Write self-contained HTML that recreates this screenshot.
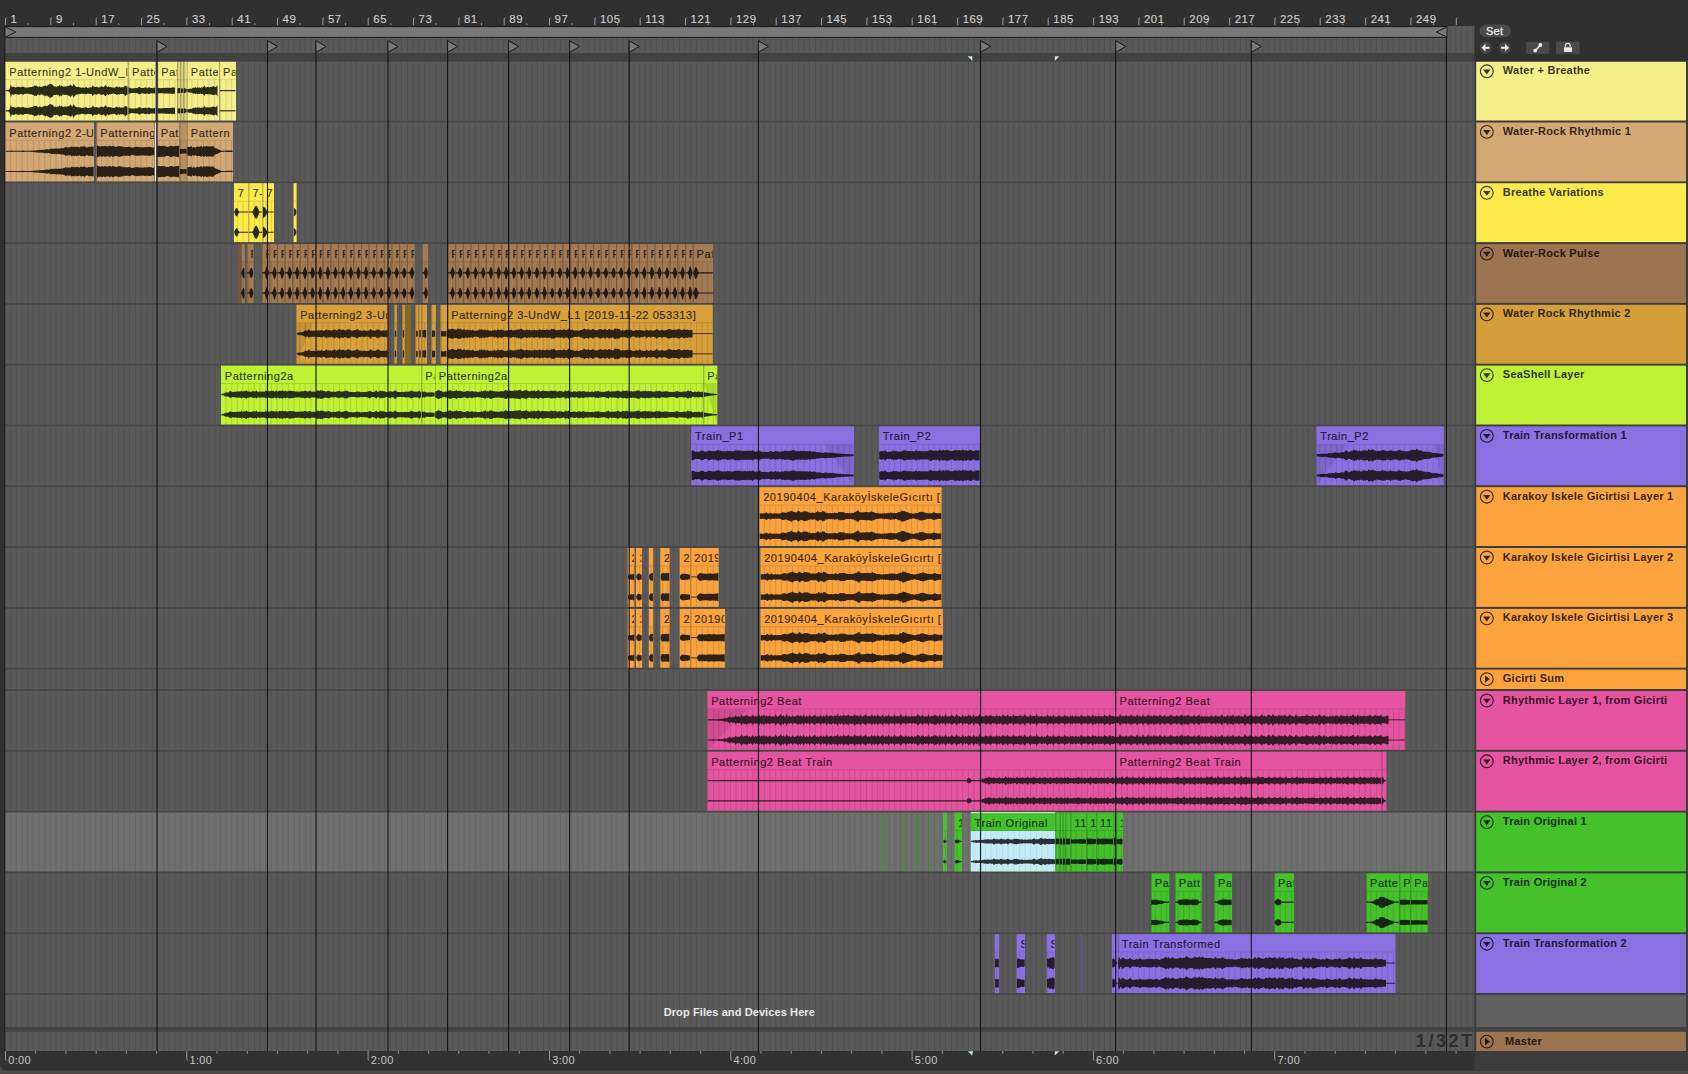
<!DOCTYPE html>
<html><head><meta charset="utf-8"><style>
html,body{margin:0;padding:0;background:#303030;overflow:hidden;width:1688px;height:1074px}
svg{display:block;font-family:"Liberation Sans",sans-serif}
</style></head><body>
<svg width="1688" height="1074" viewBox="0 0 1688 1074">
<rect x="0" y="0" width="1688" height="1074" fill="#303030"/>
<rect x="4" y="26" width="1.5" height="1025" fill="#222"/>
<rect x="5.5" y="38" width="1469.1" height="15" fill="#5a5a5a"/>
<path d="M10.7 38V53M16.3 38V53M22 38V53M27.7 38V53M33.3 38V53M39 38V53M44.7 38V53M50.3 38V53M56 38V53M61.7 38V53M67.3 38V53M73 38V53M78.7 38V53M84.3 38V53M90 38V53M95.7 38V53M101.3 38V53M107 38V53M112.7 38V53M118.3 38V53M124 38V53M129.7 38V53M135.3 38V53M141 38V53M146.7 38V53M152.3 38V53M158 38V53M163.7 38V53M169.3 38V53M175 38V53M180.7 38V53M186.3 38V53M192 38V53M197.7 38V53M203.3 38V53M209 38V53M214.7 38V53M220.3 38V53M226 38V53M231.7 38V53M237.3 38V53M243 38V53M248.7 38V53M254.3 38V53M260 38V53M265.7 38V53M271.3 38V53M277 38V53M282.7 38V53M288.3 38V53M294 38V53M299.7 38V53M305.4 38V53M311 38V53M316.7 38V53M322.4 38V53M328 38V53M333.7 38V53M339.4 38V53M345 38V53M350.7 38V53M356.4 38V53M362 38V53M367.7 38V53M373.4 38V53M379 38V53M384.7 38V53M390.4 38V53M396 38V53M401.7 38V53M407.4 38V53M413 38V53M418.7 38V53M424.4 38V53M430 38V53M435.7 38V53M441.4 38V53M447 38V53M452.7 38V53M458.4 38V53M464 38V53M469.7 38V53M475.4 38V53M481 38V53M486.7 38V53M492.4 38V53M498 38V53M503.7 38V53M509.4 38V53M515 38V53M520.7 38V53M526.4 38V53M532 38V53M537.7 38V53M543.4 38V53M549 38V53M554.7 38V53M560.4 38V53M566 38V53M571.7 38V53M577.4 38V53M583 38V53M588.7 38V53M594.4 38V53M600 38V53M605.7 38V53M611.4 38V53M617 38V53M622.7 38V53M628.4 38V53M634 38V53M639.7 38V53M645.4 38V53M651 38V53M656.7 38V53M662.4 38V53M668 38V53M673.7 38V53M679.4 38V53M685 38V53M690.7 38V53M696.4 38V53M702 38V53M707.7 38V53M713.4 38V53M719 38V53M724.7 38V53M730.4 38V53M736 38V53M741.7 38V53M747.4 38V53M753 38V53M758.7 38V53M764.4 38V53M770 38V53M775.7 38V53M781.4 38V53M787 38V53M792.7 38V53M798.4 38V53M804 38V53M809.7 38V53M815.4 38V53M821 38V53M826.7 38V53M832.4 38V53M838 38V53M843.7 38V53M849.4 38V53M855 38V53M860.7 38V53M866.4 38V53M872.1 38V53M877.7 38V53M883.4 38V53M889.1 38V53M894.7 38V53M900.4 38V53M906.1 38V53M911.7 38V53M917.4 38V53M923.1 38V53M928.7 38V53M934.4 38V53M940.1 38V53M945.7 38V53M951.4 38V53M957.1 38V53M962.7 38V53M968.4 38V53M974.1 38V53M979.7 38V53M985.4 38V53M991.1 38V53M996.7 38V53M1002.4 38V53M1008.1 38V53M1013.7 38V53M1019.4 38V53M1025.1 38V53M1030.7 38V53M1036.4 38V53M1042.1 38V53M1047.7 38V53M1053.4 38V53M1059.1 38V53M1064.7 38V53M1070.4 38V53M1076.1 38V53M1081.7 38V53M1087.4 38V53M1093.1 38V53M1098.7 38V53M1104.4 38V53M1110.1 38V53M1115.7 38V53M1121.4 38V53M1127.1 38V53M1132.7 38V53M1138.4 38V53M1144.1 38V53M1149.7 38V53M1155.4 38V53M1161.1 38V53M1166.7 38V53M1172.4 38V53M1178.1 38V53M1183.7 38V53M1189.4 38V53M1195.1 38V53M1200.7 38V53M1206.4 38V53M1212.1 38V53M1217.7 38V53M1223.4 38V53M1229.1 38V53M1234.7 38V53M1240.4 38V53M1246.1 38V53M1251.7 38V53M1257.4 38V53M1263.1 38V53M1268.7 38V53M1274.4 38V53M1280.1 38V53M1285.7 38V53M1291.4 38V53M1297.1 38V53M1302.7 38V53M1308.4 38V53M1314.1 38V53M1319.7 38V53M1325.4 38V53M1331.1 38V53M1336.7 38V53M1342.4 38V53M1348.1 38V53M1353.7 38V53M1359.4 38V53M1365.1 38V53M1370.7 38V53M1376.4 38V53M1382.1 38V53M1387.7 38V53M1393.4 38V53M1399.1 38V53M1404.7 38V53M1410.4 38V53M1416.1 38V53M1421.8 38V53M1427.4 38V53M1433.1 38V53M1438.8 38V53M1444.4 38V53M1450.1 38V53M1455.8 38V53M1461.4 38V53M1467.1 38V53M1472.8 38V53" stroke="#505050" stroke-width="1" fill="none"/>
<rect x="5.5" y="53" width="1469.1" height="8.8" fill="#424242"/>
<rect x="5.5" y="61.2" width="1469.1" height="970.3" fill="#484848"/>
<rect x="5.5" y="61.8" width="1469.1" height="58.7" fill="#5a5a5a"/>
<path d="M10.7 61.8V120.5M16.3 61.8V120.5M22 61.8V120.5M27.7 61.8V120.5M33.3 61.8V120.5M39 61.8V120.5M44.7 61.8V120.5M50.3 61.8V120.5M56 61.8V120.5M61.7 61.8V120.5M67.3 61.8V120.5M73 61.8V120.5M78.7 61.8V120.5M84.3 61.8V120.5M90 61.8V120.5M95.7 61.8V120.5M101.3 61.8V120.5M107 61.8V120.5M112.7 61.8V120.5M118.3 61.8V120.5M124 61.8V120.5M129.7 61.8V120.5M135.3 61.8V120.5M141 61.8V120.5M146.7 61.8V120.5M152.3 61.8V120.5M158 61.8V120.5M163.7 61.8V120.5M169.3 61.8V120.5M175 61.8V120.5M180.7 61.8V120.5M186.3 61.8V120.5M192 61.8V120.5M197.7 61.8V120.5M203.3 61.8V120.5M209 61.8V120.5M214.7 61.8V120.5M220.3 61.8V120.5M226 61.8V120.5M231.7 61.8V120.5M237.3 61.8V120.5M243 61.8V120.5M248.7 61.8V120.5M254.3 61.8V120.5M260 61.8V120.5M265.7 61.8V120.5M271.3 61.8V120.5M277 61.8V120.5M282.7 61.8V120.5M288.3 61.8V120.5M294 61.8V120.5M299.7 61.8V120.5M305.4 61.8V120.5M311 61.8V120.5M316.7 61.8V120.5M322.4 61.8V120.5M328 61.8V120.5M333.7 61.8V120.5M339.4 61.8V120.5M345 61.8V120.5M350.7 61.8V120.5M356.4 61.8V120.5M362 61.8V120.5M367.7 61.8V120.5M373.4 61.8V120.5M379 61.8V120.5M384.7 61.8V120.5M390.4 61.8V120.5M396 61.8V120.5M401.7 61.8V120.5M407.4 61.8V120.5M413 61.8V120.5M418.7 61.8V120.5M424.4 61.8V120.5M430 61.8V120.5M435.7 61.8V120.5M441.4 61.8V120.5M447 61.8V120.5M452.7 61.8V120.5M458.4 61.8V120.5M464 61.8V120.5M469.7 61.8V120.5M475.4 61.8V120.5M481 61.8V120.5M486.7 61.8V120.5M492.4 61.8V120.5M498 61.8V120.5M503.7 61.8V120.5M509.4 61.8V120.5M515 61.8V120.5M520.7 61.8V120.5M526.4 61.8V120.5M532 61.8V120.5M537.7 61.8V120.5M543.4 61.8V120.5M549 61.8V120.5M554.7 61.8V120.5M560.4 61.8V120.5M566 61.8V120.5M571.7 61.8V120.5M577.4 61.8V120.5M583 61.8V120.5M588.7 61.8V120.5M594.4 61.8V120.5M600 61.8V120.5M605.7 61.8V120.5M611.4 61.8V120.5M617 61.8V120.5M622.7 61.8V120.5M628.4 61.8V120.5M634 61.8V120.5M639.7 61.8V120.5M645.4 61.8V120.5M651 61.8V120.5M656.7 61.8V120.5M662.4 61.8V120.5M668 61.8V120.5M673.7 61.8V120.5M679.4 61.8V120.5M685 61.8V120.5M690.7 61.8V120.5M696.4 61.8V120.5M702 61.8V120.5M707.7 61.8V120.5M713.4 61.8V120.5M719 61.8V120.5M724.7 61.8V120.5M730.4 61.8V120.5M736 61.8V120.5M741.7 61.8V120.5M747.4 61.8V120.5M753 61.8V120.5M758.7 61.8V120.5M764.4 61.8V120.5M770 61.8V120.5M775.7 61.8V120.5M781.4 61.8V120.5M787 61.8V120.5M792.7 61.8V120.5M798.4 61.8V120.5M804 61.8V120.5M809.7 61.8V120.5M815.4 61.8V120.5M821 61.8V120.5M826.7 61.8V120.5M832.4 61.8V120.5M838 61.8V120.5M843.7 61.8V120.5M849.4 61.8V120.5M855 61.8V120.5M860.7 61.8V120.5M866.4 61.8V120.5M872.1 61.8V120.5M877.7 61.8V120.5M883.4 61.8V120.5M889.1 61.8V120.5M894.7 61.8V120.5M900.4 61.8V120.5M906.1 61.8V120.5M911.7 61.8V120.5M917.4 61.8V120.5M923.1 61.8V120.5M928.7 61.8V120.5M934.4 61.8V120.5M940.1 61.8V120.5M945.7 61.8V120.5M951.4 61.8V120.5M957.1 61.8V120.5M962.7 61.8V120.5M968.4 61.8V120.5M974.1 61.8V120.5M979.7 61.8V120.5M985.4 61.8V120.5M991.1 61.8V120.5M996.7 61.8V120.5M1002.4 61.8V120.5M1008.1 61.8V120.5M1013.7 61.8V120.5M1019.4 61.8V120.5M1025.1 61.8V120.5M1030.7 61.8V120.5M1036.4 61.8V120.5M1042.1 61.8V120.5M1047.7 61.8V120.5M1053.4 61.8V120.5M1059.1 61.8V120.5M1064.7 61.8V120.5M1070.4 61.8V120.5M1076.1 61.8V120.5M1081.7 61.8V120.5M1087.4 61.8V120.5M1093.1 61.8V120.5M1098.7 61.8V120.5M1104.4 61.8V120.5M1110.1 61.8V120.5M1115.7 61.8V120.5M1121.4 61.8V120.5M1127.1 61.8V120.5M1132.7 61.8V120.5M1138.4 61.8V120.5M1144.1 61.8V120.5M1149.7 61.8V120.5M1155.4 61.8V120.5M1161.1 61.8V120.5M1166.7 61.8V120.5M1172.4 61.8V120.5M1178.1 61.8V120.5M1183.7 61.8V120.5M1189.4 61.8V120.5M1195.1 61.8V120.5M1200.7 61.8V120.5M1206.4 61.8V120.5M1212.1 61.8V120.5M1217.7 61.8V120.5M1223.4 61.8V120.5M1229.1 61.8V120.5M1234.7 61.8V120.5M1240.4 61.8V120.5M1246.1 61.8V120.5M1251.7 61.8V120.5M1257.4 61.8V120.5M1263.1 61.8V120.5M1268.7 61.8V120.5M1274.4 61.8V120.5M1280.1 61.8V120.5M1285.7 61.8V120.5M1291.4 61.8V120.5M1297.1 61.8V120.5M1302.7 61.8V120.5M1308.4 61.8V120.5M1314.1 61.8V120.5M1319.7 61.8V120.5M1325.4 61.8V120.5M1331.1 61.8V120.5M1336.7 61.8V120.5M1342.4 61.8V120.5M1348.1 61.8V120.5M1353.7 61.8V120.5M1359.4 61.8V120.5M1365.1 61.8V120.5M1370.7 61.8V120.5M1376.4 61.8V120.5M1382.1 61.8V120.5M1387.7 61.8V120.5M1393.4 61.8V120.5M1399.1 61.8V120.5M1404.7 61.8V120.5M1410.4 61.8V120.5M1416.1 61.8V120.5M1421.8 61.8V120.5M1427.4 61.8V120.5M1433.1 61.8V120.5M1438.8 61.8V120.5M1444.4 61.8V120.5M1450.1 61.8V120.5M1455.8 61.8V120.5M1461.4 61.8V120.5M1467.1 61.8V120.5M1472.8 61.8V120.5" stroke="#505050" stroke-width="1" fill="none"/>
<rect x="5.5" y="122.5" width="1469.1" height="58.9" fill="#5a5a5a"/>
<path d="M10.7 122.5V181.3M16.3 122.5V181.3M22 122.5V181.3M27.7 122.5V181.3M33.3 122.5V181.3M39 122.5V181.3M44.7 122.5V181.3M50.3 122.5V181.3M56 122.5V181.3M61.7 122.5V181.3M67.3 122.5V181.3M73 122.5V181.3M78.7 122.5V181.3M84.3 122.5V181.3M90 122.5V181.3M95.7 122.5V181.3M101.3 122.5V181.3M107 122.5V181.3M112.7 122.5V181.3M118.3 122.5V181.3M124 122.5V181.3M129.7 122.5V181.3M135.3 122.5V181.3M141 122.5V181.3M146.7 122.5V181.3M152.3 122.5V181.3M158 122.5V181.3M163.7 122.5V181.3M169.3 122.5V181.3M175 122.5V181.3M180.7 122.5V181.3M186.3 122.5V181.3M192 122.5V181.3M197.7 122.5V181.3M203.3 122.5V181.3M209 122.5V181.3M214.7 122.5V181.3M220.3 122.5V181.3M226 122.5V181.3M231.7 122.5V181.3M237.3 122.5V181.3M243 122.5V181.3M248.7 122.5V181.3M254.3 122.5V181.3M260 122.5V181.3M265.7 122.5V181.3M271.3 122.5V181.3M277 122.5V181.3M282.7 122.5V181.3M288.3 122.5V181.3M294 122.5V181.3M299.7 122.5V181.3M305.4 122.5V181.3M311 122.5V181.3M316.7 122.5V181.3M322.4 122.5V181.3M328 122.5V181.3M333.7 122.5V181.3M339.4 122.5V181.3M345 122.5V181.3M350.7 122.5V181.3M356.4 122.5V181.3M362 122.5V181.3M367.7 122.5V181.3M373.4 122.5V181.3M379 122.5V181.3M384.7 122.5V181.3M390.4 122.5V181.3M396 122.5V181.3M401.7 122.5V181.3M407.4 122.5V181.3M413 122.5V181.3M418.7 122.5V181.3M424.4 122.5V181.3M430 122.5V181.3M435.7 122.5V181.3M441.4 122.5V181.3M447 122.5V181.3M452.7 122.5V181.3M458.4 122.5V181.3M464 122.5V181.3M469.7 122.5V181.3M475.4 122.5V181.3M481 122.5V181.3M486.7 122.5V181.3M492.4 122.5V181.3M498 122.5V181.3M503.7 122.5V181.3M509.4 122.5V181.3M515 122.5V181.3M520.7 122.5V181.3M526.4 122.5V181.3M532 122.5V181.3M537.7 122.5V181.3M543.4 122.5V181.3M549 122.5V181.3M554.7 122.5V181.3M560.4 122.5V181.3M566 122.5V181.3M571.7 122.5V181.3M577.4 122.5V181.3M583 122.5V181.3M588.7 122.5V181.3M594.4 122.5V181.3M600 122.5V181.3M605.7 122.5V181.3M611.4 122.5V181.3M617 122.5V181.3M622.7 122.5V181.3M628.4 122.5V181.3M634 122.5V181.3M639.7 122.5V181.3M645.4 122.5V181.3M651 122.5V181.3M656.7 122.5V181.3M662.4 122.5V181.3M668 122.5V181.3M673.7 122.5V181.3M679.4 122.5V181.3M685 122.5V181.3M690.7 122.5V181.3M696.4 122.5V181.3M702 122.5V181.3M707.7 122.5V181.3M713.4 122.5V181.3M719 122.5V181.3M724.7 122.5V181.3M730.4 122.5V181.3M736 122.5V181.3M741.7 122.5V181.3M747.4 122.5V181.3M753 122.5V181.3M758.7 122.5V181.3M764.4 122.5V181.3M770 122.5V181.3M775.7 122.5V181.3M781.4 122.5V181.3M787 122.5V181.3M792.7 122.5V181.3M798.4 122.5V181.3M804 122.5V181.3M809.7 122.5V181.3M815.4 122.5V181.3M821 122.5V181.3M826.7 122.5V181.3M832.4 122.5V181.3M838 122.5V181.3M843.7 122.5V181.3M849.4 122.5V181.3M855 122.5V181.3M860.7 122.5V181.3M866.4 122.5V181.3M872.1 122.5V181.3M877.7 122.5V181.3M883.4 122.5V181.3M889.1 122.5V181.3M894.7 122.5V181.3M900.4 122.5V181.3M906.1 122.5V181.3M911.7 122.5V181.3M917.4 122.5V181.3M923.1 122.5V181.3M928.7 122.5V181.3M934.4 122.5V181.3M940.1 122.5V181.3M945.7 122.5V181.3M951.4 122.5V181.3M957.1 122.5V181.3M962.7 122.5V181.3M968.4 122.5V181.3M974.1 122.5V181.3M979.7 122.5V181.3M985.4 122.5V181.3M991.1 122.5V181.3M996.7 122.5V181.3M1002.4 122.5V181.3M1008.1 122.5V181.3M1013.7 122.5V181.3M1019.4 122.5V181.3M1025.1 122.5V181.3M1030.7 122.5V181.3M1036.4 122.5V181.3M1042.1 122.5V181.3M1047.7 122.5V181.3M1053.4 122.5V181.3M1059.1 122.5V181.3M1064.7 122.5V181.3M1070.4 122.5V181.3M1076.1 122.5V181.3M1081.7 122.5V181.3M1087.4 122.5V181.3M1093.1 122.5V181.3M1098.7 122.5V181.3M1104.4 122.5V181.3M1110.1 122.5V181.3M1115.7 122.5V181.3M1121.4 122.5V181.3M1127.1 122.5V181.3M1132.7 122.5V181.3M1138.4 122.5V181.3M1144.1 122.5V181.3M1149.7 122.5V181.3M1155.4 122.5V181.3M1161.1 122.5V181.3M1166.7 122.5V181.3M1172.4 122.5V181.3M1178.1 122.5V181.3M1183.7 122.5V181.3M1189.4 122.5V181.3M1195.1 122.5V181.3M1200.7 122.5V181.3M1206.4 122.5V181.3M1212.1 122.5V181.3M1217.7 122.5V181.3M1223.4 122.5V181.3M1229.1 122.5V181.3M1234.7 122.5V181.3M1240.4 122.5V181.3M1246.1 122.5V181.3M1251.7 122.5V181.3M1257.4 122.5V181.3M1263.1 122.5V181.3M1268.7 122.5V181.3M1274.4 122.5V181.3M1280.1 122.5V181.3M1285.7 122.5V181.3M1291.4 122.5V181.3M1297.1 122.5V181.3M1302.7 122.5V181.3M1308.4 122.5V181.3M1314.1 122.5V181.3M1319.7 122.5V181.3M1325.4 122.5V181.3M1331.1 122.5V181.3M1336.7 122.5V181.3M1342.4 122.5V181.3M1348.1 122.5V181.3M1353.7 122.5V181.3M1359.4 122.5V181.3M1365.1 122.5V181.3M1370.7 122.5V181.3M1376.4 122.5V181.3M1382.1 122.5V181.3M1387.7 122.5V181.3M1393.4 122.5V181.3M1399.1 122.5V181.3M1404.7 122.5V181.3M1410.4 122.5V181.3M1416.1 122.5V181.3M1421.8 122.5V181.3M1427.4 122.5V181.3M1433.1 122.5V181.3M1438.8 122.5V181.3M1444.4 122.5V181.3M1450.1 122.5V181.3M1455.8 122.5V181.3M1461.4 122.5V181.3M1467.1 122.5V181.3M1472.8 122.5V181.3" stroke="#505050" stroke-width="1" fill="none"/>
<rect x="5.5" y="183.2" width="1469.1" height="58.9" fill="#5a5a5a"/>
<path d="M10.7 183.2V242.1M16.3 183.2V242.1M22 183.2V242.1M27.7 183.2V242.1M33.3 183.2V242.1M39 183.2V242.1M44.7 183.2V242.1M50.3 183.2V242.1M56 183.2V242.1M61.7 183.2V242.1M67.3 183.2V242.1M73 183.2V242.1M78.7 183.2V242.1M84.3 183.2V242.1M90 183.2V242.1M95.7 183.2V242.1M101.3 183.2V242.1M107 183.2V242.1M112.7 183.2V242.1M118.3 183.2V242.1M124 183.2V242.1M129.7 183.2V242.1M135.3 183.2V242.1M141 183.2V242.1M146.7 183.2V242.1M152.3 183.2V242.1M158 183.2V242.1M163.7 183.2V242.1M169.3 183.2V242.1M175 183.2V242.1M180.7 183.2V242.1M186.3 183.2V242.1M192 183.2V242.1M197.7 183.2V242.1M203.3 183.2V242.1M209 183.2V242.1M214.7 183.2V242.1M220.3 183.2V242.1M226 183.2V242.1M231.7 183.2V242.1M237.3 183.2V242.1M243 183.2V242.1M248.7 183.2V242.1M254.3 183.2V242.1M260 183.2V242.1M265.7 183.2V242.1M271.3 183.2V242.1M277 183.2V242.1M282.7 183.2V242.1M288.3 183.2V242.1M294 183.2V242.1M299.7 183.2V242.1M305.4 183.2V242.1M311 183.2V242.1M316.7 183.2V242.1M322.4 183.2V242.1M328 183.2V242.1M333.7 183.2V242.1M339.4 183.2V242.1M345 183.2V242.1M350.7 183.2V242.1M356.4 183.2V242.1M362 183.2V242.1M367.7 183.2V242.1M373.4 183.2V242.1M379 183.2V242.1M384.7 183.2V242.1M390.4 183.2V242.1M396 183.2V242.1M401.7 183.2V242.1M407.4 183.2V242.1M413 183.2V242.1M418.7 183.2V242.1M424.4 183.2V242.1M430 183.2V242.1M435.7 183.2V242.1M441.4 183.2V242.1M447 183.2V242.1M452.7 183.2V242.1M458.4 183.2V242.1M464 183.2V242.1M469.7 183.2V242.1M475.4 183.2V242.1M481 183.2V242.1M486.7 183.2V242.1M492.4 183.2V242.1M498 183.2V242.1M503.7 183.2V242.1M509.4 183.2V242.1M515 183.2V242.1M520.7 183.2V242.1M526.4 183.2V242.1M532 183.2V242.1M537.7 183.2V242.1M543.4 183.2V242.1M549 183.2V242.1M554.7 183.2V242.1M560.4 183.2V242.1M566 183.2V242.1M571.7 183.2V242.1M577.4 183.2V242.1M583 183.2V242.1M588.7 183.2V242.1M594.4 183.2V242.1M600 183.2V242.1M605.7 183.2V242.1M611.4 183.2V242.1M617 183.2V242.1M622.7 183.2V242.1M628.4 183.2V242.1M634 183.2V242.1M639.7 183.2V242.1M645.4 183.2V242.1M651 183.2V242.1M656.7 183.2V242.1M662.4 183.2V242.1M668 183.2V242.1M673.7 183.2V242.1M679.4 183.2V242.1M685 183.2V242.1M690.7 183.2V242.1M696.4 183.2V242.1M702 183.2V242.1M707.7 183.2V242.1M713.4 183.2V242.1M719 183.2V242.1M724.7 183.2V242.1M730.4 183.2V242.1M736 183.2V242.1M741.7 183.2V242.1M747.4 183.2V242.1M753 183.2V242.1M758.7 183.2V242.1M764.4 183.2V242.1M770 183.2V242.1M775.7 183.2V242.1M781.4 183.2V242.1M787 183.2V242.1M792.7 183.2V242.1M798.4 183.2V242.1M804 183.2V242.1M809.7 183.2V242.1M815.4 183.2V242.1M821 183.2V242.1M826.7 183.2V242.1M832.4 183.2V242.1M838 183.2V242.1M843.7 183.2V242.1M849.4 183.2V242.1M855 183.2V242.1M860.7 183.2V242.1M866.4 183.2V242.1M872.1 183.2V242.1M877.7 183.2V242.1M883.4 183.2V242.1M889.1 183.2V242.1M894.7 183.2V242.1M900.4 183.2V242.1M906.1 183.2V242.1M911.7 183.2V242.1M917.4 183.2V242.1M923.1 183.2V242.1M928.7 183.2V242.1M934.4 183.2V242.1M940.1 183.2V242.1M945.7 183.2V242.1M951.4 183.2V242.1M957.1 183.2V242.1M962.7 183.2V242.1M968.4 183.2V242.1M974.1 183.2V242.1M979.7 183.2V242.1M985.4 183.2V242.1M991.1 183.2V242.1M996.7 183.2V242.1M1002.4 183.2V242.1M1008.1 183.2V242.1M1013.7 183.2V242.1M1019.4 183.2V242.1M1025.1 183.2V242.1M1030.7 183.2V242.1M1036.4 183.2V242.1M1042.1 183.2V242.1M1047.7 183.2V242.1M1053.4 183.2V242.1M1059.1 183.2V242.1M1064.7 183.2V242.1M1070.4 183.2V242.1M1076.1 183.2V242.1M1081.7 183.2V242.1M1087.4 183.2V242.1M1093.1 183.2V242.1M1098.7 183.2V242.1M1104.4 183.2V242.1M1110.1 183.2V242.1M1115.7 183.2V242.1M1121.4 183.2V242.1M1127.1 183.2V242.1M1132.7 183.2V242.1M1138.4 183.2V242.1M1144.1 183.2V242.1M1149.7 183.2V242.1M1155.4 183.2V242.1M1161.1 183.2V242.1M1166.7 183.2V242.1M1172.4 183.2V242.1M1178.1 183.2V242.1M1183.7 183.2V242.1M1189.4 183.2V242.1M1195.1 183.2V242.1M1200.7 183.2V242.1M1206.4 183.2V242.1M1212.1 183.2V242.1M1217.7 183.2V242.1M1223.4 183.2V242.1M1229.1 183.2V242.1M1234.7 183.2V242.1M1240.4 183.2V242.1M1246.1 183.2V242.1M1251.7 183.2V242.1M1257.4 183.2V242.1M1263.1 183.2V242.1M1268.7 183.2V242.1M1274.4 183.2V242.1M1280.1 183.2V242.1M1285.7 183.2V242.1M1291.4 183.2V242.1M1297.1 183.2V242.1M1302.7 183.2V242.1M1308.4 183.2V242.1M1314.1 183.2V242.1M1319.7 183.2V242.1M1325.4 183.2V242.1M1331.1 183.2V242.1M1336.7 183.2V242.1M1342.4 183.2V242.1M1348.1 183.2V242.1M1353.7 183.2V242.1M1359.4 183.2V242.1M1365.1 183.2V242.1M1370.7 183.2V242.1M1376.4 183.2V242.1M1382.1 183.2V242.1M1387.7 183.2V242.1M1393.4 183.2V242.1M1399.1 183.2V242.1M1404.7 183.2V242.1M1410.4 183.2V242.1M1416.1 183.2V242.1M1421.8 183.2V242.1M1427.4 183.2V242.1M1433.1 183.2V242.1M1438.8 183.2V242.1M1444.4 183.2V242.1M1450.1 183.2V242.1M1455.8 183.2V242.1M1461.4 183.2V242.1M1467.1 183.2V242.1M1472.8 183.2V242.1" stroke="#505050" stroke-width="1" fill="none"/>
<rect x="5.5" y="244.1" width="1469.1" height="58.8" fill="#5a5a5a"/>
<path d="M10.7 244.1V302.9M16.3 244.1V302.9M22 244.1V302.9M27.7 244.1V302.9M33.3 244.1V302.9M39 244.1V302.9M44.7 244.1V302.9M50.3 244.1V302.9M56 244.1V302.9M61.7 244.1V302.9M67.3 244.1V302.9M73 244.1V302.9M78.7 244.1V302.9M84.3 244.1V302.9M90 244.1V302.9M95.7 244.1V302.9M101.3 244.1V302.9M107 244.1V302.9M112.7 244.1V302.9M118.3 244.1V302.9M124 244.1V302.9M129.7 244.1V302.9M135.3 244.1V302.9M141 244.1V302.9M146.7 244.1V302.9M152.3 244.1V302.9M158 244.1V302.9M163.7 244.1V302.9M169.3 244.1V302.9M175 244.1V302.9M180.7 244.1V302.9M186.3 244.1V302.9M192 244.1V302.9M197.7 244.1V302.9M203.3 244.1V302.9M209 244.1V302.9M214.7 244.1V302.9M220.3 244.1V302.9M226 244.1V302.9M231.7 244.1V302.9M237.3 244.1V302.9M243 244.1V302.9M248.7 244.1V302.9M254.3 244.1V302.9M260 244.1V302.9M265.7 244.1V302.9M271.3 244.1V302.9M277 244.1V302.9M282.7 244.1V302.9M288.3 244.1V302.9M294 244.1V302.9M299.7 244.1V302.9M305.4 244.1V302.9M311 244.1V302.9M316.7 244.1V302.9M322.4 244.1V302.9M328 244.1V302.9M333.7 244.1V302.9M339.4 244.1V302.9M345 244.1V302.9M350.7 244.1V302.9M356.4 244.1V302.9M362 244.1V302.9M367.7 244.1V302.9M373.4 244.1V302.9M379 244.1V302.9M384.7 244.1V302.9M390.4 244.1V302.9M396 244.1V302.9M401.7 244.1V302.9M407.4 244.1V302.9M413 244.1V302.9M418.7 244.1V302.9M424.4 244.1V302.9M430 244.1V302.9M435.7 244.1V302.9M441.4 244.1V302.9M447 244.1V302.9M452.7 244.1V302.9M458.4 244.1V302.9M464 244.1V302.9M469.7 244.1V302.9M475.4 244.1V302.9M481 244.1V302.9M486.7 244.1V302.9M492.4 244.1V302.9M498 244.1V302.9M503.7 244.1V302.9M509.4 244.1V302.9M515 244.1V302.9M520.7 244.1V302.9M526.4 244.1V302.9M532 244.1V302.9M537.7 244.1V302.9M543.4 244.1V302.9M549 244.1V302.9M554.7 244.1V302.9M560.4 244.1V302.9M566 244.1V302.9M571.7 244.1V302.9M577.4 244.1V302.9M583 244.1V302.9M588.7 244.1V302.9M594.4 244.1V302.9M600 244.1V302.9M605.7 244.1V302.9M611.4 244.1V302.9M617 244.1V302.9M622.7 244.1V302.9M628.4 244.1V302.9M634 244.1V302.9M639.7 244.1V302.9M645.4 244.1V302.9M651 244.1V302.9M656.7 244.1V302.9M662.4 244.1V302.9M668 244.1V302.9M673.7 244.1V302.9M679.4 244.1V302.9M685 244.1V302.9M690.7 244.1V302.9M696.4 244.1V302.9M702 244.1V302.9M707.7 244.1V302.9M713.4 244.1V302.9M719 244.1V302.9M724.7 244.1V302.9M730.4 244.1V302.9M736 244.1V302.9M741.7 244.1V302.9M747.4 244.1V302.9M753 244.1V302.9M758.7 244.1V302.9M764.4 244.1V302.9M770 244.1V302.9M775.7 244.1V302.9M781.4 244.1V302.9M787 244.1V302.9M792.7 244.1V302.9M798.4 244.1V302.9M804 244.1V302.9M809.7 244.1V302.9M815.4 244.1V302.9M821 244.1V302.9M826.7 244.1V302.9M832.4 244.1V302.9M838 244.1V302.9M843.7 244.1V302.9M849.4 244.1V302.9M855 244.1V302.9M860.7 244.1V302.9M866.4 244.1V302.9M872.1 244.1V302.9M877.7 244.1V302.9M883.4 244.1V302.9M889.1 244.1V302.9M894.7 244.1V302.9M900.4 244.1V302.9M906.1 244.1V302.9M911.7 244.1V302.9M917.4 244.1V302.9M923.1 244.1V302.9M928.7 244.1V302.9M934.4 244.1V302.9M940.1 244.1V302.9M945.7 244.1V302.9M951.4 244.1V302.9M957.1 244.1V302.9M962.7 244.1V302.9M968.4 244.1V302.9M974.1 244.1V302.9M979.7 244.1V302.9M985.4 244.1V302.9M991.1 244.1V302.9M996.7 244.1V302.9M1002.4 244.1V302.9M1008.1 244.1V302.9M1013.7 244.1V302.9M1019.4 244.1V302.9M1025.1 244.1V302.9M1030.7 244.1V302.9M1036.4 244.1V302.9M1042.1 244.1V302.9M1047.7 244.1V302.9M1053.4 244.1V302.9M1059.1 244.1V302.9M1064.7 244.1V302.9M1070.4 244.1V302.9M1076.1 244.1V302.9M1081.7 244.1V302.9M1087.4 244.1V302.9M1093.1 244.1V302.9M1098.7 244.1V302.9M1104.4 244.1V302.9M1110.1 244.1V302.9M1115.7 244.1V302.9M1121.4 244.1V302.9M1127.1 244.1V302.9M1132.7 244.1V302.9M1138.4 244.1V302.9M1144.1 244.1V302.9M1149.7 244.1V302.9M1155.4 244.1V302.9M1161.1 244.1V302.9M1166.7 244.1V302.9M1172.4 244.1V302.9M1178.1 244.1V302.9M1183.7 244.1V302.9M1189.4 244.1V302.9M1195.1 244.1V302.9M1200.7 244.1V302.9M1206.4 244.1V302.9M1212.1 244.1V302.9M1217.7 244.1V302.9M1223.4 244.1V302.9M1229.1 244.1V302.9M1234.7 244.1V302.9M1240.4 244.1V302.9M1246.1 244.1V302.9M1251.7 244.1V302.9M1257.4 244.1V302.9M1263.1 244.1V302.9M1268.7 244.1V302.9M1274.4 244.1V302.9M1280.1 244.1V302.9M1285.7 244.1V302.9M1291.4 244.1V302.9M1297.1 244.1V302.9M1302.7 244.1V302.9M1308.4 244.1V302.9M1314.1 244.1V302.9M1319.7 244.1V302.9M1325.4 244.1V302.9M1331.1 244.1V302.9M1336.7 244.1V302.9M1342.4 244.1V302.9M1348.1 244.1V302.9M1353.7 244.1V302.9M1359.4 244.1V302.9M1365.1 244.1V302.9M1370.7 244.1V302.9M1376.4 244.1V302.9M1382.1 244.1V302.9M1387.7 244.1V302.9M1393.4 244.1V302.9M1399.1 244.1V302.9M1404.7 244.1V302.9M1410.4 244.1V302.9M1416.1 244.1V302.9M1421.8 244.1V302.9M1427.4 244.1V302.9M1433.1 244.1V302.9M1438.8 244.1V302.9M1444.4 244.1V302.9M1450.1 244.1V302.9M1455.8 244.1V302.9M1461.4 244.1V302.9M1467.1 244.1V302.9M1472.8 244.1V302.9" stroke="#505050" stroke-width="1" fill="none"/>
<rect x="5.5" y="304.8" width="1469.1" height="58.9" fill="#5a5a5a"/>
<path d="M10.7 304.8V363.7M16.3 304.8V363.7M22 304.8V363.7M27.7 304.8V363.7M33.3 304.8V363.7M39 304.8V363.7M44.7 304.8V363.7M50.3 304.8V363.7M56 304.8V363.7M61.7 304.8V363.7M67.3 304.8V363.7M73 304.8V363.7M78.7 304.8V363.7M84.3 304.8V363.7M90 304.8V363.7M95.7 304.8V363.7M101.3 304.8V363.7M107 304.8V363.7M112.7 304.8V363.7M118.3 304.8V363.7M124 304.8V363.7M129.7 304.8V363.7M135.3 304.8V363.7M141 304.8V363.7M146.7 304.8V363.7M152.3 304.8V363.7M158 304.8V363.7M163.7 304.8V363.7M169.3 304.8V363.7M175 304.8V363.7M180.7 304.8V363.7M186.3 304.8V363.7M192 304.8V363.7M197.7 304.8V363.7M203.3 304.8V363.7M209 304.8V363.7M214.7 304.8V363.7M220.3 304.8V363.7M226 304.8V363.7M231.7 304.8V363.7M237.3 304.8V363.7M243 304.8V363.7M248.7 304.8V363.7M254.3 304.8V363.7M260 304.8V363.7M265.7 304.8V363.7M271.3 304.8V363.7M277 304.8V363.7M282.7 304.8V363.7M288.3 304.8V363.7M294 304.8V363.7M299.7 304.8V363.7M305.4 304.8V363.7M311 304.8V363.7M316.7 304.8V363.7M322.4 304.8V363.7M328 304.8V363.7M333.7 304.8V363.7M339.4 304.8V363.7M345 304.8V363.7M350.7 304.8V363.7M356.4 304.8V363.7M362 304.8V363.7M367.7 304.8V363.7M373.4 304.8V363.7M379 304.8V363.7M384.7 304.8V363.7M390.4 304.8V363.7M396 304.8V363.7M401.7 304.8V363.7M407.4 304.8V363.7M413 304.8V363.7M418.7 304.8V363.7M424.4 304.8V363.7M430 304.8V363.7M435.7 304.8V363.7M441.4 304.8V363.7M447 304.8V363.7M452.7 304.8V363.7M458.4 304.8V363.7M464 304.8V363.7M469.7 304.8V363.7M475.4 304.8V363.7M481 304.8V363.7M486.7 304.8V363.7M492.4 304.8V363.7M498 304.8V363.7M503.7 304.8V363.7M509.4 304.8V363.7M515 304.8V363.7M520.7 304.8V363.7M526.4 304.8V363.7M532 304.8V363.7M537.7 304.8V363.7M543.4 304.8V363.7M549 304.8V363.7M554.7 304.8V363.7M560.4 304.8V363.7M566 304.8V363.7M571.7 304.8V363.7M577.4 304.8V363.7M583 304.8V363.7M588.7 304.8V363.7M594.4 304.8V363.7M600 304.8V363.7M605.7 304.8V363.7M611.4 304.8V363.7M617 304.8V363.7M622.7 304.8V363.7M628.4 304.8V363.7M634 304.8V363.7M639.7 304.8V363.7M645.4 304.8V363.7M651 304.8V363.7M656.7 304.8V363.7M662.4 304.8V363.7M668 304.8V363.7M673.7 304.8V363.7M679.4 304.8V363.7M685 304.8V363.7M690.7 304.8V363.7M696.4 304.8V363.7M702 304.8V363.7M707.7 304.8V363.7M713.4 304.8V363.7M719 304.8V363.7M724.7 304.8V363.7M730.4 304.8V363.7M736 304.8V363.7M741.7 304.8V363.7M747.4 304.8V363.7M753 304.8V363.7M758.7 304.8V363.7M764.4 304.8V363.7M770 304.8V363.7M775.7 304.8V363.7M781.4 304.8V363.7M787 304.8V363.7M792.7 304.8V363.7M798.4 304.8V363.7M804 304.8V363.7M809.7 304.8V363.7M815.4 304.8V363.7M821 304.8V363.7M826.7 304.8V363.7M832.4 304.8V363.7M838 304.8V363.7M843.7 304.8V363.7M849.4 304.8V363.7M855 304.8V363.7M860.7 304.8V363.7M866.4 304.8V363.7M872.1 304.8V363.7M877.7 304.8V363.7M883.4 304.8V363.7M889.1 304.8V363.7M894.7 304.8V363.7M900.4 304.8V363.7M906.1 304.8V363.7M911.7 304.8V363.7M917.4 304.8V363.7M923.1 304.8V363.7M928.7 304.8V363.7M934.4 304.8V363.7M940.1 304.8V363.7M945.7 304.8V363.7M951.4 304.8V363.7M957.1 304.8V363.7M962.7 304.8V363.7M968.4 304.8V363.7M974.1 304.8V363.7M979.7 304.8V363.7M985.4 304.8V363.7M991.1 304.8V363.7M996.7 304.8V363.7M1002.4 304.8V363.7M1008.1 304.8V363.7M1013.7 304.8V363.7M1019.4 304.8V363.7M1025.1 304.8V363.7M1030.7 304.8V363.7M1036.4 304.8V363.7M1042.1 304.8V363.7M1047.7 304.8V363.7M1053.4 304.8V363.7M1059.1 304.8V363.7M1064.7 304.8V363.7M1070.4 304.8V363.7M1076.1 304.8V363.7M1081.7 304.8V363.7M1087.4 304.8V363.7M1093.1 304.8V363.7M1098.7 304.8V363.7M1104.4 304.8V363.7M1110.1 304.8V363.7M1115.7 304.8V363.7M1121.4 304.8V363.7M1127.1 304.8V363.7M1132.7 304.8V363.7M1138.4 304.8V363.7M1144.1 304.8V363.7M1149.7 304.8V363.7M1155.4 304.8V363.7M1161.1 304.8V363.7M1166.7 304.8V363.7M1172.4 304.8V363.7M1178.1 304.8V363.7M1183.7 304.8V363.7M1189.4 304.8V363.7M1195.1 304.8V363.7M1200.7 304.8V363.7M1206.4 304.8V363.7M1212.1 304.8V363.7M1217.7 304.8V363.7M1223.4 304.8V363.7M1229.1 304.8V363.7M1234.7 304.8V363.7M1240.4 304.8V363.7M1246.1 304.8V363.7M1251.7 304.8V363.7M1257.4 304.8V363.7M1263.1 304.8V363.7M1268.7 304.8V363.7M1274.4 304.8V363.7M1280.1 304.8V363.7M1285.7 304.8V363.7M1291.4 304.8V363.7M1297.1 304.8V363.7M1302.7 304.8V363.7M1308.4 304.8V363.7M1314.1 304.8V363.7M1319.7 304.8V363.7M1325.4 304.8V363.7M1331.1 304.8V363.7M1336.7 304.8V363.7M1342.4 304.8V363.7M1348.1 304.8V363.7M1353.7 304.8V363.7M1359.4 304.8V363.7M1365.1 304.8V363.7M1370.7 304.8V363.7M1376.4 304.8V363.7M1382.1 304.8V363.7M1387.7 304.8V363.7M1393.4 304.8V363.7M1399.1 304.8V363.7M1404.7 304.8V363.7M1410.4 304.8V363.7M1416.1 304.8V363.7M1421.8 304.8V363.7M1427.4 304.8V363.7M1433.1 304.8V363.7M1438.8 304.8V363.7M1444.4 304.8V363.7M1450.1 304.8V363.7M1455.8 304.8V363.7M1461.4 304.8V363.7M1467.1 304.8V363.7M1472.8 304.8V363.7" stroke="#505050" stroke-width="1" fill="none"/>
<rect x="5.5" y="365.6" width="1469.1" height="58.9" fill="#5a5a5a"/>
<path d="M10.7 365.6V424.5M16.3 365.6V424.5M22 365.6V424.5M27.7 365.6V424.5M33.3 365.6V424.5M39 365.6V424.5M44.7 365.6V424.5M50.3 365.6V424.5M56 365.6V424.5M61.7 365.6V424.5M67.3 365.6V424.5M73 365.6V424.5M78.7 365.6V424.5M84.3 365.6V424.5M90 365.6V424.5M95.7 365.6V424.5M101.3 365.6V424.5M107 365.6V424.5M112.7 365.6V424.5M118.3 365.6V424.5M124 365.6V424.5M129.7 365.6V424.5M135.3 365.6V424.5M141 365.6V424.5M146.7 365.6V424.5M152.3 365.6V424.5M158 365.6V424.5M163.7 365.6V424.5M169.3 365.6V424.5M175 365.6V424.5M180.7 365.6V424.5M186.3 365.6V424.5M192 365.6V424.5M197.7 365.6V424.5M203.3 365.6V424.5M209 365.6V424.5M214.7 365.6V424.5M220.3 365.6V424.5M226 365.6V424.5M231.7 365.6V424.5M237.3 365.6V424.5M243 365.6V424.5M248.7 365.6V424.5M254.3 365.6V424.5M260 365.6V424.5M265.7 365.6V424.5M271.3 365.6V424.5M277 365.6V424.5M282.7 365.6V424.5M288.3 365.6V424.5M294 365.6V424.5M299.7 365.6V424.5M305.4 365.6V424.5M311 365.6V424.5M316.7 365.6V424.5M322.4 365.6V424.5M328 365.6V424.5M333.7 365.6V424.5M339.4 365.6V424.5M345 365.6V424.5M350.7 365.6V424.5M356.4 365.6V424.5M362 365.6V424.5M367.7 365.6V424.5M373.4 365.6V424.5M379 365.6V424.5M384.7 365.6V424.5M390.4 365.6V424.5M396 365.6V424.5M401.7 365.6V424.5M407.4 365.6V424.5M413 365.6V424.5M418.7 365.6V424.5M424.4 365.6V424.5M430 365.6V424.5M435.7 365.6V424.5M441.4 365.6V424.5M447 365.6V424.5M452.7 365.6V424.5M458.4 365.6V424.5M464 365.6V424.5M469.7 365.6V424.5M475.4 365.6V424.5M481 365.6V424.5M486.7 365.6V424.5M492.4 365.6V424.5M498 365.6V424.5M503.7 365.6V424.5M509.4 365.6V424.5M515 365.6V424.5M520.7 365.6V424.5M526.4 365.6V424.5M532 365.6V424.5M537.7 365.6V424.5M543.4 365.6V424.5M549 365.6V424.5M554.7 365.6V424.5M560.4 365.6V424.5M566 365.6V424.5M571.7 365.6V424.5M577.4 365.6V424.5M583 365.6V424.5M588.7 365.6V424.5M594.4 365.6V424.5M600 365.6V424.5M605.7 365.6V424.5M611.4 365.6V424.5M617 365.6V424.5M622.7 365.6V424.5M628.4 365.6V424.5M634 365.6V424.5M639.7 365.6V424.5M645.4 365.6V424.5M651 365.6V424.5M656.7 365.6V424.5M662.4 365.6V424.5M668 365.6V424.5M673.7 365.6V424.5M679.4 365.6V424.5M685 365.6V424.5M690.7 365.6V424.5M696.4 365.6V424.5M702 365.6V424.5M707.7 365.6V424.5M713.4 365.6V424.5M719 365.6V424.5M724.7 365.6V424.5M730.4 365.6V424.5M736 365.6V424.5M741.7 365.6V424.5M747.4 365.6V424.5M753 365.6V424.5M758.7 365.6V424.5M764.4 365.6V424.5M770 365.6V424.5M775.7 365.6V424.5M781.4 365.6V424.5M787 365.6V424.5M792.7 365.6V424.5M798.4 365.6V424.5M804 365.6V424.5M809.7 365.6V424.5M815.4 365.6V424.5M821 365.6V424.5M826.7 365.6V424.5M832.4 365.6V424.5M838 365.6V424.5M843.7 365.6V424.5M849.4 365.6V424.5M855 365.6V424.5M860.7 365.6V424.5M866.4 365.6V424.5M872.1 365.6V424.5M877.7 365.6V424.5M883.4 365.6V424.5M889.1 365.6V424.5M894.7 365.6V424.5M900.4 365.6V424.5M906.1 365.6V424.5M911.7 365.6V424.5M917.4 365.6V424.5M923.1 365.6V424.5M928.7 365.6V424.5M934.4 365.6V424.5M940.1 365.6V424.5M945.7 365.6V424.5M951.4 365.6V424.5M957.1 365.6V424.5M962.7 365.6V424.5M968.4 365.6V424.5M974.1 365.6V424.5M979.7 365.6V424.5M985.4 365.6V424.5M991.1 365.6V424.5M996.7 365.6V424.5M1002.4 365.6V424.5M1008.1 365.6V424.5M1013.7 365.6V424.5M1019.4 365.6V424.5M1025.1 365.6V424.5M1030.7 365.6V424.5M1036.4 365.6V424.5M1042.1 365.6V424.5M1047.7 365.6V424.5M1053.4 365.6V424.5M1059.1 365.6V424.5M1064.7 365.6V424.5M1070.4 365.6V424.5M1076.1 365.6V424.5M1081.7 365.6V424.5M1087.4 365.6V424.5M1093.1 365.6V424.5M1098.7 365.6V424.5M1104.4 365.6V424.5M1110.1 365.6V424.5M1115.7 365.6V424.5M1121.4 365.6V424.5M1127.1 365.6V424.5M1132.7 365.6V424.5M1138.4 365.6V424.5M1144.1 365.6V424.5M1149.7 365.6V424.5M1155.4 365.6V424.5M1161.1 365.6V424.5M1166.7 365.6V424.5M1172.4 365.6V424.5M1178.1 365.6V424.5M1183.7 365.6V424.5M1189.4 365.6V424.5M1195.1 365.6V424.5M1200.7 365.6V424.5M1206.4 365.6V424.5M1212.1 365.6V424.5M1217.7 365.6V424.5M1223.4 365.6V424.5M1229.1 365.6V424.5M1234.7 365.6V424.5M1240.4 365.6V424.5M1246.1 365.6V424.5M1251.7 365.6V424.5M1257.4 365.6V424.5M1263.1 365.6V424.5M1268.7 365.6V424.5M1274.4 365.6V424.5M1280.1 365.6V424.5M1285.7 365.6V424.5M1291.4 365.6V424.5M1297.1 365.6V424.5M1302.7 365.6V424.5M1308.4 365.6V424.5M1314.1 365.6V424.5M1319.7 365.6V424.5M1325.4 365.6V424.5M1331.1 365.6V424.5M1336.7 365.6V424.5M1342.4 365.6V424.5M1348.1 365.6V424.5M1353.7 365.6V424.5M1359.4 365.6V424.5M1365.1 365.6V424.5M1370.7 365.6V424.5M1376.4 365.6V424.5M1382.1 365.6V424.5M1387.7 365.6V424.5M1393.4 365.6V424.5M1399.1 365.6V424.5M1404.7 365.6V424.5M1410.4 365.6V424.5M1416.1 365.6V424.5M1421.8 365.6V424.5M1427.4 365.6V424.5M1433.1 365.6V424.5M1438.8 365.6V424.5M1444.4 365.6V424.5M1450.1 365.6V424.5M1455.8 365.6V424.5M1461.4 365.6V424.5M1467.1 365.6V424.5M1472.8 365.6V424.5" stroke="#505050" stroke-width="1" fill="none"/>
<rect x="5.5" y="426.4" width="1469.1" height="58.8" fill="#5a5a5a"/>
<path d="M10.7 426.4V485.3M16.3 426.4V485.3M22 426.4V485.3M27.7 426.4V485.3M33.3 426.4V485.3M39 426.4V485.3M44.7 426.4V485.3M50.3 426.4V485.3M56 426.4V485.3M61.7 426.4V485.3M67.3 426.4V485.3M73 426.4V485.3M78.7 426.4V485.3M84.3 426.4V485.3M90 426.4V485.3M95.7 426.4V485.3M101.3 426.4V485.3M107 426.4V485.3M112.7 426.4V485.3M118.3 426.4V485.3M124 426.4V485.3M129.7 426.4V485.3M135.3 426.4V485.3M141 426.4V485.3M146.7 426.4V485.3M152.3 426.4V485.3M158 426.4V485.3M163.7 426.4V485.3M169.3 426.4V485.3M175 426.4V485.3M180.7 426.4V485.3M186.3 426.4V485.3M192 426.4V485.3M197.7 426.4V485.3M203.3 426.4V485.3M209 426.4V485.3M214.7 426.4V485.3M220.3 426.4V485.3M226 426.4V485.3M231.7 426.4V485.3M237.3 426.4V485.3M243 426.4V485.3M248.7 426.4V485.3M254.3 426.4V485.3M260 426.4V485.3M265.7 426.4V485.3M271.3 426.4V485.3M277 426.4V485.3M282.7 426.4V485.3M288.3 426.4V485.3M294 426.4V485.3M299.7 426.4V485.3M305.4 426.4V485.3M311 426.4V485.3M316.7 426.4V485.3M322.4 426.4V485.3M328 426.4V485.3M333.7 426.4V485.3M339.4 426.4V485.3M345 426.4V485.3M350.7 426.4V485.3M356.4 426.4V485.3M362 426.4V485.3M367.7 426.4V485.3M373.4 426.4V485.3M379 426.4V485.3M384.7 426.4V485.3M390.4 426.4V485.3M396 426.4V485.3M401.7 426.4V485.3M407.4 426.4V485.3M413 426.4V485.3M418.7 426.4V485.3M424.4 426.4V485.3M430 426.4V485.3M435.7 426.4V485.3M441.4 426.4V485.3M447 426.4V485.3M452.7 426.4V485.3M458.4 426.4V485.3M464 426.4V485.3M469.7 426.4V485.3M475.4 426.4V485.3M481 426.4V485.3M486.7 426.4V485.3M492.4 426.4V485.3M498 426.4V485.3M503.7 426.4V485.3M509.4 426.4V485.3M515 426.4V485.3M520.7 426.4V485.3M526.4 426.4V485.3M532 426.4V485.3M537.7 426.4V485.3M543.4 426.4V485.3M549 426.4V485.3M554.7 426.4V485.3M560.4 426.4V485.3M566 426.4V485.3M571.7 426.4V485.3M577.4 426.4V485.3M583 426.4V485.3M588.7 426.4V485.3M594.4 426.4V485.3M600 426.4V485.3M605.7 426.4V485.3M611.4 426.4V485.3M617 426.4V485.3M622.7 426.4V485.3M628.4 426.4V485.3M634 426.4V485.3M639.7 426.4V485.3M645.4 426.4V485.3M651 426.4V485.3M656.7 426.4V485.3M662.4 426.4V485.3M668 426.4V485.3M673.7 426.4V485.3M679.4 426.4V485.3M685 426.4V485.3M690.7 426.4V485.3M696.4 426.4V485.3M702 426.4V485.3M707.7 426.4V485.3M713.4 426.4V485.3M719 426.4V485.3M724.7 426.4V485.3M730.4 426.4V485.3M736 426.4V485.3M741.7 426.4V485.3M747.4 426.4V485.3M753 426.4V485.3M758.7 426.4V485.3M764.4 426.4V485.3M770 426.4V485.3M775.7 426.4V485.3M781.4 426.4V485.3M787 426.4V485.3M792.7 426.4V485.3M798.4 426.4V485.3M804 426.4V485.3M809.7 426.4V485.3M815.4 426.4V485.3M821 426.4V485.3M826.7 426.4V485.3M832.4 426.4V485.3M838 426.4V485.3M843.7 426.4V485.3M849.4 426.4V485.3M855 426.4V485.3M860.7 426.4V485.3M866.4 426.4V485.3M872.1 426.4V485.3M877.7 426.4V485.3M883.4 426.4V485.3M889.1 426.4V485.3M894.7 426.4V485.3M900.4 426.4V485.3M906.1 426.4V485.3M911.7 426.4V485.3M917.4 426.4V485.3M923.1 426.4V485.3M928.7 426.4V485.3M934.4 426.4V485.3M940.1 426.4V485.3M945.7 426.4V485.3M951.4 426.4V485.3M957.1 426.4V485.3M962.7 426.4V485.3M968.4 426.4V485.3M974.1 426.4V485.3M979.7 426.4V485.3M985.4 426.4V485.3M991.1 426.4V485.3M996.7 426.4V485.3M1002.4 426.4V485.3M1008.1 426.4V485.3M1013.7 426.4V485.3M1019.4 426.4V485.3M1025.1 426.4V485.3M1030.7 426.4V485.3M1036.4 426.4V485.3M1042.1 426.4V485.3M1047.7 426.4V485.3M1053.4 426.4V485.3M1059.1 426.4V485.3M1064.7 426.4V485.3M1070.4 426.4V485.3M1076.1 426.4V485.3M1081.7 426.4V485.3M1087.4 426.4V485.3M1093.1 426.4V485.3M1098.7 426.4V485.3M1104.4 426.4V485.3M1110.1 426.4V485.3M1115.7 426.4V485.3M1121.4 426.4V485.3M1127.1 426.4V485.3M1132.7 426.4V485.3M1138.4 426.4V485.3M1144.1 426.4V485.3M1149.7 426.4V485.3M1155.4 426.4V485.3M1161.1 426.4V485.3M1166.7 426.4V485.3M1172.4 426.4V485.3M1178.1 426.4V485.3M1183.7 426.4V485.3M1189.4 426.4V485.3M1195.1 426.4V485.3M1200.7 426.4V485.3M1206.4 426.4V485.3M1212.1 426.4V485.3M1217.7 426.4V485.3M1223.4 426.4V485.3M1229.1 426.4V485.3M1234.7 426.4V485.3M1240.4 426.4V485.3M1246.1 426.4V485.3M1251.7 426.4V485.3M1257.4 426.4V485.3M1263.1 426.4V485.3M1268.7 426.4V485.3M1274.4 426.4V485.3M1280.1 426.4V485.3M1285.7 426.4V485.3M1291.4 426.4V485.3M1297.1 426.4V485.3M1302.7 426.4V485.3M1308.4 426.4V485.3M1314.1 426.4V485.3M1319.7 426.4V485.3M1325.4 426.4V485.3M1331.1 426.4V485.3M1336.7 426.4V485.3M1342.4 426.4V485.3M1348.1 426.4V485.3M1353.7 426.4V485.3M1359.4 426.4V485.3M1365.1 426.4V485.3M1370.7 426.4V485.3M1376.4 426.4V485.3M1382.1 426.4V485.3M1387.7 426.4V485.3M1393.4 426.4V485.3M1399.1 426.4V485.3M1404.7 426.4V485.3M1410.4 426.4V485.3M1416.1 426.4V485.3M1421.8 426.4V485.3M1427.4 426.4V485.3M1433.1 426.4V485.3M1438.8 426.4V485.3M1444.4 426.4V485.3M1450.1 426.4V485.3M1455.8 426.4V485.3M1461.4 426.4V485.3M1467.1 426.4V485.3M1472.8 426.4V485.3" stroke="#505050" stroke-width="1" fill="none"/>
<rect x="5.5" y="487.2" width="1469.1" height="58.8" fill="#5a5a5a"/>
<path d="M10.7 487.2V546.1M16.3 487.2V546.1M22 487.2V546.1M27.7 487.2V546.1M33.3 487.2V546.1M39 487.2V546.1M44.7 487.2V546.1M50.3 487.2V546.1M56 487.2V546.1M61.7 487.2V546.1M67.3 487.2V546.1M73 487.2V546.1M78.7 487.2V546.1M84.3 487.2V546.1M90 487.2V546.1M95.7 487.2V546.1M101.3 487.2V546.1M107 487.2V546.1M112.7 487.2V546.1M118.3 487.2V546.1M124 487.2V546.1M129.7 487.2V546.1M135.3 487.2V546.1M141 487.2V546.1M146.7 487.2V546.1M152.3 487.2V546.1M158 487.2V546.1M163.7 487.2V546.1M169.3 487.2V546.1M175 487.2V546.1M180.7 487.2V546.1M186.3 487.2V546.1M192 487.2V546.1M197.7 487.2V546.1M203.3 487.2V546.1M209 487.2V546.1M214.7 487.2V546.1M220.3 487.2V546.1M226 487.2V546.1M231.7 487.2V546.1M237.3 487.2V546.1M243 487.2V546.1M248.7 487.2V546.1M254.3 487.2V546.1M260 487.2V546.1M265.7 487.2V546.1M271.3 487.2V546.1M277 487.2V546.1M282.7 487.2V546.1M288.3 487.2V546.1M294 487.2V546.1M299.7 487.2V546.1M305.4 487.2V546.1M311 487.2V546.1M316.7 487.2V546.1M322.4 487.2V546.1M328 487.2V546.1M333.7 487.2V546.1M339.4 487.2V546.1M345 487.2V546.1M350.7 487.2V546.1M356.4 487.2V546.1M362 487.2V546.1M367.7 487.2V546.1M373.4 487.2V546.1M379 487.2V546.1M384.7 487.2V546.1M390.4 487.2V546.1M396 487.2V546.1M401.7 487.2V546.1M407.4 487.2V546.1M413 487.2V546.1M418.7 487.2V546.1M424.4 487.2V546.1M430 487.2V546.1M435.7 487.2V546.1M441.4 487.2V546.1M447 487.2V546.1M452.7 487.2V546.1M458.4 487.2V546.1M464 487.2V546.1M469.7 487.2V546.1M475.4 487.2V546.1M481 487.2V546.1M486.7 487.2V546.1M492.4 487.2V546.1M498 487.2V546.1M503.7 487.2V546.1M509.4 487.2V546.1M515 487.2V546.1M520.7 487.2V546.1M526.4 487.2V546.1M532 487.2V546.1M537.7 487.2V546.1M543.4 487.2V546.1M549 487.2V546.1M554.7 487.2V546.1M560.4 487.2V546.1M566 487.2V546.1M571.7 487.2V546.1M577.4 487.2V546.1M583 487.2V546.1M588.7 487.2V546.1M594.4 487.2V546.1M600 487.2V546.1M605.7 487.2V546.1M611.4 487.2V546.1M617 487.2V546.1M622.7 487.2V546.1M628.4 487.2V546.1M634 487.2V546.1M639.7 487.2V546.1M645.4 487.2V546.1M651 487.2V546.1M656.7 487.2V546.1M662.4 487.2V546.1M668 487.2V546.1M673.7 487.2V546.1M679.4 487.2V546.1M685 487.2V546.1M690.7 487.2V546.1M696.4 487.2V546.1M702 487.2V546.1M707.7 487.2V546.1M713.4 487.2V546.1M719 487.2V546.1M724.7 487.2V546.1M730.4 487.2V546.1M736 487.2V546.1M741.7 487.2V546.1M747.4 487.2V546.1M753 487.2V546.1M758.7 487.2V546.1M764.4 487.2V546.1M770 487.2V546.1M775.7 487.2V546.1M781.4 487.2V546.1M787 487.2V546.1M792.7 487.2V546.1M798.4 487.2V546.1M804 487.2V546.1M809.7 487.2V546.1M815.4 487.2V546.1M821 487.2V546.1M826.7 487.2V546.1M832.4 487.2V546.1M838 487.2V546.1M843.7 487.2V546.1M849.4 487.2V546.1M855 487.2V546.1M860.7 487.2V546.1M866.4 487.2V546.1M872.1 487.2V546.1M877.7 487.2V546.1M883.4 487.2V546.1M889.1 487.2V546.1M894.7 487.2V546.1M900.4 487.2V546.1M906.1 487.2V546.1M911.7 487.2V546.1M917.4 487.2V546.1M923.1 487.2V546.1M928.7 487.2V546.1M934.4 487.2V546.1M940.1 487.2V546.1M945.7 487.2V546.1M951.4 487.2V546.1M957.1 487.2V546.1M962.7 487.2V546.1M968.4 487.2V546.1M974.1 487.2V546.1M979.7 487.2V546.1M985.4 487.2V546.1M991.1 487.2V546.1M996.7 487.2V546.1M1002.4 487.2V546.1M1008.1 487.2V546.1M1013.7 487.2V546.1M1019.4 487.2V546.1M1025.1 487.2V546.1M1030.7 487.2V546.1M1036.4 487.2V546.1M1042.1 487.2V546.1M1047.7 487.2V546.1M1053.4 487.2V546.1M1059.1 487.2V546.1M1064.7 487.2V546.1M1070.4 487.2V546.1M1076.1 487.2V546.1M1081.7 487.2V546.1M1087.4 487.2V546.1M1093.1 487.2V546.1M1098.7 487.2V546.1M1104.4 487.2V546.1M1110.1 487.2V546.1M1115.7 487.2V546.1M1121.4 487.2V546.1M1127.1 487.2V546.1M1132.7 487.2V546.1M1138.4 487.2V546.1M1144.1 487.2V546.1M1149.7 487.2V546.1M1155.4 487.2V546.1M1161.1 487.2V546.1M1166.7 487.2V546.1M1172.4 487.2V546.1M1178.1 487.2V546.1M1183.7 487.2V546.1M1189.4 487.2V546.1M1195.1 487.2V546.1M1200.7 487.2V546.1M1206.4 487.2V546.1M1212.1 487.2V546.1M1217.7 487.2V546.1M1223.4 487.2V546.1M1229.1 487.2V546.1M1234.7 487.2V546.1M1240.4 487.2V546.1M1246.1 487.2V546.1M1251.7 487.2V546.1M1257.4 487.2V546.1M1263.1 487.2V546.1M1268.7 487.2V546.1M1274.4 487.2V546.1M1280.1 487.2V546.1M1285.7 487.2V546.1M1291.4 487.2V546.1M1297.1 487.2V546.1M1302.7 487.2V546.1M1308.4 487.2V546.1M1314.1 487.2V546.1M1319.7 487.2V546.1M1325.4 487.2V546.1M1331.1 487.2V546.1M1336.7 487.2V546.1M1342.4 487.2V546.1M1348.1 487.2V546.1M1353.7 487.2V546.1M1359.4 487.2V546.1M1365.1 487.2V546.1M1370.7 487.2V546.1M1376.4 487.2V546.1M1382.1 487.2V546.1M1387.7 487.2V546.1M1393.4 487.2V546.1M1399.1 487.2V546.1M1404.7 487.2V546.1M1410.4 487.2V546.1M1416.1 487.2V546.1M1421.8 487.2V546.1M1427.4 487.2V546.1M1433.1 487.2V546.1M1438.8 487.2V546.1M1444.4 487.2V546.1M1450.1 487.2V546.1M1455.8 487.2V546.1M1461.4 487.2V546.1M1467.1 487.2V546.1M1472.8 487.2V546.1" stroke="#505050" stroke-width="1" fill="none"/>
<rect x="5.5" y="548" width="1469.1" height="58.9" fill="#5a5a5a"/>
<path d="M10.7 548V606.9M16.3 548V606.9M22 548V606.9M27.7 548V606.9M33.3 548V606.9M39 548V606.9M44.7 548V606.9M50.3 548V606.9M56 548V606.9M61.7 548V606.9M67.3 548V606.9M73 548V606.9M78.7 548V606.9M84.3 548V606.9M90 548V606.9M95.7 548V606.9M101.3 548V606.9M107 548V606.9M112.7 548V606.9M118.3 548V606.9M124 548V606.9M129.7 548V606.9M135.3 548V606.9M141 548V606.9M146.7 548V606.9M152.3 548V606.9M158 548V606.9M163.7 548V606.9M169.3 548V606.9M175 548V606.9M180.7 548V606.9M186.3 548V606.9M192 548V606.9M197.7 548V606.9M203.3 548V606.9M209 548V606.9M214.7 548V606.9M220.3 548V606.9M226 548V606.9M231.7 548V606.9M237.3 548V606.9M243 548V606.9M248.7 548V606.9M254.3 548V606.9M260 548V606.9M265.7 548V606.9M271.3 548V606.9M277 548V606.9M282.7 548V606.9M288.3 548V606.9M294 548V606.9M299.7 548V606.9M305.4 548V606.9M311 548V606.9M316.7 548V606.9M322.4 548V606.9M328 548V606.9M333.7 548V606.9M339.4 548V606.9M345 548V606.9M350.7 548V606.9M356.4 548V606.9M362 548V606.9M367.7 548V606.9M373.4 548V606.9M379 548V606.9M384.7 548V606.9M390.4 548V606.9M396 548V606.9M401.7 548V606.9M407.4 548V606.9M413 548V606.9M418.7 548V606.9M424.4 548V606.9M430 548V606.9M435.7 548V606.9M441.4 548V606.9M447 548V606.9M452.7 548V606.9M458.4 548V606.9M464 548V606.9M469.7 548V606.9M475.4 548V606.9M481 548V606.9M486.7 548V606.9M492.4 548V606.9M498 548V606.9M503.7 548V606.9M509.4 548V606.9M515 548V606.9M520.7 548V606.9M526.4 548V606.9M532 548V606.9M537.7 548V606.9M543.4 548V606.9M549 548V606.9M554.7 548V606.9M560.4 548V606.9M566 548V606.9M571.7 548V606.9M577.4 548V606.9M583 548V606.9M588.7 548V606.9M594.4 548V606.9M600 548V606.9M605.7 548V606.9M611.4 548V606.9M617 548V606.9M622.7 548V606.9M628.4 548V606.9M634 548V606.9M639.7 548V606.9M645.4 548V606.9M651 548V606.9M656.7 548V606.9M662.4 548V606.9M668 548V606.9M673.7 548V606.9M679.4 548V606.9M685 548V606.9M690.7 548V606.9M696.4 548V606.9M702 548V606.9M707.7 548V606.9M713.4 548V606.9M719 548V606.9M724.7 548V606.9M730.4 548V606.9M736 548V606.9M741.7 548V606.9M747.4 548V606.9M753 548V606.9M758.7 548V606.9M764.4 548V606.9M770 548V606.9M775.7 548V606.9M781.4 548V606.9M787 548V606.9M792.7 548V606.9M798.4 548V606.9M804 548V606.9M809.7 548V606.9M815.4 548V606.9M821 548V606.9M826.7 548V606.9M832.4 548V606.9M838 548V606.9M843.7 548V606.9M849.4 548V606.9M855 548V606.9M860.7 548V606.9M866.4 548V606.9M872.1 548V606.9M877.7 548V606.9M883.4 548V606.9M889.1 548V606.9M894.7 548V606.9M900.4 548V606.9M906.1 548V606.9M911.7 548V606.9M917.4 548V606.9M923.1 548V606.9M928.7 548V606.9M934.4 548V606.9M940.1 548V606.9M945.7 548V606.9M951.4 548V606.9M957.1 548V606.9M962.7 548V606.9M968.4 548V606.9M974.1 548V606.9M979.7 548V606.9M985.4 548V606.9M991.1 548V606.9M996.7 548V606.9M1002.4 548V606.9M1008.1 548V606.9M1013.7 548V606.9M1019.4 548V606.9M1025.1 548V606.9M1030.7 548V606.9M1036.4 548V606.9M1042.1 548V606.9M1047.7 548V606.9M1053.4 548V606.9M1059.1 548V606.9M1064.7 548V606.9M1070.4 548V606.9M1076.1 548V606.9M1081.7 548V606.9M1087.4 548V606.9M1093.1 548V606.9M1098.7 548V606.9M1104.4 548V606.9M1110.1 548V606.9M1115.7 548V606.9M1121.4 548V606.9M1127.1 548V606.9M1132.7 548V606.9M1138.4 548V606.9M1144.1 548V606.9M1149.7 548V606.9M1155.4 548V606.9M1161.1 548V606.9M1166.7 548V606.9M1172.4 548V606.9M1178.1 548V606.9M1183.7 548V606.9M1189.4 548V606.9M1195.1 548V606.9M1200.7 548V606.9M1206.4 548V606.9M1212.1 548V606.9M1217.7 548V606.9M1223.4 548V606.9M1229.1 548V606.9M1234.7 548V606.9M1240.4 548V606.9M1246.1 548V606.9M1251.7 548V606.9M1257.4 548V606.9M1263.1 548V606.9M1268.7 548V606.9M1274.4 548V606.9M1280.1 548V606.9M1285.7 548V606.9M1291.4 548V606.9M1297.1 548V606.9M1302.7 548V606.9M1308.4 548V606.9M1314.1 548V606.9M1319.7 548V606.9M1325.4 548V606.9M1331.1 548V606.9M1336.7 548V606.9M1342.4 548V606.9M1348.1 548V606.9M1353.7 548V606.9M1359.4 548V606.9M1365.1 548V606.9M1370.7 548V606.9M1376.4 548V606.9M1382.1 548V606.9M1387.7 548V606.9M1393.4 548V606.9M1399.1 548V606.9M1404.7 548V606.9M1410.4 548V606.9M1416.1 548V606.9M1421.8 548V606.9M1427.4 548V606.9M1433.1 548V606.9M1438.8 548V606.9M1444.4 548V606.9M1450.1 548V606.9M1455.8 548V606.9M1461.4 548V606.9M1467.1 548V606.9M1472.8 548V606.9" stroke="#505050" stroke-width="1" fill="none"/>
<rect x="5.5" y="608.9" width="1469.1" height="58.8" fill="#5a5a5a"/>
<path d="M10.7 608.9V667.7M16.3 608.9V667.7M22 608.9V667.7M27.7 608.9V667.7M33.3 608.9V667.7M39 608.9V667.7M44.7 608.9V667.7M50.3 608.9V667.7M56 608.9V667.7M61.7 608.9V667.7M67.3 608.9V667.7M73 608.9V667.7M78.7 608.9V667.7M84.3 608.9V667.7M90 608.9V667.7M95.7 608.9V667.7M101.3 608.9V667.7M107 608.9V667.7M112.7 608.9V667.7M118.3 608.9V667.7M124 608.9V667.7M129.7 608.9V667.7M135.3 608.9V667.7M141 608.9V667.7M146.7 608.9V667.7M152.3 608.9V667.7M158 608.9V667.7M163.7 608.9V667.7M169.3 608.9V667.7M175 608.9V667.7M180.7 608.9V667.7M186.3 608.9V667.7M192 608.9V667.7M197.7 608.9V667.7M203.3 608.9V667.7M209 608.9V667.7M214.7 608.9V667.7M220.3 608.9V667.7M226 608.9V667.7M231.7 608.9V667.7M237.3 608.9V667.7M243 608.9V667.7M248.7 608.9V667.7M254.3 608.9V667.7M260 608.9V667.7M265.7 608.9V667.7M271.3 608.9V667.7M277 608.9V667.7M282.7 608.9V667.7M288.3 608.9V667.7M294 608.9V667.7M299.7 608.9V667.7M305.4 608.9V667.7M311 608.9V667.7M316.7 608.9V667.7M322.4 608.9V667.7M328 608.9V667.7M333.7 608.9V667.7M339.4 608.9V667.7M345 608.9V667.7M350.7 608.9V667.7M356.4 608.9V667.7M362 608.9V667.7M367.7 608.9V667.7M373.4 608.9V667.7M379 608.9V667.7M384.7 608.9V667.7M390.4 608.9V667.7M396 608.9V667.7M401.7 608.9V667.7M407.4 608.9V667.7M413 608.9V667.7M418.7 608.9V667.7M424.4 608.9V667.7M430 608.9V667.7M435.7 608.9V667.7M441.4 608.9V667.7M447 608.9V667.7M452.7 608.9V667.7M458.4 608.9V667.7M464 608.9V667.7M469.7 608.9V667.7M475.4 608.9V667.7M481 608.9V667.7M486.7 608.9V667.7M492.4 608.9V667.7M498 608.9V667.7M503.7 608.9V667.7M509.4 608.9V667.7M515 608.9V667.7M520.7 608.9V667.7M526.4 608.9V667.7M532 608.9V667.7M537.7 608.9V667.7M543.4 608.9V667.7M549 608.9V667.7M554.7 608.9V667.7M560.4 608.9V667.7M566 608.9V667.7M571.7 608.9V667.7M577.4 608.9V667.7M583 608.9V667.7M588.7 608.9V667.7M594.4 608.9V667.7M600 608.9V667.7M605.7 608.9V667.7M611.4 608.9V667.7M617 608.9V667.7M622.7 608.9V667.7M628.4 608.9V667.7M634 608.9V667.7M639.7 608.9V667.7M645.4 608.9V667.7M651 608.9V667.7M656.7 608.9V667.7M662.4 608.9V667.7M668 608.9V667.7M673.7 608.9V667.7M679.4 608.9V667.7M685 608.9V667.7M690.7 608.9V667.7M696.4 608.9V667.7M702 608.9V667.7M707.7 608.9V667.7M713.4 608.9V667.7M719 608.9V667.7M724.7 608.9V667.7M730.4 608.9V667.7M736 608.9V667.7M741.7 608.9V667.7M747.4 608.9V667.7M753 608.9V667.7M758.7 608.9V667.7M764.4 608.9V667.7M770 608.9V667.7M775.7 608.9V667.7M781.4 608.9V667.7M787 608.9V667.7M792.7 608.9V667.7M798.4 608.9V667.7M804 608.9V667.7M809.7 608.9V667.7M815.4 608.9V667.7M821 608.9V667.7M826.7 608.9V667.7M832.4 608.9V667.7M838 608.9V667.7M843.7 608.9V667.7M849.4 608.9V667.7M855 608.9V667.7M860.7 608.9V667.7M866.4 608.9V667.7M872.1 608.9V667.7M877.7 608.9V667.7M883.4 608.9V667.7M889.1 608.9V667.7M894.7 608.9V667.7M900.4 608.9V667.7M906.1 608.9V667.7M911.7 608.9V667.7M917.4 608.9V667.7M923.1 608.9V667.7M928.7 608.9V667.7M934.4 608.9V667.7M940.1 608.9V667.7M945.7 608.9V667.7M951.4 608.9V667.7M957.1 608.9V667.7M962.7 608.9V667.7M968.4 608.9V667.7M974.1 608.9V667.7M979.7 608.9V667.7M985.4 608.9V667.7M991.1 608.9V667.7M996.7 608.9V667.7M1002.4 608.9V667.7M1008.1 608.9V667.7M1013.7 608.9V667.7M1019.4 608.9V667.7M1025.1 608.9V667.7M1030.7 608.9V667.7M1036.4 608.9V667.7M1042.1 608.9V667.7M1047.7 608.9V667.7M1053.4 608.9V667.7M1059.1 608.9V667.7M1064.7 608.9V667.7M1070.4 608.9V667.7M1076.1 608.9V667.7M1081.7 608.9V667.7M1087.4 608.9V667.7M1093.1 608.9V667.7M1098.7 608.9V667.7M1104.4 608.9V667.7M1110.1 608.9V667.7M1115.7 608.9V667.7M1121.4 608.9V667.7M1127.1 608.9V667.7M1132.7 608.9V667.7M1138.4 608.9V667.7M1144.1 608.9V667.7M1149.7 608.9V667.7M1155.4 608.9V667.7M1161.1 608.9V667.7M1166.7 608.9V667.7M1172.4 608.9V667.7M1178.1 608.9V667.7M1183.7 608.9V667.7M1189.4 608.9V667.7M1195.1 608.9V667.7M1200.7 608.9V667.7M1206.4 608.9V667.7M1212.1 608.9V667.7M1217.7 608.9V667.7M1223.4 608.9V667.7M1229.1 608.9V667.7M1234.7 608.9V667.7M1240.4 608.9V667.7M1246.1 608.9V667.7M1251.7 608.9V667.7M1257.4 608.9V667.7M1263.1 608.9V667.7M1268.7 608.9V667.7M1274.4 608.9V667.7M1280.1 608.9V667.7M1285.7 608.9V667.7M1291.4 608.9V667.7M1297.1 608.9V667.7M1302.7 608.9V667.7M1308.4 608.9V667.7M1314.1 608.9V667.7M1319.7 608.9V667.7M1325.4 608.9V667.7M1331.1 608.9V667.7M1336.7 608.9V667.7M1342.4 608.9V667.7M1348.1 608.9V667.7M1353.7 608.9V667.7M1359.4 608.9V667.7M1365.1 608.9V667.7M1370.7 608.9V667.7M1376.4 608.9V667.7M1382.1 608.9V667.7M1387.7 608.9V667.7M1393.4 608.9V667.7M1399.1 608.9V667.7M1404.7 608.9V667.7M1410.4 608.9V667.7M1416.1 608.9V667.7M1421.8 608.9V667.7M1427.4 608.9V667.7M1433.1 608.9V667.7M1438.8 608.9V667.7M1444.4 608.9V667.7M1450.1 608.9V667.7M1455.8 608.9V667.7M1461.4 608.9V667.7M1467.1 608.9V667.7M1472.8 608.9V667.7" stroke="#505050" stroke-width="1" fill="none"/>
<rect x="5.5" y="669.6" width="1469.1" height="19.4" fill="#5a5a5a"/>
<path d="M10.7 669.6V689M16.3 669.6V689M22 669.6V689M27.7 669.6V689M33.3 669.6V689M39 669.6V689M44.7 669.6V689M50.3 669.6V689M56 669.6V689M61.7 669.6V689M67.3 669.6V689M73 669.6V689M78.7 669.6V689M84.3 669.6V689M90 669.6V689M95.7 669.6V689M101.3 669.6V689M107 669.6V689M112.7 669.6V689M118.3 669.6V689M124 669.6V689M129.7 669.6V689M135.3 669.6V689M141 669.6V689M146.7 669.6V689M152.3 669.6V689M158 669.6V689M163.7 669.6V689M169.3 669.6V689M175 669.6V689M180.7 669.6V689M186.3 669.6V689M192 669.6V689M197.7 669.6V689M203.3 669.6V689M209 669.6V689M214.7 669.6V689M220.3 669.6V689M226 669.6V689M231.7 669.6V689M237.3 669.6V689M243 669.6V689M248.7 669.6V689M254.3 669.6V689M260 669.6V689M265.7 669.6V689M271.3 669.6V689M277 669.6V689M282.7 669.6V689M288.3 669.6V689M294 669.6V689M299.7 669.6V689M305.4 669.6V689M311 669.6V689M316.7 669.6V689M322.4 669.6V689M328 669.6V689M333.7 669.6V689M339.4 669.6V689M345 669.6V689M350.7 669.6V689M356.4 669.6V689M362 669.6V689M367.7 669.6V689M373.4 669.6V689M379 669.6V689M384.7 669.6V689M390.4 669.6V689M396 669.6V689M401.7 669.6V689M407.4 669.6V689M413 669.6V689M418.7 669.6V689M424.4 669.6V689M430 669.6V689M435.7 669.6V689M441.4 669.6V689M447 669.6V689M452.7 669.6V689M458.4 669.6V689M464 669.6V689M469.7 669.6V689M475.4 669.6V689M481 669.6V689M486.7 669.6V689M492.4 669.6V689M498 669.6V689M503.7 669.6V689M509.4 669.6V689M515 669.6V689M520.7 669.6V689M526.4 669.6V689M532 669.6V689M537.7 669.6V689M543.4 669.6V689M549 669.6V689M554.7 669.6V689M560.4 669.6V689M566 669.6V689M571.7 669.6V689M577.4 669.6V689M583 669.6V689M588.7 669.6V689M594.4 669.6V689M600 669.6V689M605.7 669.6V689M611.4 669.6V689M617 669.6V689M622.7 669.6V689M628.4 669.6V689M634 669.6V689M639.7 669.6V689M645.4 669.6V689M651 669.6V689M656.7 669.6V689M662.4 669.6V689M668 669.6V689M673.7 669.6V689M679.4 669.6V689M685 669.6V689M690.7 669.6V689M696.4 669.6V689M702 669.6V689M707.7 669.6V689M713.4 669.6V689M719 669.6V689M724.7 669.6V689M730.4 669.6V689M736 669.6V689M741.7 669.6V689M747.4 669.6V689M753 669.6V689M758.7 669.6V689M764.4 669.6V689M770 669.6V689M775.7 669.6V689M781.4 669.6V689M787 669.6V689M792.7 669.6V689M798.4 669.6V689M804 669.6V689M809.7 669.6V689M815.4 669.6V689M821 669.6V689M826.7 669.6V689M832.4 669.6V689M838 669.6V689M843.7 669.6V689M849.4 669.6V689M855 669.6V689M860.7 669.6V689M866.4 669.6V689M872.1 669.6V689M877.7 669.6V689M883.4 669.6V689M889.1 669.6V689M894.7 669.6V689M900.4 669.6V689M906.1 669.6V689M911.7 669.6V689M917.4 669.6V689M923.1 669.6V689M928.7 669.6V689M934.4 669.6V689M940.1 669.6V689M945.7 669.6V689M951.4 669.6V689M957.1 669.6V689M962.7 669.6V689M968.4 669.6V689M974.1 669.6V689M979.7 669.6V689M985.4 669.6V689M991.1 669.6V689M996.7 669.6V689M1002.4 669.6V689M1008.1 669.6V689M1013.7 669.6V689M1019.4 669.6V689M1025.1 669.6V689M1030.7 669.6V689M1036.4 669.6V689M1042.1 669.6V689M1047.7 669.6V689M1053.4 669.6V689M1059.1 669.6V689M1064.7 669.6V689M1070.4 669.6V689M1076.1 669.6V689M1081.7 669.6V689M1087.4 669.6V689M1093.1 669.6V689M1098.7 669.6V689M1104.4 669.6V689M1110.1 669.6V689M1115.7 669.6V689M1121.4 669.6V689M1127.1 669.6V689M1132.7 669.6V689M1138.4 669.6V689M1144.1 669.6V689M1149.7 669.6V689M1155.4 669.6V689M1161.1 669.6V689M1166.7 669.6V689M1172.4 669.6V689M1178.1 669.6V689M1183.7 669.6V689M1189.4 669.6V689M1195.1 669.6V689M1200.7 669.6V689M1206.4 669.6V689M1212.1 669.6V689M1217.7 669.6V689M1223.4 669.6V689M1229.1 669.6V689M1234.7 669.6V689M1240.4 669.6V689M1246.1 669.6V689M1251.7 669.6V689M1257.4 669.6V689M1263.1 669.6V689M1268.7 669.6V689M1274.4 669.6V689M1280.1 669.6V689M1285.7 669.6V689M1291.4 669.6V689M1297.1 669.6V689M1302.7 669.6V689M1308.4 669.6V689M1314.1 669.6V689M1319.7 669.6V689M1325.4 669.6V689M1331.1 669.6V689M1336.7 669.6V689M1342.4 669.6V689M1348.1 669.6V689M1353.7 669.6V689M1359.4 669.6V689M1365.1 669.6V689M1370.7 669.6V689M1376.4 669.6V689M1382.1 669.6V689M1387.7 669.6V689M1393.4 669.6V689M1399.1 669.6V689M1404.7 669.6V689M1410.4 669.6V689M1416.1 669.6V689M1421.8 669.6V689M1427.4 669.6V689M1433.1 669.6V689M1438.8 669.6V689M1444.4 669.6V689M1450.1 669.6V689M1455.8 669.6V689M1461.4 669.6V689M1467.1 669.6V689M1472.8 669.6V689" stroke="#505050" stroke-width="1" fill="none"/>
<rect x="5.5" y="691" width="1469.1" height="58.8" fill="#5a5a5a"/>
<path d="M10.7 691V749.8M16.3 691V749.8M22 691V749.8M27.7 691V749.8M33.3 691V749.8M39 691V749.8M44.7 691V749.8M50.3 691V749.8M56 691V749.8M61.7 691V749.8M67.3 691V749.8M73 691V749.8M78.7 691V749.8M84.3 691V749.8M90 691V749.8M95.7 691V749.8M101.3 691V749.8M107 691V749.8M112.7 691V749.8M118.3 691V749.8M124 691V749.8M129.7 691V749.8M135.3 691V749.8M141 691V749.8M146.7 691V749.8M152.3 691V749.8M158 691V749.8M163.7 691V749.8M169.3 691V749.8M175 691V749.8M180.7 691V749.8M186.3 691V749.8M192 691V749.8M197.7 691V749.8M203.3 691V749.8M209 691V749.8M214.7 691V749.8M220.3 691V749.8M226 691V749.8M231.7 691V749.8M237.3 691V749.8M243 691V749.8M248.7 691V749.8M254.3 691V749.8M260 691V749.8M265.7 691V749.8M271.3 691V749.8M277 691V749.8M282.7 691V749.8M288.3 691V749.8M294 691V749.8M299.7 691V749.8M305.4 691V749.8M311 691V749.8M316.7 691V749.8M322.4 691V749.8M328 691V749.8M333.7 691V749.8M339.4 691V749.8M345 691V749.8M350.7 691V749.8M356.4 691V749.8M362 691V749.8M367.7 691V749.8M373.4 691V749.8M379 691V749.8M384.7 691V749.8M390.4 691V749.8M396 691V749.8M401.7 691V749.8M407.4 691V749.8M413 691V749.8M418.7 691V749.8M424.4 691V749.8M430 691V749.8M435.7 691V749.8M441.4 691V749.8M447 691V749.8M452.7 691V749.8M458.4 691V749.8M464 691V749.8M469.7 691V749.8M475.4 691V749.8M481 691V749.8M486.7 691V749.8M492.4 691V749.8M498 691V749.8M503.7 691V749.8M509.4 691V749.8M515 691V749.8M520.7 691V749.8M526.4 691V749.8M532 691V749.8M537.7 691V749.8M543.4 691V749.8M549 691V749.8M554.7 691V749.8M560.4 691V749.8M566 691V749.8M571.7 691V749.8M577.4 691V749.8M583 691V749.8M588.7 691V749.8M594.4 691V749.8M600 691V749.8M605.7 691V749.8M611.4 691V749.8M617 691V749.8M622.7 691V749.8M628.4 691V749.8M634 691V749.8M639.7 691V749.8M645.4 691V749.8M651 691V749.8M656.7 691V749.8M662.4 691V749.8M668 691V749.8M673.7 691V749.8M679.4 691V749.8M685 691V749.8M690.7 691V749.8M696.4 691V749.8M702 691V749.8M707.7 691V749.8M713.4 691V749.8M719 691V749.8M724.7 691V749.8M730.4 691V749.8M736 691V749.8M741.7 691V749.8M747.4 691V749.8M753 691V749.8M758.7 691V749.8M764.4 691V749.8M770 691V749.8M775.7 691V749.8M781.4 691V749.8M787 691V749.8M792.7 691V749.8M798.4 691V749.8M804 691V749.8M809.7 691V749.8M815.4 691V749.8M821 691V749.8M826.7 691V749.8M832.4 691V749.8M838 691V749.8M843.7 691V749.8M849.4 691V749.8M855 691V749.8M860.7 691V749.8M866.4 691V749.8M872.1 691V749.8M877.7 691V749.8M883.4 691V749.8M889.1 691V749.8M894.7 691V749.8M900.4 691V749.8M906.1 691V749.8M911.7 691V749.8M917.4 691V749.8M923.1 691V749.8M928.7 691V749.8M934.4 691V749.8M940.1 691V749.8M945.7 691V749.8M951.4 691V749.8M957.1 691V749.8M962.7 691V749.8M968.4 691V749.8M974.1 691V749.8M979.7 691V749.8M985.4 691V749.8M991.1 691V749.8M996.7 691V749.8M1002.4 691V749.8M1008.1 691V749.8M1013.7 691V749.8M1019.4 691V749.8M1025.1 691V749.8M1030.7 691V749.8M1036.4 691V749.8M1042.1 691V749.8M1047.7 691V749.8M1053.4 691V749.8M1059.1 691V749.8M1064.7 691V749.8M1070.4 691V749.8M1076.1 691V749.8M1081.7 691V749.8M1087.4 691V749.8M1093.1 691V749.8M1098.7 691V749.8M1104.4 691V749.8M1110.1 691V749.8M1115.7 691V749.8M1121.4 691V749.8M1127.1 691V749.8M1132.7 691V749.8M1138.4 691V749.8M1144.1 691V749.8M1149.7 691V749.8M1155.4 691V749.8M1161.1 691V749.8M1166.7 691V749.8M1172.4 691V749.8M1178.1 691V749.8M1183.7 691V749.8M1189.4 691V749.8M1195.1 691V749.8M1200.7 691V749.8M1206.4 691V749.8M1212.1 691V749.8M1217.7 691V749.8M1223.4 691V749.8M1229.1 691V749.8M1234.7 691V749.8M1240.4 691V749.8M1246.1 691V749.8M1251.7 691V749.8M1257.4 691V749.8M1263.1 691V749.8M1268.7 691V749.8M1274.4 691V749.8M1280.1 691V749.8M1285.7 691V749.8M1291.4 691V749.8M1297.1 691V749.8M1302.7 691V749.8M1308.4 691V749.8M1314.1 691V749.8M1319.7 691V749.8M1325.4 691V749.8M1331.1 691V749.8M1336.7 691V749.8M1342.4 691V749.8M1348.1 691V749.8M1353.7 691V749.8M1359.4 691V749.8M1365.1 691V749.8M1370.7 691V749.8M1376.4 691V749.8M1382.1 691V749.8M1387.7 691V749.8M1393.4 691V749.8M1399.1 691V749.8M1404.7 691V749.8M1410.4 691V749.8M1416.1 691V749.8M1421.8 691V749.8M1427.4 691V749.8M1433.1 691V749.8M1438.8 691V749.8M1444.4 691V749.8M1450.1 691V749.8M1455.8 691V749.8M1461.4 691V749.8M1467.1 691V749.8M1472.8 691V749.8" stroke="#505050" stroke-width="1" fill="none"/>
<rect x="5.5" y="751.8" width="1469.1" height="58.9" fill="#5a5a5a"/>
<path d="M10.7 751.8V810.6M16.3 751.8V810.6M22 751.8V810.6M27.7 751.8V810.6M33.3 751.8V810.6M39 751.8V810.6M44.7 751.8V810.6M50.3 751.8V810.6M56 751.8V810.6M61.7 751.8V810.6M67.3 751.8V810.6M73 751.8V810.6M78.7 751.8V810.6M84.3 751.8V810.6M90 751.8V810.6M95.7 751.8V810.6M101.3 751.8V810.6M107 751.8V810.6M112.7 751.8V810.6M118.3 751.8V810.6M124 751.8V810.6M129.7 751.8V810.6M135.3 751.8V810.6M141 751.8V810.6M146.7 751.8V810.6M152.3 751.8V810.6M158 751.8V810.6M163.7 751.8V810.6M169.3 751.8V810.6M175 751.8V810.6M180.7 751.8V810.6M186.3 751.8V810.6M192 751.8V810.6M197.7 751.8V810.6M203.3 751.8V810.6M209 751.8V810.6M214.7 751.8V810.6M220.3 751.8V810.6M226 751.8V810.6M231.7 751.8V810.6M237.3 751.8V810.6M243 751.8V810.6M248.7 751.8V810.6M254.3 751.8V810.6M260 751.8V810.6M265.7 751.8V810.6M271.3 751.8V810.6M277 751.8V810.6M282.7 751.8V810.6M288.3 751.8V810.6M294 751.8V810.6M299.7 751.8V810.6M305.4 751.8V810.6M311 751.8V810.6M316.7 751.8V810.6M322.4 751.8V810.6M328 751.8V810.6M333.7 751.8V810.6M339.4 751.8V810.6M345 751.8V810.6M350.7 751.8V810.6M356.4 751.8V810.6M362 751.8V810.6M367.7 751.8V810.6M373.4 751.8V810.6M379 751.8V810.6M384.7 751.8V810.6M390.4 751.8V810.6M396 751.8V810.6M401.7 751.8V810.6M407.4 751.8V810.6M413 751.8V810.6M418.7 751.8V810.6M424.4 751.8V810.6M430 751.8V810.6M435.7 751.8V810.6M441.4 751.8V810.6M447 751.8V810.6M452.7 751.8V810.6M458.4 751.8V810.6M464 751.8V810.6M469.7 751.8V810.6M475.4 751.8V810.6M481 751.8V810.6M486.7 751.8V810.6M492.4 751.8V810.6M498 751.8V810.6M503.7 751.8V810.6M509.4 751.8V810.6M515 751.8V810.6M520.7 751.8V810.6M526.4 751.8V810.6M532 751.8V810.6M537.7 751.8V810.6M543.4 751.8V810.6M549 751.8V810.6M554.7 751.8V810.6M560.4 751.8V810.6M566 751.8V810.6M571.7 751.8V810.6M577.4 751.8V810.6M583 751.8V810.6M588.7 751.8V810.6M594.4 751.8V810.6M600 751.8V810.6M605.7 751.8V810.6M611.4 751.8V810.6M617 751.8V810.6M622.7 751.8V810.6M628.4 751.8V810.6M634 751.8V810.6M639.7 751.8V810.6M645.4 751.8V810.6M651 751.8V810.6M656.7 751.8V810.6M662.4 751.8V810.6M668 751.8V810.6M673.7 751.8V810.6M679.4 751.8V810.6M685 751.8V810.6M690.7 751.8V810.6M696.4 751.8V810.6M702 751.8V810.6M707.7 751.8V810.6M713.4 751.8V810.6M719 751.8V810.6M724.7 751.8V810.6M730.4 751.8V810.6M736 751.8V810.6M741.7 751.8V810.6M747.4 751.8V810.6M753 751.8V810.6M758.7 751.8V810.6M764.4 751.8V810.6M770 751.8V810.6M775.7 751.8V810.6M781.4 751.8V810.6M787 751.8V810.6M792.7 751.8V810.6M798.4 751.8V810.6M804 751.8V810.6M809.7 751.8V810.6M815.4 751.8V810.6M821 751.8V810.6M826.7 751.8V810.6M832.4 751.8V810.6M838 751.8V810.6M843.7 751.8V810.6M849.4 751.8V810.6M855 751.8V810.6M860.7 751.8V810.6M866.4 751.8V810.6M872.1 751.8V810.6M877.7 751.8V810.6M883.4 751.8V810.6M889.1 751.8V810.6M894.7 751.8V810.6M900.4 751.8V810.6M906.1 751.8V810.6M911.7 751.8V810.6M917.4 751.8V810.6M923.1 751.8V810.6M928.7 751.8V810.6M934.4 751.8V810.6M940.1 751.8V810.6M945.7 751.8V810.6M951.4 751.8V810.6M957.1 751.8V810.6M962.7 751.8V810.6M968.4 751.8V810.6M974.1 751.8V810.6M979.7 751.8V810.6M985.4 751.8V810.6M991.1 751.8V810.6M996.7 751.8V810.6M1002.4 751.8V810.6M1008.1 751.8V810.6M1013.7 751.8V810.6M1019.4 751.8V810.6M1025.1 751.8V810.6M1030.7 751.8V810.6M1036.4 751.8V810.6M1042.1 751.8V810.6M1047.7 751.8V810.6M1053.4 751.8V810.6M1059.1 751.8V810.6M1064.7 751.8V810.6M1070.4 751.8V810.6M1076.1 751.8V810.6M1081.7 751.8V810.6M1087.4 751.8V810.6M1093.1 751.8V810.6M1098.7 751.8V810.6M1104.4 751.8V810.6M1110.1 751.8V810.6M1115.7 751.8V810.6M1121.4 751.8V810.6M1127.1 751.8V810.6M1132.7 751.8V810.6M1138.4 751.8V810.6M1144.1 751.8V810.6M1149.7 751.8V810.6M1155.4 751.8V810.6M1161.1 751.8V810.6M1166.7 751.8V810.6M1172.4 751.8V810.6M1178.1 751.8V810.6M1183.7 751.8V810.6M1189.4 751.8V810.6M1195.1 751.8V810.6M1200.7 751.8V810.6M1206.4 751.8V810.6M1212.1 751.8V810.6M1217.7 751.8V810.6M1223.4 751.8V810.6M1229.1 751.8V810.6M1234.7 751.8V810.6M1240.4 751.8V810.6M1246.1 751.8V810.6M1251.7 751.8V810.6M1257.4 751.8V810.6M1263.1 751.8V810.6M1268.7 751.8V810.6M1274.4 751.8V810.6M1280.1 751.8V810.6M1285.7 751.8V810.6M1291.4 751.8V810.6M1297.1 751.8V810.6M1302.7 751.8V810.6M1308.4 751.8V810.6M1314.1 751.8V810.6M1319.7 751.8V810.6M1325.4 751.8V810.6M1331.1 751.8V810.6M1336.7 751.8V810.6M1342.4 751.8V810.6M1348.1 751.8V810.6M1353.7 751.8V810.6M1359.4 751.8V810.6M1365.1 751.8V810.6M1370.7 751.8V810.6M1376.4 751.8V810.6M1382.1 751.8V810.6M1387.7 751.8V810.6M1393.4 751.8V810.6M1399.1 751.8V810.6M1404.7 751.8V810.6M1410.4 751.8V810.6M1416.1 751.8V810.6M1421.8 751.8V810.6M1427.4 751.8V810.6M1433.1 751.8V810.6M1438.8 751.8V810.6M1444.4 751.8V810.6M1450.1 751.8V810.6M1455.8 751.8V810.6M1461.4 751.8V810.6M1467.1 751.8V810.6M1472.8 751.8V810.6" stroke="#505050" stroke-width="1" fill="none"/>
<rect x="5.5" y="812.6" width="1469.1" height="58.8" fill="#707070"/>
<path d="M10.7 812.6V871.4M16.3 812.6V871.4M22 812.6V871.4M27.7 812.6V871.4M33.3 812.6V871.4M39 812.6V871.4M44.7 812.6V871.4M50.3 812.6V871.4M56 812.6V871.4M61.7 812.6V871.4M67.3 812.6V871.4M73 812.6V871.4M78.7 812.6V871.4M84.3 812.6V871.4M90 812.6V871.4M95.7 812.6V871.4M101.3 812.6V871.4M107 812.6V871.4M112.7 812.6V871.4M118.3 812.6V871.4M124 812.6V871.4M129.7 812.6V871.4M135.3 812.6V871.4M141 812.6V871.4M146.7 812.6V871.4M152.3 812.6V871.4M158 812.6V871.4M163.7 812.6V871.4M169.3 812.6V871.4M175 812.6V871.4M180.7 812.6V871.4M186.3 812.6V871.4M192 812.6V871.4M197.7 812.6V871.4M203.3 812.6V871.4M209 812.6V871.4M214.7 812.6V871.4M220.3 812.6V871.4M226 812.6V871.4M231.7 812.6V871.4M237.3 812.6V871.4M243 812.6V871.4M248.7 812.6V871.4M254.3 812.6V871.4M260 812.6V871.4M265.7 812.6V871.4M271.3 812.6V871.4M277 812.6V871.4M282.7 812.6V871.4M288.3 812.6V871.4M294 812.6V871.4M299.7 812.6V871.4M305.4 812.6V871.4M311 812.6V871.4M316.7 812.6V871.4M322.4 812.6V871.4M328 812.6V871.4M333.7 812.6V871.4M339.4 812.6V871.4M345 812.6V871.4M350.7 812.6V871.4M356.4 812.6V871.4M362 812.6V871.4M367.7 812.6V871.4M373.4 812.6V871.4M379 812.6V871.4M384.7 812.6V871.4M390.4 812.6V871.4M396 812.6V871.4M401.7 812.6V871.4M407.4 812.6V871.4M413 812.6V871.4M418.7 812.6V871.4M424.4 812.6V871.4M430 812.6V871.4M435.7 812.6V871.4M441.4 812.6V871.4M447 812.6V871.4M452.7 812.6V871.4M458.4 812.6V871.4M464 812.6V871.4M469.7 812.6V871.4M475.4 812.6V871.4M481 812.6V871.4M486.7 812.6V871.4M492.4 812.6V871.4M498 812.6V871.4M503.7 812.6V871.4M509.4 812.6V871.4M515 812.6V871.4M520.7 812.6V871.4M526.4 812.6V871.4M532 812.6V871.4M537.7 812.6V871.4M543.4 812.6V871.4M549 812.6V871.4M554.7 812.6V871.4M560.4 812.6V871.4M566 812.6V871.4M571.7 812.6V871.4M577.4 812.6V871.4M583 812.6V871.4M588.7 812.6V871.4M594.4 812.6V871.4M600 812.6V871.4M605.7 812.6V871.4M611.4 812.6V871.4M617 812.6V871.4M622.7 812.6V871.4M628.4 812.6V871.4M634 812.6V871.4M639.7 812.6V871.4M645.4 812.6V871.4M651 812.6V871.4M656.7 812.6V871.4M662.4 812.6V871.4M668 812.6V871.4M673.7 812.6V871.4M679.4 812.6V871.4M685 812.6V871.4M690.7 812.6V871.4M696.4 812.6V871.4M702 812.6V871.4M707.7 812.6V871.4M713.4 812.6V871.4M719 812.6V871.4M724.7 812.6V871.4M730.4 812.6V871.4M736 812.6V871.4M741.7 812.6V871.4M747.4 812.6V871.4M753 812.6V871.4M758.7 812.6V871.4M764.4 812.6V871.4M770 812.6V871.4M775.7 812.6V871.4M781.4 812.6V871.4M787 812.6V871.4M792.7 812.6V871.4M798.4 812.6V871.4M804 812.6V871.4M809.7 812.6V871.4M815.4 812.6V871.4M821 812.6V871.4M826.7 812.6V871.4M832.4 812.6V871.4M838 812.6V871.4M843.7 812.6V871.4M849.4 812.6V871.4M855 812.6V871.4M860.7 812.6V871.4M866.4 812.6V871.4M872.1 812.6V871.4M877.7 812.6V871.4M883.4 812.6V871.4M889.1 812.6V871.4M894.7 812.6V871.4M900.4 812.6V871.4M906.1 812.6V871.4M911.7 812.6V871.4M917.4 812.6V871.4M923.1 812.6V871.4M928.7 812.6V871.4M934.4 812.6V871.4M940.1 812.6V871.4M945.7 812.6V871.4M951.4 812.6V871.4M957.1 812.6V871.4M962.7 812.6V871.4M968.4 812.6V871.4M974.1 812.6V871.4M979.7 812.6V871.4M985.4 812.6V871.4M991.1 812.6V871.4M996.7 812.6V871.4M1002.4 812.6V871.4M1008.1 812.6V871.4M1013.7 812.6V871.4M1019.4 812.6V871.4M1025.1 812.6V871.4M1030.7 812.6V871.4M1036.4 812.6V871.4M1042.1 812.6V871.4M1047.7 812.6V871.4M1053.4 812.6V871.4M1059.1 812.6V871.4M1064.7 812.6V871.4M1070.4 812.6V871.4M1076.1 812.6V871.4M1081.7 812.6V871.4M1087.4 812.6V871.4M1093.1 812.6V871.4M1098.7 812.6V871.4M1104.4 812.6V871.4M1110.1 812.6V871.4M1115.7 812.6V871.4M1121.4 812.6V871.4M1127.1 812.6V871.4M1132.7 812.6V871.4M1138.4 812.6V871.4M1144.1 812.6V871.4M1149.7 812.6V871.4M1155.4 812.6V871.4M1161.1 812.6V871.4M1166.7 812.6V871.4M1172.4 812.6V871.4M1178.1 812.6V871.4M1183.7 812.6V871.4M1189.4 812.6V871.4M1195.1 812.6V871.4M1200.7 812.6V871.4M1206.4 812.6V871.4M1212.1 812.6V871.4M1217.7 812.6V871.4M1223.4 812.6V871.4M1229.1 812.6V871.4M1234.7 812.6V871.4M1240.4 812.6V871.4M1246.1 812.6V871.4M1251.7 812.6V871.4M1257.4 812.6V871.4M1263.1 812.6V871.4M1268.7 812.6V871.4M1274.4 812.6V871.4M1280.1 812.6V871.4M1285.7 812.6V871.4M1291.4 812.6V871.4M1297.1 812.6V871.4M1302.7 812.6V871.4M1308.4 812.6V871.4M1314.1 812.6V871.4M1319.7 812.6V871.4M1325.4 812.6V871.4M1331.1 812.6V871.4M1336.7 812.6V871.4M1342.4 812.6V871.4M1348.1 812.6V871.4M1353.7 812.6V871.4M1359.4 812.6V871.4M1365.1 812.6V871.4M1370.7 812.6V871.4M1376.4 812.6V871.4M1382.1 812.6V871.4M1387.7 812.6V871.4M1393.4 812.6V871.4M1399.1 812.6V871.4M1404.7 812.6V871.4M1410.4 812.6V871.4M1416.1 812.6V871.4M1421.8 812.6V871.4M1427.4 812.6V871.4M1433.1 812.6V871.4M1438.8 812.6V871.4M1444.4 812.6V871.4M1450.1 812.6V871.4M1455.8 812.6V871.4M1461.4 812.6V871.4M1467.1 812.6V871.4M1472.8 812.6V871.4" stroke="#656565" stroke-width="1" fill="none"/>
<rect x="5.5" y="873.4" width="1469.1" height="58.9" fill="#5a5a5a"/>
<path d="M10.7 873.4V932.2M16.3 873.4V932.2M22 873.4V932.2M27.7 873.4V932.2M33.3 873.4V932.2M39 873.4V932.2M44.7 873.4V932.2M50.3 873.4V932.2M56 873.4V932.2M61.7 873.4V932.2M67.3 873.4V932.2M73 873.4V932.2M78.7 873.4V932.2M84.3 873.4V932.2M90 873.4V932.2M95.7 873.4V932.2M101.3 873.4V932.2M107 873.4V932.2M112.7 873.4V932.2M118.3 873.4V932.2M124 873.4V932.2M129.7 873.4V932.2M135.3 873.4V932.2M141 873.4V932.2M146.7 873.4V932.2M152.3 873.4V932.2M158 873.4V932.2M163.7 873.4V932.2M169.3 873.4V932.2M175 873.4V932.2M180.7 873.4V932.2M186.3 873.4V932.2M192 873.4V932.2M197.7 873.4V932.2M203.3 873.4V932.2M209 873.4V932.2M214.7 873.4V932.2M220.3 873.4V932.2M226 873.4V932.2M231.7 873.4V932.2M237.3 873.4V932.2M243 873.4V932.2M248.7 873.4V932.2M254.3 873.4V932.2M260 873.4V932.2M265.7 873.4V932.2M271.3 873.4V932.2M277 873.4V932.2M282.7 873.4V932.2M288.3 873.4V932.2M294 873.4V932.2M299.7 873.4V932.2M305.4 873.4V932.2M311 873.4V932.2M316.7 873.4V932.2M322.4 873.4V932.2M328 873.4V932.2M333.7 873.4V932.2M339.4 873.4V932.2M345 873.4V932.2M350.7 873.4V932.2M356.4 873.4V932.2M362 873.4V932.2M367.7 873.4V932.2M373.4 873.4V932.2M379 873.4V932.2M384.7 873.4V932.2M390.4 873.4V932.2M396 873.4V932.2M401.7 873.4V932.2M407.4 873.4V932.2M413 873.4V932.2M418.7 873.4V932.2M424.4 873.4V932.2M430 873.4V932.2M435.7 873.4V932.2M441.4 873.4V932.2M447 873.4V932.2M452.7 873.4V932.2M458.4 873.4V932.2M464 873.4V932.2M469.7 873.4V932.2M475.4 873.4V932.2M481 873.4V932.2M486.7 873.4V932.2M492.4 873.4V932.2M498 873.4V932.2M503.7 873.4V932.2M509.4 873.4V932.2M515 873.4V932.2M520.7 873.4V932.2M526.4 873.4V932.2M532 873.4V932.2M537.7 873.4V932.2M543.4 873.4V932.2M549 873.4V932.2M554.7 873.4V932.2M560.4 873.4V932.2M566 873.4V932.2M571.7 873.4V932.2M577.4 873.4V932.2M583 873.4V932.2M588.7 873.4V932.2M594.4 873.4V932.2M600 873.4V932.2M605.7 873.4V932.2M611.4 873.4V932.2M617 873.4V932.2M622.7 873.4V932.2M628.4 873.4V932.2M634 873.4V932.2M639.7 873.4V932.2M645.4 873.4V932.2M651 873.4V932.2M656.7 873.4V932.2M662.4 873.4V932.2M668 873.4V932.2M673.7 873.4V932.2M679.4 873.4V932.2M685 873.4V932.2M690.7 873.4V932.2M696.4 873.4V932.2M702 873.4V932.2M707.7 873.4V932.2M713.4 873.4V932.2M719 873.4V932.2M724.7 873.4V932.2M730.4 873.4V932.2M736 873.4V932.2M741.7 873.4V932.2M747.4 873.4V932.2M753 873.4V932.2M758.7 873.4V932.2M764.4 873.4V932.2M770 873.4V932.2M775.7 873.4V932.2M781.4 873.4V932.2M787 873.4V932.2M792.7 873.4V932.2M798.4 873.4V932.2M804 873.4V932.2M809.7 873.4V932.2M815.4 873.4V932.2M821 873.4V932.2M826.7 873.4V932.2M832.4 873.4V932.2M838 873.4V932.2M843.7 873.4V932.2M849.4 873.4V932.2M855 873.4V932.2M860.7 873.4V932.2M866.4 873.4V932.2M872.1 873.4V932.2M877.7 873.4V932.2M883.4 873.4V932.2M889.1 873.4V932.2M894.7 873.4V932.2M900.4 873.4V932.2M906.1 873.4V932.2M911.7 873.4V932.2M917.4 873.4V932.2M923.1 873.4V932.2M928.7 873.4V932.2M934.4 873.4V932.2M940.1 873.4V932.2M945.7 873.4V932.2M951.4 873.4V932.2M957.1 873.4V932.2M962.7 873.4V932.2M968.4 873.4V932.2M974.1 873.4V932.2M979.7 873.4V932.2M985.4 873.4V932.2M991.1 873.4V932.2M996.7 873.4V932.2M1002.4 873.4V932.2M1008.1 873.4V932.2M1013.7 873.4V932.2M1019.4 873.4V932.2M1025.1 873.4V932.2M1030.7 873.4V932.2M1036.4 873.4V932.2M1042.1 873.4V932.2M1047.7 873.4V932.2M1053.4 873.4V932.2M1059.1 873.4V932.2M1064.7 873.4V932.2M1070.4 873.4V932.2M1076.1 873.4V932.2M1081.7 873.4V932.2M1087.4 873.4V932.2M1093.1 873.4V932.2M1098.7 873.4V932.2M1104.4 873.4V932.2M1110.1 873.4V932.2M1115.7 873.4V932.2M1121.4 873.4V932.2M1127.1 873.4V932.2M1132.7 873.4V932.2M1138.4 873.4V932.2M1144.1 873.4V932.2M1149.7 873.4V932.2M1155.4 873.4V932.2M1161.1 873.4V932.2M1166.7 873.4V932.2M1172.4 873.4V932.2M1178.1 873.4V932.2M1183.7 873.4V932.2M1189.4 873.4V932.2M1195.1 873.4V932.2M1200.7 873.4V932.2M1206.4 873.4V932.2M1212.1 873.4V932.2M1217.7 873.4V932.2M1223.4 873.4V932.2M1229.1 873.4V932.2M1234.7 873.4V932.2M1240.4 873.4V932.2M1246.1 873.4V932.2M1251.7 873.4V932.2M1257.4 873.4V932.2M1263.1 873.4V932.2M1268.7 873.4V932.2M1274.4 873.4V932.2M1280.1 873.4V932.2M1285.7 873.4V932.2M1291.4 873.4V932.2M1297.1 873.4V932.2M1302.7 873.4V932.2M1308.4 873.4V932.2M1314.1 873.4V932.2M1319.7 873.4V932.2M1325.4 873.4V932.2M1331.1 873.4V932.2M1336.7 873.4V932.2M1342.4 873.4V932.2M1348.1 873.4V932.2M1353.7 873.4V932.2M1359.4 873.4V932.2M1365.1 873.4V932.2M1370.7 873.4V932.2M1376.4 873.4V932.2M1382.1 873.4V932.2M1387.7 873.4V932.2M1393.4 873.4V932.2M1399.1 873.4V932.2M1404.7 873.4V932.2M1410.4 873.4V932.2M1416.1 873.4V932.2M1421.8 873.4V932.2M1427.4 873.4V932.2M1433.1 873.4V932.2M1438.8 873.4V932.2M1444.4 873.4V932.2M1450.1 873.4V932.2M1455.8 873.4V932.2M1461.4 873.4V932.2M1467.1 873.4V932.2M1472.8 873.4V932.2" stroke="#505050" stroke-width="1" fill="none"/>
<rect x="5.5" y="934.2" width="1469.1" height="58.8" fill="#5a5a5a"/>
<path d="M10.7 934.2V993M16.3 934.2V993M22 934.2V993M27.7 934.2V993M33.3 934.2V993M39 934.2V993M44.7 934.2V993M50.3 934.2V993M56 934.2V993M61.7 934.2V993M67.3 934.2V993M73 934.2V993M78.7 934.2V993M84.3 934.2V993M90 934.2V993M95.7 934.2V993M101.3 934.2V993M107 934.2V993M112.7 934.2V993M118.3 934.2V993M124 934.2V993M129.7 934.2V993M135.3 934.2V993M141 934.2V993M146.7 934.2V993M152.3 934.2V993M158 934.2V993M163.7 934.2V993M169.3 934.2V993M175 934.2V993M180.7 934.2V993M186.3 934.2V993M192 934.2V993M197.7 934.2V993M203.3 934.2V993M209 934.2V993M214.7 934.2V993M220.3 934.2V993M226 934.2V993M231.7 934.2V993M237.3 934.2V993M243 934.2V993M248.7 934.2V993M254.3 934.2V993M260 934.2V993M265.7 934.2V993M271.3 934.2V993M277 934.2V993M282.7 934.2V993M288.3 934.2V993M294 934.2V993M299.7 934.2V993M305.4 934.2V993M311 934.2V993M316.7 934.2V993M322.4 934.2V993M328 934.2V993M333.7 934.2V993M339.4 934.2V993M345 934.2V993M350.7 934.2V993M356.4 934.2V993M362 934.2V993M367.7 934.2V993M373.4 934.2V993M379 934.2V993M384.7 934.2V993M390.4 934.2V993M396 934.2V993M401.7 934.2V993M407.4 934.2V993M413 934.2V993M418.7 934.2V993M424.4 934.2V993M430 934.2V993M435.7 934.2V993M441.4 934.2V993M447 934.2V993M452.7 934.2V993M458.4 934.2V993M464 934.2V993M469.7 934.2V993M475.4 934.2V993M481 934.2V993M486.7 934.2V993M492.4 934.2V993M498 934.2V993M503.7 934.2V993M509.4 934.2V993M515 934.2V993M520.7 934.2V993M526.4 934.2V993M532 934.2V993M537.7 934.2V993M543.4 934.2V993M549 934.2V993M554.7 934.2V993M560.4 934.2V993M566 934.2V993M571.7 934.2V993M577.4 934.2V993M583 934.2V993M588.7 934.2V993M594.4 934.2V993M600 934.2V993M605.7 934.2V993M611.4 934.2V993M617 934.2V993M622.7 934.2V993M628.4 934.2V993M634 934.2V993M639.7 934.2V993M645.4 934.2V993M651 934.2V993M656.7 934.2V993M662.4 934.2V993M668 934.2V993M673.7 934.2V993M679.4 934.2V993M685 934.2V993M690.7 934.2V993M696.4 934.2V993M702 934.2V993M707.7 934.2V993M713.4 934.2V993M719 934.2V993M724.7 934.2V993M730.4 934.2V993M736 934.2V993M741.7 934.2V993M747.4 934.2V993M753 934.2V993M758.7 934.2V993M764.4 934.2V993M770 934.2V993M775.7 934.2V993M781.4 934.2V993M787 934.2V993M792.7 934.2V993M798.4 934.2V993M804 934.2V993M809.7 934.2V993M815.4 934.2V993M821 934.2V993M826.7 934.2V993M832.4 934.2V993M838 934.2V993M843.7 934.2V993M849.4 934.2V993M855 934.2V993M860.7 934.2V993M866.4 934.2V993M872.1 934.2V993M877.7 934.2V993M883.4 934.2V993M889.1 934.2V993M894.7 934.2V993M900.4 934.2V993M906.1 934.2V993M911.7 934.2V993M917.4 934.2V993M923.1 934.2V993M928.7 934.2V993M934.4 934.2V993M940.1 934.2V993M945.7 934.2V993M951.4 934.2V993M957.1 934.2V993M962.7 934.2V993M968.4 934.2V993M974.1 934.2V993M979.7 934.2V993M985.4 934.2V993M991.1 934.2V993M996.7 934.2V993M1002.4 934.2V993M1008.1 934.2V993M1013.7 934.2V993M1019.4 934.2V993M1025.1 934.2V993M1030.7 934.2V993M1036.4 934.2V993M1042.1 934.2V993M1047.7 934.2V993M1053.4 934.2V993M1059.1 934.2V993M1064.7 934.2V993M1070.4 934.2V993M1076.1 934.2V993M1081.7 934.2V993M1087.4 934.2V993M1093.1 934.2V993M1098.7 934.2V993M1104.4 934.2V993M1110.1 934.2V993M1115.7 934.2V993M1121.4 934.2V993M1127.1 934.2V993M1132.7 934.2V993M1138.4 934.2V993M1144.1 934.2V993M1149.7 934.2V993M1155.4 934.2V993M1161.1 934.2V993M1166.7 934.2V993M1172.4 934.2V993M1178.1 934.2V993M1183.7 934.2V993M1189.4 934.2V993M1195.1 934.2V993M1200.7 934.2V993M1206.4 934.2V993M1212.1 934.2V993M1217.7 934.2V993M1223.4 934.2V993M1229.1 934.2V993M1234.7 934.2V993M1240.4 934.2V993M1246.1 934.2V993M1251.7 934.2V993M1257.4 934.2V993M1263.1 934.2V993M1268.7 934.2V993M1274.4 934.2V993M1280.1 934.2V993M1285.7 934.2V993M1291.4 934.2V993M1297.1 934.2V993M1302.7 934.2V993M1308.4 934.2V993M1314.1 934.2V993M1319.7 934.2V993M1325.4 934.2V993M1331.1 934.2V993M1336.7 934.2V993M1342.4 934.2V993M1348.1 934.2V993M1353.7 934.2V993M1359.4 934.2V993M1365.1 934.2V993M1370.7 934.2V993M1376.4 934.2V993M1382.1 934.2V993M1387.7 934.2V993M1393.4 934.2V993M1399.1 934.2V993M1404.7 934.2V993M1410.4 934.2V993M1416.1 934.2V993M1421.8 934.2V993M1427.4 934.2V993M1433.1 934.2V993M1438.8 934.2V993M1444.4 934.2V993M1450.1 934.2V993M1455.8 934.2V993M1461.4 934.2V993M1467.1 934.2V993M1472.8 934.2V993" stroke="#505050" stroke-width="1" fill="none"/>
<rect x="5.5" y="994.9" width="1469.1" height="32.3" fill="#5a5a5a"/>
<path d="M10.7 994.9V1027.2M16.3 994.9V1027.2M22 994.9V1027.2M27.7 994.9V1027.2M33.3 994.9V1027.2M39 994.9V1027.2M44.7 994.9V1027.2M50.3 994.9V1027.2M56 994.9V1027.2M61.7 994.9V1027.2M67.3 994.9V1027.2M73 994.9V1027.2M78.7 994.9V1027.2M84.3 994.9V1027.2M90 994.9V1027.2M95.7 994.9V1027.2M101.3 994.9V1027.2M107 994.9V1027.2M112.7 994.9V1027.2M118.3 994.9V1027.2M124 994.9V1027.2M129.7 994.9V1027.2M135.3 994.9V1027.2M141 994.9V1027.2M146.7 994.9V1027.2M152.3 994.9V1027.2M158 994.9V1027.2M163.7 994.9V1027.2M169.3 994.9V1027.2M175 994.9V1027.2M180.7 994.9V1027.2M186.3 994.9V1027.2M192 994.9V1027.2M197.7 994.9V1027.2M203.3 994.9V1027.2M209 994.9V1027.2M214.7 994.9V1027.2M220.3 994.9V1027.2M226 994.9V1027.2M231.7 994.9V1027.2M237.3 994.9V1027.2M243 994.9V1027.2M248.7 994.9V1027.2M254.3 994.9V1027.2M260 994.9V1027.2M265.7 994.9V1027.2M271.3 994.9V1027.2M277 994.9V1027.2M282.7 994.9V1027.2M288.3 994.9V1027.2M294 994.9V1027.2M299.7 994.9V1027.2M305.4 994.9V1027.2M311 994.9V1027.2M316.7 994.9V1027.2M322.4 994.9V1027.2M328 994.9V1027.2M333.7 994.9V1027.2M339.4 994.9V1027.2M345 994.9V1027.2M350.7 994.9V1027.2M356.4 994.9V1027.2M362 994.9V1027.2M367.7 994.9V1027.2M373.4 994.9V1027.2M379 994.9V1027.2M384.7 994.9V1027.2M390.4 994.9V1027.2M396 994.9V1027.2M401.7 994.9V1027.2M407.4 994.9V1027.2M413 994.9V1027.2M418.7 994.9V1027.2M424.4 994.9V1027.2M430 994.9V1027.2M435.7 994.9V1027.2M441.4 994.9V1027.2M447 994.9V1027.2M452.7 994.9V1027.2M458.4 994.9V1027.2M464 994.9V1027.2M469.7 994.9V1027.2M475.4 994.9V1027.2M481 994.9V1027.2M486.7 994.9V1027.2M492.4 994.9V1027.2M498 994.9V1027.2M503.7 994.9V1027.2M509.4 994.9V1027.2M515 994.9V1027.2M520.7 994.9V1027.2M526.4 994.9V1027.2M532 994.9V1027.2M537.7 994.9V1027.2M543.4 994.9V1027.2M549 994.9V1027.2M554.7 994.9V1027.2M560.4 994.9V1027.2M566 994.9V1027.2M571.7 994.9V1027.2M577.4 994.9V1027.2M583 994.9V1027.2M588.7 994.9V1027.2M594.4 994.9V1027.2M600 994.9V1027.2M605.7 994.9V1027.2M611.4 994.9V1027.2M617 994.9V1027.2M622.7 994.9V1027.2M628.4 994.9V1027.2M634 994.9V1027.2M639.7 994.9V1027.2M645.4 994.9V1027.2M651 994.9V1027.2M656.7 994.9V1027.2M662.4 994.9V1027.2M668 994.9V1027.2M673.7 994.9V1027.2M679.4 994.9V1027.2M685 994.9V1027.2M690.7 994.9V1027.2M696.4 994.9V1027.2M702 994.9V1027.2M707.7 994.9V1027.2M713.4 994.9V1027.2M719 994.9V1027.2M724.7 994.9V1027.2M730.4 994.9V1027.2M736 994.9V1027.2M741.7 994.9V1027.2M747.4 994.9V1027.2M753 994.9V1027.2M758.7 994.9V1027.2M764.4 994.9V1027.2M770 994.9V1027.2M775.7 994.9V1027.2M781.4 994.9V1027.2M787 994.9V1027.2M792.7 994.9V1027.2M798.4 994.9V1027.2M804 994.9V1027.2M809.7 994.9V1027.2M815.4 994.9V1027.2M821 994.9V1027.2M826.7 994.9V1027.2M832.4 994.9V1027.2M838 994.9V1027.2M843.7 994.9V1027.2M849.4 994.9V1027.2M855 994.9V1027.2M860.7 994.9V1027.2M866.4 994.9V1027.2M872.1 994.9V1027.2M877.7 994.9V1027.2M883.4 994.9V1027.2M889.1 994.9V1027.2M894.7 994.9V1027.2M900.4 994.9V1027.2M906.1 994.9V1027.2M911.7 994.9V1027.2M917.4 994.9V1027.2M923.1 994.9V1027.2M928.7 994.9V1027.2M934.4 994.9V1027.2M940.1 994.9V1027.2M945.7 994.9V1027.2M951.4 994.9V1027.2M957.1 994.9V1027.2M962.7 994.9V1027.2M968.4 994.9V1027.2M974.1 994.9V1027.2M979.7 994.9V1027.2M985.4 994.9V1027.2M991.1 994.9V1027.2M996.7 994.9V1027.2M1002.4 994.9V1027.2M1008.1 994.9V1027.2M1013.7 994.9V1027.2M1019.4 994.9V1027.2M1025.1 994.9V1027.2M1030.7 994.9V1027.2M1036.4 994.9V1027.2M1042.1 994.9V1027.2M1047.7 994.9V1027.2M1053.4 994.9V1027.2M1059.1 994.9V1027.2M1064.7 994.9V1027.2M1070.4 994.9V1027.2M1076.1 994.9V1027.2M1081.7 994.9V1027.2M1087.4 994.9V1027.2M1093.1 994.9V1027.2M1098.7 994.9V1027.2M1104.4 994.9V1027.2M1110.1 994.9V1027.2M1115.7 994.9V1027.2M1121.4 994.9V1027.2M1127.1 994.9V1027.2M1132.7 994.9V1027.2M1138.4 994.9V1027.2M1144.1 994.9V1027.2M1149.7 994.9V1027.2M1155.4 994.9V1027.2M1161.1 994.9V1027.2M1166.7 994.9V1027.2M1172.4 994.9V1027.2M1178.1 994.9V1027.2M1183.7 994.9V1027.2M1189.4 994.9V1027.2M1195.1 994.9V1027.2M1200.7 994.9V1027.2M1206.4 994.9V1027.2M1212.1 994.9V1027.2M1217.7 994.9V1027.2M1223.4 994.9V1027.2M1229.1 994.9V1027.2M1234.7 994.9V1027.2M1240.4 994.9V1027.2M1246.1 994.9V1027.2M1251.7 994.9V1027.2M1257.4 994.9V1027.2M1263.1 994.9V1027.2M1268.7 994.9V1027.2M1274.4 994.9V1027.2M1280.1 994.9V1027.2M1285.7 994.9V1027.2M1291.4 994.9V1027.2M1297.1 994.9V1027.2M1302.7 994.9V1027.2M1308.4 994.9V1027.2M1314.1 994.9V1027.2M1319.7 994.9V1027.2M1325.4 994.9V1027.2M1331.1 994.9V1027.2M1336.7 994.9V1027.2M1342.4 994.9V1027.2M1348.1 994.9V1027.2M1353.7 994.9V1027.2M1359.4 994.9V1027.2M1365.1 994.9V1027.2M1370.7 994.9V1027.2M1376.4 994.9V1027.2M1382.1 994.9V1027.2M1387.7 994.9V1027.2M1393.4 994.9V1027.2M1399.1 994.9V1027.2M1404.7 994.9V1027.2M1410.4 994.9V1027.2M1416.1 994.9V1027.2M1421.8 994.9V1027.2M1427.4 994.9V1027.2M1433.1 994.9V1027.2M1438.8 994.9V1027.2M1444.4 994.9V1027.2M1450.1 994.9V1027.2M1455.8 994.9V1027.2M1461.4 994.9V1027.2M1467.1 994.9V1027.2M1472.8 994.9V1027.2" stroke="#505050" stroke-width="1" fill="none"/>
<rect x="5.5" y="1027.2" width="1469.1" height="4.6" fill="#444"/>
<rect x="5.5" y="1031.8" width="1469.1" height="19.2" fill="#5a5a5a"/>
<path d="M10.7 1031.8V1051M16.3 1031.8V1051M22 1031.8V1051M27.7 1031.8V1051M33.3 1031.8V1051M39 1031.8V1051M44.7 1031.8V1051M50.3 1031.8V1051M56 1031.8V1051M61.7 1031.8V1051M67.3 1031.8V1051M73 1031.8V1051M78.7 1031.8V1051M84.3 1031.8V1051M90 1031.8V1051M95.7 1031.8V1051M101.3 1031.8V1051M107 1031.8V1051M112.7 1031.8V1051M118.3 1031.8V1051M124 1031.8V1051M129.7 1031.8V1051M135.3 1031.8V1051M141 1031.8V1051M146.7 1031.8V1051M152.3 1031.8V1051M158 1031.8V1051M163.7 1031.8V1051M169.3 1031.8V1051M175 1031.8V1051M180.7 1031.8V1051M186.3 1031.8V1051M192 1031.8V1051M197.7 1031.8V1051M203.3 1031.8V1051M209 1031.8V1051M214.7 1031.8V1051M220.3 1031.8V1051M226 1031.8V1051M231.7 1031.8V1051M237.3 1031.8V1051M243 1031.8V1051M248.7 1031.8V1051M254.3 1031.8V1051M260 1031.8V1051M265.7 1031.8V1051M271.3 1031.8V1051M277 1031.8V1051M282.7 1031.8V1051M288.3 1031.8V1051M294 1031.8V1051M299.7 1031.8V1051M305.4 1031.8V1051M311 1031.8V1051M316.7 1031.8V1051M322.4 1031.8V1051M328 1031.8V1051M333.7 1031.8V1051M339.4 1031.8V1051M345 1031.8V1051M350.7 1031.8V1051M356.4 1031.8V1051M362 1031.8V1051M367.7 1031.8V1051M373.4 1031.8V1051M379 1031.8V1051M384.7 1031.8V1051M390.4 1031.8V1051M396 1031.8V1051M401.7 1031.8V1051M407.4 1031.8V1051M413 1031.8V1051M418.7 1031.8V1051M424.4 1031.8V1051M430 1031.8V1051M435.7 1031.8V1051M441.4 1031.8V1051M447 1031.8V1051M452.7 1031.8V1051M458.4 1031.8V1051M464 1031.8V1051M469.7 1031.8V1051M475.4 1031.8V1051M481 1031.8V1051M486.7 1031.8V1051M492.4 1031.8V1051M498 1031.8V1051M503.7 1031.8V1051M509.4 1031.8V1051M515 1031.8V1051M520.7 1031.8V1051M526.4 1031.8V1051M532 1031.8V1051M537.7 1031.8V1051M543.4 1031.8V1051M549 1031.8V1051M554.7 1031.8V1051M560.4 1031.8V1051M566 1031.8V1051M571.7 1031.8V1051M577.4 1031.8V1051M583 1031.8V1051M588.7 1031.8V1051M594.4 1031.8V1051M600 1031.8V1051M605.7 1031.8V1051M611.4 1031.8V1051M617 1031.8V1051M622.7 1031.8V1051M628.4 1031.8V1051M634 1031.8V1051M639.7 1031.8V1051M645.4 1031.8V1051M651 1031.8V1051M656.7 1031.8V1051M662.4 1031.8V1051M668 1031.8V1051M673.7 1031.8V1051M679.4 1031.8V1051M685 1031.8V1051M690.7 1031.8V1051M696.4 1031.8V1051M702 1031.8V1051M707.7 1031.8V1051M713.4 1031.8V1051M719 1031.8V1051M724.7 1031.8V1051M730.4 1031.8V1051M736 1031.8V1051M741.7 1031.8V1051M747.4 1031.8V1051M753 1031.8V1051M758.7 1031.8V1051M764.4 1031.8V1051M770 1031.8V1051M775.7 1031.8V1051M781.4 1031.8V1051M787 1031.8V1051M792.7 1031.8V1051M798.4 1031.8V1051M804 1031.8V1051M809.7 1031.8V1051M815.4 1031.8V1051M821 1031.8V1051M826.7 1031.8V1051M832.4 1031.8V1051M838 1031.8V1051M843.7 1031.8V1051M849.4 1031.8V1051M855 1031.8V1051M860.7 1031.8V1051M866.4 1031.8V1051M872.1 1031.8V1051M877.7 1031.8V1051M883.4 1031.8V1051M889.1 1031.8V1051M894.7 1031.8V1051M900.4 1031.8V1051M906.1 1031.8V1051M911.7 1031.8V1051M917.4 1031.8V1051M923.1 1031.8V1051M928.7 1031.8V1051M934.4 1031.8V1051M940.1 1031.8V1051M945.7 1031.8V1051M951.4 1031.8V1051M957.1 1031.8V1051M962.7 1031.8V1051M968.4 1031.8V1051M974.1 1031.8V1051M979.7 1031.8V1051M985.4 1031.8V1051M991.1 1031.8V1051M996.7 1031.8V1051M1002.4 1031.8V1051M1008.1 1031.8V1051M1013.7 1031.8V1051M1019.4 1031.8V1051M1025.1 1031.8V1051M1030.7 1031.8V1051M1036.4 1031.8V1051M1042.1 1031.8V1051M1047.7 1031.8V1051M1053.4 1031.8V1051M1059.1 1031.8V1051M1064.7 1031.8V1051M1070.4 1031.8V1051M1076.1 1031.8V1051M1081.7 1031.8V1051M1087.4 1031.8V1051M1093.1 1031.8V1051M1098.7 1031.8V1051M1104.4 1031.8V1051M1110.1 1031.8V1051M1115.7 1031.8V1051M1121.4 1031.8V1051M1127.1 1031.8V1051M1132.7 1031.8V1051M1138.4 1031.8V1051M1144.1 1031.8V1051M1149.7 1031.8V1051M1155.4 1031.8V1051M1161.1 1031.8V1051M1166.7 1031.8V1051M1172.4 1031.8V1051M1178.1 1031.8V1051M1183.7 1031.8V1051M1189.4 1031.8V1051M1195.1 1031.8V1051M1200.7 1031.8V1051M1206.4 1031.8V1051M1212.1 1031.8V1051M1217.7 1031.8V1051M1223.4 1031.8V1051M1229.1 1031.8V1051M1234.7 1031.8V1051M1240.4 1031.8V1051M1246.1 1031.8V1051M1251.7 1031.8V1051M1257.4 1031.8V1051M1263.1 1031.8V1051M1268.7 1031.8V1051M1274.4 1031.8V1051M1280.1 1031.8V1051M1285.7 1031.8V1051M1291.4 1031.8V1051M1297.1 1031.8V1051M1302.7 1031.8V1051M1308.4 1031.8V1051M1314.1 1031.8V1051M1319.7 1031.8V1051M1325.4 1031.8V1051M1331.1 1031.8V1051M1336.7 1031.8V1051M1342.4 1031.8V1051M1348.1 1031.8V1051M1353.7 1031.8V1051M1359.4 1031.8V1051M1365.1 1031.8V1051M1370.7 1031.8V1051M1376.4 1031.8V1051M1382.1 1031.8V1051M1387.7 1031.8V1051M1393.4 1031.8V1051M1399.1 1031.8V1051M1404.7 1031.8V1051M1410.4 1031.8V1051M1416.1 1031.8V1051M1421.8 1031.8V1051M1427.4 1031.8V1051M1433.1 1031.8V1051M1438.8 1031.8V1051M1444.4 1031.8V1051M1450.1 1031.8V1051M1455.8 1031.8V1051M1461.4 1031.8V1051M1467.1 1031.8V1051M1472.8 1031.8V1051" stroke="#505050" stroke-width="1" fill="none"/>
<rect x="5.5" y="61.8" width="122.3" height="58.7" fill="#f6ef89"/>
<rect x="5.5" y="79.2" width="122.3" height="1" fill="rgba(0,0,0,0.12)"/>
<path d="M10.7 80.2V120.5M16.3 80.2V120.5M22 80.2V120.5M27.7 80.2V120.5M33.3 80.2V120.5M39 80.2V120.5M44.7 80.2V120.5M50.3 80.2V120.5M56 80.2V120.5M61.7 80.2V120.5M67.3 80.2V120.5M73 80.2V120.5M78.7 80.2V120.5M84.3 80.2V120.5M90 80.2V120.5M95.7 80.2V120.5M101.3 80.2V120.5M107 80.2V120.5M112.7 80.2V120.5M118.3 80.2V120.5M124 80.2V120.5" stroke="rgba(0,0,0,0.12)" stroke-width="1"/>
<path d="M5.8 90l1 0 1 0 1-.3 1-1.2 1-4 1 2.6 1-.3 1-.1 1 .5 1 .3 1-.5 1 .1 1-.7 1 .8 1 .1 1-.2 1-.6 1 .6 1 .5 1-.2 .9 .2 1 .2 1-.5 1-.1 1-.1 1-.1 1-.5 1-.1 1-1.2 1 .8 1-.4 1 1.1 1 .3 1-1.1 1 1 1 .2 1-.6 1-.5 1-.1 1-.6 1 .9 1-.9 1-.5 1-.7 1-.3 1 .5 1 .4 1 1.6 1 .2 1-.1 1 .6 1-.9 1 .1 1-1.5 1 1.5 1-.7 1 1.1 1 .2 1-.4 1 .2 .9-.3 1-.1 1-.3 1-.4 1-1.1 1 1.4 1 .5 1-2.5 1 1.8 1 .7 1 .7 1 .1 1-.3 1 .4 1 .2 1 .3 1-.2 1-.1 1 .5 1-1 1 .4 1 .6 1-.2 1-.2 1-.2 1 0 1-2.1 1 1.2 1 .7 1 0 1-.4 1 .4 1 .6 1-.7 1-.2 1-.5 1 .4 1 .5 1-1.2 1-.9 1 1.2 .9 .9 1-1 1 .9 1 0 1 .1 1 .4 1 .2 1-.3 1-.3 1-.9 1 .5 1 .7 1-.9 1 1 1-.4 1 .4 1-.3 1-.9 1-.9 1 .8 1 .7 0 7.4 -1 .7 -1 .9 -1-1 -1-1 -1-.3 -1 .5 -1-.4 -1 1 -1-.9 -1 .7 -1 .5 -1-1 -1-.2 -1-.4 -1 .2 -1 .4 -1 .2 -1-.1 -1 1 -1-1.1 -.9 1 -1 1.2 -1-.9 -1-1.3 -1 .6 -1 .4 -1-.5 -1-.3 -1-.7 -1 .7 -1 .4 -1-.4 -1 0 -1 .8 -1 1.1 -1-2.1 -1 0 -1-.3 -1-.1 -1-.2 -1 .5 -1 .5 -1-1 -1 .5 -1-.1 -1-.3 -1 .4 -1 .1 -1 .4 -1-.2 -1 .1 -1 .7 -1 .8 -1 1.8 -1-2.6 -1 .6 -1 1.4 -1-1.2 -1-.4 -1-.2 -1-.2 -.9-.4 -1 .3 -1-.5 -1 .3 -1 1.2 -1-.8 -1 1.6 -1-1.6 -1 .1 -1-.9 -1 .6 -1-.1 -1 .2 -1 1.7 -1 .4 -1 .5 -1-.3 -1-.7 -1-.5 -1-.9 -1 .9 -1-.7 -1-.1 -1-.5 -1-.7 -1 .3 -1 1.1 -1-1.2 -1 .3 -1 1.2 -1-.5 -1 .9 -1-1.3 -1-.1 -1-.6 -1 0 -1-.1 -1-.1 -1-.5 -1 .1 -.9 .2 -1-.1 -1 .5 -1 .6 -1-.6 -1-.2 -1 .1 -1 .9 -1-.9 -1 .2 -1-.5 -1 .3 -1 .5 -1-.1 -1-.3 -1 2.7 -1-4.2 -1-1.3 -1-.3 -1 0 -1 0z" fill="#2c2b18"/>
<path d="M5.8 110.2l1 0 1 0 1-.3 1-1.2 1-4 1 2.6 1-.3 1-.1 1 .5 1 .3 1-.5 1 .1 1-.7 1 .8 1 .1 1-.2 1-.6 1 .6 1 .5 1-.2 .9 .2 1 .2 1-.5 1-.1 1-.1 1-.1 1-.5 1-.1 1-1.2 1 .8 1-.4 1 1.1 1 .3 1-1.1 1 1 1 .2 1-.6 1-.5 1-.1 1-.6 1 .9 1-.9 1-.5 1-.7 1-.3 1 .5 1 .4 1 1.6 1 .2 1-.1 1 .6 1-.9 1 .1 1-1.5 1 1.5 1-.7 1 1.1 1 .2 1-.4 1 .2 .9-.3 1-.1 1-.3 1-.4 1-1.1 1 1.4 1 .5 1-2.5 1 1.8 1 .7 1 .7 1 .1 1-.3 1 .4 1 .2 1 .3 1-.2 1-.1 1 .5 1-1 1 .4 1 .6 1-.2 1-.2 1-.2 1 0 1-2.1 1 1.2 1 .7 1 0 1-.4 1 .4 1 .6 1-.7 1-.2 1-.5 1 .4 1 .5 1-1.2 1-.9 1 1.2 .9 .9 1-1 1 .9 1 0 1 .1 1 .4 1 .2 1-.3 1-.3 1-.9 1 .5 1 .7 1-.9 1 1 1-.4 1 .4 1-.3 1-.9 1-.9 1 .8 1 .7 0 7.4 -1 .7 -1 .9 -1-1 -1-1 -1-.3 -1 .5 -1-.4 -1 1 -1-.9 -1 .7 -1 .5 -1-1 -1-.2 -1-.4 -1 .2 -1 .4 -1 .2 -1-.1 -1 1 -1-1.1 -.9 1 -1 1.2 -1-.9 -1-1.3 -1 .6 -1 .4 -1-.5 -1-.3 -1-.7 -1 .7 -1 .4 -1-.4 -1 0 -1 .8 -1 1.1 -1-2.1 -1 0 -1-.3 -1-.1 -1-.2 -1 .5 -1 .5 -1-1 -1 .5 -1-.1 -1-.3 -1 .4 -1 .1 -1 .4 -1-.2 -1 .1 -1 .7 -1 .8 -1 1.8 -1-2.6 -1 .6 -1 1.4 -1-1.2 -1-.4 -1-.2 -1-.2 -.9-.4 -1 .3 -1-.5 -1 .3 -1 1.2 -1-.8 -1 1.6 -1-1.6 -1 .1 -1-.9 -1 .6 -1-.1 -1 .2 -1 1.7 -1 .4 -1 .5 -1-.3 -1-.7 -1-.5 -1-.9 -1 .9 -1-.7 -1-.1 -1-.5 -1-.7 -1 .3 -1 1.1 -1-1.2 -1 .3 -1 1.2 -1-.5 -1 .9 -1-1.3 -1-.1 -1-.6 -1 0 -1-.1 -1-.1 -1-.5 -1 .1 -.9 .2 -1-.1 -1 .5 -1 .6 -1-.6 -1-.2 -1 .1 -1 .9 -1-.9 -1 .2 -1-.5 -1 .3 -1 .5 -1-.1 -1-.3 -1 2.7 -1-4.2 -1-1.3 -1-.3 -1 0 -1 0z" fill="#2c2b18"/>
<svg x="5.5" y="61.8" width="121.8" height="18"><text x="3.8" y="14.1" font-size="11" letter-spacing="0.55" fill="rgba(0,0,0,0.75)" stroke="rgba(0,0,0,0.75)" stroke-width="0.2">Patterning2 1-UndW_L1</text></svg>
<rect x="128.2" y="61.8" width="27.3" height="58.7" fill="#f6ef89"/>
<rect x="128.2" y="79.2" width="27.3" height="1" fill="rgba(0,0,0,0.12)"/>
<path d="M129.7 80.2V120.5M135.3 80.2V120.5M141 80.2V120.5M146.7 80.2V120.5M152.3 80.2V120.5" stroke="rgba(0,0,0,0.12)" stroke-width="1"/>
<path d="M128.5 87.3l1 .5 1 .3 1 .3 1 0 .9-.1 1-.1 1-.2 1 .1 1 .1 1-.9 1-.5 1 .6 1 .5 .9 .2 1-.2 1-.2 1-.4 1 .4 1 .3 1-.6 1-.1 1 .5 .9 .3 1-.1 1 .3 1-.7 1 .4 0 5.3 -1 .4 -1-.7 -1 .4 -1-.2 -.9 .3 -1 .6 -1-.1 -1-.7 -1 .4 -1 .3 -1-.4 -1-.2 -1-.1 -.9 .1 -1 .6 -1 .6 -1-.5 -1-1 -1 .1 -1 .1 -1-.2 -1-.1 -.9-.1 -1 0 -1 .3 -1 .3 -1 .5z" fill="#2c2b18"/>
<path d="M128.5 107.5l1 .5 1 .3 1 .3 1 0 .9-.1 1-.1 1-.2 1 .1 1 .1 1-.9 1-.5 1 .6 1 .5 .9 .2 1-.2 1-.2 1-.4 1 .4 1 .3 1-.6 1-.1 1 .5 .9 .3 1-.1 1 .3 1-.7 1 .4 0 5.3 -1 .4 -1-.7 -1 .4 -1-.2 -.9 .3 -1 .6 -1-.1 -1-.7 -1 .4 -1 .3 -1-.4 -1-.2 -1-.1 -.9 .1 -1 .6 -1 .6 -1-.5 -1-1 -1 .1 -1 .1 -1-.2 -1-.1 -.9-.1 -1 0 -1 .3 -1 .3 -1 .5z" fill="#2c2b18"/>
<svg x="128.2" y="61.8" width="26.8" height="18"><text x="3.8" y="14.1" font-size="11" letter-spacing="0.55" fill="rgba(0,0,0,0.75)" stroke="rgba(0,0,0,0.75)" stroke-width="0.2">Patterning2</text></svg>
<rect x="128.2" y="61.8" width="1" height="58.7" fill="rgba(0,0,0,0.2)"/>
<rect x="157.5" y="61.8" width="19.7" height="58.7" fill="#f6ef89"/>
<rect x="157.5" y="79.2" width="19.7" height="1" fill="rgba(0,0,0,0.12)"/>
<path d="M163.7 80.2V120.5M169.3 80.2V120.5M175 80.2V120.5" stroke="rgba(0,0,0,0.12)" stroke-width="1"/>
<path d="M157.8 87.8l1 .2 1 .1 1 .1 1-.1 1.1 0 1-.2 1-.1 1 .1 1-.2 1 .1 1-.1 1 0 1.1 .2 1-.5 1-.1 1 .5 1-.3 0 6.3 -1-.2 -1 .4 -1 0 -1-.5 -1.1 .1 -1 .1 -1-.2 -1 .1 -1-.1 -1 .1 -1-.2 -1-.1 -1.1-.1 -1 0 -1 0 -1 .1 -1 .3z" fill="#2c2b18"/>
<path d="M157.8 108l1 .2 1 .1 1 .1 1-.1 1.1 0 1-.2 1-.1 1 .1 1-.2 1 .1 1-.1 1 0 1.1 .2 1-.5 1-.1 1 .5 1-.3 0 6.3 -1-.2 -1 .4 -1 0 -1-.5 -1.1 .1 -1 .1 -1-.2 -1 .1 -1-.1 -1 .1 -1-.2 -1-.1 -1.1-.1 -1 0 -1 0 -1 .1 -1 .3z" fill="#2c2b18"/>
<svg x="157.5" y="61.8" width="19.2" height="18"><text x="3.8" y="14.1" font-size="11" letter-spacing="0.55" fill="rgba(0,0,0,0.75)" stroke="rgba(0,0,0,0.75)" stroke-width="0.2">Patterning2</text></svg>
<rect x="157.5" y="61.8" width="1" height="58.7" fill="rgba(0,0,0,0.2)"/>
<rect x="177.2" y="61.8" width="3.3" height="58.7" fill="#e3dc7c"/>
<rect x="177.2" y="79.2" width="3.3" height="1" fill="rgba(0,0,0,0.12)"/>
<path d="M177.5 88.5l.9-.5 .9 0 .9 .2 0 4.9 -.9 .2 -.9 0 -.9-.5z" fill="#2c2b18"/>
<path d="M177.5 108.7l.9-.5 .9 0 .9 .2 0 4.9 -.9 .2 -.9 0 -.9-.5z" fill="#2c2b18"/>
<rect x="177.2" y="61.8" width="1" height="58.7" fill="rgba(0,0,0,0.25)"/>
<rect x="180.5" y="61.8" width="3" height="58.7" fill="#e3dc7c"/>
<rect x="180.5" y="79.2" width="3" height="1" fill="rgba(0,0,0,0.12)"/>
<path d="M180.8 88.5l1.2-.3 1.2 .4 0 4.1 -1.2 .4 -1.2-.3z" fill="#2c2b18"/>
<path d="M180.8 108.7l1.2-.3 1.2 .4 0 4.1 -1.2 .4 -1.2-.3z" fill="#2c2b18"/>
<rect x="180.5" y="61.8" width="1" height="58.7" fill="rgba(0,0,0,0.25)"/>
<rect x="183.5" y="61.8" width="3.5" height="58.7" fill="#e3dc7c"/>
<rect x="183.5" y="79.2" width="3.5" height="1" fill="rgba(0,0,0,0.12)"/>
<path d="M186.3 80.2V120.5" stroke="rgba(0,0,0,0.12)" stroke-width="1"/>
<path d="M183.8 88.4l1-.3 .9 .7 1 .1 0 3.4 -1 .1 -.9 .8 -1-.3z" fill="#2c2b18"/>
<path d="M183.8 108.6l1-.3 .9 .7 1 .1 0 3.4 -1 .1 -.9 .8 -1-.3z" fill="#2c2b18"/>
<rect x="183.5" y="61.8" width="1" height="58.7" fill="rgba(0,0,0,0.25)"/>
<rect x="187" y="61.8" width="32" height="58.7" fill="#f6ef89"/>
<rect x="187" y="79.2" width="32" height="1" fill="rgba(0,0,0,0.12)"/>
<path d="M192 80.2V120.5M197.7 80.2V120.5M203.3 80.2V120.5M209 80.2V120.5M214.7 80.2V120.5" stroke="rgba(0,0,0,0.12)" stroke-width="1"/>
<path d="M187.3 89.1l1-.1 1-.3 1-.1 1 .3 1-.6 1-.8 1 .6 1.1-1 1 .8 1-.5 1 0 1 0 1 .5 1-.7 1 .4 1-.6 1-1.5 1 1.7 1 .2 1-.3 1-.1 1 .5 1.1-.7 1 .2 1-.4 1-.4 1 .5 1 .3 1-.4 1-1.8 0 11.9 -1-1.9 -1-.4 -1 .3 -1 .5 -1-.4 -1-.4 -1 .2 -1.1-.7 -1 .5 -1-.1 -1-.4 -1 .2 -1 1.8 -1-1.5 -1-.6 -1 .4 -1-.7 -1 .4 -1 .1 -1-.1 -1-.4 -1 .8 -1.1-1 -1 .6 -1-.9 -1-.6 -1 .3 -1-.1 -1-.3 -1-.1z" fill="#2c2b18"/>
<path d="M187.3 109.3l1-.1 1-.3 1-.1 1 .3 1-.6 1-.8 1 .6 1.1-1 1 .8 1-.5 1 0 1 0 1 .5 1-.7 1 .4 1-.6 1-1.5 1 1.7 1 .2 1-.3 1-.1 1 .5 1.1-.7 1 .2 1-.4 1-.4 1 .5 1 .3 1-.4 1-1.8 0 11.9 -1-1.9 -1-.4 -1 .3 -1 .5 -1-.4 -1-.4 -1 .2 -1.1-.7 -1 .5 -1-.1 -1-.4 -1 .2 -1 1.8 -1-1.5 -1-.6 -1 .4 -1-.7 -1 .4 -1 .1 -1-.1 -1-.4 -1 .8 -1.1-1 -1 .6 -1-.9 -1-.6 -1 .3 -1-.1 -1-.3 -1-.1z" fill="#2c2b18"/>
<svg x="187" y="61.8" width="31.5" height="18"><text x="3.8" y="14.1" font-size="11" letter-spacing="0.55" fill="rgba(0,0,0,0.75)" stroke="rgba(0,0,0,0.75)" stroke-width="0.2">Patterning2</text></svg>
<rect x="187" y="61.8" width="1" height="58.7" fill="rgba(0,0,0,0.2)"/>
<rect x="219.3" y="61.8" width="16.7" height="58.7" fill="#f6ef89"/>
<rect x="219.3" y="79.2" width="16.7" height="1" fill="rgba(0,0,0,0.12)"/>
<path d="M220.3 80.2V120.5M226 80.2V120.5M231.7 80.2V120.5" stroke="rgba(0,0,0,0.12)" stroke-width="1"/>
<path d="M219.8 90l1 0 1 0 .9 0 1 0 1 0 1 0 1 0 .9 0 1 0 1 0 1 0 1 0 1 0 .9 0 1 0 1 0 0 1.2 -1 0 -1 0 -.9 0 -1 0 -1 0 -1 0 -1 0 -1 0 -.9 0 -1 0 -1 0 -1 0 -1 0 -.9 0 -1 0 -1 0z" fill="#2c2b18"/>
<path d="M219.8 110.2l1 0 1 0 .9 0 1 0 1 0 1 0 1 0 .9 0 1 0 1 0 1 0 1 0 1 0 .9 0 1 0 1 0 0 1.2 -1 0 -1 0 -.9 0 -1 0 -1 0 -1 0 -1 0 -1 0 -.9 0 -1 0 -1 0 -1 0 -1 0 -.9 0 -1 0 -1 0z" fill="#2c2b18"/>
<svg x="219.3" y="61.8" width="16.2" height="18"><text x="3.8" y="14.1" font-size="11" letter-spacing="0.55" fill="rgba(0,0,0,0.75)" stroke="rgba(0,0,0,0.75)" stroke-width="0.2">Patterning2</text></svg>
<rect x="219.3" y="61.8" width="1" height="58.7" fill="rgba(0,0,0,0.2)"/>
<rect x="5.5" y="122.5" width="88.5" height="58.9" fill="#d3a874"/>
<rect x="5.5" y="139.8" width="88.5" height="1" fill="rgba(0,0,0,0.12)"/>
<path d="M10.7 140.8V181.3M16.3 140.8V181.3M22 140.8V181.3M27.7 140.8V181.3M33.3 140.8V181.3M39 140.8V181.3M44.7 140.8V181.3M50.3 140.8V181.3M56 140.8V181.3M61.7 140.8V181.3M67.3 140.8V181.3M73 140.8V181.3M78.7 140.8V181.3M84.3 140.8V181.3M90 140.8V181.3" stroke="rgba(0,0,0,0.12)" stroke-width="1"/>
<path d="M5.8 150.7l1 0 1 0 1 0 1 0 1 0 1-.1 1 .1 1 0 1 0 1 0 1 0 1 0 1 0 1 0 1 0 1 0 1-.2 1 .1 1 .1 1 0 1 0 1 0 1 0 1 0 1 0 1-.2 1 0 1 0 1-.1 1 0 1-.2 1-.1 1 .1 1-.4 1 .2 1-.2 1 0 1-.1 1 0 1-.4 1 0 1 0 1 .2 1-.5 .9-.2 1-.2 1 .1 1 .3 1-.7 1 .5 1-.6 1 .6 1-.4 1 .2 1-.4 1 0 1 .2 1-.5 1-.3 1-.8 1 .5 1 .1 1 .1 1-.4 1 .4 1-1.2 1 .6 1 .1 1-.5 1 .8 1-.8 1 .4 1 .1 1 .4 1-1 1-.1 1 .5 1-.2 1-.5 1 1.1 1 .1 1 .1 1-.7 1 0 1 .3 1-.4 1 .2 1-.5 0 10.1 -1-.4 -1 .1 -1-.4 -1 .3 -1 .1 -1-.8 -1 0 -1 .2 -1 1.2 -1-.6 -1-.2 -1 .5 -1-.1 -1-1 -1 .5 -1 0 -1 .4 -1-.8 -1 .8 -1-.4 -1 0 -1 .7 -1-1.4 -1 .5 -1-.4 -1 .1 -1 .1 -1 .6 -1-.9 -1-.3 -1-.6 -1 .2 -1 0 -1-.4 -1 .2 -1-.4 -1 .7 -1-.7 -1 .6 -1-.8 -1 .4 -1 0 -1-.2 -.9-.2 -1-.5 -1 .2 -1 0 -1 0 -1-.4 -1 0 -1-.2 -1 0 -1-.1 -1 .1 -1-.3 -1 0 -1 0 -1-.2 -1 0 -1-.2 -1 .1 -1-.1 -1-.2 -1 0 -1 0 -1 0 -1 0 -1 0 -1 0 -1 .1 -1 .1 -1-.2 -1 0 -1 0 -1 0 -1 0 -1 0 -1 0 -1 0 -1 0 -1 0 -1 .1 -1-.1 -1 0 -1 0 -1 0 -1 0 -1 0z" fill="#2a2116"/>
<path d="M5.8 170.9l1 0 1 0 1 0 1 0 1 0 1-.1 1 .1 1 0 1 0 1 0 1 0 1 0 1 0 1 0 1 0 1 0 1-.2 1 .1 1 .1 1 0 1 0 1 0 1 0 1 0 1 0 1-.2 1 0 1 0 1-.1 1 0 1-.2 1-.1 1 .1 1-.4 1 .2 1-.2 1 0 1-.1 1 0 1-.4 1 0 1 0 1 .2 1-.5 .9-.2 1-.2 1 .1 1 .3 1-.7 1 .5 1-.6 1 .6 1-.4 1 .2 1-.4 1 0 1 .2 1-.5 1-.3 1-.8 1 .5 1 .1 1 .1 1-.4 1 .4 1-1.2 1 .6 1 .1 1-.5 1 .8 1-.8 1 .4 1 .1 1 .4 1-1 1-.1 1 .5 1-.2 1-.5 1 1.1 1 .1 1 .1 1-.7 1 0 1 .3 1-.4 1 .2 1-.5 0 10.1 -1-.4 -1 .1 -1-.4 -1 .3 -1 .1 -1-.8 -1 0 -1 .2 -1 1.2 -1-.6 -1-.2 -1 .5 -1-.1 -1-1 -1 .5 -1 0 -1 .4 -1-.8 -1 .8 -1-.4 -1 0 -1 .7 -1-1.4 -1 .5 -1-.4 -1 .1 -1 .1 -1 .6 -1-.9 -1-.3 -1-.6 -1 .2 -1 0 -1-.4 -1 .2 -1-.4 -1 .7 -1-.7 -1 .6 -1-.8 -1 .4 -1 0 -1-.2 -.9-.2 -1-.5 -1 .2 -1 0 -1 0 -1-.4 -1 0 -1-.2 -1 0 -1-.1 -1 .1 -1-.3 -1 0 -1 0 -1-.2 -1 0 -1-.2 -1 .1 -1-.1 -1-.2 -1 0 -1 0 -1 0 -1 0 -1 0 -1 0 -1 .1 -1 .1 -1-.2 -1 0 -1 0 -1 0 -1 0 -1 0 -1 0 -1 0 -1 0 -1 0 -1 .1 -1-.1 -1 0 -1 0 -1 0 -1 0 -1 0z" fill="#2a2116"/>
<svg x="5.5" y="122.5" width="88" height="18"><text x="3.8" y="14.1" font-size="11" letter-spacing="0.55" fill="rgba(0,0,0,0.75)" stroke="rgba(0,0,0,0.75)" stroke-width="0.2">Patterning2 2-UndW</text></svg>
<rect x="96.5" y="122.5" width="58" height="58.9" fill="#d3a874"/>
<rect x="96.5" y="139.8" width="58" height="1" fill="rgba(0,0,0,0.12)"/>
<path d="M101.3 140.8V181.3M107 140.8V181.3M112.7 140.8V181.3M118.3 140.8V181.3M124 140.8V181.3M129.7 140.8V181.3M135.3 140.8V181.3M141 140.8V181.3M146.7 140.8V181.3M152.3 140.8V181.3" stroke="rgba(0,0,0,0.12)" stroke-width="1"/>
<path d="M96.8 146.1l1-.9 1 1.2 1-.4 1 .7 1-.9 1 .2 1 .6 1.1-.9 1 .3 1 .8 1-.7 1 .3 1-1.2 1 1.4 1-.4 1-.5 1 .1 1 1.1 1-.4 1 .2 1-.5 1.1-.1 1-.2 1 .4 1 .4 1-.5 1 1.2 1-.4 1-.2 1 .4 1-.1 1-.4 1 .2 1 .6 1 .1 1.1 .2 1-.8 1 .2 1-.6 1 .6 1-.5 1 .5 1 0 1 0 1 .1 1 .2 1-.6 1 .3 1-.2 1.1 .3 1-.4 1-.1 1 .2 1-.1 1 .9 1-.3 1-.3 0 8.3 -1-.3 -1-.3 -1 .9 -1-.1 -1 .2 -1-.1 -1-.4 -1.1 .3 -1-.1 -1 .2 -1-.6 -1 .2 -1 .1 -1 0 -1 0 -1 .5 -1-.5 -1 .6 -1-.6 -1 .2 -1-.9 -1.1 .3 -1 .1 -1 .6 -1 .2 -1-.4 -1-.1 -1 .4 -1-.2 -1-.4 -1 1.3 -1-.6 -1 .4 -1 .5 -1-.2 -1.1-.1 -1-.6 -1 .2 -1-.4 -1 1.2 -1 0 -1-.4 -1-.5 -1 1.5 -1-1.3 -1 .3 -1-.7 -1 .9 -1 .3 -1.1-1 -1 .6 -1 .3 -1-1 -1 .8 -1-.5 -1 1.3 -1-.9z" fill="#2a2116"/>
<path d="M96.8 166.3l1-.9 1 1.2 1-.4 1 .7 1-.9 1 .2 1 .6 1.1-.9 1 .3 1 .8 1-.7 1 .3 1-1.2 1 1.4 1-.4 1-.5 1 .1 1 1.1 1-.4 1 .2 1-.5 1.1-.1 1-.2 1 .4 1 .4 1-.5 1 1.2 1-.4 1-.2 1 .4 1-.1 1-.4 1 .2 1 .6 1 .1 1.1 .2 1-.8 1 .2 1-.6 1 .6 1-.5 1 .5 1 0 1 0 1 .1 1 .2 1-.6 1 .3 1-.2 1.1 .3 1-.4 1-.1 1 .2 1-.1 1 .9 1-.3 1-.3 0 8.3 -1-.3 -1-.3 -1 .9 -1-.1 -1 .2 -1-.1 -1-.4 -1.1 .3 -1-.1 -1 .2 -1-.6 -1 .2 -1 .1 -1 0 -1 0 -1 .5 -1-.5 -1 .6 -1-.6 -1 .2 -1-.9 -1.1 .3 -1 .1 -1 .6 -1 .2 -1-.4 -1-.1 -1 .4 -1-.2 -1-.4 -1 1.3 -1-.6 -1 .4 -1 .5 -1-.2 -1.1-.1 -1-.6 -1 .2 -1-.4 -1 1.2 -1 0 -1-.4 -1-.5 -1 1.5 -1-1.3 -1 .3 -1-.7 -1 .9 -1 .3 -1.1-1 -1 .6 -1 .3 -1-1 -1 .8 -1-.5 -1 1.3 -1-.9z" fill="#2a2116"/>
<svg x="96.5" y="122.5" width="57.5" height="18"><text x="3.8" y="14.1" font-size="11" letter-spacing="0.55" fill="rgba(0,0,0,0.75)" stroke="rgba(0,0,0,0.75)" stroke-width="0.2">Patterning2</text></svg>
<rect x="96.5" y="122.5" width="1" height="58.9" fill="rgba(0,0,0,0.2)"/>
<rect x="155" y="122.5" width="1.2" height="58.9" fill="#e8e8e8"/>
<rect x="157" y="122.5" width="22.5" height="58.9" fill="#d3a874"/>
<rect x="157" y="139.8" width="22.5" height="1" fill="rgba(0,0,0,0.12)"/>
<path d="M158 140.8V181.3M163.7 140.8V181.3M169.3 140.8V181.3M175 140.8V181.3" stroke="rgba(0,0,0,0.12)" stroke-width="1"/>
<path d="M157.3 145.8l1 0 1 0 1 .2 1-.2 1 0 1 .5 1-.5 1 .4 1 .5 1 .2 .9-.4 1 .2 1-.9 1 0 1 .3 1 .5 1-.4 1-.1 1 0 1-.3 1 0 1 0 0 11.2 -1 0 -1 0 -1-.3 -1-.1 -1 0 -1-.4 -1 .5 -1 .3 -1 0 -1-1 -1 .3 -.9-.5 -1 .2 -1 .5 -1 .5 -1-.5 -1 .4 -1 .1 -1-.2 -1 .2 -1-.1 -1 .1z" fill="#2a2116"/>
<path d="M157.3 166l1 0 1 0 1 .2 1-.2 1 0 1 .5 1-.5 1 .4 1 .5 1 .2 .9-.4 1 .2 1-.9 1 0 1 .3 1 .5 1-.4 1-.1 1 0 1-.3 1 0 1 0 0 11.2 -1 0 -1 0 -1-.3 -1-.1 -1 0 -1-.4 -1 .5 -1 .3 -1 0 -1-1 -1 .3 -.9-.5 -1 .2 -1 .5 -1 .5 -1-.5 -1 .4 -1 .1 -1-.2 -1 .2 -1-.1 -1 .1z" fill="#2a2116"/>
<svg x="157" y="122.5" width="22" height="18"><text x="3.8" y="14.1" font-size="11" letter-spacing="0.55" fill="rgba(0,0,0,0.75)" stroke="rgba(0,0,0,0.75)" stroke-width="0.2">Patterning2</text></svg>
<rect x="179.5" y="122.5" width="7.5" height="58.9" fill="#b89060"/>
<rect x="179.5" y="139.8" width="7.5" height="1" fill="rgba(0,0,0,0.12)"/>
<path d="M180.7 140.8V181.3M186.3 140.8V181.3" stroke="rgba(0,0,0,0.12)" stroke-width="1"/>
<path d="M179.8 148.9l1 0 1 0 1-.1 .9 .5 1-.3 1-.2 1 .1 0 4.8 -1 .1 -1-.2 -1-.3 -.9 .5 -1 0 -1-.1 -1 0z" fill="#2a2116"/>
<path d="M179.8 169.1l1 0 1 0 1-.1 .9 .5 1-.3 1-.2 1 .1 0 4.8 -1 .1 -1-.2 -1-.3 -.9 .5 -1 0 -1-.1 -1 0z" fill="#2a2116"/>
<rect x="179.5" y="122.5" width="1" height="58.9" fill="rgba(0,0,0,0.2)"/>
<rect x="187" y="122.5" width="46" height="58.9" fill="#d3a874"/>
<rect x="187" y="139.8" width="46" height="1" fill="rgba(0,0,0,0.12)"/>
<path d="M192 140.8V181.3M197.7 140.8V181.3M203.3 140.8V181.3M209 140.8V181.3M214.7 140.8V181.3M220.3 140.8V181.3M226 140.8V181.3M231.7 140.8V181.3" stroke="rgba(0,0,0,0.12)" stroke-width="1"/>
<path d="M187.3 147l1 .1 1-.2 1-.1 1-.8 1 1.7 1.1-.7 1-.1 1 .8 1-.9 1-.3 1 .5 1-.2 1-.5 1-.5 1 1.4 1-1.4 1.1 .6 1 .2 1-.8 1 .5 1 .1 1 0 1-.1 1 .1 1-.4 1 .6 1 1 1 .6 1.1 .6 1-.1 1 .8 1 .3 1 .6 1 .3 1 0 1 0 1 0 1 0 1-.1 1.1 0 1 0 1 0 1 0 1 0 1 .1 0 1.1 -1 .1 -1 0 -1 0 -1 0 -1 0 -1.1 0 -1-.1 -1 0 -1 0 -1 0 -1 .1 -1 .2 -1 .6 -1 .4 -1 .8 -1 0 -1.1 .6 -1 .6 -1 1.1 -1 .5 -1-.3 -1 0 -1-.1 -1 .1 -1 .1 -1 .5 -1-.9 -1 .3 -1.1 .6 -1-1.5 -1 1.5 -1-.6 -1-.5 -1-.2 -1 .6 -1-.3 -1-1 -1 .8 -1-.1 -1.1-.7 -1 1.7 -1-.8 -1-.1 -1-.2 -1 .2z" fill="#2a2116"/>
<path d="M187.3 167.2l1 .1 1-.2 1-.1 1-.8 1 1.7 1.1-.7 1-.1 1 .8 1-.9 1-.3 1 .5 1-.2 1-.5 1-.5 1 1.4 1-1.4 1.1 .6 1 .2 1-.8 1 .5 1 .1 1 0 1-.1 1 .1 1-.4 1 .6 1 1 1 .6 1.1 .6 1-.1 1 .8 1 .3 1 .6 1 .3 1 0 1 0 1 0 1 0 1-.1 1.1 0 1 0 1 0 1 0 1 0 1 .1 0 1.1 -1 .1 -1 0 -1 0 -1 0 -1 0 -1.1 0 -1-.1 -1 0 -1 0 -1 0 -1 .1 -1 .2 -1 .6 -1 .4 -1 .8 -1 0 -1.1 .6 -1 .6 -1 1.1 -1 .5 -1-.3 -1 0 -1-.1 -1 .1 -1 .1 -1 .5 -1-.9 -1 .3 -1.1 .6 -1-1.5 -1 1.5 -1-.6 -1-.5 -1-.2 -1 .6 -1-.3 -1-1 -1 .8 -1-.1 -1.1-.7 -1 1.7 -1-.8 -1-.1 -1-.2 -1 .2z" fill="#2a2116"/>
<svg x="187" y="122.5" width="45.5" height="18"><text x="3.8" y="14.1" font-size="11" letter-spacing="0.55" fill="rgba(0,0,0,0.75)" stroke="rgba(0,0,0,0.75)" stroke-width="0.2">Pattern</text></svg>
<rect x="187" y="122.5" width="1" height="58.9" fill="rgba(0,0,0,0.2)"/>
<rect x="234" y="183.2" width="14.6" height="58.9" fill="#feeb4b"/>
<rect x="234" y="200.7" width="14.6" height="1" fill="rgba(0,0,0,0.12)"/>
<path d="M237.3 201.7V242.1M243 201.7V242.1" stroke="rgba(0,0,0,0.12)" stroke-width="1"/>
<path d="M234.3 211.4l1-2.2 1-1.1 1-.2 1 2.5 1 1.1 1 0 1 0 1 0 1 0 1 0 1 0 1 0 1 0 1 0 0 1.1 -1 0 -1 0 -1 0 -1 0 -1 0 -1 0 -1 0 -1 0 -1 0 -1 1.2 -1 2.6 -1-.2 -1-1.1 -1-2.4z" fill="#2e2a10"/>
<path d="M234.3 231.6l1-2.2 1-1.1 1-.2 1 2.5 1 1.1 1 0 1 0 1 0 1 0 1 0 1 0 1 0 1 0 1 0 0 1.1 -1 0 -1 0 -1 0 -1 0 -1 0 -1 0 -1 0 -1 0 -1 0 -1 1.2 -1 2.6 -1-.2 -1-1.1 -1-2.4z" fill="#2e2a10"/>
<svg x="234" y="183.2" width="14.1" height="18"><text x="3.8" y="14.1" font-size="11" letter-spacing="0.55" fill="rgba(0,0,0,0.75)" stroke="rgba(0,0,0,0.75)" stroke-width="0.2">7</text></svg>
<rect x="248.6" y="183.2" width="14" height="58.9" fill="#feeb4b"/>
<rect x="248.6" y="200.7" width="14" height="1" fill="rgba(0,0,0,0.12)"/>
<path d="M254.3 201.7V242.1M260 201.7V242.1" stroke="rgba(0,0,0,0.12)" stroke-width="1"/>
<path d="M248.9 211.5l1 0 1.1 0 1 0 1-.7 1.1-2.8 1-1.6 1-1 1 1 1.1 2.1 1 2.9 1 .1 1.1 0 1 0 0 1.1 -1 0 -1.1 0 -1 .1 -1 3 -1.1 2.3 -1 1 -1-1.1 -1-1.6 -1.1-2.9 -1-.8 -1 0 -1.1 0 -1 0z" fill="#2e2a10"/>
<path d="M248.9 231.7l1 0 1.1 0 1 0 1-.7 1.1-2.8 1-1.6 1-1 1 1 1.1 2.1 1 2.9 1 .1 1.1 0 1 0 0 1.1 -1 0 -1.1 0 -1 .1 -1 3 -1.1 2.3 -1 1 -1-1.1 -1-1.6 -1.1-2.9 -1-.8 -1 0 -1.1 0 -1 0z" fill="#2e2a10"/>
<svg x="248.6" y="183.2" width="13.5" height="18"><text x="3.8" y="14.1" font-size="11" letter-spacing="0.55" fill="rgba(0,0,0,0.75)" stroke="rgba(0,0,0,0.75)" stroke-width="0.2">7-</text></svg>
<rect x="248.6" y="183.2" width="1" height="58.9" fill="rgba(0,0,0,0.2)"/>
<rect x="262.6" y="183.2" width="11.4" height="58.9" fill="#feeb4b"/>
<rect x="262.6" y="200.7" width="11.4" height="1" fill="rgba(0,0,0,0.12)"/>
<path d="M265.7 201.7V242.1M271.3 201.7V242.1" stroke="rgba(0,0,0,0.12)" stroke-width="1"/>
<path d="M262.9 206.2l1 .7 1 .8 .9 .8 1 2.4 1 .6 1 0 1 0 1 0 .9 0 1 0 1 0 0 1.1 -1 0 -1 0 -.9 0 -1 0 -1 0 -1 0 -1 .7 -1 2.5 -.9 .9 -1 .7 -1 .8z" fill="#2e2a10"/>
<path d="M262.9 226.4l1 .7 1 .8 .9 .8 1 2.4 1 .6 1 0 1 0 1 0 .9 0 1 0 1 0 0 1.1 -1 0 -1 0 -.9 0 -1 0 -1 0 -1 0 -1 .7 -1 2.5 -.9 .9 -1 .7 -1 .8z" fill="#2e2a10"/>
<svg x="262.6" y="183.2" width="10.9" height="18"><text x="3.8" y="14.1" font-size="11" letter-spacing="0.55" fill="rgba(0,0,0,0.75)" stroke="rgba(0,0,0,0.75)" stroke-width="0.2">7</text></svg>
<rect x="262.6" y="183.2" width="1" height="58.9" fill="rgba(0,0,0,0.2)"/>
<rect x="293.6" y="183.2" width="3" height="58.9" fill="#feeb4b"/>
<rect x="293.6" y="200.7" width="3" height="1" fill="rgba(0,0,0,0.12)"/>
<path d="M293.9 207.9l1.2 .9 1.2 1.9 0 2.7 -1.2 2 -1.2 1z" fill="#2e2a10"/>
<path d="M293.9 228.1l1.2 .9 1.2 1.9 0 2.7 -1.2 2 -1.2 1z" fill="#2e2a10"/>
<rect x="237.6" y="244.1" width="2" height="58.8" fill="#7a5a3a"/>
<rect x="237.6" y="261.4" width="2" height="1" fill="rgba(0,0,0,0.12)"/>
<rect x="240.9" y="244.1" width="3.9" height="58.8" fill="#a27a53"/>
<rect x="240.9" y="261.4" width="3.9" height="1" fill="rgba(0,0,0,0.12)"/>
<path d="M243 262.4V302.9" stroke="rgba(0,0,0,0.12)" stroke-width="1"/>
<path d="M241.2 272.3l1.1-2.5 1.1-2.4 1.1 1.3 0 8.6 -1.1 1.3 -1.1-2.6 -1.1-2.6z" fill="#25190f"/>
<path d="M241.2 292.5l1.1-2.5 1.1-2.4 1.1 1.3 0 8.6 -1.1 1.3 -1.1-2.6 -1.1-2.6z" fill="#25190f"/>
<rect x="240.9" y="244.1" width="1" height="58.8" fill="rgba(0,0,0,0.25)"/>
<rect x="246.7" y="244.1" width="6.9" height="58.8" fill="#a27a53"/>
<rect x="246.7" y="261.4" width="6.9" height="1" fill="rgba(0,0,0,0.12)"/>
<path d="M248.7 262.4V302.9" stroke="rgba(0,0,0,0.12)" stroke-width="1"/>
<path d="M247 272.3l1 0 1.1 0 1.1-3.5 1-1.1 1 1.1 1.1 3.5 0 1.1 -1.1 3.7 -1 1.1 -1-1.1 -1.1-3.7 -1.1 0 -1 0z" fill="#25190f"/>
<path d="M247 292.5l1 0 1.1 0 1.1-3.5 1-1.1 1 1.1 1.1 3.5 0 1.1 -1.1 3.7 -1 1.1 -1-1.1 -1.1-3.7 -1.1 0 -1 0z" fill="#25190f"/>
<svg x="246.7" y="244.1" width="6.4" height="18"><text x="3.8" y="14.1" font-size="11" letter-spacing="0.55" fill="rgba(0,0,0,0.75)" stroke="rgba(0,0,0,0.75)" stroke-width="0.2">P</text></svg>
<rect x="246.7" y="244.1" width="1" height="58.8" fill="rgba(0,0,0,0.25)"/>
<rect x="261.7" y="244.1" width="7.6" height="58.8" fill="#a27a53"/>
<rect x="261.7" y="261.4" width="7.6" height="1" fill="rgba(0,0,0,0.12)"/>
<path d="M265.7 262.4V302.9" stroke="rgba(0,0,0,0.12)" stroke-width="1"/>
<path d="M262 272.3l1 0 1 0 1-.7 1-3.8 1-1.3 1 2.9 1 2.9 0 1.1 -1 3 -1 3.1 -1-1.4 -1-3.9 -1-.8 -1 0 -1 0z" fill="#25190f"/>
<path d="M262 292.5l1 0 1 0 1-.7 1-3.8 1-1.3 1 2.9 1 2.9 0 1.1 -1 3 -1 3.1 -1-1.4 -1-3.9 -1-.8 -1 0 -1 0z" fill="#25190f"/>
<svg x="261.7" y="244.1" width="7.1" height="18"><text x="3.8" y="14.1" font-size="11" letter-spacing="0.55" fill="rgba(0,0,0,0.75)" stroke="rgba(0,0,0,0.75)" stroke-width="0.2">P</text></svg>
<rect x="261.7" y="244.1" width="1" height="58.8" fill="rgba(0,0,0,0.25)"/>
<rect x="269.3" y="244.1" width="7.6" height="58.8" fill="#a27a53"/>
<rect x="269.3" y="261.4" width="7.6" height="1" fill="rgba(0,0,0,0.12)"/>
<path d="M271.3 262.4V302.9" stroke="rgba(0,0,0,0.12)" stroke-width="1"/>
<path d="M269.6 272.3l1 0 1.1 0 1-.9 1-3.2 1-2 1 3 1 3.1 0 1.1 -1 3.3 -1 3.1 -1-2.1 -1-3.3 -1-1 -1.1 0 -1 0z" fill="#25190f"/>
<path d="M269.6 292.5l1 0 1.1 0 1-.9 1-3.2 1-2 1 3 1 3.1 0 1.1 -1 3.3 -1 3.1 -1-2.1 -1-3.3 -1-1 -1.1 0 -1 0z" fill="#25190f"/>
<svg x="269.3" y="244.1" width="7.1" height="18"><text x="3.8" y="14.1" font-size="11" letter-spacing="0.55" fill="rgba(0,0,0,0.75)" stroke="rgba(0,0,0,0.75)" stroke-width="0.2">P</text></svg>
<rect x="269.3" y="244.1" width="1" height="58.8" fill="rgba(0,0,0,0.25)"/>
<rect x="277" y="244.1" width="7.6" height="58.8" fill="#a27a53"/>
<rect x="277" y="261.4" width="7.6" height="1" fill="rgba(0,0,0,0.12)"/>
<path d="M282.7 262.4V302.9" stroke="rgba(0,0,0,0.12)" stroke-width="1"/>
<path d="M277.3 272.3l1 0 1 0 1-.7 1-4 1 0 1 1.8 1 2.9 0 1.1 -1 3 -1 2 -1 0 -1-4.2 -1-.8 -1 0 -1 0z" fill="#25190f"/>
<path d="M277.3 292.5l1 0 1 0 1-.7 1-4 1 0 1 1.8 1 2.9 0 1.1 -1 3 -1 2 -1 0 -1-4.2 -1-.8 -1 0 -1 0z" fill="#25190f"/>
<svg x="277" y="244.1" width="7.1" height="18"><text x="3.8" y="14.1" font-size="11" letter-spacing="0.55" fill="rgba(0,0,0,0.75)" stroke="rgba(0,0,0,0.75)" stroke-width="0.2">P</text></svg>
<rect x="277" y="244.1" width="1" height="58.8" fill="rgba(0,0,0,0.25)"/>
<rect x="284.6" y="244.1" width="7.6" height="58.8" fill="#a27a53"/>
<rect x="284.6" y="261.4" width="7.6" height="1" fill="rgba(0,0,0,0.12)"/>
<path d="M288.3 262.4V302.9" stroke="rgba(0,0,0,0.12)" stroke-width="1"/>
<path d="M284.9 272.3l1 0 1 0 1-1.1 1-3.4 1-1.2 1.1 2.8 1 2.9 0 1.1 -1 3.1 -1.1 2.9 -1-1.3 -1-3.5 -1-1.2 -1 0 -1 0z" fill="#25190f"/>
<path d="M284.9 292.5l1 0 1 0 1-1.1 1-3.4 1-1.2 1.1 2.8 1 2.9 0 1.1 -1 3.1 -1.1 2.9 -1-1.3 -1-3.5 -1-1.2 -1 0 -1 0z" fill="#25190f"/>
<svg x="284.6" y="244.1" width="7.1" height="18"><text x="3.8" y="14.1" font-size="11" letter-spacing="0.55" fill="rgba(0,0,0,0.75)" stroke="rgba(0,0,0,0.75)" stroke-width="0.2">P</text></svg>
<rect x="284.6" y="244.1" width="1" height="58.8" fill="rgba(0,0,0,0.25)"/>
<rect x="292.3" y="244.1" width="7.6" height="58.8" fill="#a27a53"/>
<rect x="292.3" y="261.4" width="7.6" height="1" fill="rgba(0,0,0,0.12)"/>
<path d="M294 262.4V302.9M299.7 262.4V302.9" stroke="rgba(0,0,0,0.12)" stroke-width="1"/>
<path d="M292.6 272.3l1 0 1 0 1-1.1 1-4 1-.6 1 3.3 1 2.4 0 1.1 -1 2.5 -1 3.5 -1-.6 -1-4.3 -1-1.1 -1 0 -1 0z" fill="#25190f"/>
<path d="M292.6 292.5l1 0 1 0 1-1.1 1-4 1-.6 1 3.3 1 2.4 0 1.1 -1 2.5 -1 3.5 -1-.6 -1-4.3 -1-1.1 -1 0 -1 0z" fill="#25190f"/>
<svg x="292.3" y="244.1" width="7.1" height="18"><text x="3.8" y="14.1" font-size="11" letter-spacing="0.55" fill="rgba(0,0,0,0.75)" stroke="rgba(0,0,0,0.75)" stroke-width="0.2">P</text></svg>
<rect x="292.3" y="244.1" width="1" height="58.8" fill="rgba(0,0,0,0.25)"/>
<rect x="299.9" y="244.1" width="7.6" height="58.8" fill="#a27a53"/>
<rect x="299.9" y="261.4" width="7.6" height="1" fill="rgba(0,0,0,0.12)"/>
<path d="M305.4 262.4V302.9" stroke="rgba(0,0,0,0.12)" stroke-width="1"/>
<path d="M300.2 272.3l1 0 1 0 1-1 1-3.3 1-1.5 1 2.7 1 3.1 0 1.1 -1 3.3 -1 2.8 -1-1.5 -1-3.5 -1-1.1 -1 0 -1 0z" fill="#25190f"/>
<path d="M300.2 292.5l1 0 1 0 1-1 1-3.3 1-1.5 1 2.7 1 3.1 0 1.1 -1 3.3 -1 2.8 -1-1.5 -1-3.5 -1-1.1 -1 0 -1 0z" fill="#25190f"/>
<svg x="299.9" y="244.1" width="7.1" height="18"><text x="3.8" y="14.1" font-size="11" letter-spacing="0.55" fill="rgba(0,0,0,0.75)" stroke="rgba(0,0,0,0.75)" stroke-width="0.2">P</text></svg>
<rect x="299.9" y="244.1" width="1" height="58.8" fill="rgba(0,0,0,0.25)"/>
<rect x="307.5" y="244.1" width="7.6" height="58.8" fill="#a27a53"/>
<rect x="307.5" y="261.4" width="7.6" height="1" fill="rgba(0,0,0,0.12)"/>
<path d="M311 262.4V302.9" stroke="rgba(0,0,0,0.12)" stroke-width="1"/>
<path d="M307.8 272.3l1 0 1.1 0 1-1 1-4.2 1 .7 1 1.4 1 3.1 0 1.1 -1 3.3 -1 1.4 -1 .8 -1-4.5 -1-1 -1.1 0 -1 0z" fill="#25190f"/>
<path d="M307.8 292.5l1 0 1.1 0 1-1 1-4.2 1 .7 1 1.4 1 3.1 0 1.1 -1 3.3 -1 1.4 -1 .8 -1-4.5 -1-1 -1.1 0 -1 0z" fill="#25190f"/>
<svg x="307.5" y="244.1" width="7.1" height="18"><text x="3.8" y="14.1" font-size="11" letter-spacing="0.55" fill="rgba(0,0,0,0.75)" stroke="rgba(0,0,0,0.75)" stroke-width="0.2">P</text></svg>
<rect x="307.5" y="244.1" width="1" height="58.8" fill="rgba(0,0,0,0.25)"/>
<rect x="315.2" y="244.1" width="7.6" height="58.8" fill="#a27a53"/>
<rect x="315.2" y="261.4" width="7.6" height="1" fill="rgba(0,0,0,0.12)"/>
<path d="M316.7 262.4V302.9M322.4 262.4V302.9" stroke="rgba(0,0,0,0.12)" stroke-width="1"/>
<path d="M315.5 272.3l1 0 1 0 1-.8 1-3.9 1-1.4 1 3.3 1 2.8 0 1.1 -1 3 -1 3.5 -1-1.5 -1-4.2 -1-.8 -1 0 -1 0z" fill="#25190f"/>
<path d="M315.5 292.5l1 0 1 0 1-.8 1-3.9 1-1.4 1 3.3 1 2.8 0 1.1 -1 3 -1 3.5 -1-1.5 -1-4.2 -1-.8 -1 0 -1 0z" fill="#25190f"/>
<svg x="315.2" y="244.1" width="7.1" height="18"><text x="3.8" y="14.1" font-size="11" letter-spacing="0.55" fill="rgba(0,0,0,0.75)" stroke="rgba(0,0,0,0.75)" stroke-width="0.2">P</text></svg>
<rect x="315.2" y="244.1" width="1" height="58.8" fill="rgba(0,0,0,0.25)"/>
<rect x="322.8" y="244.1" width="7.6" height="58.8" fill="#a27a53"/>
<rect x="322.8" y="261.4" width="7.6" height="1" fill="rgba(0,0,0,0.12)"/>
<path d="M328 262.4V302.9" stroke="rgba(0,0,0,0.12)" stroke-width="1"/>
<path d="M323.1 272.3l1 0 1 0 1-.7 1-4.3 1-1 1.1 3.4 1 2.6 0 1.1 -1 2.7 -1.1 3.6 -1-1 -1-4.5 -1-.8 -1 0 -1 0z" fill="#25190f"/>
<path d="M323.1 292.5l1 0 1 0 1-.7 1-4.3 1-1 1.1 3.4 1 2.6 0 1.1 -1 2.7 -1.1 3.6 -1-1 -1-4.5 -1-.8 -1 0 -1 0z" fill="#25190f"/>
<svg x="322.8" y="244.1" width="7.1" height="18"><text x="3.8" y="14.1" font-size="11" letter-spacing="0.55" fill="rgba(0,0,0,0.75)" stroke="rgba(0,0,0,0.75)" stroke-width="0.2">P</text></svg>
<rect x="322.8" y="244.1" width="1" height="58.8" fill="rgba(0,0,0,0.25)"/>
<rect x="330.5" y="244.1" width="7.6" height="58.8" fill="#a27a53"/>
<rect x="330.5" y="261.4" width="7.6" height="1" fill="rgba(0,0,0,0.12)"/>
<path d="M333.7 262.4V302.9" stroke="rgba(0,0,0,0.12)" stroke-width="1"/>
<path d="M330.8 272.3l1 0 1 0 1-.8 1-3.7 1-.9 1 3.1 1 2.3 0 1.1 -1 2.4 -1 3.3 -1-.9 -1-4 -1-.8 -1 0 -1 0z" fill="#25190f"/>
<path d="M330.8 292.5l1 0 1 0 1-.8 1-3.7 1-.9 1 3.1 1 2.3 0 1.1 -1 2.4 -1 3.3 -1-.9 -1-4 -1-.8 -1 0 -1 0z" fill="#25190f"/>
<svg x="330.5" y="244.1" width="7.1" height="18"><text x="3.8" y="14.1" font-size="11" letter-spacing="0.55" fill="rgba(0,0,0,0.75)" stroke="rgba(0,0,0,0.75)" stroke-width="0.2">P</text></svg>
<rect x="330.5" y="244.1" width="1" height="58.8" fill="rgba(0,0,0,0.25)"/>
<rect x="338.1" y="244.1" width="7.6" height="58.8" fill="#a27a53"/>
<rect x="338.1" y="261.4" width="7.6" height="1" fill="rgba(0,0,0,0.12)"/>
<path d="M339.4 262.4V302.9M345 262.4V302.9" stroke="rgba(0,0,0,0.12)" stroke-width="1"/>
<path d="M338.4 272.3l1 0 1 0 1-1.1 1-3.3 1-1.5 1 3.5 1 2.4 0 1.1 -1 2.6 -1 3.6 -1-1.6 -1-3.5 -1-1.1 -1 0 -1 0z" fill="#25190f"/>
<path d="M338.4 292.5l1 0 1 0 1-1.1 1-3.3 1-1.5 1 3.5 1 2.4 0 1.1 -1 2.6 -1 3.6 -1-1.6 -1-3.5 -1-1.1 -1 0 -1 0z" fill="#25190f"/>
<svg x="338.1" y="244.1" width="7.1" height="18"><text x="3.8" y="14.1" font-size="11" letter-spacing="0.55" fill="rgba(0,0,0,0.75)" stroke="rgba(0,0,0,0.75)" stroke-width="0.2">P</text></svg>
<rect x="338.1" y="244.1" width="1" height="58.8" fill="rgba(0,0,0,0.25)"/>
<rect x="345.7" y="244.1" width="7.6" height="58.8" fill="#a27a53"/>
<rect x="345.7" y="261.4" width="7.6" height="1" fill="rgba(0,0,0,0.12)"/>
<path d="M350.7 262.4V302.9" stroke="rgba(0,0,0,0.12)" stroke-width="1"/>
<path d="M346 272.3l1 0 1.1 0 1-1 1-3.1 1-2 1 3.4 1 2.7 0 1.1 -1 2.8 -1 3.6 -1-2 -1-3.3 -1-1.1 -1.1 0 -1 0z" fill="#25190f"/>
<path d="M346 292.5l1 0 1.1 0 1-1 1-3.1 1-2 1 3.4 1 2.7 0 1.1 -1 2.8 -1 3.6 -1-2 -1-3.3 -1-1.1 -1.1 0 -1 0z" fill="#25190f"/>
<svg x="345.7" y="244.1" width="7.1" height="18"><text x="3.8" y="14.1" font-size="11" letter-spacing="0.55" fill="rgba(0,0,0,0.75)" stroke="rgba(0,0,0,0.75)" stroke-width="0.2">P</text></svg>
<rect x="345.7" y="244.1" width="1" height="58.8" fill="rgba(0,0,0,0.25)"/>
<rect x="353.4" y="244.1" width="7.6" height="58.8" fill="#a27a53"/>
<rect x="353.4" y="261.4" width="7.6" height="1" fill="rgba(0,0,0,0.12)"/>
<path d="M356.4 262.4V302.9" stroke="rgba(0,0,0,0.12)" stroke-width="1"/>
<path d="M353.7 272.3l1 0 1 0 1-.9 1-3.9 1-.7 1 2.6 1 2.9 0 1.1 -1 3 -1 2.8 -1-.7 -1-4.2 -1-.9 -1 0 -1 0z" fill="#25190f"/>
<path d="M353.7 292.5l1 0 1 0 1-.9 1-3.9 1-.7 1 2.6 1 2.9 0 1.1 -1 3 -1 2.8 -1-.7 -1-4.2 -1-.9 -1 0 -1 0z" fill="#25190f"/>
<svg x="353.4" y="244.1" width="7.1" height="18"><text x="3.8" y="14.1" font-size="11" letter-spacing="0.55" fill="rgba(0,0,0,0.75)" stroke="rgba(0,0,0,0.75)" stroke-width="0.2">P</text></svg>
<rect x="353.4" y="244.1" width="1" height="58.8" fill="rgba(0,0,0,0.25)"/>
<rect x="361" y="244.1" width="7.6" height="58.8" fill="#a27a53"/>
<rect x="361" y="261.4" width="7.6" height="1" fill="rgba(0,0,0,0.12)"/>
<path d="M362 262.4V302.9M367.7 262.4V302.9" stroke="rgba(0,0,0,0.12)" stroke-width="1"/>
<path d="M361.3 272.3l1 0 1 0 1-.7 1-4.4 1-.6 1.1 3.5 1 2.2 0 1.1 -1 2.3 -1.1 3.7 -1-.6 -1-4.7 -1-.7 -1 0 -1 0z" fill="#25190f"/>
<path d="M361.3 292.5l1 0 1 0 1-.7 1-4.4 1-.6 1.1 3.5 1 2.2 0 1.1 -1 2.3 -1.1 3.7 -1-.6 -1-4.7 -1-.7 -1 0 -1 0z" fill="#25190f"/>
<svg x="361" y="244.1" width="7.1" height="18"><text x="3.8" y="14.1" font-size="11" letter-spacing="0.55" fill="rgba(0,0,0,0.75)" stroke="rgba(0,0,0,0.75)" stroke-width="0.2">P</text></svg>
<rect x="361" y="244.1" width="1" height="58.8" fill="rgba(0,0,0,0.25)"/>
<rect x="368.7" y="244.1" width="7.6" height="58.8" fill="#a27a53"/>
<rect x="368.7" y="261.4" width="7.6" height="1" fill="rgba(0,0,0,0.12)"/>
<path d="M373.4 262.4V302.9" stroke="rgba(0,0,0,0.12)" stroke-width="1"/>
<path d="M369 272.3l1 0 1 0 1-.8 1-3.1 1-1.7 1 3.2 1 2.4 0 1.1 -1 2.6 -1 3.3 -1-1.7 -1-3.4 -1-.8 -1 0 -1 0z" fill="#25190f"/>
<path d="M369 292.5l1 0 1 0 1-.8 1-3.1 1-1.7 1 3.2 1 2.4 0 1.1 -1 2.6 -1 3.3 -1-1.7 -1-3.4 -1-.8 -1 0 -1 0z" fill="#25190f"/>
<svg x="368.7" y="244.1" width="7.1" height="18"><text x="3.8" y="14.1" font-size="11" letter-spacing="0.55" fill="rgba(0,0,0,0.75)" stroke="rgba(0,0,0,0.75)" stroke-width="0.2">P</text></svg>
<rect x="368.7" y="244.1" width="1" height="58.8" fill="rgba(0,0,0,0.25)"/>
<rect x="376.3" y="244.1" width="7.6" height="58.8" fill="#a27a53"/>
<rect x="376.3" y="261.4" width="7.6" height="1" fill="rgba(0,0,0,0.12)"/>
<path d="M379 262.4V302.9" stroke="rgba(0,0,0,0.12)" stroke-width="1"/>
<path d="M376.6 272.3l1 0 1 0 1-1 1-3.1 1-.5 1 2.3 1 2.3 0 1.1 -1 2.4 -1 2.5 -1-.6 -1-3.2 -1-1.1 -1 0 -1 0z" fill="#25190f"/>
<path d="M376.6 292.5l1 0 1 0 1-1 1-3.1 1-.5 1 2.3 1 2.3 0 1.1 -1 2.4 -1 2.5 -1-.6 -1-3.2 -1-1.1 -1 0 -1 0z" fill="#25190f"/>
<svg x="376.3" y="244.1" width="7.1" height="18"><text x="3.8" y="14.1" font-size="11" letter-spacing="0.55" fill="rgba(0,0,0,0.75)" stroke="rgba(0,0,0,0.75)" stroke-width="0.2">P</text></svg>
<rect x="376.3" y="244.1" width="1" height="58.8" fill="rgba(0,0,0,0.25)"/>
<rect x="383.9" y="244.1" width="7.6" height="58.8" fill="#a27a53"/>
<rect x="383.9" y="261.4" width="7.6" height="1" fill="rgba(0,0,0,0.12)"/>
<path d="M390.4 262.4V302.9" stroke="rgba(0,0,0,0.12)" stroke-width="1"/>
<path d="M384.2 272.3l1 0 1.1 0 1-1 1-3.7 1-1 1 3.5 1 2.2 0 1.1 -1 2.3 -1 3.7 -1-1 -1-3.9 -1-1.1 -1.1 0 -1 0z" fill="#25190f"/>
<path d="M384.2 292.5l1 0 1.1 0 1-1 1-3.7 1-1 1 3.5 1 2.2 0 1.1 -1 2.3 -1 3.7 -1-1 -1-3.9 -1-1.1 -1.1 0 -1 0z" fill="#25190f"/>
<svg x="383.9" y="244.1" width="7.1" height="18"><text x="3.8" y="14.1" font-size="11" letter-spacing="0.55" fill="rgba(0,0,0,0.75)" stroke="rgba(0,0,0,0.75)" stroke-width="0.2">P</text></svg>
<rect x="383.9" y="244.1" width="1" height="58.8" fill="rgba(0,0,0,0.25)"/>
<rect x="391.6" y="244.1" width="7.6" height="58.8" fill="#a27a53"/>
<rect x="391.6" y="261.4" width="7.6" height="1" fill="rgba(0,0,0,0.12)"/>
<path d="M396 262.4V302.9" stroke="rgba(0,0,0,0.12)" stroke-width="1"/>
<path d="M391.9 272.3l1 0 1 0 1-.8 1-3.2 1-1.1 1 2.8 1 2.3 0 1.1 -1 2.5 -1 2.9 -1-1.1 -1-3.5 -1-.8 -1 0 -1 0z" fill="#25190f"/>
<path d="M391.9 292.5l1 0 1 0 1-.8 1-3.2 1-1.1 1 2.8 1 2.3 0 1.1 -1 2.5 -1 2.9 -1-1.1 -1-3.5 -1-.8 -1 0 -1 0z" fill="#25190f"/>
<svg x="391.6" y="244.1" width="7.1" height="18"><text x="3.8" y="14.1" font-size="11" letter-spacing="0.55" fill="rgba(0,0,0,0.75)" stroke="rgba(0,0,0,0.75)" stroke-width="0.2">P</text></svg>
<rect x="391.6" y="244.1" width="1" height="58.8" fill="rgba(0,0,0,0.25)"/>
<rect x="399.2" y="244.1" width="7.6" height="58.8" fill="#a27a53"/>
<rect x="399.2" y="261.4" width="7.6" height="1" fill="rgba(0,0,0,0.12)"/>
<path d="M401.7 262.4V302.9" stroke="rgba(0,0,0,0.12)" stroke-width="1"/>
<path d="M399.5 272.3l1 0 1 0 1-1 1-3.1 1-.5 1.1 2.1 1 2.5 0 1.1 -1 2.7 -1.1 2.2 -1-.6 -1-3.3 -1-1 -1 0 -1 0z" fill="#25190f"/>
<path d="M399.5 292.5l1 0 1 0 1-1 1-3.1 1-.5 1.1 2.1 1 2.5 0 1.1 -1 2.7 -1.1 2.2 -1-.6 -1-3.3 -1-1 -1 0 -1 0z" fill="#25190f"/>
<svg x="399.2" y="244.1" width="7.1" height="18"><text x="3.8" y="14.1" font-size="11" letter-spacing="0.55" fill="rgba(0,0,0,0.75)" stroke="rgba(0,0,0,0.75)" stroke-width="0.2">P</text></svg>
<rect x="399.2" y="244.1" width="1" height="58.8" fill="rgba(0,0,0,0.25)"/>
<rect x="406.9" y="244.1" width="7.6" height="58.8" fill="#a27a53"/>
<rect x="406.9" y="261.4" width="7.6" height="1" fill="rgba(0,0,0,0.12)"/>
<path d="M413 262.4V302.9" stroke="rgba(0,0,0,0.12)" stroke-width="1"/>
<path d="M407.2 272.3l1 0 1 0 1-1 1-3.1 1-1.7 1 3.1 1 2.7 0 1.1 -1 2.9 -1 3.2 -1-1.8 -1-3.2 -1-1.1 -1 0 -1 0z" fill="#25190f"/>
<path d="M407.2 292.5l1 0 1 0 1-1 1-3.1 1-1.7 1 3.1 1 2.7 0 1.1 -1 2.9 -1 3.2 -1-1.8 -1-3.2 -1-1.1 -1 0 -1 0z" fill="#25190f"/>
<svg x="406.9" y="244.1" width="7.1" height="18"><text x="3.8" y="14.1" font-size="11" letter-spacing="0.55" fill="rgba(0,0,0,0.75)" stroke="rgba(0,0,0,0.75)" stroke-width="0.2">P</text></svg>
<rect x="406.9" y="244.1" width="1" height="58.8" fill="rgba(0,0,0,0.25)"/>
<rect x="422" y="244.1" width="6" height="58.8" fill="#a27a53"/>
<rect x="422" y="261.4" width="6" height="1" fill="rgba(0,0,0,0.12)"/>
<path d="M424.4 262.4V302.9" stroke="rgba(0,0,0,0.12)" stroke-width="1"/>
<path d="M422.3 272.3l1.1 0 1.1-1.3 1-4.1 1.1 1.2 1.1 3.2 0 3.2 -1.1 3.4 -1.1 1.2 -1-4.3 -1.1-1.4 -1.1 0z" fill="#25190f"/>
<path d="M422.3 292.5l1.1 0 1.1-1.3 1-4.1 1.1 1.2 1.1 3.2 0 3.2 -1.1 3.4 -1.1 1.2 -1-4.3 -1.1-1.4 -1.1 0z" fill="#25190f"/>
<rect x="422" y="244.1" width="1" height="58.8" fill="rgba(0,0,0,0.25)"/>
<rect x="447.5" y="244.1" width="7.7" height="58.8" fill="#a27a53"/>
<rect x="447.5" y="261.4" width="7.7" height="1" fill="rgba(0,0,0,0.12)"/>
<path d="M452.7 262.4V302.9" stroke="rgba(0,0,0,0.12)" stroke-width="1"/>
<path d="M447.8 272.3l1 0 1 0 1-.7 1-3.4 1-1.6 1.1 3.4 1 2.3 0 1.1 -1 2.4 -1.1 3.6 -1-1.7 -1-3.6 -1-.7 -1 0 -1 0z" fill="#25190f"/>
<path d="M447.8 292.5l1 0 1 0 1-.7 1-3.4 1-1.6 1.1 3.4 1 2.3 0 1.1 -1 2.4 -1.1 3.6 -1-1.7 -1-3.6 -1-.7 -1 0 -1 0z" fill="#25190f"/>
<svg x="447.5" y="244.1" width="7.2" height="18"><text x="3.8" y="14.1" font-size="11" letter-spacing="0.55" fill="rgba(0,0,0,0.75)" stroke="rgba(0,0,0,0.75)" stroke-width="0.2">P</text></svg>
<rect x="447.5" y="244.1" width="1" height="58.8" fill="rgba(0,0,0,0.25)"/>
<rect x="455.2" y="244.1" width="7.7" height="58.8" fill="#a27a53"/>
<rect x="455.2" y="261.4" width="7.7" height="1" fill="rgba(0,0,0,0.12)"/>
<path d="M458.4 262.4V302.9" stroke="rgba(0,0,0,0.12)" stroke-width="1"/>
<path d="M455.5 272.3l1 0 1 0 1-.7 1-3.6 1-.1 1 2 1 2.4 0 1.1 -1 2.6 -1 2.1 -1-.2 -1-3.8 -1-.7 -1 0 -1 0z" fill="#25190f"/>
<path d="M455.5 292.5l1 0 1 0 1-.7 1-3.6 1-.1 1 2 1 2.4 0 1.1 -1 2.6 -1 2.1 -1-.2 -1-3.8 -1-.7 -1 0 -1 0z" fill="#25190f"/>
<svg x="455.2" y="244.1" width="7.2" height="18"><text x="3.8" y="14.1" font-size="11" letter-spacing="0.55" fill="rgba(0,0,0,0.75)" stroke="rgba(0,0,0,0.75)" stroke-width="0.2">P</text></svg>
<rect x="455.2" y="244.1" width="1" height="58.8" fill="rgba(0,0,0,0.25)"/>
<rect x="462.8" y="244.1" width="7.7" height="58.8" fill="#a27a53"/>
<rect x="462.8" y="261.4" width="7.7" height="1" fill="rgba(0,0,0,0.12)"/>
<path d="M464 262.4V302.9M469.7 262.4V302.9" stroke="rgba(0,0,0,0.12)" stroke-width="1"/>
<path d="M463.1 272.3l1 0 1.1 0 1-1 1-3.8 1-.3 1 2.8 1 2.3 0 1.1 -1 2.5 -1 2.9 -1-.3 -1-4.1 -1-1 -1.1 0 -1 0z" fill="#25190f"/>
<path d="M463.1 292.5l1 0 1.1 0 1-1 1-3.8 1-.3 1 2.8 1 2.3 0 1.1 -1 2.5 -1 2.9 -1-.3 -1-4.1 -1-1 -1.1 0 -1 0z" fill="#25190f"/>
<svg x="462.8" y="244.1" width="7.2" height="18"><text x="3.8" y="14.1" font-size="11" letter-spacing="0.55" fill="rgba(0,0,0,0.75)" stroke="rgba(0,0,0,0.75)" stroke-width="0.2">P</text></svg>
<rect x="462.8" y="244.1" width="1" height="58.8" fill="rgba(0,0,0,0.25)"/>
<rect x="470.5" y="244.1" width="7.7" height="58.8" fill="#a27a53"/>
<rect x="470.5" y="261.4" width="7.7" height="1" fill="rgba(0,0,0,0.12)"/>
<path d="M475.4 262.4V302.9" stroke="rgba(0,0,0,0.12)" stroke-width="1"/>
<path d="M470.8 272.3l1 0 1 0 1-.7 1-4.4 1-.4 1.1 3.1 1 2.4 0 1.1 -1 2.5 -1.1 3.3 -1-.4 -1-4.7 -1-.7 -1 0 -1 0z" fill="#25190f"/>
<path d="M470.8 292.5l1 0 1 0 1-.7 1-4.4 1-.4 1.1 3.1 1 2.4 0 1.1 -1 2.5 -1.1 3.3 -1-.4 -1-4.7 -1-.7 -1 0 -1 0z" fill="#25190f"/>
<svg x="470.5" y="244.1" width="7.2" height="18"><text x="3.8" y="14.1" font-size="11" letter-spacing="0.55" fill="rgba(0,0,0,0.75)" stroke="rgba(0,0,0,0.75)" stroke-width="0.2">P</text></svg>
<rect x="470.5" y="244.1" width="1" height="58.8" fill="rgba(0,0,0,0.25)"/>
<rect x="478.2" y="244.1" width="7.7" height="58.8" fill="#a27a53"/>
<rect x="478.2" y="261.4" width="7.7" height="1" fill="rgba(0,0,0,0.12)"/>
<path d="M481 262.4V302.9" stroke="rgba(0,0,0,0.12)" stroke-width="1"/>
<path d="M478.5 272.3l1 0 1 0 1-.8 1-3.1 1-1.5 1 3.1 1 2.3 0 1.1 -1 2.4 -1 3.3 -1-1.6 -1-3.2 -1-.9 -1 0 -1 0z" fill="#25190f"/>
<path d="M478.5 292.5l1 0 1 0 1-.8 1-3.1 1-1.5 1 3.1 1 2.3 0 1.1 -1 2.4 -1 3.3 -1-1.6 -1-3.2 -1-.9 -1 0 -1 0z" fill="#25190f"/>
<svg x="478.2" y="244.1" width="7.2" height="18"><text x="3.8" y="14.1" font-size="11" letter-spacing="0.55" fill="rgba(0,0,0,0.75)" stroke="rgba(0,0,0,0.75)" stroke-width="0.2">P</text></svg>
<rect x="478.2" y="244.1" width="1" height="58.8" fill="rgba(0,0,0,0.25)"/>
<rect x="485.8" y="244.1" width="7.7" height="58.8" fill="#a27a53"/>
<rect x="485.8" y="261.4" width="7.7" height="1" fill="rgba(0,0,0,0.12)"/>
<path d="M486.7 262.4V302.9M492.4 262.4V302.9" stroke="rgba(0,0,0,0.12)" stroke-width="1"/>
<path d="M486.1 272.3l1 0 1 0 1.1-.8 1-4.1 1-.5 1 2.8 1 2.6 0 1.1 -1 2.8 -1 2.9 -1-.5 -1-4.3 -1.1-.9 -1 0 -1 0z" fill="#25190f"/>
<path d="M486.1 292.5l1 0 1 0 1.1-.8 1-4.1 1-.5 1 2.8 1 2.6 0 1.1 -1 2.8 -1 2.9 -1-.5 -1-4.3 -1.1-.9 -1 0 -1 0z" fill="#25190f"/>
<svg x="485.8" y="244.1" width="7.2" height="18"><text x="3.8" y="14.1" font-size="11" letter-spacing="0.55" fill="rgba(0,0,0,0.75)" stroke="rgba(0,0,0,0.75)" stroke-width="0.2">P</text></svg>
<rect x="485.8" y="244.1" width="1" height="58.8" fill="rgba(0,0,0,0.25)"/>
<rect x="493.5" y="244.1" width="7.7" height="58.8" fill="#a27a53"/>
<rect x="493.5" y="261.4" width="7.7" height="1" fill="rgba(0,0,0,0.12)"/>
<path d="M498 262.4V302.9" stroke="rgba(0,0,0,0.12)" stroke-width="1"/>
<path d="M493.8 272.3l1 0 1 0 1-.6 1-3.7 1-1.4 1 2.7 1.1 3 0 1.1 -1.1 3.1 -1 2.9 -1-1.5 -1-3.8 -1-.7 -1 0 -1 0z" fill="#25190f"/>
<path d="M493.8 292.5l1 0 1 0 1-.6 1-3.7 1-1.4 1 2.7 1.1 3 0 1.1 -1.1 3.1 -1 2.9 -1-1.5 -1-3.8 -1-.7 -1 0 -1 0z" fill="#25190f"/>
<svg x="493.5" y="244.1" width="7.2" height="18"><text x="3.8" y="14.1" font-size="11" letter-spacing="0.55" fill="rgba(0,0,0,0.75)" stroke="rgba(0,0,0,0.75)" stroke-width="0.2">P</text></svg>
<rect x="493.5" y="244.1" width="1" height="58.8" fill="rgba(0,0,0,0.25)"/>
<rect x="501.2" y="244.1" width="7.7" height="58.8" fill="#a27a53"/>
<rect x="501.2" y="261.4" width="7.7" height="1" fill="rgba(0,0,0,0.12)"/>
<path d="M503.7 262.4V302.9" stroke="rgba(0,0,0,0.12)" stroke-width="1"/>
<path d="M501.5 272.3l1 0 1 0 1-.8 1-4 1-1.1 1 3.5 1 2.4 0 1.1 -1 2.5 -1 3.7 -1-1.1 -1-4.2 -1-.9 -1 0 -1 0z" fill="#25190f"/>
<path d="M501.5 292.5l1 0 1 0 1-.8 1-4 1-1.1 1 3.5 1 2.4 0 1.1 -1 2.5 -1 3.7 -1-1.1 -1-4.2 -1-.9 -1 0 -1 0z" fill="#25190f"/>
<svg x="501.2" y="244.1" width="7.2" height="18"><text x="3.8" y="14.1" font-size="11" letter-spacing="0.55" fill="rgba(0,0,0,0.75)" stroke="rgba(0,0,0,0.75)" stroke-width="0.2">P</text></svg>
<rect x="501.2" y="244.1" width="1" height="58.8" fill="rgba(0,0,0,0.25)"/>
<rect x="508.8" y="244.1" width="7.7" height="58.8" fill="#a27a53"/>
<rect x="508.8" y="261.4" width="7.7" height="1" fill="rgba(0,0,0,0.12)"/>
<path d="M515 262.4V302.9" stroke="rgba(0,0,0,0.12)" stroke-width="1"/>
<path d="M509.1 272.3l1 0 1 0 1.1-.8 1-4.2 1 .5 1 1.6 1 2.9 0 1.1 -1 3.1 -1 1.7 -1 .5 -1-4.5 -1.1-.8 -1 0 -1 0z" fill="#25190f"/>
<path d="M509.1 292.5l1 0 1 0 1.1-.8 1-4.2 1 .5 1 1.6 1 2.9 0 1.1 -1 3.1 -1 1.7 -1 .5 -1-4.5 -1.1-.8 -1 0 -1 0z" fill="#25190f"/>
<svg x="508.8" y="244.1" width="7.2" height="18"><text x="3.8" y="14.1" font-size="11" letter-spacing="0.55" fill="rgba(0,0,0,0.75)" stroke="rgba(0,0,0,0.75)" stroke-width="0.2">P</text></svg>
<rect x="508.8" y="244.1" width="1" height="58.8" fill="rgba(0,0,0,0.25)"/>
<rect x="516.5" y="244.1" width="7.7" height="58.8" fill="#a27a53"/>
<rect x="516.5" y="261.4" width="7.7" height="1" fill="rgba(0,0,0,0.12)"/>
<path d="M520.7 262.4V302.9" stroke="rgba(0,0,0,0.12)" stroke-width="1"/>
<path d="M516.8 272.3l1 0 1 0 1-.9 1-2.9 1-2.3 1 3.7 1.1 2.4 0 1.1 -1.1 2.6 -1 3.8 -1-2.4 -1-3.1 -1-.9 -1 0 -1 0z" fill="#25190f"/>
<path d="M516.8 292.5l1 0 1 0 1-.9 1-2.9 1-2.3 1 3.7 1.1 2.4 0 1.1 -1.1 2.6 -1 3.8 -1-2.4 -1-3.1 -1-.9 -1 0 -1 0z" fill="#25190f"/>
<svg x="516.5" y="244.1" width="7.2" height="18"><text x="3.8" y="14.1" font-size="11" letter-spacing="0.55" fill="rgba(0,0,0,0.75)" stroke="rgba(0,0,0,0.75)" stroke-width="0.2">P</text></svg>
<rect x="516.5" y="244.1" width="1" height="58.8" fill="rgba(0,0,0,0.25)"/>
<rect x="524.2" y="244.1" width="7.7" height="58.8" fill="#a27a53"/>
<rect x="524.2" y="261.4" width="7.7" height="1" fill="rgba(0,0,0,0.12)"/>
<path d="M526.4 262.4V302.9" stroke="rgba(0,0,0,0.12)" stroke-width="1"/>
<path d="M524.5 272.3l1 0 1 0 1-.8 1-4 1-.9 1 3.2 1 2.5 0 1.1 -1 2.7 -1 3.3 -1-.9 -1-4.2 -1-.9 -1 0 -1 0z" fill="#25190f"/>
<path d="M524.5 292.5l1 0 1 0 1-.8 1-4 1-.9 1 3.2 1 2.5 0 1.1 -1 2.7 -1 3.3 -1-.9 -1-4.2 -1-.9 -1 0 -1 0z" fill="#25190f"/>
<svg x="524.2" y="244.1" width="7.2" height="18"><text x="3.8" y="14.1" font-size="11" letter-spacing="0.55" fill="rgba(0,0,0,0.75)" stroke="rgba(0,0,0,0.75)" stroke-width="0.2">P</text></svg>
<rect x="524.2" y="244.1" width="1" height="58.8" fill="rgba(0,0,0,0.25)"/>
<rect x="531.8" y="244.1" width="7.7" height="58.8" fill="#a27a53"/>
<rect x="531.8" y="261.4" width="7.7" height="1" fill="rgba(0,0,0,0.12)"/>
<path d="M537.7 262.4V302.9" stroke="rgba(0,0,0,0.12)" stroke-width="1"/>
<path d="M532.1 272.3l1 0 1 0 1.1-.9 1-4 1 .4 1 1.5 1 3 0 1.1 -1 3.2 -1 1.5 -1 .5 -1-4.3 -1.1-.9 -1 0 -1 0z" fill="#25190f"/>
<path d="M532.1 292.5l1 0 1 0 1.1-.9 1-4 1 .4 1 1.5 1 3 0 1.1 -1 3.2 -1 1.5 -1 .5 -1-4.3 -1.1-.9 -1 0 -1 0z" fill="#25190f"/>
<svg x="531.8" y="244.1" width="7.2" height="18"><text x="3.8" y="14.1" font-size="11" letter-spacing="0.55" fill="rgba(0,0,0,0.75)" stroke="rgba(0,0,0,0.75)" stroke-width="0.2">P</text></svg>
<rect x="531.8" y="244.1" width="1" height="58.8" fill="rgba(0,0,0,0.25)"/>
<rect x="539.5" y="244.1" width="7.7" height="58.8" fill="#a27a53"/>
<rect x="539.5" y="261.4" width="7.7" height="1" fill="rgba(0,0,0,0.12)"/>
<path d="M543.4 262.4V302.9" stroke="rgba(0,0,0,0.12)" stroke-width="1"/>
<path d="M539.8 272.3l1 0 1 0 1-.8 1-4.5 1-.4 1 3.5 1.1 2.2 0 1.1 -1.1 2.4 -1 3.6 -1-.4 -1-4.7 -1-.9 -1 0 -1 0z" fill="#25190f"/>
<path d="M539.8 292.5l1 0 1 0 1-.8 1-4.5 1-.4 1 3.5 1.1 2.2 0 1.1 -1.1 2.4 -1 3.6 -1-.4 -1-4.7 -1-.9 -1 0 -1 0z" fill="#25190f"/>
<svg x="539.5" y="244.1" width="7.2" height="18"><text x="3.8" y="14.1" font-size="11" letter-spacing="0.55" fill="rgba(0,0,0,0.75)" stroke="rgba(0,0,0,0.75)" stroke-width="0.2">P</text></svg>
<rect x="539.5" y="244.1" width="1" height="58.8" fill="rgba(0,0,0,0.25)"/>
<rect x="547.2" y="244.1" width="7.7" height="58.8" fill="#a27a53"/>
<rect x="547.2" y="261.4" width="7.7" height="1" fill="rgba(0,0,0,0.12)"/>
<path d="M549 262.4V302.9M554.7 262.4V302.9" stroke="rgba(0,0,0,0.12)" stroke-width="1"/>
<path d="M547.5 272.3l1 0 1 0 1-.7 1-3.4 1-.4 1 1.9 1 2.6 0 1.1 -1 2.7 -1 2 -1-.3 -1-3.6 -1-.8 -1 0 -1 0z" fill="#25190f"/>
<path d="M547.5 292.5l1 0 1 0 1-.7 1-3.4 1-.4 1 1.9 1 2.6 0 1.1 -1 2.7 -1 2 -1-.3 -1-3.6 -1-.8 -1 0 -1 0z" fill="#25190f"/>
<svg x="547.2" y="244.1" width="7.2" height="18"><text x="3.8" y="14.1" font-size="11" letter-spacing="0.55" fill="rgba(0,0,0,0.75)" stroke="rgba(0,0,0,0.75)" stroke-width="0.2">P</text></svg>
<rect x="547.2" y="244.1" width="1" height="58.8" fill="rgba(0,0,0,0.25)"/>
<rect x="554.8" y="244.1" width="7.7" height="58.8" fill="#a27a53"/>
<rect x="554.8" y="261.4" width="7.7" height="1" fill="rgba(0,0,0,0.12)"/>
<path d="M560.4 262.4V302.9" stroke="rgba(0,0,0,0.12)" stroke-width="1"/>
<path d="M555.1 272.3l1 0 1 0 1-.9 1.1-3.4 1-.6 1 2.2 1 2.7 0 1.1 -1 2.8 -1 2.4 -1-.6 -1.1-3.7 -1-.9 -1 0 -1 0z" fill="#25190f"/>
<path d="M555.1 292.5l1 0 1 0 1-.9 1.1-3.4 1-.6 1 2.2 1 2.7 0 1.1 -1 2.8 -1 2.4 -1-.6 -1.1-3.7 -1-.9 -1 0 -1 0z" fill="#25190f"/>
<svg x="554.8" y="244.1" width="7.2" height="18"><text x="3.8" y="14.1" font-size="11" letter-spacing="0.55" fill="rgba(0,0,0,0.75)" stroke="rgba(0,0,0,0.75)" stroke-width="0.2">P</text></svg>
<rect x="554.8" y="244.1" width="1" height="58.8" fill="rgba(0,0,0,0.25)"/>
<rect x="562.5" y="244.1" width="7.7" height="58.8" fill="#a27a53"/>
<rect x="562.5" y="261.4" width="7.7" height="1" fill="rgba(0,0,0,0.12)"/>
<path d="M566 262.4V302.9" stroke="rgba(0,0,0,0.12)" stroke-width="1"/>
<path d="M562.8 272.3l1 0 1 0 1-.7 1-4.5 1 .6 1 2.2 1 2.4 0 1.1 -1 2.6 -1 2.3 -1 .6 -1-4.8 -1-.7 -1 0 -1 0z" fill="#25190f"/>
<path d="M562.8 292.5l1 0 1 0 1-.7 1-4.5 1 .6 1 2.2 1 2.4 0 1.1 -1 2.6 -1 2.3 -1 .6 -1-4.8 -1-.7 -1 0 -1 0z" fill="#25190f"/>
<svg x="562.5" y="244.1" width="7.2" height="18"><text x="3.8" y="14.1" font-size="11" letter-spacing="0.55" fill="rgba(0,0,0,0.75)" stroke="rgba(0,0,0,0.75)" stroke-width="0.2">P</text></svg>
<rect x="562.5" y="244.1" width="1" height="58.8" fill="rgba(0,0,0,0.25)"/>
<rect x="570.1" y="244.1" width="7.7" height="58.8" fill="#a27a53"/>
<rect x="570.1" y="261.4" width="7.7" height="1" fill="rgba(0,0,0,0.12)"/>
<path d="M571.7 262.4V302.9M577.4 262.4V302.9" stroke="rgba(0,0,0,0.12)" stroke-width="1"/>
<path d="M570.4 272.3l1.1 0 1 0 1-1 1-3.8 1-.9 1 3.1 1 2.6 0 1.1 -1 2.8 -1 3.2 -1-1 -1-3.9 -1-1.1 -1 0 -1.1 0z" fill="#25190f"/>
<path d="M570.4 292.5l1.1 0 1 0 1-1 1-3.8 1-.9 1 3.1 1 2.6 0 1.1 -1 2.8 -1 3.2 -1-1 -1-3.9 -1-1.1 -1 0 -1.1 0z" fill="#25190f"/>
<svg x="570.1" y="244.1" width="7.2" height="18"><text x="3.8" y="14.1" font-size="11" letter-spacing="0.55" fill="rgba(0,0,0,0.75)" stroke="rgba(0,0,0,0.75)" stroke-width="0.2">P</text></svg>
<rect x="570.1" y="244.1" width="1" height="58.8" fill="rgba(0,0,0,0.25)"/>
<rect x="577.8" y="244.1" width="7.7" height="58.8" fill="#a27a53"/>
<rect x="577.8" y="261.4" width="7.7" height="1" fill="rgba(0,0,0,0.12)"/>
<path d="M583 262.4V302.9" stroke="rgba(0,0,0,0.12)" stroke-width="1"/>
<path d="M578.1 272.3l1 0 1 0 1-1 1.1-3.2 1-.7 1 2.5 1 2.4 0 1.1 -1 2.5 -1 2.6 -1-.7 -1.1-3.3 -1-1.1 -1 0 -1 0z" fill="#25190f"/>
<path d="M578.1 292.5l1 0 1 0 1-1 1.1-3.2 1-.7 1 2.5 1 2.4 0 1.1 -1 2.5 -1 2.6 -1-.7 -1.1-3.3 -1-1.1 -1 0 -1 0z" fill="#25190f"/>
<svg x="577.8" y="244.1" width="7.2" height="18"><text x="3.8" y="14.1" font-size="11" letter-spacing="0.55" fill="rgba(0,0,0,0.75)" stroke="rgba(0,0,0,0.75)" stroke-width="0.2">P</text></svg>
<rect x="577.8" y="244.1" width="1" height="58.8" fill="rgba(0,0,0,0.25)"/>
<rect x="585.5" y="244.1" width="7.7" height="58.8" fill="#a27a53"/>
<rect x="585.5" y="261.4" width="7.7" height="1" fill="rgba(0,0,0,0.12)"/>
<path d="M588.7 262.4V302.9" stroke="rgba(0,0,0,0.12)" stroke-width="1"/>
<path d="M585.8 272.3l1 0 1 0 1-.8 1-3.2 1-2.1 1 3.6 1 2.5 0 1.1 -1 2.6 -1 3.8 -1-2.2 -1-3.4 -1-.8 -1 0 -1 0z" fill="#25190f"/>
<path d="M585.8 292.5l1 0 1 0 1-.8 1-3.2 1-2.1 1 3.6 1 2.5 0 1.1 -1 2.6 -1 3.8 -1-2.2 -1-3.4 -1-.8 -1 0 -1 0z" fill="#25190f"/>
<svg x="585.5" y="244.1" width="7.2" height="18"><text x="3.8" y="14.1" font-size="11" letter-spacing="0.55" fill="rgba(0,0,0,0.75)" stroke="rgba(0,0,0,0.75)" stroke-width="0.2">P</text></svg>
<rect x="585.5" y="244.1" width="1" height="58.8" fill="rgba(0,0,0,0.25)"/>
<rect x="593.1" y="244.1" width="7.7" height="58.8" fill="#a27a53"/>
<rect x="593.1" y="261.4" width="7.7" height="1" fill="rgba(0,0,0,0.12)"/>
<path d="M594.4 262.4V302.9M600 262.4V302.9" stroke="rgba(0,0,0,0.12)" stroke-width="1"/>
<path d="M593.4 272.3l1.1 0 1 0 1-.9 1-3.4 1-.2 1 1.7 1 2.8 0 1.1 -1 3 -1 1.7 -1-.1 -1-3.6 -1-1 -1 0 -1.1 0z" fill="#25190f"/>
<path d="M593.4 292.5l1.1 0 1 0 1-.9 1-3.4 1-.2 1 1.7 1 2.8 0 1.1 -1 3 -1 1.7 -1-.1 -1-3.6 -1-1 -1 0 -1.1 0z" fill="#25190f"/>
<svg x="593.1" y="244.1" width="7.2" height="18"><text x="3.8" y="14.1" font-size="11" letter-spacing="0.55" fill="rgba(0,0,0,0.75)" stroke="rgba(0,0,0,0.75)" stroke-width="0.2">P</text></svg>
<rect x="593.1" y="244.1" width="1" height="58.8" fill="rgba(0,0,0,0.25)"/>
<rect x="600.8" y="244.1" width="7.7" height="58.8" fill="#a27a53"/>
<rect x="600.8" y="261.4" width="7.7" height="1" fill="rgba(0,0,0,0.12)"/>
<path d="M605.7 262.4V302.9" stroke="rgba(0,0,0,0.12)" stroke-width="1"/>
<path d="M601.1 272.3l1 0 1 0 1-.9 1.1-3.3 1-.7 1 2.5 1 2.4 0 1.1 -1 2.6 -1 2.5 -1-.7 -1.1-3.4 -1-1 -1 0 -1 0z" fill="#25190f"/>
<path d="M601.1 292.5l1 0 1 0 1-.9 1.1-3.3 1-.7 1 2.5 1 2.4 0 1.1 -1 2.6 -1 2.5 -1-.7 -1.1-3.4 -1-1 -1 0 -1 0z" fill="#25190f"/>
<svg x="600.8" y="244.1" width="7.2" height="18"><text x="3.8" y="14.1" font-size="11" letter-spacing="0.55" fill="rgba(0,0,0,0.75)" stroke="rgba(0,0,0,0.75)" stroke-width="0.2">P</text></svg>
<rect x="600.8" y="244.1" width="1" height="58.8" fill="rgba(0,0,0,0.25)"/>
<rect x="608.5" y="244.1" width="7.7" height="58.8" fill="#a27a53"/>
<rect x="608.5" y="261.4" width="7.7" height="1" fill="rgba(0,0,0,0.12)"/>
<path d="M611.4 262.4V302.9" stroke="rgba(0,0,0,0.12)" stroke-width="1"/>
<path d="M608.8 272.3l1 0 1 0 1-.7 1-3.2 1-1 1 2 1 2.9 0 1.1 -1 3.1 -1 2.1 -1-1 -1-3.4 -1-.8 -1 0 -1 0z" fill="#25190f"/>
<path d="M608.8 292.5l1 0 1 0 1-.7 1-3.2 1-1 1 2 1 2.9 0 1.1 -1 3.1 -1 2.1 -1-1 -1-3.4 -1-.8 -1 0 -1 0z" fill="#25190f"/>
<svg x="608.5" y="244.1" width="7.2" height="18"><text x="3.8" y="14.1" font-size="11" letter-spacing="0.55" fill="rgba(0,0,0,0.75)" stroke="rgba(0,0,0,0.75)" stroke-width="0.2">P</text></svg>
<rect x="608.5" y="244.1" width="1" height="58.8" fill="rgba(0,0,0,0.25)"/>
<rect x="616.1" y="244.1" width="7.7" height="58.8" fill="#a27a53"/>
<rect x="616.1" y="261.4" width="7.7" height="1" fill="rgba(0,0,0,0.12)"/>
<path d="M617 262.4V302.9M622.7 262.4V302.9" stroke="rgba(0,0,0,0.12)" stroke-width="1"/>
<path d="M616.4 272.3l1.1 0 1 0 1-1 1-3.2 1-.8 1 2.8 1 2.2 0 1.1 -1 2.3 -1 2.9 -1-.8 -1-3.4 -1-1 -1 0 -1.1 0z" fill="#25190f"/>
<path d="M616.4 292.5l1.1 0 1 0 1-1 1-3.2 1-.8 1 2.8 1 2.2 0 1.1 -1 2.3 -1 2.9 -1-.8 -1-3.4 -1-1 -1 0 -1.1 0z" fill="#25190f"/>
<svg x="616.1" y="244.1" width="7.2" height="18"><text x="3.8" y="14.1" font-size="11" letter-spacing="0.55" fill="rgba(0,0,0,0.75)" stroke="rgba(0,0,0,0.75)" stroke-width="0.2">P</text></svg>
<rect x="616.1" y="244.1" width="1" height="58.8" fill="rgba(0,0,0,0.25)"/>
<rect x="623.8" y="244.1" width="7.7" height="58.8" fill="#a27a53"/>
<rect x="623.8" y="261.4" width="7.7" height="1" fill="rgba(0,0,0,0.12)"/>
<path d="M628.4 262.4V302.9" stroke="rgba(0,0,0,0.12)" stroke-width="1"/>
<path d="M624.1 272.3l1 0 1 0 1-.8 1-3.7 1.1-.6 1 2.4 1 2.7 0 1.1 -1 2.8 -1 2.6 -1.1-.7 -1-3.9 -1-.8 -1 0 -1 0z" fill="#25190f"/>
<path d="M624.1 292.5l1 0 1 0 1-.8 1-3.7 1.1-.6 1 2.4 1 2.7 0 1.1 -1 2.8 -1 2.6 -1.1-.7 -1-3.9 -1-.8 -1 0 -1 0z" fill="#25190f"/>
<svg x="623.8" y="244.1" width="7.2" height="18"><text x="3.8" y="14.1" font-size="11" letter-spacing="0.55" fill="rgba(0,0,0,0.75)" stroke="rgba(0,0,0,0.75)" stroke-width="0.2">P</text></svg>
<rect x="623.8" y="244.1" width="1" height="58.8" fill="rgba(0,0,0,0.25)"/>
<rect x="631.5" y="244.1" width="7.7" height="58.8" fill="#a27a53"/>
<rect x="631.5" y="261.4" width="7.7" height="1" fill="rgba(0,0,0,0.12)"/>
<path d="M634 262.4V302.9" stroke="rgba(0,0,0,0.12)" stroke-width="1"/>
<path d="M631.8 272.3l1 0 1 0 1-.7 1-3.4 1-.5 1 1.9 1 2.7 0 1.1 -1 2.8 -1 2 -1-.5 -1-3.6 -1-.7 -1 0 -1 0z" fill="#25190f"/>
<path d="M631.8 292.5l1 0 1 0 1-.7 1-3.4 1-.5 1 1.9 1 2.7 0 1.1 -1 2.8 -1 2 -1-.5 -1-3.6 -1-.7 -1 0 -1 0z" fill="#25190f"/>
<svg x="631.5" y="244.1" width="7.2" height="18"><text x="3.8" y="14.1" font-size="11" letter-spacing="0.55" fill="rgba(0,0,0,0.75)" stroke="rgba(0,0,0,0.75)" stroke-width="0.2">P</text></svg>
<rect x="631.5" y="244.1" width="1" height="58.8" fill="rgba(0,0,0,0.25)"/>
<rect x="639.1" y="244.1" width="7.7" height="58.8" fill="#a27a53"/>
<rect x="639.1" y="261.4" width="7.7" height="1" fill="rgba(0,0,0,0.12)"/>
<path d="M645.4 262.4V302.9" stroke="rgba(0,0,0,0.12)" stroke-width="1"/>
<path d="M639.4 272.3l1 0 1.1 0 1-.9 1-3.3 1-1.5 1 2.7 1 3 0 1.1 -1 3.2 -1 2.8 -1-1.6 -1-3.4 -1-1 -1.1 0 -1 0z" fill="#25190f"/>
<path d="M639.4 292.5l1 0 1.1 0 1-.9 1-3.3 1-1.5 1 2.7 1 3 0 1.1 -1 3.2 -1 2.8 -1-1.6 -1-3.4 -1-1 -1.1 0 -1 0z" fill="#25190f"/>
<svg x="639.1" y="244.1" width="7.2" height="18"><text x="3.8" y="14.1" font-size="11" letter-spacing="0.55" fill="rgba(0,0,0,0.75)" stroke="rgba(0,0,0,0.75)" stroke-width="0.2">P</text></svg>
<rect x="639.1" y="244.1" width="1" height="58.8" fill="rgba(0,0,0,0.25)"/>
<rect x="646.8" y="244.1" width="7.7" height="58.8" fill="#a27a53"/>
<rect x="646.8" y="261.4" width="7.7" height="1" fill="rgba(0,0,0,0.12)"/>
<path d="M651 262.4V302.9" stroke="rgba(0,0,0,0.12)" stroke-width="1"/>
<path d="M647.1 272.3l1 0 1 0 1-.8 1-4.3 1.1-.3 1 2.7 1 2.7 0 1.1 -1 2.9 -1 2.8 -1.1-.3 -1-4.5 -1-.9 -1 0 -1 0z" fill="#25190f"/>
<path d="M647.1 292.5l1 0 1 0 1-.8 1-4.3 1.1-.3 1 2.7 1 2.7 0 1.1 -1 2.9 -1 2.8 -1.1-.3 -1-4.5 -1-.9 -1 0 -1 0z" fill="#25190f"/>
<svg x="646.8" y="244.1" width="7.2" height="18"><text x="3.8" y="14.1" font-size="11" letter-spacing="0.55" fill="rgba(0,0,0,0.75)" stroke="rgba(0,0,0,0.75)" stroke-width="0.2">P</text></svg>
<rect x="646.8" y="244.1" width="1" height="58.8" fill="rgba(0,0,0,0.25)"/>
<rect x="654.5" y="244.1" width="7.7" height="58.8" fill="#a27a53"/>
<rect x="654.5" y="261.4" width="7.7" height="1" fill="rgba(0,0,0,0.12)"/>
<path d="M656.7 262.4V302.9" stroke="rgba(0,0,0,0.12)" stroke-width="1"/>
<path d="M654.8 272.3l1 0 1 0 1-.8 1-4.2 1-.6 1 3.4 1 2.2 0 1.1 -1 2.4 -1 3.5 -1-.6 -1-4.4 -1-.9 -1 0 -1 0z" fill="#25190f"/>
<path d="M654.8 292.5l1 0 1 0 1-.8 1-4.2 1-.6 1 3.4 1 2.2 0 1.1 -1 2.4 -1 3.5 -1-.6 -1-4.4 -1-.9 -1 0 -1 0z" fill="#25190f"/>
<svg x="654.5" y="244.1" width="7.2" height="18"><text x="3.8" y="14.1" font-size="11" letter-spacing="0.55" fill="rgba(0,0,0,0.75)" stroke="rgba(0,0,0,0.75)" stroke-width="0.2">P</text></svg>
<rect x="654.5" y="244.1" width="1" height="58.8" fill="rgba(0,0,0,0.25)"/>
<rect x="662.1" y="244.1" width="7.7" height="58.8" fill="#a27a53"/>
<rect x="662.1" y="261.4" width="7.7" height="1" fill="rgba(0,0,0,0.12)"/>
<path d="M668 262.4V302.9" stroke="rgba(0,0,0,0.12)" stroke-width="1"/>
<path d="M662.4 272.3l1 0 1.1 0 1-1 1-3.9 1 .1 1 2.4 1 2.4 0 1.1 -1 2.5 -1 2.6 -1 0 -1-4 -1-1.1 -1.1 0 -1 0z" fill="#25190f"/>
<path d="M662.4 292.5l1 0 1.1 0 1-1 1-3.9 1 .1 1 2.4 1 2.4 0 1.1 -1 2.5 -1 2.6 -1 0 -1-4 -1-1.1 -1.1 0 -1 0z" fill="#25190f"/>
<svg x="662.1" y="244.1" width="7.2" height="18"><text x="3.8" y="14.1" font-size="11" letter-spacing="0.55" fill="rgba(0,0,0,0.75)" stroke="rgba(0,0,0,0.75)" stroke-width="0.2">P</text></svg>
<rect x="662.1" y="244.1" width="1" height="58.8" fill="rgba(0,0,0,0.25)"/>
<rect x="669.8" y="244.1" width="7.7" height="58.8" fill="#a27a53"/>
<rect x="669.8" y="261.4" width="7.7" height="1" fill="rgba(0,0,0,0.12)"/>
<path d="M673.7 262.4V302.9" stroke="rgba(0,0,0,0.12)" stroke-width="1"/>
<path d="M670.1 272.3l1 0 1 0 1-.9 1-3.2 1.1-1.3 1 2.5 1 2.9 0 1.1 -1 3.1 -1 2.5 -1.1-1.2 -1-3.5 -1-.9 -1 0 -1 0z" fill="#25190f"/>
<path d="M670.1 292.5l1 0 1 0 1-.9 1-3.2 1.1-1.3 1 2.5 1 2.9 0 1.1 -1 3.1 -1 2.5 -1.1-1.2 -1-3.5 -1-.9 -1 0 -1 0z" fill="#25190f"/>
<svg x="669.8" y="244.1" width="7.2" height="18"><text x="3.8" y="14.1" font-size="11" letter-spacing="0.55" fill="rgba(0,0,0,0.75)" stroke="rgba(0,0,0,0.75)" stroke-width="0.2">P</text></svg>
<rect x="669.8" y="244.1" width="1" height="58.8" fill="rgba(0,0,0,0.25)"/>
<rect x="677.5" y="244.1" width="7.7" height="58.8" fill="#a27a53"/>
<rect x="677.5" y="261.4" width="7.7" height="1" fill="rgba(0,0,0,0.12)"/>
<path d="M679.4 262.4V302.9M685 262.4V302.9" stroke="rgba(0,0,0,0.12)" stroke-width="1"/>
<path d="M677.8 272.3l1 0 1 0 1-.9 1-3.4 1-1.8 1 3.1 1 3 0 1.1 -1 3.2 -1 3.2 -1-1.9 -1-3.5 -1-1 -1 0 -1 0z" fill="#25190f"/>
<path d="M677.8 292.5l1 0 1 0 1-.9 1-3.4 1-1.8 1 3.1 1 3 0 1.1 -1 3.2 -1 3.2 -1-1.9 -1-3.5 -1-1 -1 0 -1 0z" fill="#25190f"/>
<svg x="677.5" y="244.1" width="7.2" height="18"><text x="3.8" y="14.1" font-size="11" letter-spacing="0.55" fill="rgba(0,0,0,0.75)" stroke="rgba(0,0,0,0.75)" stroke-width="0.2">P</text></svg>
<rect x="677.5" y="244.1" width="1" height="58.8" fill="rgba(0,0,0,0.25)"/>
<rect x="685.1" y="244.1" width="7.7" height="58.8" fill="#a27a53"/>
<rect x="685.1" y="261.4" width="7.7" height="1" fill="rgba(0,0,0,0.12)"/>
<path d="M690.7 262.4V302.9" stroke="rgba(0,0,0,0.12)" stroke-width="1"/>
<path d="M685.4 272.3l1 0 1.1 0 1-1 1-4.3 1-.6 1 2.9 1 3 0 1.1 -1 3.2 -1 3 -1-.6 -1-4.5 -1-1.1 -1.1 0 -1 0z" fill="#25190f"/>
<path d="M685.4 292.5l1 0 1.1 0 1-1 1-4.3 1-.6 1 2.9 1 3 0 1.1 -1 3.2 -1 3 -1-.6 -1-4.5 -1-1.1 -1.1 0 -1 0z" fill="#25190f"/>
<svg x="685.1" y="244.1" width="7.2" height="18"><text x="3.8" y="14.1" font-size="11" letter-spacing="0.55" fill="rgba(0,0,0,0.75)" stroke="rgba(0,0,0,0.75)" stroke-width="0.2">P</text></svg>
<rect x="685.1" y="244.1" width="1" height="58.8" fill="rgba(0,0,0,0.25)"/>
<rect x="692.8" y="244.1" width="20.4" height="58.8" fill="#a27a53"/>
<rect x="692.8" y="261.4" width="20.4" height="1" fill="rgba(0,0,0,0.12)"/>
<path d="M696.4 262.4V302.9M702 262.4V302.9M707.7 262.4V302.9" stroke="rgba(0,0,0,0.12)" stroke-width="1"/>
<path d="M693.1 272.3l1-1.4 1-3.7 1 0 1 1 .9 3.4 1 .7 1 0 1 0 1 0 1 0 1 0 1 0 1 0 1 0 1 0 .9 0 1 0 1 0 1 0 1 0 0 1.1 -1 0 -1 0 -1 0 -1 0 -.9 0 -1 0 -1 0 -1 0 -1 0 -1 0 -1 0 -1 0 -1 0 -1 0 -1 .8 -.9 3.5 -1 1.1 -1 0 -1-3.9 -1-1.5z" fill="#25190f"/>
<path d="M693.1 292.5l1-1.4 1-3.7 1 0 1 1 .9 3.4 1 .7 1 0 1 0 1 0 1 0 1 0 1 0 1 0 1 0 1 0 .9 0 1 0 1 0 1 0 1 0 0 1.1 -1 0 -1 0 -1 0 -1 0 -.9 0 -1 0 -1 0 -1 0 -1 0 -1 0 -1 0 -1 0 -1 0 -1 0 -1 .8 -.9 3.5 -1 1.1 -1 0 -1-3.9 -1-1.5z" fill="#25190f"/>
<svg x="692.8" y="244.1" width="19.9" height="18"><text x="3.8" y="14.1" font-size="11" letter-spacing="0.55" fill="rgba(0,0,0,0.75)" stroke="rgba(0,0,0,0.75)" stroke-width="0.2">Pat</text></svg>
<rect x="692.8" y="244.1" width="1" height="58.8" fill="rgba(0,0,0,0.25)"/>
<rect x="296.4" y="304.8" width="91.6" height="58.9" fill="#d8a03a"/>
<rect x="296.4" y="322.2" width="91.6" height="1" fill="rgba(0,0,0,0.12)"/>
<path d="M299.7 323.2V363.7M305.4 323.2V363.7M311 323.2V363.7M316.7 323.2V363.7M322.4 323.2V363.7M328 323.2V363.7M333.7 323.2V363.7M339.4 323.2V363.7M345 323.2V363.7M350.7 323.2V363.7M356.4 323.2V363.7M362 323.2V363.7M367.7 323.2V363.7M373.4 323.2V363.7M379 323.2V363.7M384.7 323.2V363.7" stroke="rgba(0,0,0,0.12)" stroke-width="1"/>
<path d="M296.7 333.1l1-.2 1-.6 1 .1 1-.2 1-.1 1-.1 1-.5 1-.7 1-.7 1 .7 1 0 1-1.7 1 1.5 1-.1 1 .3 1-.2 1 .3 1-.4 1 .2 1 0 1-.3 1 0 1 .2 1-.4 1-.3 1 .6 1 .3 1-.3 1-.6 1-.8 1 1.4 1-.5 1 .2 1 0 1 .6 1-1.1 1 .4 1-1.2 1 1.4 1 .2 1-1 1 .1 1-1.2 1 1.5 1 .1 1-.6 1 .3 1 .7 1-.1 1-.4 1-1 1 .5 1 .2 1 .5 1 .8 1-.3 1-.2 1-.3 1-.1 1-.4 1-.8 1 1.5 1 .2 1-.1 1 .6 1-.2 1-.6 1 .4 1 .2 1-.1 1 .2 1-.4 1-.5 1-1.3 1 1.4 1 .5 1-.1 1 .1 1 .1 1-.9 1-.9 1 1 1-.2 1 1.1 1 .1 1-.3 1-.3 1 .2 1 .3 1-.9 1 .2 0 7.3 -1 .2 -1-1 -1 .4 -1 .2 -1-.4 -1-.3 -1 .2 -1 1.1 -1-.2 -1 1 -1-.9 -1-1 -1 .1 -1 .1 -1-.1 -1 .5 -1 1.6 -1-1.5 -1-.4 -1-.5 -1 .2 -1 0 -1 .1 -1 .5 -1-.6 -1-.3 -1 .7 -1-.1 -1 .1 -1 1.6 -1-.8 -1-.4 -1-.1 -1-.4 -1-.2 -1-.2 -1 .7 -1 .7 -1 .1 -1 .5 -1-1 -1-.4 -1-.1 -1 .7 -1 .3 -1-.6 -1 0 -1 1.6 -1-1.2 -1 .1 -1-1 -1 .2 -1 1.5 -1-1.3 -1 .4 -1-1.1 -1 .6 -1 0 -1 .2 -1-.5 -1 1.4 -1-.8 -1-.7 -1-.3 -1 .3 -1 .7 -1-.3 -1-.4 -1 .2 -1 0 -1-.4 -1 0 -1 .2 -1-.4 -1 .4 -1-.2 -1 .3 -1-.2 -1 1.7 -1-1.9 -1 0 -1 .8 -1-.8 -1-.7 -1-.5 -1-.1 -1-.1 -1-.2 -1 .1 -1-.7 -1-.2z" fill="#2e2213"/>
<path d="M296.7 353.3l1-.2 1-.6 1 .1 1-.2 1-.1 1-.1 1-.5 1-.7 1-.7 1 .7 1 0 1-1.7 1 1.5 1-.1 1 .3 1-.2 1 .3 1-.4 1 .2 1 0 1-.3 1 0 1 .2 1-.4 1-.3 1 .6 1 .3 1-.3 1-.6 1-.8 1 1.4 1-.5 1 .2 1 0 1 .6 1-1.1 1 .4 1-1.2 1 1.4 1 .2 1-1 1 .1 1-1.2 1 1.5 1 .1 1-.6 1 .3 1 .7 1-.1 1-.4 1-1 1 .5 1 .2 1 .5 1 .8 1-.3 1-.2 1-.3 1-.1 1-.4 1-.8 1 1.5 1 .2 1-.1 1 .6 1-.2 1-.6 1 .4 1 .2 1-.1 1 .2 1-.4 1-.5 1-1.3 1 1.4 1 .5 1-.1 1 .1 1 .1 1-.9 1-.9 1 1 1-.2 1 1.1 1 .1 1-.3 1-.3 1 .2 1 .3 1-.9 1 .2 0 7.3 -1 .2 -1-1 -1 .4 -1 .2 -1-.4 -1-.3 -1 .2 -1 1.1 -1-.2 -1 1 -1-.9 -1-1 -1 .1 -1 .1 -1-.1 -1 .5 -1 1.6 -1-1.5 -1-.4 -1-.5 -1 .2 -1 0 -1 .1 -1 .5 -1-.6 -1-.3 -1 .7 -1-.1 -1 .1 -1 1.6 -1-.8 -1-.4 -1-.1 -1-.4 -1-.2 -1-.2 -1 .7 -1 .7 -1 .1 -1 .5 -1-1 -1-.4 -1-.1 -1 .7 -1 .3 -1-.6 -1 0 -1 1.6 -1-1.2 -1 .1 -1-1 -1 .2 -1 1.5 -1-1.3 -1 .4 -1-1.1 -1 .6 -1 0 -1 .2 -1-.5 -1 1.4 -1-.8 -1-.7 -1-.3 -1 .3 -1 .7 -1-.3 -1-.4 -1 .2 -1 0 -1-.4 -1 0 -1 .2 -1-.4 -1 .4 -1-.2 -1 .3 -1-.2 -1 1.7 -1-1.9 -1 0 -1 .8 -1-.8 -1-.7 -1-.5 -1-.1 -1-.1 -1-.2 -1 .1 -1-.7 -1-.2z" fill="#2e2213"/>
<path d="M296.4 323.2H312.4L296.4 363.7Z" fill="rgba(0,0,0,0.09)"/>
<svg x="296.4" y="304.8" width="91.1" height="18"><text x="3.8" y="14.1" font-size="11" letter-spacing="0.55" fill="rgba(0,0,0,0.75)" stroke="rgba(0,0,0,0.75)" stroke-width="0.2">Patterning2 3-UndW</text></svg>
<rect x="394.1" y="304.8" width="2.8" height="58.9" fill="#d8a03a"/>
<rect x="394.1" y="322.2" width="2.8" height="1" fill="rgba(0,0,0,0.12)"/>
<path d="M396 323.2V363.7" stroke="rgba(0,0,0,0.12)" stroke-width="1"/>
<path d="M394.9 330.7l1.2 .1 0 5.8 -1.2 .2z" fill="#2e2213"/>
<path d="M394.9 350.9l1.2 .1 0 5.8 -1.2 .2z" fill="#2e2213"/>
<rect x="394.1" y="304.8" width="1" height="58.9" fill="rgba(0,0,0,0.2)"/>
<rect x="402.1" y="304.8" width="2.8" height="58.9" fill="#d8a03a"/>
<rect x="402.1" y="322.2" width="2.8" height="1" fill="rgba(0,0,0,0.12)"/>
<path d="M402.9 330.1l1.2 .1 0 7.1 -1.2 .1z" fill="#2e2213"/>
<path d="M402.9 350.3l1.2 .1 0 7.1 -1.2 .1z" fill="#2e2213"/>
<rect x="402.1" y="304.8" width="1" height="58.9" fill="rgba(0,0,0,0.2)"/>
<rect x="415.3" y="304.8" width="3.2" height="58.9" fill="#d8a03a"/>
<rect x="415.3" y="322.2" width="3.2" height="1" fill="rgba(0,0,0,0.12)"/>
<path d="M416.1 330.5l.8 .2 .8 .2 0 5.7 -.8 .1 -.8 .3z" fill="#2e2213"/>
<path d="M416.1 350.7l.8 .2 .8 .2 0 5.7 -.8 .1 -.8 .3z" fill="#2e2213"/>
<rect x="415.3" y="304.8" width="1" height="58.9" fill="rgba(0,0,0,0.2)"/>
<rect x="418.5" y="304.8" width="3.1" height="58.9" fill="#d8a03a"/>
<rect x="418.5" y="322.2" width="3.1" height="1" fill="rgba(0,0,0,0.12)"/>
<path d="M419.3 330.1l.7 .2 .8-.3 0 7.4 -.8-.3 -.7 .3z" fill="#2e2213"/>
<path d="M419.3 350.3l.7 .2 .8-.3 0 7.4 -.8-.3 -.7 .3z" fill="#2e2213"/>
<rect x="418.5" y="304.8" width="1" height="58.9" fill="rgba(0,0,0,0.2)"/>
<rect x="421.6" y="304.8" width="5.4" height="58.9" fill="#d8a03a"/>
<rect x="421.6" y="322.2" width="5.4" height="1" fill="rgba(0,0,0,0.12)"/>
<path d="M424.4 323.2V363.7" stroke="rgba(0,0,0,0.12)" stroke-width="1"/>
<path d="M422.4 330.3l1 0 .9-.2 .9-.1 1 0 0 7.4 -1 0 -.9 0 -.9-.3 -1 .1z" fill="#2e2213"/>
<path d="M422.4 350.5l1 0 .9-.2 .9-.1 1 0 0 7.4 -1 0 -.9 0 -.9-.3 -1 .1z" fill="#2e2213"/>
<rect x="421.6" y="304.8" width="1" height="58.9" fill="rgba(0,0,0,0.2)"/>
<rect x="431.3" y="304.8" width="4.6" height="58.9" fill="#d8a03a"/>
<rect x="431.3" y="322.2" width="4.6" height="1" fill="rgba(0,0,0,0.12)"/>
<path d="M435.7 323.2V363.7" stroke="rgba(0,0,0,0.12)" stroke-width="1"/>
<path d="M432.1 330.4l1-.1 1 .6 1-.3 0 6.3 -1-.3 -1 .6 -1-.1z" fill="#2e2213"/>
<path d="M432.1 350.6l1-.1 1 .6 1-.3 0 6.3 -1-.3 -1 .6 -1-.1z" fill="#2e2213"/>
<rect x="431.3" y="304.8" width="1" height="58.9" fill="rgba(0,0,0,0.2)"/>
<rect x="440.2" y="304.8" width="7.1" height="58.9" fill="#d8a03a"/>
<rect x="440.2" y="322.2" width="7.1" height="1" fill="rgba(0,0,0,0.12)"/>
<path d="M441.4 323.2V363.7M447 323.2V363.7" stroke="rgba(0,0,0,0.12)" stroke-width="1"/>
<path d="M441 330.7l.9 .2 .9 .3 1-.2 .9-.1 .9 0 .9 0 0 5.7 -.9-.1 -.9 0 -.9 0 -1-.3 -.9 .3 -.9 .2z" fill="#2e2213"/>
<path d="M441 350.9l.9 .2 .9 .3 1-.2 .9-.1 .9 0 .9 0 0 5.7 -.9-.1 -.9 0 -.9 0 -1-.3 -.9 .3 -.9 .2z" fill="#2e2213"/>
<rect x="440.2" y="304.8" width="1" height="58.9" fill="rgba(0,0,0,0.2)"/>
<rect x="404.9" y="304.8" width="6.1" height="58.9" fill="#86672a"/>
<rect x="447.5" y="304.8" width="265.3" height="58.9" fill="#d8a03a"/>
<rect x="447.5" y="322.2" width="265.3" height="1" fill="rgba(0,0,0,0.12)"/>
<path d="M452.7 323.2V363.7M458.4 323.2V363.7M464 323.2V363.7M469.7 323.2V363.7M475.4 323.2V363.7M481 323.2V363.7M486.7 323.2V363.7M492.4 323.2V363.7M498 323.2V363.7M503.7 323.2V363.7M509.4 323.2V363.7M515 323.2V363.7M520.7 323.2V363.7M526.4 323.2V363.7M532 323.2V363.7M537.7 323.2V363.7M543.4 323.2V363.7M549 323.2V363.7M554.7 323.2V363.7M560.4 323.2V363.7M566 323.2V363.7M571.7 323.2V363.7M577.4 323.2V363.7M583 323.2V363.7M588.7 323.2V363.7M594.4 323.2V363.7M600 323.2V363.7M605.7 323.2V363.7M611.4 323.2V363.7M617 323.2V363.7M622.7 323.2V363.7M628.4 323.2V363.7M634 323.2V363.7M639.7 323.2V363.7M645.4 323.2V363.7M651 323.2V363.7M656.7 323.2V363.7M662.4 323.2V363.7M668 323.2V363.7M673.7 323.2V363.7M679.4 323.2V363.7M685 323.2V363.7M690.7 323.2V363.7M696.4 323.2V363.7M702 323.2V363.7M707.7 323.2V363.7" stroke="rgba(0,0,0,0.12)" stroke-width="1"/>
<path d="M447.8 329.8l1-.8 1 .8 1-.6 1-.5 1 .1 1 .2 1 .7 1-.1 1 .2 1-1.4 1 .4 1 .3 1-.7 1 1.5 1-.2 1-.8 1 .5 1 1 1-.7 1-.3 1 .9 1-.8 1 .7 1 0 1-.8 1 1 1 .4 1 .1 1-.3 1-.4 1 .3 1-1.8 1 1.5 1-1.1 1 .8 1 .3 1-1.3 1 1.6 1-.2 1-.8 .9 1 1 .2 1-.3 1 .5 1-.6 1 .3 1-1.2 1 1.3 1-.4 1-1.3 1 1.1 1 0 1-.4 1-.2 1 .6 1 .2 1 .5 1-.1 1-.3 1-.1 1 .4 1-.6 1-.5 1 .5 1 .3 1 0 1-.3 1 .2 1-.9 1 .6 1-1.3 1 1 1-1.1 1 .2 1 1 1 0 1 .8 1-.7 1-.4 1 .2 1 .5 1-.6 1 .9 1-.4 1 .5 1-.9 1-.3 1 1 1-.5 1 .3 1-.3 1-1.1 1 1.4 1-.2 1-.6 1 .7 1 0 1-.2 1-.5 1 0 1 .8 1-.6 1 .5 1-1.5 1 .6 1-.8 1 1.1 1 .3 1 .7 1-.5 1-.3 1 .4 1-.4 1 .1 1 .4 1-1.3 1 .8 1 .3 1 .3 1-.9 1-1 1 .9 .9 .5 1 .3 1-.8 1 1.3 1-.1 1 0 1-.1 1 .2 1 .2 1-.3 1-.5 1 0 1-.2 1-.7 1-.7 1 1.1 1 .1 1 0 1-.9 1 1.4 1-.2 1-.2 1-.9 1 .5 1 1 1-.3 1 .4 1-.2 1-.7 1-.5 1 .1 1 .3 1 .4 1 .3 1-1.3 1 .4 1 .7 1 0 1-1 1 0 1 1 1-.3 1 .6 1-.4 1-1.2 1-.2 1 .6 1-.6 1 .6 1 .1 1 1.2 1 .2 1-.6 1 .5 1 0 1-.5 1-.1 1-.2 1 .4 1 .2 1-.6 1 .7 1 .5 1 .1 1-.2 1-.6 1-.4 1 .8 1-.5 1-.6 1 .5 1 .7 1-.4 1 .5 1 .1 1-.1 1-1.4 1 1 1 .2 1 .2 1-1.1 1 1 .9-.2 1 .5 1-.6 1-.2 1-1.3 1 .7 1 .7 1 .3 1-.1 1-.6 1 .3 1 .3 1 .2 1-.4 1-.2 1-.6 1-.1 1-.5 1 .6 1 .1 1 .6 1-.4 1-.2 1 .3 1 0 1-.4 1-.6 1 .1 1 .9 1 .4 1-.1 1-.8 1 .3 1 .1 1 .2 1-.5 1 .5 1 .2 1-.1 1 .1 1-.1 0 7.4 -1 0 -1 .1 -1-.1 -1 .2 -1 .5 -1-.5 -1 .2 -1 .1 -1 .3 -1-.8 -1-.2 -1 .5 -1 .9 -1 .1 -1-.6 -1-.4 -1-.1 -1 .4 -1-.2 -1-.4 -1 .6 -1 .1 -1 .6 -1-.5 -1 0 -1-.7 -1-.3 -1-.3 -1 .1 -1 .4 -1 .3 -1-.7 -1-.1 -1 .4 -1 .7 -1 .8 -1-1.4 -1-.2 -1-.7 -1 .5 -.9-.1 -1 1 -1-1.2 -1 .2 -1 .3 -1 1.1 -1-1.5 -1-.2 -1 .2 -1 .5 -1-.4 -1 .7 -1 .5 -1-.6 -1-.5 -1 .8 -1-.4 -1-.6 -1-.3 -1 .1 -1 .5 -1 .8 -1-.6 -1 .2 -1 .4 -1-.2 -1-.1 -1-.5 -1 0 -1 .4 -1-.5 -1 .2 -1 1.2 -1 .1 -1 .6 -1-.5 -1 .5 -1-.2 -1-1.2 -1-.5 -1 .7 -1-.3 -1 1.1 -1-.1 -1-1 -1 0 -1 .7 -1 .4 -1-1.4 -1 .4 -1 .4 -1 .3 -1 .2 -1-.6 -1-.8 -1-.1 -1 .3 -1-.2 -1 1 -1 .6 -1-1 -1-.3 -1-.1 -1 1.5 -1-1 -1 0 -1 .1 -1 1.1 -1-.7 -1-.7 -1-.2 -1 0 -1-.6 -1-.3 -1 .2 -1 .3 -1-.1 -1-.1 -1 0 -1 1.4 -1-.9 -1 .3 -.9 .5 -1 .9 -1-1 -1-.9 -1 .3 -1 .3 -1 .9 -1-1.4 -1 .4 -1 .1 -1-.4 -1 .3 -1-.2 -1-.5 -1 .7 -1 .3 -1 1.1 -1-.8 -1 .7 -1-1.6 -1 .5 -1-.6 -1 .8 -1 0 -1-.5 -1-.2 -1 0 -1 .7 -1-.6 -1-.2 -1 1.5 -1-1.2 -1-.3 -1 .3 -1-.5 -1 1.1 -1-.5 -1-.8 -1 .5 -1-.4 -1 .9 -1-.6 -1 .5 -1 .2 -1-.4 -1-.7 -1 .8 -1 0 -1 1 -1 .3 -1-1.2 -1 1 -1-1.4 -1 .8 -1-1.1 -1 .3 -1-.3 -1-.1 -1 .4 -1 .6 -1-.7 -1-.6 -1 .5 -1-.1 -1-.4 -1 0 -1 .4 -1 .2 -1 .8 -1-.3 -1-.5 -1 0 -1 1.2 -1-1.3 -1-.5 -1 1.4 -1-1.3 -1 .3 -1-.6 -1 .6 -1-.4 -1 .2 -.9 1.2 -1-.9 -1-.2 -1 1.7 -1-1.5 -1 .4 -1 .8 -1-1.1 -1 1.5 -1-1.8 -1 .3 -1-.5 -1-.2 -1 .1 -1 .4 -1 1 -1-.8 -1 0 -1 .7 -1-.9 -1 1.1 -1-.4 -1-.8 -1 1.1 -1 .5 -1-.8 -1-.2 -1 1.5 -1-.7 -1 .3 -1 .4 -1-1.4 -1 .2 -1-.1 -1 .7 -1 .3 -1 0 -1-.4 -1-.7 -1 .9 -1-.9z" fill="#2e2213"/>
<path d="M447.8 350l1-.8 1 .8 1-.6 1-.5 1 .1 1 .2 1 .7 1-.1 1 .2 1-1.4 1 .4 1 .3 1-.7 1 1.5 1-.2 1-.8 1 .5 1 1 1-.7 1-.3 1 .9 1-.8 1 .7 1 0 1-.8 1 1 1 .4 1 .1 1-.3 1-.4 1 .3 1-1.8 1 1.5 1-1.1 1 .8 1 .3 1-1.3 1 1.6 1-.2 1-.8 .9 1 1 .2 1-.3 1 .5 1-.6 1 .3 1-1.2 1 1.3 1-.4 1-1.3 1 1.1 1 0 1-.4 1-.2 1 .6 1 .2 1 .5 1-.1 1-.3 1-.1 1 .4 1-.6 1-.5 1 .5 1 .3 1 0 1-.3 1 .2 1-.9 1 .6 1-1.3 1 1 1-1.1 1 .2 1 1 1 0 1 .8 1-.7 1-.4 1 .2 1 .5 1-.6 1 .9 1-.4 1 .5 1-.9 1-.3 1 1 1-.5 1 .3 1-.3 1-1.1 1 1.4 1-.2 1-.6 1 .7 1 0 1-.2 1-.5 1 0 1 .8 1-.6 1 .5 1-1.5 1 .6 1-.8 1 1.1 1 .3 1 .7 1-.5 1-.3 1 .4 1-.4 1 .1 1 .4 1-1.3 1 .8 1 .3 1 .3 1-.9 1-1 1 .9 .9 .5 1 .3 1-.8 1 1.3 1-.1 1 0 1-.1 1 .2 1 .2 1-.3 1-.5 1 0 1-.2 1-.7 1-.7 1 1.1 1 .1 1 0 1-.9 1 1.4 1-.2 1-.2 1-.9 1 .5 1 1 1-.3 1 .4 1-.2 1-.7 1-.5 1 .1 1 .3 1 .4 1 .3 1-1.3 1 .4 1 .7 1 0 1-1 1 0 1 1 1-.3 1 .6 1-.4 1-1.2 1-.2 1 .6 1-.6 1 .6 1 .1 1 1.2 1 .2 1-.6 1 .5 1 0 1-.5 1-.1 1-.2 1 .4 1 .2 1-.6 1 .7 1 .5 1 .1 1-.2 1-.6 1-.4 1 .8 1-.5 1-.6 1 .5 1 .7 1-.4 1 .5 1 .1 1-.1 1-1.4 1 1 1 .2 1 .2 1-1.1 1 1 .9-.2 1 .5 1-.6 1-.2 1-1.3 1 .7 1 .7 1 .3 1-.1 1-.6 1 .3 1 .3 1 .2 1-.4 1-.2 1-.6 1-.1 1-.5 1 .6 1 .1 1 .6 1-.4 1-.2 1 .3 1 0 1-.4 1-.6 1 .1 1 .9 1 .4 1-.1 1-.8 1 .3 1 .1 1 .2 1-.5 1 .5 1 .2 1-.1 1 .1 1-.1 0 7.4 -1 0 -1 .1 -1-.1 -1 .2 -1 .5 -1-.5 -1 .2 -1 .1 -1 .3 -1-.8 -1-.2 -1 .5 -1 .9 -1 .1 -1-.6 -1-.4 -1-.1 -1 .4 -1-.2 -1-.4 -1 .6 -1 .1 -1 .6 -1-.5 -1 0 -1-.7 -1-.3 -1-.3 -1 .1 -1 .4 -1 .3 -1-.7 -1-.1 -1 .4 -1 .7 -1 .8 -1-1.4 -1-.2 -1-.7 -1 .5 -.9-.1 -1 1 -1-1.2 -1 .2 -1 .3 -1 1.1 -1-1.5 -1-.2 -1 .2 -1 .5 -1-.4 -1 .7 -1 .5 -1-.6 -1-.5 -1 .8 -1-.4 -1-.6 -1-.3 -1 .1 -1 .5 -1 .8 -1-.6 -1 .2 -1 .4 -1-.2 -1-.1 -1-.5 -1 0 -1 .4 -1-.5 -1 .2 -1 1.2 -1 .1 -1 .6 -1-.5 -1 .5 -1-.2 -1-1.2 -1-.5 -1 .7 -1-.3 -1 1.1 -1-.1 -1-1 -1 0 -1 .7 -1 .4 -1-1.4 -1 .4 -1 .4 -1 .3 -1 .2 -1-.6 -1-.8 -1-.1 -1 .3 -1-.2 -1 1 -1 .6 -1-1 -1-.3 -1-.1 -1 1.5 -1-1 -1 0 -1 .1 -1 1.1 -1-.7 -1-.7 -1-.2 -1 0 -1-.6 -1-.3 -1 .2 -1 .3 -1-.1 -1-.1 -1 0 -1 1.4 -1-.9 -1 .3 -.9 .5 -1 .9 -1-1 -1-.9 -1 .3 -1 .3 -1 .9 -1-1.4 -1 .4 -1 .1 -1-.4 -1 .3 -1-.2 -1-.5 -1 .7 -1 .3 -1 1.1 -1-.8 -1 .7 -1-1.6 -1 .5 -1-.6 -1 .8 -1 0 -1-.5 -1-.2 -1 0 -1 .7 -1-.6 -1-.2 -1 1.5 -1-1.2 -1-.3 -1 .3 -1-.5 -1 1.1 -1-.5 -1-.8 -1 .5 -1-.4 -1 .9 -1-.6 -1 .5 -1 .2 -1-.4 -1-.7 -1 .8 -1 0 -1 1 -1 .3 -1-1.2 -1 1 -1-1.4 -1 .8 -1-1.1 -1 .3 -1-.3 -1-.1 -1 .4 -1 .6 -1-.7 -1-.6 -1 .5 -1-.1 -1-.4 -1 0 -1 .4 -1 .2 -1 .8 -1-.3 -1-.5 -1 0 -1 1.2 -1-1.3 -1-.5 -1 1.4 -1-1.3 -1 .3 -1-.6 -1 .6 -1-.4 -1 .2 -.9 1.2 -1-.9 -1-.2 -1 1.7 -1-1.5 -1 .4 -1 .8 -1-1.1 -1 1.5 -1-1.8 -1 .3 -1-.5 -1-.2 -1 .1 -1 .4 -1 1 -1-.8 -1 0 -1 .7 -1-.9 -1 1.1 -1-.4 -1-.8 -1 1.1 -1 .5 -1-.8 -1-.2 -1 1.5 -1-.7 -1 .3 -1 .4 -1-1.4 -1 .2 -1-.1 -1 .7 -1 .3 -1 0 -1-.4 -1-.7 -1 .9 -1-.9z" fill="#2e2213"/>
<svg x="447.5" y="304.8" width="264.8" height="18"><text x="3.8" y="14.1" font-size="11" letter-spacing="0.55" fill="rgba(0,0,0,0.75)" stroke="rgba(0,0,0,0.75)" stroke-width="0.2">Patterning2 3-UndW_L1 [2019-11-22 053313]</text></svg>
<rect x="447.5" y="304.8" width="1" height="58.9" fill="rgba(0,0,0,0.2)"/>
<rect x="692" y="333.2" width="20.5" height="0.9" fill="#2e2213"/><rect x="692" y="353.4" width="20.5" height="0.9" fill="#2e2213"/>
<rect x="221" y="365.6" width="200.5" height="58.9" fill="#bff235"/>
<rect x="221" y="383" width="200.5" height="1" fill="rgba(0,0,0,0.12)"/>
<path d="M226 384V424.5M231.7 384V424.5M237.3 384V424.5M243 384V424.5M248.7 384V424.5M254.3 384V424.5M260 384V424.5M265.7 384V424.5M271.3 384V424.5M277 384V424.5M282.7 384V424.5M288.3 384V424.5M294 384V424.5M299.7 384V424.5M305.4 384V424.5M311 384V424.5M316.7 384V424.5M322.4 384V424.5M328 384V424.5M333.7 384V424.5M339.4 384V424.5M345 384V424.5M350.7 384V424.5M356.4 384V424.5M362 384V424.5M367.7 384V424.5M373.4 384V424.5M379 384V424.5M384.7 384V424.5M390.4 384V424.5M396 384V424.5M401.7 384V424.5M407.4 384V424.5M413 384V424.5M418.7 384V424.5" stroke="rgba(0,0,0,0.12)" stroke-width="1"/>
<path d="M221.3 393.9l1-.2 1-.1 1-.4 1-.7 1 .1 1-.1 1-.1 1-.7 1-1 1 .9 1 .3 1 0 1-.1 1-.1 1 .1 1-.6 1 .6 1-.5 1 .4 1-1.3 1 1.2 1-.3 1 0 1-.2 1-.9 1 1 1 .2 1 .2 1 .1 1 0 1-.5 1-.2 1 .4 1 0 1-1.1 1 1.4 1 0 1-.3 1 .2 1 0 1-.1 1 .1 1 .1 1-.8 1 .4 1-1 1 1 1-.1 1 0 1-.6 1 .5 1-.4 1 .7 1 .1 1-1.3 1 1.5 1-.4 1-.6 1 0 1 .3 1-.7 1 .5 1 .6 1-.8 1 .6 1 .3 1-.4 1-.4 1-.1 1 .4 1 0 1-.1 1 .4 1 .3 1-.1 1 0 1-.1 1 .4 1-.4 1-.1 1-.1 1 .3 1-1 1 .5 1 .1 1 .4 1-.1 1-.7 1 .1 1 .8 1 .2 1-.3 1 0 1 .3 1-.4 1-.8 1-.4 1 .9 1-.9 .9 .3 1-.3 1 .7 1 .1 1 .6 1-.2 1-.2 1-.4 1-.1 1 .9 1 .1 1 .4 1-.8 1 .5 1 .2 1-.6 1 .2 1-.6 1-.2 1 .6 1 .2 1 0 1-.1 1-.8 1 .2 1-.4 1 .2 1 .9 1 .1 1 .3 1-.1 1 .1 1 .2 1-.2 1-.1 1 0 1-.8 1 .9 1-.4 1 .5 1 .1 1-.3 1 .2 1-.2 1 0 1 0 1-.1 1-.3 1-.8 1 .3 1 .4 1 .7 1-.2 1-.1 1-.5 1-1 1 1.2 1 .3 1-.2 1-1.3 1 1.2 1-1 1 .9 1-.4 1 .8 1-.1 1 .5 1-.6 1 .1 1-.8 1 .5 1 .4 1 0 1-1.1 1-.5 1 .8 1 .7 1 .2 1 .1 1-.1 1 0 1-.1 1 .2 1-.1 1-.4 1 .2 1 0 1 0 1-.2 1-.2 1-1 1 .7 1 .1 1 .6 1-.2 1 .3 1-.3 1 .1 1-1.2 1 1.2 1 .3 0 5.2 -1 .4 -1 1.2 -1-1.3 -1 .1 -1-.3 -1 .3 -1-.2 -1 .6 -1 .2 -1 .7 -1-1 -1-.3 -1-.2 -1 0 -1 .1 -1 .2 -1-.5 -1-.1 -1 .3 -1-.2 -1 0 -1-.1 -1 .1 -1 .2 -1 .8 -1 .8 -1-.5 -1-1.1 -1-.1 -1 .4 -1 .6 -1-.8 -1 .1 -1-.7 -1 .5 -1-.1 -1 .8 -1-.3 -1 .9 -1-1 -1 1.2 -1-1.3 -1-.3 -1 .4 -1 1.2 -1-1 -1-.6 -1-.1 -1-.2 -1 .7 -1 .5 -1 .3 -1-.8 -1-.3 -1-.2 -1 0 -1 0 -1-.2 -1 .3 -1-.3 -1 0 -1 .5 -1-.3 -1 .9 -1-.9 -1 .1 -1-.2 -1-.1 -1 .1 -1 .1 -1 0 -1 .3 -1 .1 -1 .9 -1 .2 -1-.4 -1 .2 -1-.8 -1-.2 -1 0 -1 .2 -1 .7 -1-.2 -1-.6 -1 .1 -1-.5 -1 .2 -1 .5 -1-.9 -1 .5 -1 .1 -1 .9 -1-.1 -1-.5 -1-.1 -1-.2 -1 .6 -1 .1 -1 .8 -1-.4 -.9 .4 -1-1 -1 1 -1-.5 -1-.9 -1-.3 -1 .3 -1-.1 -1-.3 -1 .3 -1 .8 -1 .1 -1-.7 -1-.2 -1 .5 -1 .1 -1 .5 -1-1.1 -1 .4 -1-.2 -1-.1 -1-.4 -1 .4 -1 0 -1 0 -1-.1 -1 .3 -1 .4 -1-.2 -1 0 -1 .5 -1-.1 -1-.4 -1-.4 -1 .3 -1 .6 -1-.9 -1 .7 -1 .5 -1-.8 -1 .3 -1 .1 -1-.7 -1-.3 -1 1.6 -1-1.5 -1 .2 -1 .7 -1-.5 -1 .5 -1-.6 -1 .1 -1-.1 -1 1 -1-1.1 -1 .5 -1-.9 -1 .1 -1 .1 -1-.1 -1 .1 -1 .2 -1-.3 -1-.1 -1 1.5 -1-1.2 -1 .1 -1 .3 -1-.2 -1-.5 -1 0 -1 .2 -1 .2 -1 .1 -1 1.2 -1-1 -1-.2 -1-.1 -1-.3 -1 1.3 -1-1.3 -1 .4 -1-.5 -1 .6 -1-.7 -1 .2 -1-.1 -1-.1 -1-.1 -1 .4 -1 .8 -1-1 -1-.7 -1-.1 -1-.1 -1 .1 -1-.7 -1-.5 -1 0 -1-.3z" fill="#26301a"/>
<path d="M221.3 414.1l1-.2 1-.1 1-.4 1-.7 1 .1 1-.1 1-.1 1-.7 1-1 1 .9 1 .3 1 0 1-.1 1-.1 1 .1 1-.6 1 .6 1-.5 1 .4 1-1.3 1 1.2 1-.3 1 0 1-.2 1-.9 1 1 1 .2 1 .2 1 .1 1 0 1-.5 1-.2 1 .4 1 0 1-1.1 1 1.4 1 0 1-.3 1 .2 1 0 1-.1 1 .1 1 .1 1-.8 1 .4 1-1 1 1 1-.1 1 0 1-.6 1 .5 1-.4 1 .7 1 .1 1-1.3 1 1.5 1-.4 1-.6 1 0 1 .3 1-.7 1 .5 1 .6 1-.8 1 .6 1 .3 1-.4 1-.4 1-.1 1 .4 1 0 1-.1 1 .4 1 .3 1-.1 1 0 1-.1 1 .4 1-.4 1-.1 1-.1 1 .3 1-1 1 .5 1 .1 1 .4 1-.1 1-.7 1 .1 1 .8 1 .2 1-.3 1 0 1 .3 1-.4 1-.8 1-.4 1 .9 1-.9 .9 .3 1-.3 1 .7 1 .1 1 .6 1-.2 1-.2 1-.4 1-.1 1 .9 1 .1 1 .4 1-.8 1 .5 1 .2 1-.6 1 .2 1-.6 1-.2 1 .6 1 .2 1 0 1-.1 1-.8 1 .2 1-.4 1 .2 1 .9 1 .1 1 .3 1-.1 1 .1 1 .2 1-.2 1-.1 1 0 1-.8 1 .9 1-.4 1 .5 1 .1 1-.3 1 .2 1-.2 1 0 1 0 1-.1 1-.3 1-.8 1 .3 1 .4 1 .7 1-.2 1-.1 1-.5 1-1 1 1.2 1 .3 1-.2 1-1.3 1 1.2 1-1 1 .9 1-.4 1 .8 1-.1 1 .5 1-.6 1 .1 1-.8 1 .5 1 .4 1 0 1-1.1 1-.5 1 .8 1 .7 1 .2 1 .1 1-.1 1 0 1-.1 1 .2 1-.1 1-.4 1 .2 1 0 1 0 1-.2 1-.2 1-1 1 .7 1 .1 1 .6 1-.2 1 .3 1-.3 1 .1 1-1.2 1 1.2 1 .3 0 5.2 -1 .4 -1 1.2 -1-1.3 -1 .1 -1-.3 -1 .3 -1-.2 -1 .6 -1 .2 -1 .7 -1-1 -1-.3 -1-.2 -1 0 -1 .1 -1 .2 -1-.5 -1-.1 -1 .3 -1-.2 -1 0 -1-.1 -1 .1 -1 .2 -1 .8 -1 .8 -1-.5 -1-1.1 -1-.1 -1 .4 -1 .6 -1-.8 -1 .1 -1-.7 -1 .5 -1-.1 -1 .8 -1-.3 -1 .9 -1-1 -1 1.2 -1-1.3 -1-.3 -1 .4 -1 1.2 -1-1 -1-.6 -1-.1 -1-.2 -1 .7 -1 .5 -1 .3 -1-.8 -1-.3 -1-.2 -1 0 -1 0 -1-.2 -1 .3 -1-.3 -1 0 -1 .5 -1-.3 -1 .9 -1-.9 -1 .1 -1-.2 -1-.1 -1 .1 -1 .1 -1 0 -1 .3 -1 .1 -1 .9 -1 .2 -1-.4 -1 .2 -1-.8 -1-.2 -1 0 -1 .2 -1 .7 -1-.2 -1-.6 -1 .1 -1-.5 -1 .2 -1 .5 -1-.9 -1 .5 -1 .1 -1 .9 -1-.1 -1-.5 -1-.1 -1-.2 -1 .6 -1 .1 -1 .8 -1-.4 -.9 .4 -1-1 -1 1 -1-.5 -1-.9 -1-.3 -1 .3 -1-.1 -1-.3 -1 .3 -1 .8 -1 .1 -1-.7 -1-.2 -1 .5 -1 .1 -1 .5 -1-1.1 -1 .4 -1-.2 -1-.1 -1-.4 -1 .4 -1 0 -1 0 -1-.1 -1 .3 -1 .4 -1-.2 -1 0 -1 .5 -1-.1 -1-.4 -1-.4 -1 .3 -1 .6 -1-.9 -1 .7 -1 .5 -1-.8 -1 .3 -1 .1 -1-.7 -1-.3 -1 1.6 -1-1.5 -1 .2 -1 .7 -1-.5 -1 .5 -1-.6 -1 .1 -1-.1 -1 1 -1-1.1 -1 .5 -1-.9 -1 .1 -1 .1 -1-.1 -1 .1 -1 .2 -1-.3 -1-.1 -1 1.5 -1-1.2 -1 .1 -1 .3 -1-.2 -1-.5 -1 0 -1 .2 -1 .2 -1 .1 -1 1.2 -1-1 -1-.2 -1-.1 -1-.3 -1 1.3 -1-1.3 -1 .4 -1-.5 -1 .6 -1-.7 -1 .2 -1-.1 -1-.1 -1-.1 -1 .4 -1 .8 -1-1 -1-.7 -1-.1 -1-.1 -1 .1 -1-.7 -1-.5 -1 0 -1-.3z" fill="#26301a"/>
<svg x="221" y="365.6" width="200" height="18"><text x="3.8" y="14.1" font-size="11" letter-spacing="0.55" fill="rgba(0,0,0,0.75)" stroke="rgba(0,0,0,0.75)" stroke-width="0.2">Patterning2a</text></svg>
<rect x="421.5" y="365.6" width="13.5" height="58.9" fill="#bff235"/>
<rect x="421.5" y="383" width="13.5" height="1" fill="rgba(0,0,0,0.12)"/>
<path d="M424.4 384V424.5M430 384V424.5" stroke="rgba(0,0,0,0.12)" stroke-width="1"/>
<path d="M421.8 391.8l1-.5 1 .6 1-.5 1 .9 1 .1 1 .1 .9-.2 1 .1 1-.1 1-.1 1 .3 1 0 1 0 0 4 -1 0 -1 0 -1 .3 -1-.1 -1 0 -1 0 -.9-.2 -1 .1 -1 .1 -1 1 -1-.6 -1 .7 -1-.6z" fill="#26301a"/>
<path d="M421.8 412l1-.5 1 .6 1-.5 1 .9 1 .1 1 .1 .9-.2 1 .1 1-.1 1-.1 1 .3 1 0 1 0 0 4 -1 0 -1 0 -1 .3 -1-.1 -1 0 -1 0 -.9-.2 -1 .1 -1 .1 -1 1 -1-.6 -1 .7 -1-.6z" fill="#26301a"/>
<svg x="421.5" y="365.6" width="13" height="18"><text x="3.8" y="14.1" font-size="11" letter-spacing="0.55" fill="rgba(0,0,0,0.75)" stroke="rgba(0,0,0,0.75)" stroke-width="0.2">Patterning2a</text></svg>
<rect x="421.5" y="365.6" width="1" height="58.9" fill="rgba(0,0,0,0.2)"/>
<rect x="435" y="365.6" width="268.5" height="58.9" fill="#bff235"/>
<rect x="435" y="383" width="268.5" height="1" fill="rgba(0,0,0,0.12)"/>
<path d="M441.4 384V424.5M447 384V424.5M452.7 384V424.5M458.4 384V424.5M464 384V424.5M469.7 384V424.5M475.4 384V424.5M481 384V424.5M486.7 384V424.5M492.4 384V424.5M498 384V424.5M503.7 384V424.5M509.4 384V424.5M515 384V424.5M520.7 384V424.5M526.4 384V424.5M532 384V424.5M537.7 384V424.5M543.4 384V424.5M549 384V424.5M554.7 384V424.5M560.4 384V424.5M566 384V424.5M571.7 384V424.5M577.4 384V424.5M583 384V424.5M588.7 384V424.5M594.4 384V424.5M600 384V424.5M605.7 384V424.5M611.4 384V424.5M617 384V424.5M622.7 384V424.5M628.4 384V424.5M634 384V424.5M639.7 384V424.5M645.4 384V424.5M651 384V424.5M656.7 384V424.5M662.4 384V424.5M668 384V424.5M673.7 384V424.5M679.4 384V424.5M685 384V424.5M690.7 384V424.5M696.4 384V424.5M702 384V424.5" stroke="rgba(0,0,0,0.12)" stroke-width="1"/>
<path d="M435.3 391.8l1-.7 1-.4 1-.9 1 .5 1 .7 1-.2 1 1 1 0 1 .2 1-.7 1 .5 1-.2 1-.6 1-.6 1-.4 1 .7 1 .2 1 .7 1-.8 1 .2 1-1.2 1 1.1 1 .2 1-.2 1-.4 1 .9 1-.3 1 .6 1 0 1-.1 1-.4 1-.5 1 .4 1 .4 1 0 1-.3 1-.4 1 .9 1-.1 1 0 1-.1 1 .6 1-.4 1 0 1 0 1-.6 1 .5 1-.6 1 0 1-1.1 1 1.9 1-1 1 .7 1-1 1-.1 1 0 1 0 1 .8 1-.1 1 .4 1-.3 1 .3 1 .2 1-.4 1 .1 1-.4 1 0 1 .6 1-.7 1-.9 1 .1 1 .8 1-.1 1-.1 1 .1 1-.1 1 .3 1-.3 1-.2 1 .3 1-.8 1 .9 1-.8 1 0 1-.3 1 .9 1 .6 1-.5 1-.3 1 .1 1-.8 1 1 1 .2 1 .5 1-.2 1-.7 1 .5 1-.1 1-1 1 1.4 1-.5 1 .1 1-1.2 1 1 1 .6 1-.1 1-.8 1 .2 1 .1 1 .3 1 0 1 0 1 .3 1-.4 1 .1 1-.7 1 .5 1-.1 1 .3 1-.8 1 1 1 .3 1-.2 1-.6 1 .5 1-.2 1 .4 1 .3 1-.3 1-1.2 1 .8 1 .2 1-.9 .9 .7 1 .4 1 .2 1 .2 1-.5 1 0 1-.2 1 .8 1-.5 1-.1 1-.7 1 .5 1 .6 1-.6 1-.3 1 .1 1 .9 1-.2 1-.2 1 .3 1-.1 1 .2 1-.1 1-.5 1 .8 1-.1 1-1 1 .6 1-.3 1-.5 1 .7 1 0 1 .4 1-.1 1 .2 1-.2 1 .3 1-.8 1 .1 1-1 1 1 1 .3 1-.4 1 .3 1-.3 1 .3 1-.4 1 0 1-.4 1-.4 1 .9 1 .1 1 .3 1-.8 1-.4 1 .5 1 .1 1-.7 1 .3 1 .6 1-.2 1 .5 1-.5 1 .3 1 .2 1-.5 1 .5 1-1 1 .1 1-.5 1 .2 1 .8 1 .3 1-.2 1-.5 1 .5 1-.8 1 .5 1 .4 1-.7 1 .5 1-.1 1 .1 1 .2 1 .1 1 .2 1-.3 1-.9 1 .9 1-.3 1-.4 1 .6 1 .3 1 .2 1-.3 1-.1 1-.1 1-.1 1 .3 1 .1 1 .4 1-.2 1 .1 1 0 1 0 1 .1 1-.6 1 0 1-.6 1 .8 1 .3 1-.1 1 .2 1-.2 1-.2 1-.2 1 .1 1 .2 1-.9 1-.6 1 1.2 1-.7 1 .4 1 .8 1 .3 1-.4 1-.2 1 .3 1 0 1-.4 1 .1 1 .4 1 0 1-.6 1 .5 0 5.2 -1 .6 -1-.7 -1 0 -1 .4 -1 .2 -1-.4 -1-.1 -1 .3 -1-.1 -1-.5 -1 .3 -1 .9 -1 .3 -1-.7 -1 1.3 -1-.6 -1-1 -1 .2 -1 .1 -1-.1 -1-.3 -1-.2 -1 .2 -1-.1 -1 .3 -1 .9 -1-.6 -1-.1 -1-.6 -1 .1 -1 0 -1 0 -1 .1 -1-.1 -1 .3 -1 .2 -1 .3 -1-.2 -1-.1 -1-.1 -1-.2 -1 .2 -1 .3 -1 .6 -1-.5 -1-.3 -1 1 -1-.9 -1-.3 -1 .1 -1 .1 -1 .2 -1 .2 -1-.1 -1 .5 -1-.7 -1 .4 -1 .5 -1-.9 -1 .5 -1-.4 -1-.3 -1 .4 -1 .8 -1 .2 -1-.6 -1 .2 -1-1.1 -1 .6 -1-.6 -1 .3 -1 .3 -1-.6 -1 .6 -1-.3 -1 .7 -1 .3 -1-.7 -1 .1 -1 .5 -1-.4 -1-.8 -1 .2 -1 .1 -1 1 -1-.5 -1-.4 -1 0 -1-.4 -1 .3 -1-.2 -1 .3 -1-.5 -1 .3 -1 1.1 -1-1 -1 .1 -1-.8 -1 .2 -1-.2 -1 .3 -1-.1 -1 .4 -1-.1 -1 .8 -1-.6 -1-.3 -1 .6 -1-1 -1-.1 -1 .9 -1-.6 -1-.1 -1 .2 -1 0 -1 .2 -1-.1 -1-.3 -1 1 -1 .1 -1-.4 -1-.6 -1 .7 -1 .5 -1-.7 -1-.2 -1-.4 -1 .7 -1-.1 -1-.1 -1-.5 -1 .3 -1 .1 -1 .5 -.9 .7 -1-.9 -1 .2 -1 .9 -1-1.4 -1-.2 -1 .3 -1 .4 -1-.2 -1 .5 -1-.6 -1-.2 -1 .3 -1 1 -1-.9 -1 .3 -1 0 -1 .5 -1-.7 -1 .1 -1-.5 -1 .3 -1 .1 -1 0 -1 .3 -1 .1 -1 .2 -1-.8 -1-.2 -1 .6 -1 1.1 -1-1.3 -1 .1 -1-.4 -1 1.4 -1-1.1 -1-.1 -1 .6 -1-.8 -1-.1 -1 .4 -1 .3 -1 1 -1-.8 -1 .1 -1-.4 -1-.4 -1 .6 -1 .9 -1-.3 -1 0 -1-.8 -1 .9 -1-.9 -1 .4 -1-.3 -1-.2 -1 .3 -1-.1 -1 0 -1 0 -1-.1 -1 .8 -1 .1 -1-.9 -1-.7 -1 .5 -1 .1 -1-.5 -1 .1 -1-.3 -1 .1 -1 .3 -1-.2 -1 .4 -1-.1 -1 .8 -1 0 -1 0 -1-.1 -1-1.1 -1 .8 -1-1 -1 2 -1-1.2 -1 0 -1-.7 -1 .5 -1-.6 -1 .1 -1-.1 -1-.4 -1 .7 -1-.2 -1 0 -1-.1 -1 .9 -1-.3 -1-.3 -1 0 -1 .4 -1 .4 -1-.5 -1-.5 -1-.1 -1 .1 -1 .6 -1-.3 -1 .9 -1-.5 -1-.1 -1 .2 -1 1.1 -1-1.2 -1 .1 -1-.7 -1 .7 -1 .2 -1 .7 -1-.4 -1-.6 -1-.6 -1-.3 -1 .5 -1-.6 -1 .1 -1 0 -1 1.1 -1-.2 -1 .7 -1 .5 -1-.9 -1-.4 -1-.7z" fill="#26301a"/>
<path d="M435.3 412l1-.7 1-.4 1-.9 1 .5 1 .7 1-.2 1 1 1 0 1 .2 1-.7 1 .5 1-.2 1-.6 1-.6 1-.4 1 .7 1 .2 1 .7 1-.8 1 .2 1-1.2 1 1.1 1 .2 1-.2 1-.4 1 .9 1-.3 1 .6 1 0 1-.1 1-.4 1-.5 1 .4 1 .4 1 0 1-.3 1-.4 1 .9 1-.1 1 0 1-.1 1 .6 1-.4 1 0 1 0 1-.6 1 .5 1-.6 1 0 1-1.1 1 1.9 1-1 1 .7 1-1 1-.1 1 0 1 0 1 .8 1-.1 1 .4 1-.3 1 .3 1 .2 1-.4 1 .1 1-.4 1 0 1 .6 1-.7 1-.9 1 .1 1 .8 1-.1 1-.1 1 .1 1-.1 1 .3 1-.3 1-.2 1 .3 1-.8 1 .9 1-.8 1 0 1-.3 1 .9 1 .6 1-.5 1-.3 1 .1 1-.8 1 1 1 .2 1 .5 1-.2 1-.7 1 .5 1-.1 1-1 1 1.4 1-.5 1 .1 1-1.2 1 1 1 .6 1-.1 1-.8 1 .2 1 .1 1 .3 1 0 1 0 1 .3 1-.4 1 .1 1-.7 1 .5 1-.1 1 .3 1-.8 1 1 1 .3 1-.2 1-.6 1 .5 1-.2 1 .4 1 .3 1-.3 1-1.2 1 .8 1 .2 1-.9 .9 .7 1 .4 1 .2 1 .2 1-.5 1 0 1-.2 1 .8 1-.5 1-.1 1-.7 1 .5 1 .6 1-.6 1-.3 1 .1 1 .9 1-.2 1-.2 1 .3 1-.1 1 .2 1-.1 1-.5 1 .8 1-.1 1-1 1 .6 1-.3 1-.5 1 .7 1 0 1 .4 1-.1 1 .2 1-.2 1 .3 1-.8 1 .1 1-1 1 1 1 .3 1-.4 1 .3 1-.3 1 .3 1-.4 1 0 1-.4 1-.4 1 .9 1 .1 1 .3 1-.8 1-.4 1 .5 1 .1 1-.7 1 .3 1 .6 1-.2 1 .5 1-.5 1 .3 1 .2 1-.5 1 .5 1-1 1 .1 1-.5 1 .2 1 .8 1 .3 1-.2 1-.5 1 .5 1-.8 1 .5 1 .4 1-.7 1 .5 1-.1 1 .1 1 .2 1 .1 1 .2 1-.3 1-.9 1 .9 1-.3 1-.4 1 .6 1 .3 1 .2 1-.3 1-.1 1-.1 1-.1 1 .3 1 .1 1 .4 1-.2 1 .1 1 0 1 0 1 .1 1-.6 1 0 1-.6 1 .8 1 .3 1-.1 1 .2 1-.2 1-.2 1-.2 1 .1 1 .2 1-.9 1-.6 1 1.2 1-.7 1 .4 1 .8 1 .3 1-.4 1-.2 1 .3 1 0 1-.4 1 .1 1 .4 1 0 1-.6 1 .5 0 5.2 -1 .6 -1-.7 -1 0 -1 .4 -1 .2 -1-.4 -1-.1 -1 .3 -1-.1 -1-.5 -1 .3 -1 .9 -1 .3 -1-.7 -1 1.3 -1-.6 -1-1 -1 .2 -1 .1 -1-.1 -1-.3 -1-.2 -1 .2 -1-.1 -1 .3 -1 .9 -1-.6 -1-.1 -1-.6 -1 .1 -1 0 -1 0 -1 .1 -1-.1 -1 .3 -1 .2 -1 .3 -1-.2 -1-.1 -1-.1 -1-.2 -1 .2 -1 .3 -1 .6 -1-.5 -1-.3 -1 1 -1-.9 -1-.3 -1 .1 -1 .1 -1 .2 -1 .2 -1-.1 -1 .5 -1-.7 -1 .4 -1 .5 -1-.9 -1 .5 -1-.4 -1-.3 -1 .4 -1 .8 -1 .2 -1-.6 -1 .2 -1-1.1 -1 .6 -1-.6 -1 .3 -1 .3 -1-.6 -1 .6 -1-.3 -1 .7 -1 .3 -1-.7 -1 .1 -1 .5 -1-.4 -1-.8 -1 .2 -1 .1 -1 1 -1-.5 -1-.4 -1 0 -1-.4 -1 .3 -1-.2 -1 .3 -1-.5 -1 .3 -1 1.1 -1-1 -1 .1 -1-.8 -1 .2 -1-.2 -1 .3 -1-.1 -1 .4 -1-.1 -1 .8 -1-.6 -1-.3 -1 .6 -1-1 -1-.1 -1 .9 -1-.6 -1-.1 -1 .2 -1 0 -1 .2 -1-.1 -1-.3 -1 1 -1 .1 -1-.4 -1-.6 -1 .7 -1 .5 -1-.7 -1-.2 -1-.4 -1 .7 -1-.1 -1-.1 -1-.5 -1 .3 -1 .1 -1 .5 -.9 .7 -1-.9 -1 .2 -1 .9 -1-1.4 -1-.2 -1 .3 -1 .4 -1-.2 -1 .5 -1-.6 -1-.2 -1 .3 -1 1 -1-.9 -1 .3 -1 0 -1 .5 -1-.7 -1 .1 -1-.5 -1 .3 -1 .1 -1 0 -1 .3 -1 .1 -1 .2 -1-.8 -1-.2 -1 .6 -1 1.1 -1-1.3 -1 .1 -1-.4 -1 1.4 -1-1.1 -1-.1 -1 .6 -1-.8 -1-.1 -1 .4 -1 .3 -1 1 -1-.8 -1 .1 -1-.4 -1-.4 -1 .6 -1 .9 -1-.3 -1 0 -1-.8 -1 .9 -1-.9 -1 .4 -1-.3 -1-.2 -1 .3 -1-.1 -1 0 -1 0 -1-.1 -1 .8 -1 .1 -1-.9 -1-.7 -1 .5 -1 .1 -1-.5 -1 .1 -1-.3 -1 .1 -1 .3 -1-.2 -1 .4 -1-.1 -1 .8 -1 0 -1 0 -1-.1 -1-1.1 -1 .8 -1-1 -1 2 -1-1.2 -1 0 -1-.7 -1 .5 -1-.6 -1 .1 -1-.1 -1-.4 -1 .7 -1-.2 -1 0 -1-.1 -1 .9 -1-.3 -1-.3 -1 0 -1 .4 -1 .4 -1-.5 -1-.5 -1-.1 -1 .1 -1 .6 -1-.3 -1 .9 -1-.5 -1-.1 -1 .2 -1 1.1 -1-1.2 -1 .1 -1-.7 -1 .7 -1 .2 -1 .7 -1-.4 -1-.6 -1-.6 -1-.3 -1 .5 -1-.6 -1 .1 -1 0 -1 1.1 -1-.2 -1 .7 -1 .5 -1-.9 -1-.4 -1-.7z" fill="#26301a"/>
<svg x="435" y="365.6" width="268" height="18"><text x="3.8" y="14.1" font-size="11" letter-spacing="0.55" fill="rgba(0,0,0,0.75)" stroke="rgba(0,0,0,0.75)" stroke-width="0.2">Patterning2a</text></svg>
<rect x="435" y="365.6" width="1" height="58.9" fill="rgba(0,0,0,0.2)"/>
<rect x="703.5" y="365.6" width="13.8" height="58.9" fill="#bff235"/>
<rect x="703.5" y="383" width="13.8" height="1" fill="rgba(0,0,0,0.12)"/>
<path d="M707.7 384V424.5M713.4 384V424.5" stroke="rgba(0,0,0,0.12)" stroke-width="1"/>
<path d="M703.8 392.3l1 0 1 .4 1-.1 1.1 .4 1 0 1 .2 1 .2 1 0 1 .2 1.1 .1 1 .1 1 .1 1 0 0 1.1 -1 0 -1 .2 -1 0 -1.1 .2 -1 .2 -1 0 -1 .1 -1 .3 -1 0 -1.1 .4 -1-.1 -1 .4 -1 0z" fill="#26301a"/>
<path d="M703.8 412.5l1 0 1 .4 1-.1 1.1 .4 1 0 1 .2 1 .2 1 0 1 .2 1.1 .1 1 .1 1 .1 1 0 0 1.1 -1 0 -1 .2 -1 0 -1.1 .2 -1 .2 -1 0 -1 .1 -1 .3 -1 0 -1.1 .4 -1-.1 -1 .4 -1 0z" fill="#26301a"/>
<path d="M717.3 384H704.3L717.3 424.5Z" fill="rgba(0,0,0,0.09)"/>
<svg x="703.5" y="365.6" width="13.3" height="18"><text x="3.8" y="14.1" font-size="11" letter-spacing="0.55" fill="rgba(0,0,0,0.75)" stroke="rgba(0,0,0,0.75)" stroke-width="0.2">Pa</text></svg>
<rect x="703.5" y="365.6" width="1" height="58.9" fill="rgba(0,0,0,0.2)"/>
<rect x="691.2" y="426.4" width="162.8" height="58.8" fill="#8a71e1"/>
<rect x="691.2" y="443.8" width="162.8" height="1" fill="rgba(0,0,0,0.12)"/>
<path d="M696.4 444.8V485.3M702 444.8V485.3M707.7 444.8V485.3M713.4 444.8V485.3M719 444.8V485.3M724.7 444.8V485.3M730.4 444.8V485.3M736 444.8V485.3M741.7 444.8V485.3M747.4 444.8V485.3M753 444.8V485.3M758.7 444.8V485.3M764.4 444.8V485.3M770 444.8V485.3M775.7 444.8V485.3M781.4 444.8V485.3M787 444.8V485.3M792.7 444.8V485.3M798.4 444.8V485.3M804 444.8V485.3M809.7 444.8V485.3M815.4 444.8V485.3M821 444.8V485.3M826.7 444.8V485.3M832.4 444.8V485.3M838 444.8V485.3M843.7 444.8V485.3M849.4 444.8V485.3" stroke="rgba(0,0,0,0.12)" stroke-width="1"/>
<path d="M691.5 451.3l1-1 1 .5 1 .3 1 .8 1-.3 1-.1 1 .2 1 .1 1-1.1 1-.3 1 .1 1 .4 1 .8 1-.1 1 0 1-.4 1-.8 1 .4 1-.1 1 .4 1 .1 1-.1 1 .2 1-.4 1-.4 1-.3 1-.4 1 1.1 1-.4 1 .8 1-.2 1 .3 1-.3 1 .3 1-.2 1-.6 1 .3 1 .1 1 .1 1 .1 1.1 .2 1 0 1-1.1 1 .4 1-.2 1 0 1 0 1 0 1 0 1 .9 1-.7 1 .3 1-.1 1-.4 1 .8 1-.6 1 .4 1-.5 1 .1 1 .3 1-1 1 1 1 .4 1 .3 1-.4 1-.1 1 .3 1-1.1 1 1 1 .3 1 .2 1 0 1-.2 1 .2 1 .2 1-.3 1 .2 1-.4 1-.3 1-.4 1 1 1 0 1-.5 1-.5 1 .7 1-.3 1 .1 1 .6 1-.5 1-.1 1-.2 1 .3 1-.8 1-.1 1 .5 1-.2 1 .4 1-.5 1-.1 1-.1 1-.3 1-.6 1 1.1 1-.1 1 .7 1-.7 1 .8 1-.6 1-.1 1 .4 1-.1 1-.1 1 0 1 .2 1-.3 1 .4 1 .2 1-.5 1 .3 1 .5 1-.2 1.1-.2 1 0 1 .4 1 .4 1 .1 1 0 1-.2 1 .5 1 .2 1-.1 1 0 1-.4 1 .2 1-.2 1 .5 1-.1 1-.1 1 .2 1-.1 1 .1 1 .1 1 .3 1 0 1 0 1 .5 1-.2 1 0 1 .1 1 .3 1-.1 1 0 1 .3 1 0 1 0 1-.1 1 0 1 .2 1 .1 1 0 1 .1 1 .2 0 1.3 -1 .3 -1 0 -1 .1 -1 0 -1 .2 -1 0 -1 0 -1 0 -1 0 -1 .2 -1 0 -1-.1 -1 .4 -1 .1 -1-.1 -1-.1 -1 .5 -1 0 -1 0 -1 .4 -1 0 -1 .1 -1-.1 -1 .2 -1-.1 -1-.1 -1 .5 -1-.1 -1 .1 -1-.4 -1 .1 -1-.2 -1 .2 -1 .5 -1-.2 -1 .1 -1 .1 -1 .3 -1 .5 -1 0 -1.1-.3 -1-.1 -1 .5 -1 .3 -1-.6 -1 .3 -1 .5 -1-.4 -1 .2 -1 0 -1-.1 -1-.1 -1 .4 -1-.1 -1-.6 -1 .9 -1-.8 -1 .7 -1-.1 -1 1.1 -1-.6 -1-.2 -1-.2 -1-.1 -1-.5 -1 .4 -1-.2 -1 .5 -1 0 -1-.9 -1 .3 -1-.2 -1-.1 -1-.6 -1 .7 -1 .1 -1-.3 -1 .7 -1-.5 -1-.5 -1 0 -1 1 -1-.4 -1-.3 -1-.5 -1 .3 -1-.4 -1 .2 -1 .3 -1-.2 -1 0 -1 .2 -1 .3 -1 1.1 -1-1.2 -1 .3 -1-.1 -1-.4 -1 .3 -1 .4 -1 1.1 -1-1 -1 .2 -1 .1 -1-.5 -1 .4 -1-.6 -1 .8 -1-.4 -1-.1 -1 .3 -1-.7 -1 .9 -1 0 -1 .1 -1 0 -1-.1 -1-.2 -1 .4 -1-1.1 -1 0 -1.1 .2 -1 .1 -1 .1 -1 .1 -1 .3 -1-.6 -1-.2 -1 .3 -1-.3 -1 .3 -1-.2 -1 .8 -1-.4 -1 1.1 -1-.3 -1-.4 -1-.4 -1-.4 -1 .2 -1-.1 -1 .1 -1 .4 -1-.1 -1 .5 -1-.9 -1-.4 -1 0 -1-.1 -1 .8 -1 .4 -1 .1 -1-.3 -1-1.1 -1 0 -1 .3 -1-.2 -1-.2 -1 .8 -1 .3 -1 .5 -1-1z" fill="#231d2c"/>
<path d="M691.5 471.5l1-1 1 .5 1 .3 1 .8 1-.3 1-.1 1 .2 1 .1 1-1.1 1-.3 1 .1 1 .4 1 .8 1-.1 1 0 1-.4 1-.8 1 .4 1-.1 1 .4 1 .1 1-.1 1 .2 1-.4 1-.4 1-.3 1-.4 1 1.1 1-.4 1 .8 1-.2 1 .3 1-.3 1 .3 1-.2 1-.6 1 .3 1 .1 1 .1 1 .1 1.1 .2 1 0 1-1.1 1 .4 1-.2 1 0 1 0 1 0 1 0 1 .9 1-.7 1 .3 1-.1 1-.4 1 .8 1-.6 1 .4 1-.5 1 .1 1 .3 1-1 1 1 1 .4 1 .3 1-.4 1-.1 1 .3 1-1.1 1 1 1 .3 1 .2 1 0 1-.2 1 .2 1 .2 1-.3 1 .2 1-.4 1-.3 1-.4 1 1 1 0 1-.5 1-.5 1 .7 1-.3 1 .1 1 .6 1-.5 1-.1 1-.2 1 .3 1-.8 1-.1 1 .5 1-.2 1 .4 1-.5 1-.1 1-.1 1-.3 1-.6 1 1.1 1-.1 1 .7 1-.7 1 .8 1-.6 1-.1 1 .4 1-.1 1-.1 1 0 1 .2 1-.3 1 .4 1 .2 1-.5 1 .3 1 .5 1-.2 1.1-.2 1 0 1 .4 1 .4 1 .1 1 0 1-.2 1 .5 1 .2 1-.1 1 0 1-.4 1 .2 1-.2 1 .5 1-.1 1-.1 1 .2 1-.1 1 .1 1 .1 1 .3 1 0 1 0 1 .5 1-.2 1 0 1 .1 1 .3 1-.1 1 0 1 .3 1 0 1 0 1-.1 1 0 1 .2 1 .1 1 0 1 .1 1 .2 0 1.3 -1 .3 -1 0 -1 .1 -1 0 -1 .2 -1 0 -1 0 -1 0 -1 0 -1 .2 -1 0 -1-.1 -1 .4 -1 .1 -1-.1 -1-.1 -1 .5 -1 0 -1 0 -1 .4 -1 0 -1 .1 -1-.1 -1 .2 -1-.1 -1-.1 -1 .5 -1-.1 -1 .1 -1-.4 -1 .1 -1-.2 -1 .2 -1 .5 -1-.2 -1 .1 -1 .1 -1 .3 -1 .5 -1 0 -1.1-.3 -1-.1 -1 .5 -1 .3 -1-.6 -1 .3 -1 .5 -1-.4 -1 .2 -1 0 -1-.1 -1-.1 -1 .4 -1-.1 -1-.6 -1 .9 -1-.8 -1 .7 -1-.1 -1 1.1 -1-.6 -1-.2 -1-.2 -1-.1 -1-.5 -1 .4 -1-.2 -1 .5 -1 0 -1-.9 -1 .3 -1-.2 -1-.1 -1-.6 -1 .7 -1 .1 -1-.3 -1 .7 -1-.5 -1-.5 -1 0 -1 1 -1-.4 -1-.3 -1-.5 -1 .3 -1-.4 -1 .2 -1 .3 -1-.2 -1 0 -1 .2 -1 .3 -1 1.1 -1-1.2 -1 .3 -1-.1 -1-.4 -1 .3 -1 .4 -1 1.1 -1-1 -1 .2 -1 .1 -1-.5 -1 .4 -1-.6 -1 .8 -1-.4 -1-.1 -1 .3 -1-.7 -1 .9 -1 0 -1 .1 -1 0 -1-.1 -1-.2 -1 .4 -1-1.1 -1 0 -1.1 .2 -1 .1 -1 .1 -1 .1 -1 .3 -1-.6 -1-.2 -1 .3 -1-.3 -1 .3 -1-.2 -1 .8 -1-.4 -1 1.1 -1-.3 -1-.4 -1-.4 -1-.4 -1 .2 -1-.1 -1 .1 -1 .4 -1-.1 -1 .5 -1-.9 -1-.4 -1 0 -1-.1 -1 .8 -1 .4 -1 .1 -1-.3 -1-1.1 -1 0 -1 .3 -1-.2 -1-.2 -1 .8 -1 .3 -1 .5 -1-1z" fill="#231d2c"/>
<path d="M854 444.8H824L854 485.3Z" fill="rgba(0,0,0,0.09)"/>
<svg x="691.2" y="426.4" width="162.3" height="18"><text x="3.8" y="14.1" font-size="11" letter-spacing="0.55" fill="rgba(0,0,0,0.75)" stroke="rgba(0,0,0,0.75)" stroke-width="0.2">Train_P1</text></svg>
<rect x="878.9" y="426.4" width="101" height="58.8" fill="#8a71e1"/>
<rect x="878.9" y="443.8" width="101" height="1" fill="rgba(0,0,0,0.12)"/>
<path d="M883.4 444.8V485.3M889.1 444.8V485.3M894.7 444.8V485.3M900.4 444.8V485.3M906.1 444.8V485.3M911.7 444.8V485.3M917.4 444.8V485.3M923.1 444.8V485.3M928.7 444.8V485.3M934.4 444.8V485.3M940.1 444.8V485.3M945.7 444.8V485.3M951.4 444.8V485.3M957.1 444.8V485.3M962.7 444.8V485.3M968.4 444.8V485.3M974.1 444.8V485.3M979.7 444.8V485.3" stroke="rgba(0,0,0,0.12)" stroke-width="1"/>
<path d="M879.2 451.5l1 0 1-.5 1-.1 1 .7 1-.5 1-1.2 1 1.4 1 .6 1-.2 1 .3 1-.2 1-.6 1.1 .4 1-1.6 1 1.6 1-.7 1-.2 1 .6 1 .3 1 .3 1-1 1 .9 1-.7 1-.5 1-.7 1 .8 1-.1 1 .5 1-.1 1 0 1-.3 1 .6 1-.1 1-.2 1 .4 1-.6 1-1 1.1 1.7 1-.7 1 .1 1 .2 1 .1 1 0 1-.1 1 .3 1-.6 1 .8 1-.5 1-.1 1-.5 1-.6 1 0 1 1.1 1-.6 1 .7 1-.5 1-.1 1 .6 1-.4 1-1.3 1 .8 1 .8 1.1-.7 1-.2 1 .4 1-.1 1-.5 1 .4 1-.4 1 1.1 1-.2 1 .4 1-.1 1-.3 1-.6 1-.5 1 .8 1 .1 1-.4 1-.3 1 .6 1 .1 1-.5 1-.7 1 1.5 1-1 1 .4 1.1 .6 1-.3 1-.4 1-.1 1-.1 1 1.2 1-.1 1 .1 1-1.1 1 .4 1-.4 1 .3 1 .2 0 9.5 -1 .2 -1 .4 -1-.5 -1 .4 -1-1.1 -1 .1 -1 0 -1 1.1 -1-.1 -1-.1 -1-.4 -1-.2 -1.1 .5 -1 .5 -1-1.1 -1 1.5 -1-.6 -1-.5 -1 0 -1 .6 -1-.2 -1-.5 -1 .1 -1 .9 -1-.5 -1-.7 -1-.3 -1-.1 -1 .4 -1-.2 -1 1.2 -1-.5 -1 .5 -1-.6 -1-.1 -1 .4 -1-.1 -1.1-.8 -1 .9 -1 .7 -1-1.3 -1-.3 -1 .6 -1-.1 -1-.6 -1 .7 -1-.6 -1 1.2 -1 0 -1-.7 -1-.5 -1-.1 -1-.5 -1 .8 -1-.6 -1 .3 -1-.1 -1 0 -1 .1 -1 .2 -1 .1 -1-.7 -1.1 1.7 -1-1 -1-.6 -1 .5 -1-.3 -1-.1 -1 .7 -1-.4 -1 0 -1-.1 -1 .6 -1-.2 -1 .9 -1-.8 -1-.5 -1-.7 -1 .9 -1-1 -1 .3 -1 .3 -1 .6 -1-.2 -1-.7 -1 1.7 -1-1.8 -1.1 .5 -1-.7 -1-.1 -1 .3 -1-.2 -1 .6 -1 1.5 -1-1.3 -1-.5 -1 .7 -1-.1 -1-.5 -1 0z" fill="#231d2c"/>
<path d="M879.2 471.7l1 0 1-.5 1-.1 1 .7 1-.5 1-1.2 1 1.4 1 .6 1-.2 1 .3 1-.2 1-.6 1.1 .4 1-1.6 1 1.6 1-.7 1-.2 1 .6 1 .3 1 .3 1-1 1 .9 1-.7 1-.5 1-.7 1 .8 1-.1 1 .5 1-.1 1 0 1-.3 1 .6 1-.1 1-.2 1 .4 1-.6 1-1 1.1 1.7 1-.7 1 .1 1 .2 1 .1 1 0 1-.1 1 .3 1-.6 1 .8 1-.5 1-.1 1-.5 1-.6 1 0 1 1.1 1-.6 1 .7 1-.5 1-.1 1 .6 1-.4 1-1.3 1 .8 1 .8 1.1-.7 1-.2 1 .4 1-.1 1-.5 1 .4 1-.4 1 1.1 1-.2 1 .4 1-.1 1-.3 1-.6 1-.5 1 .8 1 .1 1-.4 1-.3 1 .6 1 .1 1-.5 1-.7 1 1.5 1-1 1 .4 1.1 .6 1-.3 1-.4 1-.1 1-.1 1 1.2 1-.1 1 .1 1-1.1 1 .4 1-.4 1 .3 1 .2 0 9.5 -1 .2 -1 .4 -1-.5 -1 .4 -1-1.1 -1 .1 -1 0 -1 1.1 -1-.1 -1-.1 -1-.4 -1-.2 -1.1 .5 -1 .5 -1-1.1 -1 1.5 -1-.6 -1-.5 -1 0 -1 .6 -1-.2 -1-.5 -1 .1 -1 .9 -1-.5 -1-.7 -1-.3 -1-.1 -1 .4 -1-.2 -1 1.2 -1-.5 -1 .5 -1-.6 -1-.1 -1 .4 -1-.1 -1.1-.8 -1 .9 -1 .7 -1-1.3 -1-.3 -1 .6 -1-.1 -1-.6 -1 .7 -1-.6 -1 1.2 -1 0 -1-.7 -1-.5 -1-.1 -1-.5 -1 .8 -1-.6 -1 .3 -1-.1 -1 0 -1 .1 -1 .2 -1 .1 -1-.7 -1.1 1.7 -1-1 -1-.6 -1 .5 -1-.3 -1-.1 -1 .7 -1-.4 -1 0 -1-.1 -1 .6 -1-.2 -1 .9 -1-.8 -1-.5 -1-.7 -1 .9 -1-1 -1 .3 -1 .3 -1 .6 -1-.2 -1-.7 -1 1.7 -1-1.8 -1.1 .5 -1-.7 -1-.1 -1 .3 -1-.2 -1 .6 -1 1.5 -1-1.3 -1-.5 -1 .7 -1-.1 -1-.5 -1 0z" fill="#231d2c"/>
<svg x="878.9" y="426.4" width="100.5" height="18"><text x="3.8" y="14.1" font-size="11" letter-spacing="0.55" fill="rgba(0,0,0,0.75)" stroke="rgba(0,0,0,0.75)" stroke-width="0.2">Train_P2</text></svg>
<rect x="1316.5" y="426.4" width="127.4" height="58.8" fill="#8a71e1"/>
<rect x="1316.5" y="443.8" width="127.4" height="1" fill="rgba(0,0,0,0.12)"/>
<path d="M1319.7 444.8V485.3M1325.4 444.8V485.3M1331.1 444.8V485.3M1336.7 444.8V485.3M1342.4 444.8V485.3M1348.1 444.8V485.3M1353.7 444.8V485.3M1359.4 444.8V485.3M1365.1 444.8V485.3M1370.7 444.8V485.3M1376.4 444.8V485.3M1382.1 444.8V485.3M1387.7 444.8V485.3M1393.4 444.8V485.3M1399.1 444.8V485.3M1404.7 444.8V485.3M1410.4 444.8V485.3M1416.1 444.8V485.3M1421.8 444.8V485.3M1427.4 444.8V485.3M1433.1 444.8V485.3M1438.8 444.8V485.3" stroke="rgba(0,0,0,0.12)" stroke-width="1"/>
<path d="M1316.8 454l1 .1 1 .1 1-.2 1-.3 1 0 1 0 1-.1 1 .2 1 .1 1-.2 1-.3 1-.3 1-.2 1 .5 1-.5 1 0 1-.1 1-.1 1-.8 1 .9 1 0 1-.1 1 .2 1-.6 1-.2 1 .2 1-.1 1-.8 1-1.3 1 .8 1 .4 .9 .9 1-.6 1-.1 1-.9 1 .4 1-1.3 1 .4 1 .7 1-.8 1 1.4 1-1 1 .2 1 .6 1 0 1-.6 1-.9 1 1.1 1-.6 1 .6 1 0 1-2 1 1.3 1-.1 1 .2 1-1.4 1 1.5 1 .3 1-.2 1 1.2 1-1.1 1 .6 1-.1 1-.3 1-.3 1-.3 1 .1 1 .3 1-.1 1 .9 1-.3 1 .1 1-.4 1-1 1 1.3 1-.4 1 .9 1-.6 1 .4 1-.1 1-.6 1-.5 1 .2 1-.1 1 .5 1 .4 1-.3 1 .5 1 0 1 .2 1-.4 1 .1 1-.5 1-.2 1-.5 .9-.5 1 .2 1 .6 1-.6 1-1 1 .5 1 1.5 1-.5 1 .1 1 .4 1 .7 1 0 1 .2 1 .1 1-.2 1 .5 1-.3 1 .1 1 .7 1 0 1 .5 1-.1 1 .2 1-.2 1 0 1 .5 1 .1 1 0 1-.1 1 .4 1 .2 1 .3 0 2 -1 .3 -1 .2 -1 .4 -1-.1 -1 0 -1 .1 -1 .5 -1 0 -1-.2 -1 .3 -1-.2 -1 .6 -1 0 -1 .7 -1 .1 -1-.4 -1 .6 -1-.2 -1 0 -1 .2 -1 .1 -1 .7 -1 .4 -1 .2 -1-.5 -1 1.5 -1 .5 -1-1 -1-.7 -1 .7 -1 .2 -.9-.5 -1-.6 -1-.2 -1-.5 -1 .2 -1-.5 -1 .2 -1 0 -1 .5 -1-.3 -1 .4 -1 .6 -1-.1 -1 .1 -1-.4 -1-.7 -1-.1 -1 .4 -1-.6 -1 1 -1-.5 -1 1.4 -1-1.1 -1-.3 -1 0 -1-.3 -1 1 -1-.1 -1 .2 -1 .1 -1-.3 -1-.3 -1-.3 -1-.1 -1 .6 -1-1.1 -1 1.2 -1-.2 -1 .3 -1 1.6 -1-1.4 -1 .1 -1 0 -1 1.3 -1-2.1 -1 0 -1 .6 -1-.6 -1 1.2 -1-1 -1-.6 -1 0 -1 .6 -1 .2 -1-1 -1 1.5 -1-.9 -1 .8 -1 .3 -1-1.3 -1 .4 -1-.9 -1-.1 -1-.6 -.9 .9 -1 .4 -1 .9 -1-1.4 -1-.8 -1-.2 -1 .2 -1-.1 -1-.6 -1 .1 -1-.1 -1 0 -1 1 -1-.8 -1-.2 -1-.1 -1 .1 -1-.6 -1 .5 -1-.2 -1-.3 -1-.3 -1-.2 -1 0 -1 .3 -1-.1 -1 0 -1 0 -1-.4 -1-.1 -1 0 -1 .1z" fill="#231d2c"/>
<path d="M1316.8 474.2l1 .1 1 .1 1-.2 1-.3 1 0 1 0 1-.1 1 .2 1 .1 1-.2 1-.3 1-.3 1-.2 1 .5 1-.5 1 0 1-.1 1-.1 1-.8 1 .9 1 0 1-.1 1 .2 1-.6 1-.2 1 .2 1-.1 1-.8 1-1.3 1 .8 1 .4 .9 .9 1-.6 1-.1 1-.9 1 .4 1-1.3 1 .4 1 .7 1-.8 1 1.4 1-1 1 .2 1 .6 1 0 1-.6 1-.9 1 1.1 1-.6 1 .6 1 0 1-2 1 1.3 1-.1 1 .2 1-1.4 1 1.5 1 .3 1-.2 1 1.2 1-1.1 1 .6 1-.1 1-.3 1-.3 1-.3 1 .1 1 .3 1-.1 1 .9 1-.3 1 .1 1-.4 1-1 1 1.3 1-.4 1 .9 1-.6 1 .4 1-.1 1-.6 1-.5 1 .2 1-.1 1 .5 1 .4 1-.3 1 .5 1 0 1 .2 1-.4 1 .1 1-.5 1-.2 1-.5 .9-.5 1 .2 1 .6 1-.6 1-1 1 .5 1 1.5 1-.5 1 .1 1 .4 1 .7 1 0 1 .2 1 .1 1-.2 1 .5 1-.3 1 .1 1 .7 1 0 1 .5 1-.1 1 .2 1-.2 1 0 1 .5 1 .1 1 0 1-.1 1 .4 1 .2 1 .3 0 2 -1 .3 -1 .2 -1 .4 -1-.1 -1 0 -1 .1 -1 .5 -1 0 -1-.2 -1 .3 -1-.2 -1 .6 -1 0 -1 .7 -1 .1 -1-.4 -1 .6 -1-.2 -1 0 -1 .2 -1 .1 -1 .7 -1 .4 -1 .2 -1-.5 -1 1.5 -1 .5 -1-1 -1-.7 -1 .7 -1 .2 -.9-.5 -1-.6 -1-.2 -1-.5 -1 .2 -1-.5 -1 .2 -1 0 -1 .5 -1-.3 -1 .4 -1 .6 -1-.1 -1 .1 -1-.4 -1-.7 -1-.1 -1 .4 -1-.6 -1 1 -1-.5 -1 1.4 -1-1.1 -1-.3 -1 0 -1-.3 -1 1 -1-.1 -1 .2 -1 .1 -1-.3 -1-.3 -1-.3 -1-.1 -1 .6 -1-1.1 -1 1.2 -1-.2 -1 .3 -1 1.6 -1-1.4 -1 .1 -1 0 -1 1.3 -1-2.1 -1 0 -1 .6 -1-.6 -1 1.2 -1-1 -1-.6 -1 0 -1 .6 -1 .2 -1-1 -1 1.5 -1-.9 -1 .8 -1 .3 -1-1.3 -1 .4 -1-.9 -1-.1 -1-.6 -.9 .9 -1 .4 -1 .9 -1-1.4 -1-.8 -1-.2 -1 .2 -1-.1 -1-.6 -1 .1 -1-.1 -1 0 -1 1 -1-.8 -1-.2 -1-.1 -1 .1 -1-.6 -1 .5 -1-.2 -1-.3 -1-.3 -1-.2 -1 0 -1 .3 -1-.1 -1 0 -1 0 -1-.4 -1-.1 -1 0 -1 .1z" fill="#231d2c"/>
<path d="M1316.5 444.8H1346.5L1316.5 485.3Z" fill="rgba(0,0,0,0.09)"/>
<path d="M1443.9 444.8H1433.9L1443.9 485.3Z" fill="rgba(0,0,0,0.09)"/>
<svg x="1316.5" y="426.4" width="126.9" height="18"><text x="3.8" y="14.1" font-size="11" letter-spacing="0.55" fill="rgba(0,0,0,0.75)" stroke="rgba(0,0,0,0.75)" stroke-width="0.2">Train_P2</text></svg>
<rect x="759.4" y="487.2" width="182.2" height="58.8" fill="#fba33d"/>
<rect x="759.4" y="504.6" width="182.2" height="1" fill="rgba(0,0,0,0.12)"/>
<path d="M764.4 505.6V546.1M770 505.6V546.1M775.7 505.6V546.1M781.4 505.6V546.1M787 505.6V546.1M792.7 505.6V546.1M798.4 505.6V546.1M804 505.6V546.1M809.7 505.6V546.1M815.4 505.6V546.1M821 505.6V546.1M826.7 505.6V546.1M832.4 505.6V546.1M838 505.6V546.1M843.7 505.6V546.1M849.4 505.6V546.1M855 505.6V546.1M860.7 505.6V546.1M866.4 505.6V546.1M872.1 505.6V546.1M877.7 505.6V546.1M883.4 505.6V546.1M889.1 505.6V546.1M894.7 505.6V546.1M900.4 505.6V546.1M906.1 505.6V546.1M911.7 505.6V546.1M917.4 505.6V546.1M923.1 505.6V546.1M928.7 505.6V546.1M934.4 505.6V546.1M940.1 505.6V546.1" stroke="rgba(0,0,0,0.12)" stroke-width="1"/>
<path d="M759.7 513.2l1 .2 1-.1 1 .4 1-.4 1 0 1-.5 1-.6 1 1.2 1 .2 1-.4 1-.7 1 1.1 1 .1 1-.3 1-.1 1 .3 1-.3 1 .4 1-.1 1-.1 1-.2 1-.7 .9-.3 1 0 1 .3 1 .1 1 .1 1-.7 1-.3 1-.4 1-.2 1-.8 1 1.1 1 .5 1 .1 1 .1 1 .3 1-1.2 1-.7 1 1 1 .4 1 .5 1-.7 1-.5 1 .1 1-.2 1 .4 1 .1 1 .9 1-.2 1 .6 1-.3 1-.2 1 .3 1 .2 1-.5 1-.5 1-1 1 .6 1 .9 1-.7 1 .4 1-1.5 1 .5 1 .4 1 1.2 1-.1 1 .4 .9 .3 1-.3 1-.1 1 .3 1-.4 1 .4 1-1 1 .6 1 .2 1 .2 1-1 1-.2 1-.2 1 .3 1-.2 1 .2 1 .2 1 .8 1-.2 1 .1 1 .1 1-.2 1 .2 1 .1 1-.6 1 .3 1-.8 1-.1 1-.8 1-.9 1 .2 1 1.5 1 .4 1-.2 1 .1 1-.1 1 0 1-.2 1-.1 1-.1 1 .5 1-.3 1-.2 1-.6 1 .7 .9 .1 1 .3 1 .7 1 .1 1-.1 1 .1 1 .2 1 .2 1 0 1-.3 1 .5 1-.9 1 .7 1-.4 1 .1 1-.6 1 .3 1-.6 1 .4 1-.1 1 .3 1-.1 1 .3 1-.1 1-.3 1-.7 1-.4 1 .4 1-1.3 1-.1 1 .2 1 .2 1 .7 1 .3 1 .2 1 .2 1 .4 1 .3 1 0 1 .4 1 .1 1-.1 1-.3 1-.4 1 .1 1-.2 .9-.7 1 0 1-.3 1 0 1 .4 1 .1 1 .4 1 .2 1 .4 1 0 1-.1 1 .2 1-.2 1-.3 1-.6 1-.1 1 .7 1 0 1 .3 1 .2 1-.3 1 .2 1-.2 0 6 -1-.2 -1 .2 -1-.3 -1 .3 -1 .3 -1 0 -1 .7 -1-.2 -1-.5 -1-.4 -1-.2 -1 .2 -1-.1 -1 0 -1 .5 -1 .2 -1 .4 -1 .1 -1 .4 -1 0 -1-.3 -1 0 -.9-.7 -1-.3 -1 .1 -1-.4 -1-.3 -1-.1 -1 .1 -1 .5 -1-.1 -1 .3 -1 .4 -1 .3 -1 .2 -1 .3 -1 .7 -1 .3 -1 .2 -1-.1 -1-1.4 -1 .4 -1-.4 -1-.8 -1-.3 -1-.1 -1 .4 -1-.1 -1 .3 -1-.1 -1 .4 -1-.6 -1 .3 -1-.7 -1 .2 -1-.5 -1 .8 -1-1 -1 .6 -1-.4 -1 0 -1 .2 -1 .3 -1 0 -1-.1 -1 .2 -1 .7 -1 .3 -.9 .1 -1 .7 -1-.6 -1-.2 -1-.3 -1 .5 -1-.1 -1-.1 -1-.2 -1-.1 -1-.1 -1 .1 -1-.1 -1 .4 -1 1.6 -1 .1 -1-.9 -1-.8 -1-.1 -1-.9 -1 .4 -1-.7 -1 .1 -1 .2 -1-.2 -1 .1 -1 .1 -1-.2 -1 .9 -1 .2 -1 .2 -1-.2 -1 .3 -1-.2 -1-.2 -1-1 -1 .1 -1 .3 -1 .5 -1-1 -1 .4 -1-.4 -1 .4 -1-.2 -1-.2 -.9 .3 -1 .4 -1-.1 -1 1.2 -1 .5 -1 .4 -1-1.5 -1 .4 -1-.7 -1 .9 -1 .7 -1-1 -1-.7 -1-.5 -1 .3 -1 .2 -1-.1 -1-.3 -1 .5 -1-.1 -1 .9 -1 .1 -1 .4 -1-.2 -1 .1 -1-.5 -1-.7 -1 .5 -1 .4 -1 1.1 -1-.8 -1-1.2 -1 .3 -1 .1 -1 .1 -1 .5 -1 1.1 -1-.7 -1-.3 -1-.3 -1-.4 -1-.7 -1 .1 -1 .1 -1 .3 -1 0 -.9-.3 -1-.8 -1-.2 -1 0 -1-.2 -1 .4 -1-.3 -1 .3 -1-.1 -1-.3 -1 .2 -1 1.1 -1-.8 -1-.3 -1 .2 -1 1.2 -1-.6 -1-.6 -1 .1 -1-.5 -1 .4 -1-.1 -1 .3z" fill="#302212"/>
<path d="M759.7 533.4l1 .2 1-.1 1 .4 1-.4 1 0 1-.5 1-.6 1 1.2 1 .2 1-.4 1-.7 1 1.1 1 .1 1-.3 1-.1 1 .3 1-.3 1 .4 1-.1 1-.1 1-.2 1-.7 .9-.3 1 0 1 .3 1 .1 1 .1 1-.7 1-.3 1-.4 1-.2 1-.8 1 1.1 1 .5 1 .1 1 .1 1 .3 1-1.2 1-.7 1 1 1 .4 1 .5 1-.7 1-.5 1 .1 1-.2 1 .4 1 .1 1 .9 1-.2 1 .6 1-.3 1-.2 1 .3 1 .2 1-.5 1-.5 1-1 1 .6 1 .9 1-.7 1 .4 1-1.5 1 .5 1 .4 1 1.2 1-.1 1 .4 .9 .3 1-.3 1-.1 1 .3 1-.4 1 .4 1-1 1 .6 1 .2 1 .2 1-1 1-.2 1-.2 1 .3 1-.2 1 .2 1 .2 1 .8 1-.2 1 .1 1 .1 1-.2 1 .2 1 .1 1-.6 1 .3 1-.8 1-.1 1-.8 1-.9 1 .2 1 1.5 1 .4 1-.2 1 .1 1-.1 1 0 1-.2 1-.1 1-.1 1 .5 1-.3 1-.2 1-.6 1 .7 .9 .1 1 .3 1 .7 1 .1 1-.1 1 .1 1 .2 1 .2 1 0 1-.3 1 .5 1-.9 1 .7 1-.4 1 .1 1-.6 1 .3 1-.6 1 .4 1-.1 1 .3 1-.1 1 .3 1-.1 1-.3 1-.7 1-.4 1 .4 1-1.3 1-.1 1 .2 1 .2 1 .7 1 .3 1 .2 1 .2 1 .4 1 .3 1 0 1 .4 1 .1 1-.1 1-.3 1-.4 1 .1 1-.2 .9-.7 1 0 1-.3 1 0 1 .4 1 .1 1 .4 1 .2 1 .4 1 0 1-.1 1 .2 1-.2 1-.3 1-.6 1-.1 1 .7 1 0 1 .3 1 .2 1-.3 1 .2 1-.2 0 6 -1-.2 -1 .2 -1-.3 -1 .3 -1 .3 -1 0 -1 .7 -1-.2 -1-.5 -1-.4 -1-.2 -1 .2 -1-.1 -1 0 -1 .5 -1 .2 -1 .4 -1 .1 -1 .4 -1 0 -1-.3 -1 0 -.9-.7 -1-.3 -1 .1 -1-.4 -1-.3 -1-.1 -1 .1 -1 .5 -1-.1 -1 .3 -1 .4 -1 .3 -1 .2 -1 .3 -1 .7 -1 .3 -1 .2 -1-.1 -1-1.4 -1 .4 -1-.4 -1-.8 -1-.3 -1-.1 -1 .4 -1-.1 -1 .3 -1-.1 -1 .4 -1-.6 -1 .3 -1-.7 -1 .2 -1-.5 -1 .8 -1-1 -1 .6 -1-.4 -1 0 -1 .2 -1 .3 -1 0 -1-.1 -1 .2 -1 .7 -1 .3 -.9 .1 -1 .7 -1-.6 -1-.2 -1-.3 -1 .5 -1-.1 -1-.1 -1-.2 -1-.1 -1-.1 -1 .1 -1-.1 -1 .4 -1 1.6 -1 .1 -1-.9 -1-.8 -1-.1 -1-.9 -1 .4 -1-.7 -1 .1 -1 .2 -1-.2 -1 .1 -1 .1 -1-.2 -1 .9 -1 .2 -1 .2 -1-.2 -1 .3 -1-.2 -1-.2 -1-1 -1 .1 -1 .3 -1 .5 -1-1 -1 .4 -1-.4 -1 .4 -1-.2 -1-.2 -.9 .3 -1 .4 -1-.1 -1 1.2 -1 .5 -1 .4 -1-1.5 -1 .4 -1-.7 -1 .9 -1 .7 -1-1 -1-.7 -1-.5 -1 .3 -1 .2 -1-.1 -1-.3 -1 .5 -1-.1 -1 .9 -1 .1 -1 .4 -1-.2 -1 .1 -1-.5 -1-.7 -1 .5 -1 .4 -1 1.1 -1-.8 -1-1.2 -1 .3 -1 .1 -1 .1 -1 .5 -1 1.1 -1-.7 -1-.3 -1-.3 -1-.4 -1-.7 -1 .1 -1 .1 -1 .3 -1 0 -.9-.3 -1-.8 -1-.2 -1 0 -1-.2 -1 .4 -1-.3 -1 .3 -1-.1 -1-.3 -1 .2 -1 1.1 -1-.8 -1-.3 -1 .2 -1 1.2 -1-.6 -1-.6 -1 .1 -1-.5 -1 .4 -1-.1 -1 .3z" fill="#302212"/>
<svg x="759.4" y="487.2" width="181.7" height="18"><text x="3.8" y="14.1" font-size="11" letter-spacing="0.55" fill="rgba(0,0,0,0.75)" stroke="rgba(0,0,0,0.75)" stroke-width="0.2">20190404_KaraköyİskeleGıcırtı [1]</text></svg>
<rect x="627.7" y="548" width="6.8" height="58.9" fill="#fba33d"/>
<rect x="627.7" y="565.4" width="6.8" height="1" fill="rgba(0,0,0,0.12)"/>
<path d="M634 566.4V606.9" stroke="rgba(0,0,0,0.12)" stroke-width="1"/>
<path d="M628 575.8l1-1.5 1.1 .1 1-.3 1 .3 1.1-.7 1 .1 0 6.3 -1 .1 -1.1-.8 -1 .3 -1-.3 -1.1 .2 -1-1.7z" fill="#302212"/>
<path d="M628 596l1-1.5 1.1 .1 1-.3 1 .3 1.1-.7 1 .1 0 6.3 -1 .1 -1.1-.8 -1 .3 -1-.3 -1.1 .2 -1-1.7z" fill="#302212"/>
<svg x="627.7" y="548" width="6.3" height="18"><text x="3.8" y="14.1" font-size="11" letter-spacing="0.55" fill="rgba(0,0,0,0.75)" stroke="rgba(0,0,0,0.75)" stroke-width="0.2">2</text></svg>
<rect x="636" y="548" width="6" height="58.9" fill="#fba33d"/>
<rect x="636" y="565.4" width="6" height="1" fill="rgba(0,0,0,0.12)"/>
<path d="M639.7 566.4V606.9" stroke="rgba(0,0,0,0.12)" stroke-width="1"/>
<path d="M636.3 575.7l1.1-1.4 1.1-1 1 .5 1.1 .5 1.1 .1 0 5 -1.1 .1 -1.1 .6 -1 .4 -1.1-.9 -1.1-1.5z" fill="#302212"/>
<path d="M636.3 595.9l1.1-1.4 1.1-1 1 .5 1.1 .5 1.1 .1 0 5 -1.1 .1 -1.1 .6 -1 .4 -1.1-.9 -1.1-1.5z" fill="#302212"/>
<svg x="636" y="548" width="5.5" height="18"><text x="3.8" y="14.1" font-size="11" letter-spacing="0.55" fill="rgba(0,0,0,0.75)" stroke="rgba(0,0,0,0.75)" stroke-width="0.2">2</text></svg>
<rect x="648.8" y="548" width="4.4" height="58.9" fill="#fba33d"/>
<rect x="648.8" y="565.4" width="4.4" height="1" fill="rgba(0,0,0,0.12)"/>
<path d="M651 566.4V606.9" stroke="rgba(0,0,0,0.12)" stroke-width="1"/>
<path d="M649.1 575.4l.9-1.6 1-.5 1-.1 .9-.2 0 7.8 -.9-.1 -1-.1 -1-.5 -.9-1.8z" fill="#302212"/>
<path d="M649.1 595.6l.9-1.6 1-.5 1-.1 .9-.2 0 7.8 -.9-.1 -1-.1 -1-.5 -.9-1.8z" fill="#302212"/>
<rect x="660.3" y="548" width="9.3" height="58.9" fill="#fba33d"/>
<rect x="660.3" y="565.4" width="9.3" height="1" fill="rgba(0,0,0,0.12)"/>
<path d="M662.4 566.4V606.9M668 566.4V606.9" stroke="rgba(0,0,0,0.12)" stroke-width="1"/>
<path d="M660.6 575.4l1-1.9 .9-.5 1 .1 1 .4 .9-.5 1 0 1 .2 .9-.2 1 .2 0 7.5 -1 .1 -.9-.2 -1 .2 -1 0 -.9-.4 -1 .3 -1 .1 -.9-.4 -1-2z" fill="#302212"/>
<path d="M660.6 595.6l1-1.9 .9-.5 1 .1 1 .4 .9-.5 1 0 1 .2 .9-.2 1 .2 0 7.5 -1 .1 -.9-.2 -1 .2 -1 0 -.9-.4 -1 .3 -1 .1 -.9-.4 -1-2z" fill="#302212"/>
<svg x="660.3" y="548" width="8.8" height="18"><text x="3.8" y="14.1" font-size="11" letter-spacing="0.55" fill="rgba(0,0,0,0.75)" stroke="rgba(0,0,0,0.75)" stroke-width="0.2">2</text></svg>
<rect x="679.6" y="548" width="10.9" height="58.9" fill="#fba33d"/>
<rect x="679.6" y="565.4" width="10.9" height="1" fill="rgba(0,0,0,0.12)"/>
<path d="M685 566.4V606.9" stroke="rgba(0,0,0,0.12)" stroke-width="1"/>
<path d="M679.9 575.8l1-1.4 1.1-.6 1 0 1-.2 1 .4 1.1 .1 1-.1 1 .4 1.1 .1 1 .1 0 4.6 -1 .1 -1.1 .2 -1 .3 -1-.1 -1.1 .1 -1 .4 -1-.2 -1 0 -1.1-.6 -1-1.4z" fill="#302212"/>
<path d="M679.9 596l1-1.4 1.1-.6 1 0 1-.2 1 .4 1.1 .1 1-.1 1 .4 1.1 .1 1 .1 0 4.6 -1 .1 -1.1 .2 -1 .3 -1-.1 -1.1 .1 -1 .4 -1-.2 -1 0 -1.1-.6 -1-1.4z" fill="#302212"/>
<svg x="679.6" y="548" width="10.4" height="18"><text x="3.8" y="14.1" font-size="11" letter-spacing="0.55" fill="rgba(0,0,0,0.75)" stroke="rgba(0,0,0,0.75)" stroke-width="0.2">2</text></svg>
<rect x="690.5" y="548" width="28.2" height="58.9" fill="#fba33d"/>
<rect x="690.5" y="565.4" width="28.2" height="1" fill="rgba(0,0,0,0.12)"/>
<path d="M696.4 566.4V606.9M702 566.4V606.9M707.7 566.4V606.9M713.4 566.4V606.9" stroke="rgba(0,0,0,0.12)" stroke-width="1"/>
<path d="M697 575.8l1-1.2 1-.9 1.1-.7 1 0 1 .8 1-.3 1 .3 1.1-.2 1 .3 1-.3 1-.1 1 .2 1-.6 1.1 .6 1 0 1 0 1-.2 1-.3 1.1 .3 1-.4 1-.2 0 8.1 -1-.2 -1-.5 -1.1 .4 -1-.3 -1-.2 -1 0 -1 0 -1.1 .6 -1-.6 -1 .2 -1-.1 -1-.3 -1 .3 -1.1-.2 -1 .2 -1-.2 -1 .8 -1 0 -1.1-.7 -1-1 -1-1.2z" fill="#302212"/>
<path d="M697 596l1-1.2 1-.9 1.1-.7 1 0 1 .8 1-.3 1 .3 1.1-.2 1 .3 1-.3 1-.1 1 .2 1-.6 1.1 .6 1 0 1 0 1-.2 1-.3 1.1 .3 1-.4 1-.2 0 8.1 -1-.2 -1-.5 -1.1 .4 -1-.3 -1-.2 -1 0 -1 0 -1.1 .6 -1-.6 -1 .2 -1-.1 -1-.3 -1 .3 -1.1-.2 -1 .2 -1-.2 -1 .8 -1 0 -1.1-.7 -1-1 -1-1.2z" fill="#302212"/>
<svg x="690.5" y="548" width="27.7" height="18"><text x="3.8" y="14.1" font-size="11" letter-spacing="0.55" fill="rgba(0,0,0,0.75)" stroke="rgba(0,0,0,0.75)" stroke-width="0.2">20190404_KaraköyİskeleGıcırtı [1]</text></svg>
<rect x="690.5" y="548" width="1" height="58.9" fill="rgba(0,0,0,0.2)"/>
<rect x="691" y="576.4" width="6" height="0.9" fill="#302212"/><rect x="691" y="596.6" width="6" height="0.9" fill="#302212"/>
<rect x="760.4" y="548" width="181.2" height="58.9" fill="#fba33d"/>
<rect x="760.4" y="565.4" width="181.2" height="1" fill="rgba(0,0,0,0.12)"/>
<path d="M764.4 566.4V606.9M770 566.4V606.9M775.7 566.4V606.9M781.4 566.4V606.9M787 566.4V606.9M792.7 566.4V606.9M798.4 566.4V606.9M804 566.4V606.9M809.7 566.4V606.9M815.4 566.4V606.9M821 566.4V606.9M826.7 566.4V606.9M832.4 566.4V606.9M838 566.4V606.9M843.7 566.4V606.9M849.4 566.4V606.9M855 566.4V606.9M860.7 566.4V606.9M866.4 566.4V606.9M872.1 566.4V606.9M877.7 566.4V606.9M883.4 566.4V606.9M889.1 566.4V606.9M894.7 566.4V606.9M900.4 566.4V606.9M906.1 566.4V606.9M911.7 566.4V606.9M917.4 566.4V606.9M923.1 566.4V606.9M928.7 566.4V606.9M934.4 566.4V606.9M940.1 566.4V606.9" stroke="rgba(0,0,0,0.12)" stroke-width="1"/>
<path d="M760.7 574l1 .2 1-.1 1 .4 1-.4 1 0 1-.5 1-.6 1 1.2 1 .2 1-.4 1-.7 1 1.1 1 .1 1-.3 1-.1 1 .3 1-.3 1 .4 1-.1 1-.1 1-.2 1-.7 .9-.3 1 0 1 .3 1 .1 1 .1 1-.7 1-.3 1-.4 1-.2 1-.8 1 1.1 1 .5 1 .1 1 .1 1 .3 1-1.2 1-.7 1 1 1 .4 1 .5 1-.7 1-.5 1 .1 1-.2 1 .4 1 .1 1 .9 1-.2 1 .6 1-.3 1-.2 1 .3 1 .2 1-.5 1-.5 1-1 1 .6 1 .9 1-.7 1 .4 1-1.5 1 .5 1 .4 1 1.2 1-.1 .9 .4 1 .3 1-.3 1-.1 1 .3 1-.4 1 .4 1-1 1 .6 1 .2 1 .2 1-1 1-.2 1-.2 1 .3 1-.2 1 .2 1 .2 1 .8 1-.2 1 .1 1 .1 1-.2 1 .2 1 .1 1-.6 1 .3 1-.8 1-.1 1-.8 1-.9 1 .2 1 1.5 1 .4 1-.2 1 .1 1-.1 1 0 1-.2 1-.1 1-.1 1 .5 1-.3 1-.2 1-.6 1 .7 .9 .1 1 .3 1 .7 1 .1 1-.1 1 .1 1 .2 1 .2 1 0 1-.3 1 .5 1-.9 1 .7 1-.4 1 .1 1-.6 1 .3 1-.6 1 .4 1-.1 1 .3 1-.1 1 .3 1-.1 1-.3 1-.7 1-.4 1 .4 1-1.3 1-.1 1 .2 1 .2 1 .7 1 .3 1 .2 1 .2 1 .4 1 .3 1 0 1 .4 1 .1 1-.1 1-.3 1-.4 1 .1 .9-.2 1-.7 1 0 1-.3 1 0 1 .4 1 .1 1 .4 1 .2 1 .4 1 0 1-.1 1 .2 1-.2 1-.3 1-.6 1-.1 1 .7 1 0 1 .3 1 .2 1-.3 1 .2 0 5.6 -1 .2 -1-.3 -1 .3 -1 .3 -1 0 -1 .7 -1-.2 -1-.5 -1-.4 -1-.2 -1 .2 -1-.1 -1 0 -1 .5 -1 .2 -1 .4 -1 .1 -1 .5 -1-.1 -1-.3 -1 0 -1-.7 -.9-.3 -1 .1 -1-.4 -1-.3 -1-.1 -1 .1 -1 .5 -1-.1 -1 .3 -1 .4 -1 .3 -1 .2 -1 .3 -1 .7 -1 .3 -1 .2 -1-.1 -1-1.4 -1 .4 -1-.4 -1-.8 -1-.3 -1-.1 -1 .4 -1-.1 -1 .3 -1-.1 -1 .4 -1-.6 -1 .3 -1-.7 -1 .2 -1-.5 -1 .8 -1-1 -1 .6 -1-.4 -1 0 -1 .2 -1 .3 -1 0 -1-.1 -1 .2 -1 .7 -1 .3 -.9 .1 -1 .7 -1-.6 -1-.2 -1-.3 -1 .5 -1-.1 -1-.1 -1-.2 -1-.1 -1-.1 -1 .1 -1-.1 -1 .4 -1 1.6 -1 .1 -1-.9 -1-.8 -1-.1 -1-.9 -1 .4 -1-.7 -1 .1 -1 .2 -1-.2 -1 .1 -1 .1 -1-.2 -1 .9 -1 .2 -1 .2 -1-.2 -1 .3 -1-.2 -1-.2 -1-1 -1 .1 -1 .3 -1 .5 -1-1 -1 .4 -1-.4 -1 .4 -1-.2 -1-.2 -1 .3 -.9 .4 -1-.1 -1 1.2 -1 .5 -1 .4 -1-1.5 -1 .4 -1-.7 -1 .9 -1 .7 -1-1 -1-.7 -1-.5 -1 .3 -1 .2 -1-.1 -1-.3 -1 .5 -1-.1 -1 .9 -1 .1 -1 .4 -1-.2 -1 .1 -1-.5 -1-.7 -1 .5 -1 .4 -1 1.1 -1-.8 -1-1.2 -1 .3 -1 .1 -1 .1 -1 .5 -1 1.1 -1-.7 -1-.3 -1-.3 -1-.4 -1-.7 -1 .1 -1 .1 -1 .3 -1 0 -.9-.3 -1-.8 -1-.2 -1 0 -1-.2 -1 .4 -1-.3 -1 .3 -1-.1 -1-.3 -1 .2 -1 1.1 -1-.8 -1-.3 -1 .2 -1 1.2 -1-.6 -1-.6 -1 .1 -1-.5 -1 .4 -1-.1 -1 .3z" fill="#302212"/>
<path d="M760.7 594.2l1 .2 1-.1 1 .4 1-.4 1 0 1-.5 1-.6 1 1.2 1 .2 1-.4 1-.7 1 1.1 1 .1 1-.3 1-.1 1 .3 1-.3 1 .4 1-.1 1-.1 1-.2 1-.7 .9-.3 1 0 1 .3 1 .1 1 .1 1-.7 1-.3 1-.4 1-.2 1-.8 1 1.1 1 .5 1 .1 1 .1 1 .3 1-1.2 1-.7 1 1 1 .4 1 .5 1-.7 1-.5 1 .1 1-.2 1 .4 1 .1 1 .9 1-.2 1 .6 1-.3 1-.2 1 .3 1 .2 1-.5 1-.5 1-1 1 .6 1 .9 1-.7 1 .4 1-1.5 1 .5 1 .4 1 1.2 1-.1 .9 .4 1 .3 1-.3 1-.1 1 .3 1-.4 1 .4 1-1 1 .6 1 .2 1 .2 1-1 1-.2 1-.2 1 .3 1-.2 1 .2 1 .2 1 .8 1-.2 1 .1 1 .1 1-.2 1 .2 1 .1 1-.6 1 .3 1-.8 1-.1 1-.8 1-.9 1 .2 1 1.5 1 .4 1-.2 1 .1 1-.1 1 0 1-.2 1-.1 1-.1 1 .5 1-.3 1-.2 1-.6 1 .7 .9 .1 1 .3 1 .7 1 .1 1-.1 1 .1 1 .2 1 .2 1 0 1-.3 1 .5 1-.9 1 .7 1-.4 1 .1 1-.6 1 .3 1-.6 1 .4 1-.1 1 .3 1-.1 1 .3 1-.1 1-.3 1-.7 1-.4 1 .4 1-1.3 1-.1 1 .2 1 .2 1 .7 1 .3 1 .2 1 .2 1 .4 1 .3 1 0 1 .4 1 .1 1-.1 1-.3 1-.4 1 .1 .9-.2 1-.7 1 0 1-.3 1 0 1 .4 1 .1 1 .4 1 .2 1 .4 1 0 1-.1 1 .2 1-.2 1-.3 1-.6 1-.1 1 .7 1 0 1 .3 1 .2 1-.3 1 .2 0 5.6 -1 .2 -1-.3 -1 .3 -1 .3 -1 0 -1 .7 -1-.2 -1-.5 -1-.4 -1-.2 -1 .2 -1-.1 -1 0 -1 .5 -1 .2 -1 .4 -1 .1 -1 .5 -1-.1 -1-.3 -1 0 -1-.7 -.9-.3 -1 .1 -1-.4 -1-.3 -1-.1 -1 .1 -1 .5 -1-.1 -1 .3 -1 .4 -1 .3 -1 .2 -1 .3 -1 .7 -1 .3 -1 .2 -1-.1 -1-1.4 -1 .4 -1-.4 -1-.8 -1-.3 -1-.1 -1 .4 -1-.1 -1 .3 -1-.1 -1 .4 -1-.6 -1 .3 -1-.7 -1 .2 -1-.5 -1 .8 -1-1 -1 .6 -1-.4 -1 0 -1 .2 -1 .3 -1 0 -1-.1 -1 .2 -1 .7 -1 .3 -.9 .1 -1 .7 -1-.6 -1-.2 -1-.3 -1 .5 -1-.1 -1-.1 -1-.2 -1-.1 -1-.1 -1 .1 -1-.1 -1 .4 -1 1.6 -1 .1 -1-.9 -1-.8 -1-.1 -1-.9 -1 .4 -1-.7 -1 .1 -1 .2 -1-.2 -1 .1 -1 .1 -1-.2 -1 .9 -1 .2 -1 .2 -1-.2 -1 .3 -1-.2 -1-.2 -1-1 -1 .1 -1 .3 -1 .5 -1-1 -1 .4 -1-.4 -1 .4 -1-.2 -1-.2 -1 .3 -.9 .4 -1-.1 -1 1.2 -1 .5 -1 .4 -1-1.5 -1 .4 -1-.7 -1 .9 -1 .7 -1-1 -1-.7 -1-.5 -1 .3 -1 .2 -1-.1 -1-.3 -1 .5 -1-.1 -1 .9 -1 .1 -1 .4 -1-.2 -1 .1 -1-.5 -1-.7 -1 .5 -1 .4 -1 1.1 -1-.8 -1-1.2 -1 .3 -1 .1 -1 .1 -1 .5 -1 1.1 -1-.7 -1-.3 -1-.3 -1-.4 -1-.7 -1 .1 -1 .1 -1 .3 -1 0 -.9-.3 -1-.8 -1-.2 -1 0 -1-.2 -1 .4 -1-.3 -1 .3 -1-.1 -1-.3 -1 .2 -1 1.1 -1-.8 -1-.3 -1 .2 -1 1.2 -1-.6 -1-.6 -1 .1 -1-.5 -1 .4 -1-.1 -1 .3z" fill="#302212"/>
<svg x="760.4" y="548" width="180.7" height="18"><text x="3.8" y="14.1" font-size="11" letter-spacing="0.55" fill="rgba(0,0,0,0.75)" stroke="rgba(0,0,0,0.75)" stroke-width="0.2">20190404_KaraköyİskeleGıcırtı [1]</text></svg>
<rect x="627.7" y="608.9" width="6.8" height="58.8" fill="#fba33d"/>
<rect x="627.7" y="626.2" width="6.8" height="1" fill="rgba(0,0,0,0.12)"/>
<path d="M634 627.2V667.7" stroke="rgba(0,0,0,0.12)" stroke-width="1"/>
<path d="M628 636.6l1-1.5 1.1 .1 1-.3 1 .3 1.1-.7 1 .1 0 6.3 -1 .1 -1.1-.8 -1 .3 -1-.3 -1.1 .2 -1-1.7z" fill="#302212"/>
<path d="M628 656.8l1-1.5 1.1 .1 1-.3 1 .3 1.1-.7 1 .1 0 6.3 -1 .1 -1.1-.8 -1 .3 -1-.3 -1.1 .2 -1-1.7z" fill="#302212"/>
<svg x="627.7" y="608.9" width="6.3" height="18"><text x="3.8" y="14.1" font-size="11" letter-spacing="0.55" fill="rgba(0,0,0,0.75)" stroke="rgba(0,0,0,0.75)" stroke-width="0.2">2</text></svg>
<rect x="636" y="608.9" width="6" height="58.8" fill="#fba33d"/>
<rect x="636" y="626.2" width="6" height="1" fill="rgba(0,0,0,0.12)"/>
<path d="M639.7 627.2V667.7" stroke="rgba(0,0,0,0.12)" stroke-width="1"/>
<path d="M636.3 636.5l1.1-1.4 1.1-1 1 .5 1.1 .5 1.1 .1 0 5 -1.1 .1 -1.1 .6 -1 .4 -1.1-.9 -1.1-1.5z" fill="#302212"/>
<path d="M636.3 656.7l1.1-1.4 1.1-1 1 .5 1.1 .5 1.1 .1 0 5 -1.1 .1 -1.1 .6 -1 .4 -1.1-.9 -1.1-1.5z" fill="#302212"/>
<svg x="636" y="608.9" width="5.5" height="18"><text x="3.8" y="14.1" font-size="11" letter-spacing="0.55" fill="rgba(0,0,0,0.75)" stroke="rgba(0,0,0,0.75)" stroke-width="0.2">2</text></svg>
<rect x="648.8" y="608.9" width="4.4" height="58.8" fill="#fba33d"/>
<rect x="648.8" y="626.2" width="4.4" height="1" fill="rgba(0,0,0,0.12)"/>
<path d="M651 627.2V667.7" stroke="rgba(0,0,0,0.12)" stroke-width="1"/>
<path d="M649.1 636.2l.9-1.6 1-.5 1-.1 .9-.2 0 7.8 -.9-.1 -1-.1 -1-.5 -.9-1.8z" fill="#302212"/>
<path d="M649.1 656.4l.9-1.6 1-.5 1-.1 .9-.1 0 7.7 -.9-.1 -1-.1 -1-.5 -.9-1.8z" fill="#302212"/>
<rect x="660.3" y="608.9" width="9.3" height="58.8" fill="#fba33d"/>
<rect x="660.3" y="626.2" width="9.3" height="1" fill="rgba(0,0,0,0.12)"/>
<path d="M662.4 627.2V667.7M668 627.2V667.7" stroke="rgba(0,0,0,0.12)" stroke-width="1"/>
<path d="M660.6 636.2l1-1.9 .9-.5 1 .1 1 .4 .9-.5 1 0 1 .2 .9-.2 1 .2 0 7.5 -1 .1 -.9-.2 -1 .2 -1 0 -.9-.4 -1 .3 -1 .1 -.9-.4 -1-2z" fill="#302212"/>
<path d="M660.6 656.4l1-1.9 .9-.4 1 0 1 .4 .9-.4 1 0 1 .1 .9-.1 1 .1 0 7.5 -1 .1 -.9-.2 -1 .2 -1 0 -.9-.4 -1 .3 -1 .1 -.9-.4 -1-2z" fill="#302212"/>
<svg x="660.3" y="608.9" width="8.8" height="18"><text x="3.8" y="14.1" font-size="11" letter-spacing="0.55" fill="rgba(0,0,0,0.75)" stroke="rgba(0,0,0,0.75)" stroke-width="0.2">2</text></svg>
<rect x="679.6" y="608.9" width="10.9" height="58.8" fill="#fba33d"/>
<rect x="679.6" y="626.2" width="10.9" height="1" fill="rgba(0,0,0,0.12)"/>
<path d="M685 627.2V667.7" stroke="rgba(0,0,0,0.12)" stroke-width="1"/>
<path d="M679.9 636.6l1-1.4 1.1-.6 1 0 1-.2 1 .4 1.1 .1 1-.1 1 .4 1.1 .1 1 .1 0 4.6 -1 .1 -1.1 .2 -1 .3 -1-.1 -1.1 .1 -1 .4 -1-.2 -1 0 -1.1-.6 -1-1.4z" fill="#302212"/>
<path d="M679.9 656.8l1-1.4 1.1-.6 1 0 1-.2 1 .4 1.1 .1 1-.1 1 .4 1.1 .1 1 .1 0 4.6 -1 .1 -1.1 .2 -1 .3 -1-.1 -1.1 .1 -1 .4 -1-.2 -1 0 -1.1-.6 -1-1.4z" fill="#302212"/>
<svg x="679.6" y="608.9" width="10.4" height="18"><text x="3.8" y="14.1" font-size="11" letter-spacing="0.55" fill="rgba(0,0,0,0.75)" stroke="rgba(0,0,0,0.75)" stroke-width="0.2">2</text></svg>
<rect x="690.5" y="608.9" width="34.6" height="58.8" fill="#fba33d"/>
<rect x="690.5" y="626.2" width="34.6" height="1" fill="rgba(0,0,0,0.12)"/>
<path d="M696.4 627.2V667.7M702 627.2V667.7M707.7 627.2V667.7M713.4 627.2V667.7M719 627.2V667.7M724.7 627.2V667.7" stroke="rgba(0,0,0,0.12)" stroke-width="1"/>
<path d="M697 636.7l1-1.1 1-1.3 1 .1 1 .2 1-.6 1 .4 1 .2 .9-.3 1 .2 1 0 1-.5 1 .2 1-.1 1 .1 1 .4 1-.4 1-.1 1 .2 1-.1 1 .2 .9 0 1-.1 1 .3 1-.4 1-.2 1 .4 1-.4 1 .1 0 7.3 -1 .1 -1-.4 -1 .4 -1-.2 -1-.5 -1 .4 -1-.2 -.9 0 -1 .2 -1 0 -1 .1 -1 0 -1-.4 -1 .4 -1 0 -1-.1 -1 .3 -1-.6 -1 0 -1 .3 -.9-.4 -1 .3 -1 .3 -1-.5 -1 .2 -1 .1 -1-1.4 -1-1.2z" fill="#302212"/>
<path d="M697 656.9l1-1.1 1-1.3 1 .1 1 .2 1-.6 1 .4 1 .2 .9-.3 1 .2 1 0 1-.5 1 .2 1-.1 1 .1 1 .4 1-.4 1-.1 1 .2 1-.1 1 .2 .9 0 1-.1 1 .3 1-.4 1-.2 1 .4 1-.4 1 .1 0 7.3 -1 .1 -1-.4 -1 .4 -1-.2 -1-.5 -1 .4 -1-.2 -.9 0 -1 .2 -1 0 -1 .1 -1 0 -1-.4 -1 .4 -1 0 -1-.1 -1 .3 -1-.6 -1 0 -1 .3 -.9-.4 -1 .3 -1 .3 -1-.5 -1 .2 -1 .1 -1-1.4 -1-1.2z" fill="#302212"/>
<svg x="690.5" y="608.9" width="34.1" height="18"><text x="3.8" y="14.1" font-size="11" letter-spacing="0.55" fill="rgba(0,0,0,0.75)" stroke="rgba(0,0,0,0.75)" stroke-width="0.2">20190404_KaraköyİskeleGıcırtı [1]</text></svg>
<rect x="690.5" y="608.9" width="1" height="58.8" fill="rgba(0,0,0,0.2)"/>
<rect x="691" y="637.2" width="6" height="0.9" fill="#302212"/><rect x="691" y="657.5" width="6" height="0.9" fill="#302212"/>
<rect x="760.4" y="608.9" width="182.5" height="58.8" fill="#fba33d"/>
<rect x="760.4" y="626.2" width="182.5" height="1" fill="rgba(0,0,0,0.12)"/>
<path d="M764.4 627.2V667.7M770 627.2V667.7M775.7 627.2V667.7M781.4 627.2V667.7M787 627.2V667.7M792.7 627.2V667.7M798.4 627.2V667.7M804 627.2V667.7M809.7 627.2V667.7M815.4 627.2V667.7M821 627.2V667.7M826.7 627.2V667.7M832.4 627.2V667.7M838 627.2V667.7M843.7 627.2V667.7M849.4 627.2V667.7M855 627.2V667.7M860.7 627.2V667.7M866.4 627.2V667.7M872.1 627.2V667.7M877.7 627.2V667.7M883.4 627.2V667.7M889.1 627.2V667.7M894.7 627.2V667.7M900.4 627.2V667.7M906.1 627.2V667.7M911.7 627.2V667.7M917.4 627.2V667.7M923.1 627.2V667.7M928.7 627.2V667.7M934.4 627.2V667.7M940.1 627.2V667.7" stroke="rgba(0,0,0,0.12)" stroke-width="1"/>
<path d="M760.7 634.8l1 .2 1-.1 1 .4 1-.4 1 0 1-.5 1-.6 1 1.2 1 .2 1-.4 1-.7 1 1.1 1 .1 1-.3 1-.1 1 .3 1-.3 1 .4 1-.2 1 0 1-.2 1-.8 1-.2 1-.1 1 .3 1 .2 1 .1 1-.7 1-.4 1-.3 1-.3 1-.7 1 1.1 1 .5 1 .1 1 .1 1 .3 1-1.3 1-.7 1 1.1 1 .4 1 .5 1-.7 1-.5 1 .1 1-.1 1 .3 1 .2 1 .8 1-.2 1 .6 1-.4 1-.2 1 .3 1 .3 1-.5 1-.6 1-1 1 .8 1 .9 1-.9 1 .4 1-1.5 1 .6 1 .5 1 1.1 1-.1 1 .4 1 .3 1-.3 1-.1 1 .3 1-.4 1 .4 1-1 1 .6 1 .1 1 .2 1-1 1-.2 1-.2 1 .4 1-.1 1 .1 1 .2 1 .8 1-.2 1 .2 1 0 1-.2 .9 .2 1 .1 1-.6 1 .3 1-.9 1-.1 1-.8 1-.8 1 .3 1 1.5 1 .4 1-.2 1 .1 1-.1 1-.4 1 .1 1-.3 1 0 1 .5 1-.2 1-.2 1-.7 1 .9 1 0 1 .3 1 .7 1 .1 1-.1 1 .1 1 .2 1 .2 1 0 1-.3 1 .5 1-1.1 1 .8 1-.3 1 .1 1-.6 1 .2 1-.6 1 .5 1-.2 1 .4 1-.1 1 .3 1-.1 1-.3 1-.9 1-.5 1 .6 1-1.5 1 0 1 .5 1 .2 1 .7 1 .3 1 .1 1 .1 1 .6 1 0 1 .2 1 .4 1 .1 1-.1 1-.5 1-.2 1 .1 1-.3 1-.7 1 0 1-.4 1 .3 1 .4 1 .1 1 .4 1 .2 1 .4 1 0 1-.2 1 .2 1-.3 1-.3 1-.6 1 .1 1 .6 1 0 1 .3 1 .3 1-.4 1 .1 1 0 0 5.8 -1 0 -1 .1 -1-.3 -1 .2 -1 .3 -1 0 -1 .7 -1 .1 -1-.6 -1-.4 -1-.2 -1 .1 -1-.1 -1-.1 -1 .5 -1 .2 -1 .4 -1 .1 -1 .4 -1 .3 -1-.4 -1 0 -1-.8 -1-.2 -1 .1 -1-.3 -1-.4 -1-.2 -1 .1 -1 .4 -1 .3 -1-.1 -1 .7 -1 0 -1 .2 -1 .3 -1 .7 -1 .2 -1 .6 -1-.1 -1-1.5 -1 .6 -1-.5 -1-.9 -1-.3 -1-.1 -1 .3 -1-.2 -1 .5 -1-.3 -1 .6 -1-.6 -1 .2 -1-.7 -1 .2 -1-.3 -1 .8 -1-1.1 -1 .5 -1-.4 -1 0 -1 .2 -1 .3 -1 0 -1-.1 -1 .2 -1 .7 -1 .2 -1 .1 -1 1 -1-.7 -1-.3 -1-.3 -1 .6 -1 0 -1-.3 -1 .1 -1-.4 -1-.1 -1 .1 -1-.2 -1 .4 -1 1.5 -1 .3 -1-.8 -1-.8 -1-.1 -1-.9 -1 .3 -1-.7 -1 .1 -.9 .2 -1-.2 -1 .1 -1 .2 -1-.3 -1 .9 -1 .2 -1 .1 -1-.1 -1 .4 -1-.2 -1-.2 -1-1.1 -1 .2 -1 .1 -1 .7 -1-1 -1 .4 -1-.5 -1 .4 -1-.2 -1-.2 -1 .3 -1 .3 -1-.1 -1 1.2 -1 .5 -1 .6 -1-1.5 -1 .4 -1-.9 -1 .9 -1 .9 -1-1.1 -1-.6 -1-.6 -1 .3 -1 .4 -1-.2 -1-.4 -1 .5 -1-.1 -1 .8 -1 .2 -1 .4 -1-.1 -1 .1 -1-.5 -1-.8 -1 .5 -1 .4 -1 1.2 -1-.8 -1-1.3 -1 .3 -1 .1 -1 .1 -1 .5 -1 1.1 -1-.7 -1-.2 -1-.4 -1-.4 -1-.7 -1 .1 -1 .1 -1 .4 -1-.1 -1-.2 -1-.9 -1-.2 -1 0 -1-.2 -1 .4 -1-.3 -1 .3 -1-.1 -1-.3 -1 .1 -1 1.2 -1-.8 -1-.3 -1 .2 -1 1.2 -1-.6 -1-.6 -1 .1 -1-.5 -1 .4 -1-.1 -1 .3z" fill="#302212"/>
<path d="M760.7 655l1 .2 1-.1 1 .4 1-.4 1 0 1-.5 1-.6 1 1.2 1 .2 1-.4 1-.7 1 1.1 1 .1 1-.3 1-.1 1 .3 1-.3 1 .4 1-.2 1 0 1-.2 1-.8 1-.2 1-.1 1 .3 1 .2 1 .1 1-.7 1-.4 1-.3 1-.3 1-.7 1 1.1 1 .5 1 .1 1 .1 1 .3 1-1.3 1-.7 1 1.1 1 .4 1 .5 1-.7 1-.5 1 .1 1-.1 1 .3 1 .2 1 .8 1-.2 1 .6 1-.4 1-.2 1 .3 1 .3 1-.5 1-.6 1-1 1 .8 1 .9 1-.9 1 .4 1-1.5 1 .6 1 .5 1 1.1 1-.1 1 .4 1 .3 1-.3 1-.1 1 .3 1-.4 1 .4 1-1 1 .6 1 .1 1 .2 1-1 1-.2 1-.2 1 .4 1-.1 1 .1 1 .2 1 .8 1-.2 1 .2 1 0 1-.2 .9 .2 1 .1 1-.6 1 .3 1-.9 1-.1 1-.8 1-.8 1 .3 1 1.5 1 .4 1-.2 1 .1 1-.1 1-.4 1 .1 1-.3 1 0 1 .5 1-.2 1-.2 1-.7 1 .9 1 0 1 .3 1 .7 1 .1 1-.1 1 .1 1 .2 1 .2 1 0 1-.3 1 .5 1-1.1 1 .8 1-.3 1 .1 1-.6 1 .2 1-.6 1 .5 1-.2 1 .4 1-.1 1 .3 1-.1 1-.3 1-.9 1-.5 1 .6 1-1.5 1 0 1 .5 1 .2 1 .7 1 .3 1 .1 1 .1 1 .6 1 0 1 .2 1 .4 1 .1 1-.1 1-.5 1-.2 1 .1 1-.3 1-.7 1 0 1-.4 1 .3 1 .4 1 .1 1 .4 1 .2 1 .4 1 0 1-.2 1 .2 1-.3 1-.3 1-.6 1 .1 1 .6 1 0 1 .3 1 .3 1-.4 1 .1 1 0 0 5.8 -1 0 -1 .1 -1-.3 -1 .2 -1 .3 -1 0 -1 .7 -1 .1 -1-.6 -1-.4 -1-.2 -1 .1 -1-.1 -1-.1 -1 .5 -1 .2 -1 .4 -1 .1 -1 .4 -1 .3 -1-.4 -1 0 -1-.8 -1-.2 -1 .1 -1-.3 -1-.4 -1-.2 -1 .1 -1 .4 -1 .3 -1-.1 -1 .7 -1 0 -1 .2 -1 .3 -1 .7 -1 .2 -1 .6 -1-.1 -1-1.5 -1 .6 -1-.5 -1-.9 -1-.3 -1-.1 -1 .3 -1-.2 -1 .5 -1-.3 -1 .6 -1-.6 -1 .2 -1-.7 -1 .2 -1-.3 -1 .8 -1-1.1 -1 .5 -1-.4 -1 0 -1 .2 -1 .3 -1 0 -1-.1 -1 .2 -1 .7 -1 .2 -1 .1 -1 1 -1-.7 -1-.3 -1-.3 -1 .6 -1 0 -1-.3 -1 .1 -1-.4 -1-.1 -1 .1 -1-.2 -1 .4 -1 1.5 -1 .3 -1-.8 -1-.8 -1-.1 -1-.9 -1 .3 -1-.7 -1 .1 -.9 .2 -1-.2 -1 .1 -1 .2 -1-.3 -1 .9 -1 .2 -1 .1 -1-.1 -1 .4 -1-.2 -1-.2 -1-1.1 -1 .2 -1 .1 -1 .7 -1-1 -1 .4 -1-.5 -1 .4 -1-.2 -1-.2 -1 .3 -1 .3 -1-.1 -1 1.2 -1 .5 -1 .6 -1-1.5 -1 .4 -1-.9 -1 .9 -1 .9 -1-1.1 -1-.6 -1-.6 -1 .3 -1 .4 -1-.2 -1-.4 -1 .5 -1-.1 -1 .8 -1 .2 -1 .4 -1-.1 -1 .1 -1-.5 -1-.8 -1 .5 -1 .4 -1 1.2 -1-.8 -1-1.3 -1 .3 -1 .1 -1 .1 -1 .5 -1 1.1 -1-.7 -1-.2 -1-.4 -1-.4 -1-.7 -1 .1 -1 .1 -1 .4 -1-.1 -1-.2 -1-.9 -1-.2 -1 0 -1-.2 -1 .4 -1-.3 -1 .3 -1-.1 -1-.3 -1 .1 -1 1.2 -1-.8 -1-.3 -1 .2 -1 1.2 -1-.6 -1-.6 -1 .1 -1-.5 -1 .4 -1-.1 -1 .3z" fill="#302212"/>
<svg x="760.4" y="608.9" width="182" height="18"><text x="3.8" y="14.1" font-size="11" letter-spacing="0.55" fill="rgba(0,0,0,0.75)" stroke="rgba(0,0,0,0.75)" stroke-width="0.2">20190404_KaraköyİskeleGıcırtı [1]</text></svg>
<rect x="707.4" y="691" width="408.3" height="58.8" fill="#e554a0"/>
<rect x="707.4" y="708.4" width="408.3" height="1" fill="rgba(0,0,0,0.12)"/>
<path d="M713.4 709.4V749.8M719 709.4V749.8M724.7 709.4V749.8M730.4 709.4V749.8M736 709.4V749.8M741.7 709.4V749.8M747.4 709.4V749.8M753 709.4V749.8M758.7 709.4V749.8M764.4 709.4V749.8M770 709.4V749.8M775.7 709.4V749.8M781.4 709.4V749.8M787 709.4V749.8M792.7 709.4V749.8M798.4 709.4V749.8M804 709.4V749.8M809.7 709.4V749.8M815.4 709.4V749.8M821 709.4V749.8M826.7 709.4V749.8M832.4 709.4V749.8M838 709.4V749.8M843.7 709.4V749.8M849.4 709.4V749.8M855 709.4V749.8M860.7 709.4V749.8M866.4 709.4V749.8M872.1 709.4V749.8M877.7 709.4V749.8M883.4 709.4V749.8M889.1 709.4V749.8M894.7 709.4V749.8M900.4 709.4V749.8M906.1 709.4V749.8M911.7 709.4V749.8M917.4 709.4V749.8M923.1 709.4V749.8M928.7 709.4V749.8M934.4 709.4V749.8M940.1 709.4V749.8M945.7 709.4V749.8M951.4 709.4V749.8M957.1 709.4V749.8M962.7 709.4V749.8M968.4 709.4V749.8M974.1 709.4V749.8M979.7 709.4V749.8M985.4 709.4V749.8M991.1 709.4V749.8M996.7 709.4V749.8M1002.4 709.4V749.8M1008.1 709.4V749.8M1013.7 709.4V749.8M1019.4 709.4V749.8M1025.1 709.4V749.8M1030.7 709.4V749.8M1036.4 709.4V749.8M1042.1 709.4V749.8M1047.7 709.4V749.8M1053.4 709.4V749.8M1059.1 709.4V749.8M1064.7 709.4V749.8M1070.4 709.4V749.8M1076.1 709.4V749.8M1081.7 709.4V749.8M1087.4 709.4V749.8M1093.1 709.4V749.8M1098.7 709.4V749.8M1104.4 709.4V749.8M1110.1 709.4V749.8" stroke="rgba(0,0,0,0.12)" stroke-width="1"/>
<path d="M707.7 719.2l1 0 1 0 1 0 1 0 1-.1 1 .1 1 0 1 0 1 0 1 0 1-.3 1 .1 1 .1 1-.4 1 .1 1-.2 1-.9 1 .5 1 .4 1-1.1 1 0 1-1.2 1 1.3 1 .1 1-1.1 1 .8 1-.6 1-1.6 1 1.3 1 .4 1-.6 1 .6 1-1.1 1-1.4 1 1.8 1 .2 1-.6 1 0 1-.7 1 .9 1 .6 1-.7 1 1.1 1-1 1-1.2 1 1.5 1 .5 1-1.4 1 1.5 1-.8 1-2.3 1 2.1 1 .7 1-1.2 1 .8 1-1.6 1 1.4 1 .2 1-1 1 1.6 1-.7 1-.8 1 .7 1 1 1-.7 1 .1 1-.2 .9-2.1 1 1.8 1 1 1-.8 1-.5 1-1.8 1 1.6 1 .8 1-1.2 1 1.9 1-.6 1-2.5 1 1.9 1 .7 1-.6 1 1.2 1-.4 1-1.7 1 1.6 1 .3 1-.8 1 .3 1-1.5 1 .9 1 .6 1-1.2 1 1.3 1 .2 1-2.1 1 1.7 1 .9 1-1.9 1 1.5 1-.2 1-1.8 1 1.3 1 1 1-1 1-.1 1-1.3 1 1.2 1 1 1-.8 1 .7 1-.5 1-1 1 .7 1 1.1 1-1.6 1 1.1 1-.2 1-2.1 1 1.6 1 .9 1-1 1 .1 1-.6 1 1.1 1 .2 1-1.2 1 .8 1-.3 1-2 1 2.4 1 .1 1-1 1 .8 1 .2 1-1.9 1 1.3 1 .4 1-.6 1 .1 1-1.2 1 1.8 1-.2 1-.3 1 .8 1-.7 1-1.6 1 1.2 1 .6 1-.8 1 1 1-.3 1-1.2 1 1.2 1 .8 1-1 1-.1 1-1.3 1 1.4 1 1 1-.7 1 .3 1-.1 1-1.7 1 1.2 1 .7 1-1.5 1 1.3 1 0 1-1.4 1 1 1 .4 1 .2 1-.5 1-1.2 1 1.3 1 .9 1-1.5 1 .8 1 .1 1-1.7 1 1.3 1 .8 1-.8 1 .9 1-.7 1-1.7 1 1.9 1 .2 1-.7 1 .8 1-.8 1-1.5 1 1.3 1 .8 1 .2 1-.1 1-1.4 1 .9 1 .9 1-1.2 1 .9 1 .2 1-1.3 .9 .6 1 .9 1-.9 1 .3 1-.3 1-1.8 1 .8 1 .6 1 1.1 1-.9 1-.8 1 .7 1 1.1 1-1.2 1 .9 1-.2 1-2.1 1 1.9 1 .5 1-.9 1 .6 1-.5 1-1.1 1 .6 1 .1 1 1.1 1-.1 1-2 1 1.6 1 .6 1-1.4 1 1.4 1-.7 1-1.9 1 2.1 1 .6 1-.9 1 .8 1-.6 1-1.1 1 .4 1 .8 1 .6 1-.8 1-1.9 1 1.7 1 .5 1-.2 1 .8 1-.2 1-2 1 1.2 1 1 1-1.3 1 1.2 1-.5 1-1.6 1 1.1 1-.2 1 1.2 1-.3 1-2.3 1 1.7 1 .8 1-.9 1 .9 1-.6 1-2.3 1 1.6 1 .9 1 .3 1-.1 1-.3 1-1 1 .4 1 .5 1 .4 1-.7 1-.8 1 .9 1 .7 1-.4 1 .1 1 .1 1-1.6 1 1.2 1 .3 1-.7 1 1 1-.2 1-1.6 1 .3 1 .9 1 .4 1-.5 1-1.3 1 1.1 1 .9 1-.6 1 .5 1-.5 1-1.7 1 1.7 1 .1 1 0 1 .1 1-.1 1-.7 1 .2 1-.3 1 1.4 1-.6 1-1.9 1 1.1 1 1.4 1-.4 1 .6 1-1.1 1-1.2 1 1.5 1 .4 1-.8 1 .3 1 .3 1-2.4 1 1.9 1 .4 1 .6 1-.3 1-.7 1 .5 1 .7 1-1 1 .8 1-.7 .9-1.7 1 1.6 1 .6 1-1.1 1 1.1 1-.3 1-1.5 1 1.5 1 .1 1 .5 1-.6 1-.9 1 .4 1 .7 1-.4 1 .6 1-.2 1-1.6 1 .8 1 .8 1-.6 1 .9 1 0 1-1.6 1 1 1-.7 1 1.1 1 .2 1-1.3 1 .6 1 .6 1-.8 1 .8 1-.8 1-1.4 1 1.6 1 .2 1-.1 1 .2 1 .4 1-1.4 1 .1 1 .5 1 .6 1 0 1-1.7 1 .7 1 .8 1-1 1 .8 1 .6 1-1.4 1 .8 1 0 1-.2 1 .6 1-.2 1-1.8 1 1.3 1-.1 1 .5 1 .3 1-2 1 .7 1 1 1-.5 1 .1 1 .7 1 0 0 6.6 -1 0 -1 .7 -1 .1 -1-.5 -1 1 -1 .7 -1-2 -1 .3 -1 .5 -1-.1 -1 1.4 -1-1.9 -1-.2 -1 .6 -1-.3 -1 .1 -1 .8 -1-1.4 -1 .6 -1 .8 -1-1 -1 .9 -1 .7 -1-1.8 -1 0 -1 .5 -1 .6 -1 .1 -1-1.4 -1 .4 -1 .2 -1-.2 -1 .3 -1 1.6 -1-1.4 -1-.8 -1 .8 -1-.9 -1 .6 -1 .7 -1-1.3 -1 .2 -1 1.1 -1-.8 -1 1.1 -1-1.7 -1 0 -1 1 -1-.6 -1 .8 -1 .8 -1-1.7 -1-.2 -1 .6 -1-.4 -1 .8 -1 .4 -1-.9 -1-.6 -1 .5 -1 .1 -1 1.5 -1-1.5 -1-.4 -1 1.2 -1-1.1 -1 .6 -1 1.6 -.9-1.7 -1-.8 -1 .9 -1-1.1 -1 .8 -1 .5 -1-.7 -1-.4 -1 .7 -1 .4 -1 2 -1-2.5 -1 .3 -1 .3 -1-.8 -1 .3 -1 1.6 -1-1.2 -1-1.2 -1 .6 -1-.3 -1 1.4 -1 1.1 -1-1.9 -1-.7 -1 1.6 -1-.3 -1 .1 -1-.7 -1-.1 -1 .1 -1 0 -1 .1 -1 1.7 -1-1.7 -1-.6 -1 .6 -1-.6 -1 .9 -1 1.2 -1-1.4 -1-.5 -1 .3 -1 1.1 -1 .2 -1-1.6 -1-.3 -1 1.1 -1-.8 -1 .4 -1 1.3 -1-1.8 -1 .1 -1 .2 -1-.5 -1 .8 -1 .9 -1-.8 -1-.7 -1 .4 -1 .5 -1 .4 -1-1 -1-.4 -1 0 -1 .3 -1 .9 -1 1.7 -1-2.4 -1-.7 -1 1 -1-.9 -1 .8 -1 1.8 -1-2.4 -1-.4 -1 1.3 -1-.2 -1 1.2 -1-1.7 -1-.6 -1 1.3 -1-1.4 -1 1.1 -1 1.3 -1-2.2 -1-.2 -1 .9 -1-.2 -1 .5 -1 1.8 -1-2 -1-.9 -1 .7 -1 .8 -1 .4 -1-1.1 -1-.6 -1 .8 -1-.9 -1 .6 -1 2.1 -1-1.9 -1-.7 -1 1.4 -1-1.4 -1 .5 -1 1.7 -1-2 -1-.1 -1 1.2 -1 0 -1 .7 -1-1.2 -1-.5 -1 .6 -1-.9 -1 .5 -1 2 -1-2.2 -1-.2 -1 .9 -1-1.3 -1 1.2 -1 .7 -1-.9 -1-.8 -1 1.1 -1 .6 -1 .8 -1-1.8 -1-.3 -1 .3 -1-.9 -1 .9 -.9 .6 -1-1.3 -1 .1 -1 1 -1-1.3 -1 1 -1 1 -1-1.5 -1-.2 -1 .3 -1 .8 -1 1.4 -1-1.6 -1-.9 -1 .9 -1-.8 -1 .3 -1 2 -1-1.8 -1-.7 -1 .9 -1-.9 -1 .9 -1 1.3 -1-1.7 -1 0 -1 .9 -1-1.5 -1 .9 -1 1.4 -1-1.3 -1-.5 -1 .1 -1 .5 -1 1 -1-1.4 -1-.1 -1 1.5 -1-1.7 -1 .8 -1 1.2 -1-1.7 -1-.2 -1 .4 -1-.7 -1 1 -1 1.5 -1-1.4 -1-.1 -1-1 -1 .8 -1 1.2 -1-1.2 -1-.3 -1 1 -1-.8 -1 .6 -1 1.3 -1-1.7 -1-.7 -1 .8 -1-.3 -1-.2 -1 1.8 -1-1.2 -1 .1 -1-.7 -1 .5 -1 1.4 -1-2 -1 .1 -1 .9 -1-1 -1 .1 -1 2.5 -1-2.1 -1-.3 -1 .9 -1-1.3 -1 .2 -1 1.2 -1-.7 -1 .2 -1-1.1 -1 .9 -1 1.7 -1-2.2 -1-.3 -1 1.2 -1-1.7 -1 1.2 -1 .8 -1-1.1 -1-.5 -1 .7 -1-.8 -1 1 -1 1.3 -1-1.4 -1-.1 -1-1 -1 1 -1 1.3 -1-1.8 -1-.2 -1 1.5 -1-1.9 -1 .9 -1 1.8 -1-2.3 -1 .3 -1 1.3 -1-1.2 -1 .6 -1 1 -1-1.7 -1 .4 -1-.8 -1 .2 -1 1.8 -1-1.8 -1-.4 -1 1.2 -1-.7 -1 .8 -1 2 -1-2.6 -1-.7 -1 2.1 -1-1.3 -1 .9 -1 1.6 -1-1.9 -1-.5 -1-.8 -1 1 -1 1.9 -.9-2.2 -1-.3 -1 .1 -1-.7 -1 1.1 -1 .7 -1-.8 -1-.8 -1 1.7 -1-1 -1 .2 -1 1.5 -1-1.7 -1 .8 -1-1.2 -1 .7 -1 2.2 -1-2.4 -1-.8 -1 1.5 -1-1.5 -1 .5 -1 1.6 -1-1.2 -1-1.1 -1 1.2 -1-.7 -1 .6 -1 .9 -1-.7 -1 0 -1-.6 -1 .2 -1 1.9 -1-1.5 -1-1.2 -1 .6 -1-.6 -1 .5 -1 1.4 -1-1.7 -1-.7 -1 .8 -1-1.1 -1 .1 -1 1.3 -1-1.1 -1-.1 -1-1.1 -1 .4 -1 .5 -1-1 -1-.1 -1 .1 -1-.4 -1 .1 -1 0 -1-.3 -1 0 -1 0 -1 0 -1 0 -1 .2 -1-.2 -1 0 -1 0 -1 0 -1 0z" fill="#361b2a"/>
<path d="M707.7 739.4l1 0 1 0 1 0 1 0 1-.1 1 .1 1 0 1 0 1 0 1 0 1-.3 1 .1 1 .1 1-.4 1 .1 1-.2 1-.9 1 .5 1 .4 1-1.1 1 0 1-1.2 1 1.3 1 .1 1-1.1 1 .8 1-.6 1-1.6 1 1.3 1 .4 1-.6 1 .6 1-1.1 1-1.4 1 1.8 1 .2 1-.6 1 0 1-.7 1 .9 1 .6 1-.7 1 1.1 1-1 1-1.2 1 1.5 1 .5 1-1.4 1 1.5 1-.8 1-2.3 1 2.1 1 .7 1-1.2 1 .8 1-1.6 1 1.4 1 .2 1-1 1 1.6 1-.7 1-.8 1 .7 1 1 1-.7 1 .1 1-.2 .9-2.1 1 1.8 1 1 1-.8 1-.5 1-1.8 1 1.6 1 .8 1-1.2 1 1.9 1-.6 1-2.5 1 1.9 1 .7 1-.6 1 1.2 1-.4 1-1.7 1 1.6 1 .3 1-.8 1 .3 1-1.5 1 .9 1 .6 1-1.2 1 1.3 1 .2 1-2.1 1 1.7 1 .9 1-1.9 1 1.5 1-.2 1-1.8 1 1.3 1 1 1-1 1-.1 1-1.3 1 1.2 1 1 1-.8 1 .7 1-.5 1-1 1 .7 1 1.1 1-1.6 1 1.1 1-.2 1-2.1 1 1.6 1 .9 1-1 1 .1 1-.6 1 1.1 1 .2 1-1.2 1 .8 1-.3 1-2 1 2.4 1 .1 1-1 1 .8 1 .2 1-1.9 1 1.3 1 .4 1-.6 1 .1 1-1.2 1 1.8 1-.2 1-.3 1 .8 1-.7 1-1.6 1 1.2 1 .6 1-.8 1 1 1-.3 1-1.2 1 1.2 1 .8 1-1 1-.1 1-1.3 1 1.4 1 1 1-.7 1 .3 1-.1 1-1.7 1 1.2 1 .7 1-1.5 1 1.3 1 0 1-1.4 1 1 1 .4 1 .2 1-.5 1-1.2 1 1.3 1 .9 1-1.5 1 .8 1 .1 1-1.7 1 1.3 1 .8 1-.8 1 .9 1-.7 1-1.7 1 1.9 1 .2 1-.7 1 .8 1-.8 1-1.5 1 1.3 1 .8 1 .2 1-.1 1-1.4 1 .9 1 .9 1-1.2 1 .9 1 .2 1-1.3 .9 .6 1 .9 1-.9 1 .3 1-.3 1-1.8 1 .8 1 .6 1 1.1 1-.9 1-.8 1 .7 1 1.1 1-1.2 1 .9 1-.2 1-2.1 1 1.9 1 .5 1-.9 1 .6 1-.5 1-1.1 1 .6 1 .1 1 1.1 1-.1 1-2 1 1.6 1 .6 1-1.4 1 1.4 1-.7 1-1.9 1 2.1 1 .6 1-.9 1 .8 1-.6 1-1.1 1 .4 1 .8 1 .6 1-.8 1-1.9 1 1.7 1 .5 1-.2 1 .8 1-.2 1-2 1 1.2 1 1 1-1.3 1 1.2 1-.5 1-1.6 1 1.1 1-.2 1 1.2 1-.3 1-2.3 1 1.7 1 .8 1-.9 1 .9 1-.6 1-2.3 1 1.6 1 .9 1 .3 1-.1 1-.3 1-1 1 .4 1 .5 1 .4 1-.7 1-.8 1 .9 1 .7 1-.4 1 .1 1 .1 1-1.6 1 1.2 1 .3 1-.7 1 1 1-.2 1-1.6 1 .3 1 .9 1 .4 1-.5 1-1.3 1 1.1 1 .9 1-.6 1 .5 1-.5 1-1.7 1 1.7 1 .1 1 0 1 .1 1-.1 1-.7 1 .2 1-.3 1 1.4 1-.6 1-1.9 1 1.1 1 1.4 1-.4 1 .6 1-1.1 1-1.2 1 1.5 1 .4 1-.8 1 .3 1 .3 1-2.4 1 1.9 1 .4 1 .6 1-.3 1-.7 1 .5 1 .7 1-1 1 .8 1-.7 .9-1.7 1 1.6 1 .6 1-1.1 1 1.1 1-.3 1-1.5 1 1.5 1 .1 1 .5 1-.6 1-.9 1 .4 1 .7 1-.4 1 .6 1-.2 1-1.6 1 .8 1 .8 1-.6 1 .9 1 0 1-1.6 1 1 1-.7 1 1.1 1 .2 1-1.3 1 .6 1 .6 1-.8 1 .8 1-.8 1-1.4 1 1.6 1 .2 1-.1 1 .2 1 .4 1-1.4 1 .1 1 .5 1 .6 1 0 1-1.7 1 .7 1 .8 1-1 1 .8 1 .6 1-1.4 1 .8 1 0 1-.2 1 .6 1-.2 1-1.8 1 1.3 1-.1 1 .5 1 .3 1-2 1 .7 1 1 1-.5 1 .1 1 .7 1 0 0 6.6 -1 0 -1 .7 -1 .1 -1-.5 -1 1 -1 .7 -1-2 -1 .3 -1 .5 -1-.1 -1 1.4 -1-1.9 -1-.2 -1 .6 -1-.3 -1 .1 -1 .8 -1-1.4 -1 .6 -1 .8 -1-1 -1 .9 -1 .7 -1-1.8 -1 0 -1 .5 -1 .6 -1 .1 -1-1.4 -1 .4 -1 .2 -1-.2 -1 .3 -1 1.6 -1-1.4 -1-.8 -1 .8 -1-.9 -1 .6 -1 .7 -1-1.3 -1 .2 -1 1.1 -1-.8 -1 1.1 -1-1.7 -1 0 -1 1 -1-.6 -1 .8 -1 .8 -1-1.7 -1-.2 -1 .6 -1-.4 -1 .8 -1 .4 -1-.9 -1-.6 -1 .5 -1 .1 -1 1.5 -1-1.5 -1-.4 -1 1.2 -1-1.1 -1 .6 -1 1.6 -.9-1.7 -1-.8 -1 .9 -1-1.1 -1 .8 -1 .5 -1-.7 -1-.4 -1 .7 -1 .4 -1 2 -1-2.5 -1 .3 -1 .3 -1-.8 -1 .3 -1 1.6 -1-1.2 -1-1.2 -1 .6 -1-.3 -1 1.4 -1 1.1 -1-1.9 -1-.7 -1 1.6 -1-.3 -1 .1 -1-.7 -1-.1 -1 .1 -1 0 -1 .1 -1 1.7 -1-1.7 -1-.6 -1 .6 -1-.6 -1 .9 -1 1.2 -1-1.4 -1-.5 -1 .3 -1 1.1 -1 .2 -1-1.6 -1-.3 -1 1.1 -1-.8 -1 .4 -1 1.3 -1-1.8 -1 .1 -1 .2 -1-.5 -1 .8 -1 .9 -1-.8 -1-.7 -1 .4 -1 .5 -1 .4 -1-1 -1-.4 -1 0 -1 .3 -1 .9 -1 1.7 -1-2.4 -1-.7 -1 1 -1-.9 -1 .8 -1 1.8 -1-2.4 -1-.4 -1 1.3 -1-.2 -1 1.2 -1-1.7 -1-.6 -1 1.3 -1-1.4 -1 1.1 -1 1.3 -1-2.2 -1-.2 -1 .9 -1-.2 -1 .5 -1 1.8 -1-2 -1-.9 -1 .7 -1 .8 -1 .4 -1-1.1 -1-.6 -1 .8 -1-.9 -1 .6 -1 2.1 -1-1.9 -1-.7 -1 1.4 -1-1.4 -1 .5 -1 1.7 -1-2 -1-.1 -1 1.2 -1 0 -1 .7 -1-1.2 -1-.5 -1 .6 -1-.9 -1 .5 -1 2 -1-2.2 -1-.2 -1 .9 -1-1.3 -1 1.2 -1 .7 -1-.9 -1-.8 -1 1.1 -1 .6 -1 .8 -1-1.8 -1-.3 -1 .3 -1-.9 -1 .9 -.9 .6 -1-1.3 -1 .1 -1 1 -1-1.3 -1 1 -1 1 -1-1.5 -1-.2 -1 .3 -1 .8 -1 1.4 -1-1.6 -1-.9 -1 .9 -1-.8 -1 .3 -1 2 -1-1.8 -1-.7 -1 .9 -1-.9 -1 .9 -1 1.3 -1-1.7 -1 0 -1 .9 -1-1.5 -1 .9 -1 1.4 -1-1.3 -1-.5 -1 .1 -1 .5 -1 1 -1-1.4 -1-.1 -1 1.5 -1-1.7 -1 .8 -1 1.2 -1-1.7 -1-.2 -1 .4 -1-.7 -1 1 -1 1.5 -1-1.4 -1-.1 -1-1 -1 .8 -1 1.2 -1-1.2 -1-.3 -1 1 -1-.8 -1 .6 -1 1.3 -1-1.7 -1-.7 -1 .8 -1-.3 -1-.2 -1 1.8 -1-1.2 -1 .1 -1-.7 -1 .5 -1 1.4 -1-2 -1 .1 -1 .9 -1-1 -1 .1 -1 2.5 -1-2.1 -1-.3 -1 .9 -1-1.3 -1 .2 -1 1.2 -1-.7 -1 .2 -1-1.1 -1 .9 -1 1.7 -1-2.2 -1-.3 -1 1.2 -1-1.7 -1 1.2 -1 .8 -1-1.1 -1-.5 -1 .7 -1-.8 -1 1 -1 1.3 -1-1.4 -1-.1 -1-1 -1 1 -1 1.3 -1-1.8 -1-.2 -1 1.5 -1-1.9 -1 .9 -1 1.8 -1-2.3 -1 .3 -1 1.3 -1-1.2 -1 .6 -1 1 -1-1.7 -1 .4 -1-.8 -1 .2 -1 1.8 -1-1.8 -1-.4 -1 1.2 -1-.7 -1 .8 -1 2 -1-2.6 -1-.7 -1 2.1 -1-1.3 -1 .9 -1 1.6 -1-1.9 -1-.5 -1-.8 -1 1 -1 1.9 -.9-2.2 -1-.3 -1 .1 -1-.7 -1 1.1 -1 .7 -1-.8 -1-.8 -1 1.7 -1-1 -1 .2 -1 1.5 -1-1.7 -1 .8 -1-1.2 -1 .7 -1 2.2 -1-2.4 -1-.8 -1 1.5 -1-1.5 -1 .5 -1 1.6 -1-1.2 -1-1.1 -1 1.2 -1-.7 -1 .6 -1 .9 -1-.7 -1 0 -1-.6 -1 .2 -1 1.9 -1-1.5 -1-1.2 -1 .6 -1-.6 -1 .5 -1 1.4 -1-1.7 -1-.7 -1 .8 -1-1.1 -1 .1 -1 1.3 -1-1.1 -1-.1 -1-1.1 -1 .4 -1 .5 -1-1 -1-.1 -1 .1 -1-.4 -1 .1 -1 0 -1-.3 -1 0 -1 0 -1 0 -1 0 -1 .2 -1-.2 -1 0 -1 0 -1 0 -1 0z" fill="#361b2a"/>
<path d="M707.4 709.4H747.4L707.4 749.8Z" fill="rgba(0,0,0,0.09)"/>
<svg x="707.4" y="691" width="407.8" height="18"><text x="3.8" y="14.1" font-size="11" letter-spacing="0.55" fill="rgba(0,0,0,0.75)" stroke="rgba(0,0,0,0.75)" stroke-width="0.2">Patterning2 Beat</text></svg>
<rect x="1115.7" y="691" width="289.6" height="58.8" fill="#e554a0"/>
<rect x="1115.7" y="708.4" width="289.6" height="1" fill="rgba(0,0,0,0.12)"/>
<path d="M1121.4 709.4V749.8M1127.1 709.4V749.8M1132.7 709.4V749.8M1138.4 709.4V749.8M1144.1 709.4V749.8M1149.7 709.4V749.8M1155.4 709.4V749.8M1161.1 709.4V749.8M1166.7 709.4V749.8M1172.4 709.4V749.8M1178.1 709.4V749.8M1183.7 709.4V749.8M1189.4 709.4V749.8M1195.1 709.4V749.8M1200.7 709.4V749.8M1206.4 709.4V749.8M1212.1 709.4V749.8M1217.7 709.4V749.8M1223.4 709.4V749.8M1229.1 709.4V749.8M1234.7 709.4V749.8M1240.4 709.4V749.8M1246.1 709.4V749.8M1251.7 709.4V749.8M1257.4 709.4V749.8M1263.1 709.4V749.8M1268.7 709.4V749.8M1274.4 709.4V749.8M1280.1 709.4V749.8M1285.7 709.4V749.8M1291.4 709.4V749.8M1297.1 709.4V749.8M1302.7 709.4V749.8M1308.4 709.4V749.8M1314.1 709.4V749.8M1319.7 709.4V749.8M1325.4 709.4V749.8M1331.1 709.4V749.8M1336.7 709.4V749.8M1342.4 709.4V749.8M1348.1 709.4V749.8M1353.7 709.4V749.8M1359.4 709.4V749.8M1365.1 709.4V749.8M1370.7 709.4V749.8M1376.4 709.4V749.8M1382.1 709.4V749.8M1387.7 709.4V749.8M1393.4 709.4V749.8M1399.1 709.4V749.8M1404.7 709.4V749.8" stroke="rgba(0,0,0,0.12)" stroke-width="1"/>
<path d="M1116 717.1l1-.5 1-.1 1 0 1-2.7 1 2.1 1 .6 1-1.2 1 1.5 1-.5 1-1.5 1 1.3 1 .5 1-.9 1 .5 1-2 1 1.5 1 .7 1-.8 1 1.4 1-1 1-1.6 1 1.2 1 1.3 1-1.6 1 1.7 1-.8 1-2.1 1 1.8 1 .8 1-.4 1-.1 1-2.1 1 1.9 1 .2 .9-1 1 1.4 1-.3 1-1.8 1 1.5 1 .2 1-.9 1 1.3 1-.4 1-1.8 1 1.3 1 .8 1-.2 1-.3 1-1.4 1 1.8 1 .6 1-1.5 1 1 1-.9 1-1.1 1 1.6 1 .2 1-.4 1 .8 1-.7 1-.9 1 1 1 .8 1-1.9 1 .9 1-1.9 1 2.1 1 .3 1-1.1 1 1.1 1-.5 1-1.3 1 1.1 1 .8 1-.6 1 .7 1-.2 1-1.3 1 .6 1 1.4 1-1.3 1 .3 1-1.8 1 1.7 1 1 1-1.5 1 1 1 .4 1-1.4 1 .9 1 .5 1-1.2 1 1.4 1-.5 1-1.4 1 .7 1 .7 1-.4 1 .5 1-2 1 2 1 0 .9-1.3 1 1.3 1-.9 1-1.5 1 1.4 1 1.2 1-.8 1 .6 1-.6 1-1.4 1 1.7 1 .2 1-1 1 .7 1-1.7 1 1.1 1 1.4 1-1.5 1 1.2 1-.7 1-1 1 .7 1 1 1-.7 1 .6 1-.7 1-2.2 1 1.6 1 .9 1 0 1-.3 1-1.1 1 .9 1 .3 1-.1 1 .7 1-.4 1-1.1 1 1.1 1 .5 1-.8 1 .5 1-.9 1-1.3 1 1.6 1 0 1-.3 1 1.1 1-.3 1-1.6 1 .3 1 0 1 1.4 1-.5 1-2 1 1.6 1 .7 1-.5 1 .7 1-.1 1-2.2 1 1.5 1 .4 1-.8 1 .9 1-.5 1-1.2 1 1.4 .9 0 1 .8 1-1 1-1.5 1 1.3 1 .4 1 .2 1 .8 1-.5 1-1.8 1 .6 1 1.2 1-.2 1 .4 1 0 1-.9 1 .4 1-.1 1 .2 1-.5 1-1.4 1 1.4 1 .4 1-.4 1 .7 1-.4 1-1.2 1 1.2 1 .8 1-1.1 1 .2 1 .6 1-1.9 1 .5 1 .7 1 .6 1 .1 1-1.5 1 .6 1 .9 1-.6 1 .9 1-.1 1-1 1 .2 1 .8 1-1.6 1 1.4 1-.3 1-.8 1 .2 1 .3 1 .5 1 .3 1-1.8 1 .7 1 .6 1-.4 1 .5 1-.1 1-.7 1 0 1 1.2 1-.7 1-.2 1 .1 1-1.2 1 0 .9 1.9 1-.4 1 .2 1-1.9 1 1.1 1 .9 1-.7 1 .4 1 0 1-.8 1 .5 1 .7 1-.8 1 .5 1-.4 1-1.1 1 .8 1 .5 1 .6 1-.6 1-.8 1-.3 1 1.2 1-.5 1 .2 1 0 1-1.3 1 1.2 1 .9 1-.3 1 .1 1 0 1-1.2 1 .7 1-.2 0 8.2 -1-.2 -1 .7 -1-1.3 -1 .1 -1 0 -1-.2 -1 .9 -1 1.2 -1-1.3 -1 0 -1 .2 -1-.6 -1 1.3 -1-.3 -1-.8 -1-.7 -1 .7 -1 .5 -1 .9 -1-1.2 -1-.4 -1 .5 -1-.8 -1 .7 -1 .5 -1-.8 -1 0 -1 .4 -1-.7 -1 1 -1 1.1 -1-2 -1 .2 -1-.4 -.9 1.9 -1 0 -1-1.2 -1 .1 -1-.2 -1-.8 -1 1.3 -1 .1 -1-.9 -1 0 -1 .5 -1-.4 -1 .6 -1 .7 -1-1.8 -1 .3 -1 .5 -1 .3 -1 .3 -1-.9 -1-.3 -1 1.4 -1-1.6 -1 .8 -1 .2 -1-1 -1-.1 -1 .9 -1-.6 -1 .9 -1 .7 -1-1.6 -1 0 -1 .7 -1 .7 -1 .5 -1-2 -1 .6 -1 .3 -1-1.1 -1 .8 -1 1.2 -1-1.2 -1-.4 -1 .7 -1-.4 -1 .5 -1 1.3 -1-1.4 -1-.6 -1 .3 -1-.1 -1 .4 -1-.9 -1 0 -1 .4 -1-.2 -1 1.2 -1 .6 -1-1.8 -1-.5 -1 .8 -1 .2 -1 .4 -1 1.3 -1-1.4 -1-1.1 -1 .8 -.9 0 -1 1.5 -1-1.3 -1-.6 -1 1.1 -1-1 -1 .5 -1 1.6 -1-2.4 -1-.1 -1 .8 -1-.5 -1 .7 -1 1.7 -1-2.1 -1-.5 -1 1.4 -1 0 -1 .4 -1-1.7 -1-.3 -1 1.1 -1-.3 -1 0 -1 1.7 -1-1.4 -1-1 -1 .6 -1-.9 -1 .6 -1 1.2 -1-1.2 -1-.5 -1 .8 -1-.1 -1 .3 -1 1 -1-1.2 -1-.3 -1-.1 -1 1 -1 1.7 -1-2.3 -1-.8 -1 .7 -1-.8 -1 1.1 -1 .7 -1-1.1 -1-.6 -1 1.2 -1-1.5 -1 1.4 -1 1.1 -1-1.7 -1 .7 -1-1 -1 .1 -1 1.9 -1-1.5 -1-.7 -1 .7 -1-.9 -1 1.4 -1 1.4 -1-1.6 -1-1 -1 1.4 -.9-1.3 -1 0 -1 2 -1-2.1 -1 .5 -1-.3 -1 .7 -1 .7 -1-1.5 -1-.5 -1 1.5 -1-1.2 -1 .5 -1 .9 -1-1.5 -1 .4 -1 1.1 -1-1.5 -1 .9 -1 1.9 -1-1.9 -1 .3 -1-1.3 -1 1.4 -1 .7 -1-1.4 -1-.3 -1 .8 -1-.7 -1 .9 -1 1.2 -1-1.4 -1-.5 -1 1.2 -1-1.2 -1 .3 -1 2.2 -1-2 -1 .9 -1-2 -1 .9 -1 1 -1-.9 -1-.7 -1 .8 -1-.4 -1 .2 -1 1.7 -1-1.2 -1-.9 -1 1 -1-1.5 -1 .6 -1 1.8 -1-1.4 -1-.3 -1-.2 -1 .8 -1 1.4 -1-1.9 -1-.5 -1 1.4 -1-1 -1 .3 -1 1.6 -1-2 -1-.2 -1 1.5 -.9-1.2 -1 .3 -1 2 -1-2.2 -1-.1 -1-.5 -1 .8 -1 1.9 -1-2.1 -1-.9 -1 1.8 -1-1.7 -1 1.4 -1 1.2 -1-1.6 -1-1 -1 1.4 -1-.8 -1 .7 -1 1.5 -1-2.1 -1 .6 -1-.9 -1 .4 -1 1.5 -1-1.7 -1-.5 -1 1.7 -1-1.3 -1 .6 -1 2.2 -1-2.9 -1 0 -1-.1 -1-.5z" fill="#361b2a"/>
<path d="M1116 737.3l1-.5 1-.1 1 0 1-2.7 1 2.1 1 .6 1-1.2 1 1.5 1-.5 1-1.5 1 1.3 1 .5 1-.9 1 .5 1-2 1 1.5 1 .7 1-.8 1 1.4 1-1 1-1.6 1 1.2 1 1.3 1-1.6 1 1.7 1-.8 1-2.1 1 1.8 1 .8 1-.4 1-.1 1-2.1 1 1.9 1 .2 .9-1 1 1.4 1-.3 1-1.8 1 1.5 1 .2 1-.9 1 1.3 1-.4 1-1.8 1 1.3 1 .8 1-.2 1-.3 1-1.4 1 1.8 1 .6 1-1.5 1 1 1-.9 1-1.1 1 1.6 1 .2 1-.4 1 .8 1-.7 1-.9 1 1 1 .8 1-1.9 1 .9 1-1.9 1 2.1 1 .3 1-1.1 1 1.1 1-.5 1-1.3 1 1.1 1 .8 1-.6 1 .7 1-.2 1-1.3 1 .6 1 1.4 1-1.3 1 .3 1-1.8 1 1.7 1 1 1-1.5 1 1 1 .4 1-1.4 1 .9 1 .5 1-1.2 1 1.4 1-.5 1-1.4 1 .7 1 .7 1-.4 1 .5 1-2 1 2 1 0 .9-1.3 1 1.3 1-.9 1-1.5 1 1.4 1 1.2 1-.8 1 .6 1-.6 1-1.4 1 1.7 1 .2 1-1 1 .7 1-1.7 1 1.1 1 1.4 1-1.5 1 1.2 1-.7 1-1 1 .7 1 1 1-.7 1 .6 1-.7 1-2.2 1 1.6 1 .9 1 0 1-.3 1-1.1 1 .9 1 .3 1-.1 1 .7 1-.4 1-1.1 1 1.1 1 .5 1-.8 1 .5 1-.9 1-1.3 1 1.6 1 0 1-.3 1 1.1 1-.3 1-1.6 1 .3 1 0 1 1.4 1-.5 1-2 1 1.6 1 .7 1-.5 1 .7 1-.1 1-2.2 1 1.5 1 .4 1-.8 1 .9 1-.5 1-1.2 1 1.4 .9 0 1 .8 1-1 1-1.5 1 1.3 1 .4 1 .2 1 .8 1-.5 1-1.8 1 .6 1 1.2 1-.2 1 .4 1 0 1-.9 1 .4 1-.1 1 .2 1-.5 1-1.4 1 1.4 1 .4 1-.4 1 .7 1-.4 1-1.2 1 1.2 1 .8 1-1.1 1 .2 1 .6 1-1.9 1 .5 1 .7 1 .6 1 .1 1-1.5 1 .6 1 .9 1-.6 1 .9 1-.1 1-1 1 .2 1 .8 1-1.6 1 1.4 1-.3 1-.8 1 .2 1 .3 1 .5 1 .3 1-1.8 1 .7 1 .6 1-.4 1 .5 1-.1 1-.7 1 0 1 1.2 1-.7 1-.2 1 .1 1-1.2 1 0 .9 1.9 1-.4 1 .2 1-1.9 1 1.1 1 .9 1-.7 1 .4 1 0 1-.8 1 .5 1 .7 1-.8 1 .5 1-.4 1-1.1 1 .8 1 .5 1 .6 1-.6 1-.8 1-.3 1 1.2 1-.5 1 .2 1 0 1-1.3 1 1.2 1 .9 1-.3 1 .1 1 0 1-1.2 1 .7 1-.2 0 8.2 -1-.2 -1 .7 -1-1.3 -1 .1 -1 0 -1-.2 -1 .9 -1 1.2 -1-1.3 -1 0 -1 .2 -1-.6 -1 1.3 -1-.3 -1-.8 -1-.7 -1 .7 -1 .5 -1 .9 -1-1.2 -1-.4 -1 .5 -1-.8 -1 .7 -1 .5 -1-.8 -1 0 -1 .4 -1-.7 -1 1 -1 1.1 -1-2 -1 .2 -1-.4 -.9 1.9 -1 0 -1-1.2 -1 .1 -1-.2 -1-.8 -1 1.3 -1 .1 -1-.9 -1 0 -1 .5 -1-.4 -1 .6 -1 .7 -1-1.8 -1 .3 -1 .5 -1 .3 -1 .3 -1-.9 -1-.3 -1 1.4 -1-1.6 -1 .8 -1 .2 -1-1 -1-.1 -1 .9 -1-.6 -1 .9 -1 .7 -1-1.6 -1 0 -1 .7 -1 .7 -1 .5 -1-2 -1 .6 -1 .3 -1-1.1 -1 .8 -1 1.2 -1-1.2 -1-.4 -1 .7 -1-.4 -1 .5 -1 1.3 -1-1.4 -1-.6 -1 .3 -1-.1 -1 .4 -1-.9 -1 0 -1 .4 -1-.2 -1 1.2 -1 .6 -1-1.8 -1-.5 -1 .8 -1 .2 -1 .4 -1 1.3 -1-1.4 -1-1.1 -1 .8 -.9 0 -1 1.5 -1-1.3 -1-.6 -1 1.1 -1-1 -1 .5 -1 1.6 -1-2.4 -1-.1 -1 .8 -1-.5 -1 .7 -1 1.7 -1-2.1 -1-.5 -1 1.4 -1 0 -1 .4 -1-1.7 -1-.3 -1 1.1 -1-.3 -1 0 -1 1.7 -1-1.4 -1-1 -1 .6 -1-.9 -1 .6 -1 1.2 -1-1.2 -1-.5 -1 .8 -1-.1 -1 .3 -1 1 -1-1.2 -1-.3 -1-.1 -1 1 -1 1.7 -1-2.3 -1-.8 -1 .7 -1-.8 -1 1.1 -1 .7 -1-1.1 -1-.6 -1 1.2 -1-1.5 -1 1.4 -1 1.1 -1-1.7 -1 .7 -1-1 -1 .1 -1 1.9 -1-1.5 -1-.7 -1 .7 -1-.9 -1 1.4 -1 1.4 -1-1.6 -1-1 -1 1.4 -.9-1.3 -1 0 -1 2 -1-2.1 -1 .5 -1-.3 -1 .7 -1 .7 -1-1.5 -1-.5 -1 1.5 -1-1.2 -1 .5 -1 .9 -1-1.5 -1 .4 -1 1.1 -1-1.5 -1 .9 -1 1.9 -1-1.9 -1 .3 -1-1.3 -1 1.4 -1 .7 -1-1.4 -1-.3 -1 .8 -1-.7 -1 .9 -1 1.2 -1-1.4 -1-.5 -1 1.2 -1-1.2 -1 .3 -1 2.2 -1-2 -1 .9 -1-2 -1 .9 -1 1 -1-.9 -1-.7 -1 .8 -1-.4 -1 .2 -1 1.7 -1-1.2 -1-.9 -1 1 -1-1.5 -1 .6 -1 1.8 -1-1.4 -1-.3 -1-.2 -1 .8 -1 1.4 -1-1.9 -1-.5 -1 1.4 -1-1 -1 .3 -1 1.6 -1-2 -1-.2 -1 1.5 -.9-1.2 -1 .3 -1 2 -1-2.2 -1-.1 -1-.5 -1 .8 -1 1.9 -1-2.1 -1-.9 -1 1.8 -1-1.7 -1 1.4 -1 1.2 -1-1.6 -1-1 -1 1.4 -1-.8 -1 .7 -1 1.5 -1-2.1 -1 .6 -1-.9 -1 .4 -1 1.5 -1-1.7 -1-.5 -1 1.7 -1-1.3 -1 .6 -1 2.2 -1-2.9 -1 0 -1-.1 -1-.5z" fill="#361b2a"/>
<svg x="1115.7" y="691" width="289.1" height="18"><text x="3.8" y="14.1" font-size="11" letter-spacing="0.55" fill="rgba(0,0,0,0.75)" stroke="rgba(0,0,0,0.75)" stroke-width="0.2">Patterning2 Beat</text></svg>
<rect x="1388" y="719.4" width="17" height="0.9" fill="#361b2a"/><rect x="1388" y="739.6" width="17" height="0.9" fill="#361b2a"/>
<rect x="707.4" y="751.8" width="408.3" height="58.9" fill="#e554a0"/>
<rect x="707.4" y="769.2" width="408.3" height="1" fill="rgba(0,0,0,0.12)"/>
<path d="M713.4 770.2V810.6M719 770.2V810.6M724.7 770.2V810.6M730.4 770.2V810.6M736 770.2V810.6M741.7 770.2V810.6M747.4 770.2V810.6M753 770.2V810.6M758.7 770.2V810.6M764.4 770.2V810.6M770 770.2V810.6M775.7 770.2V810.6M781.4 770.2V810.6M787 770.2V810.6M792.7 770.2V810.6M798.4 770.2V810.6M804 770.2V810.6M809.7 770.2V810.6M815.4 770.2V810.6M821 770.2V810.6M826.7 770.2V810.6M832.4 770.2V810.6M838 770.2V810.6M843.7 770.2V810.6M849.4 770.2V810.6M855 770.2V810.6M860.7 770.2V810.6M866.4 770.2V810.6M872.1 770.2V810.6M877.7 770.2V810.6M883.4 770.2V810.6M889.1 770.2V810.6M894.7 770.2V810.6M900.4 770.2V810.6M906.1 770.2V810.6M911.7 770.2V810.6M917.4 770.2V810.6M923.1 770.2V810.6M928.7 770.2V810.6M934.4 770.2V810.6M940.1 770.2V810.6M945.7 770.2V810.6M951.4 770.2V810.6M957.1 770.2V810.6M962.7 770.2V810.6M968.4 770.2V810.6M974.1 770.2V810.6M979.7 770.2V810.6M985.4 770.2V810.6M991.1 770.2V810.6M996.7 770.2V810.6M1002.4 770.2V810.6M1008.1 770.2V810.6M1013.7 770.2V810.6M1019.4 770.2V810.6M1025.1 770.2V810.6M1030.7 770.2V810.6M1036.4 770.2V810.6M1042.1 770.2V810.6M1047.7 770.2V810.6M1053.4 770.2V810.6M1059.1 770.2V810.6M1064.7 770.2V810.6M1070.4 770.2V810.6M1076.1 770.2V810.6M1081.7 770.2V810.6M1087.4 770.2V810.6M1093.1 770.2V810.6M1098.7 770.2V810.6M1104.4 770.2V810.6M1110.1 770.2V810.6" stroke="rgba(0,0,0,0.12)" stroke-width="1"/>
<path d="M707.7 780l1 0 1 0 1 0 1 0 1 0 1 0 1 0 1 0 1 0 1 0 1 0 1 0 1 0 1 0 1 0 1 0 1 0 1 0 1 0 1 0 1 0 1 0 1 0 1 0 1 0 1 0 1 0 1 0 1 0 1 0 1 0 1 0 1 0 1 0 1 0 1 0 1 0 1 0 1 0 1 0 1 0 1 0 1 0 1 0 1 0 1 0 1 0 1 0 1 0 1 0 1 0 1 0 1 0 1 0 1 0 1 0 1 0 1 0 1 0 1 0 1 0 1 0 1 0 1 0 1 0 1 0 1 0 .9 0 1 0 1 0 1 0 1 0 1 0 1 0 1 0 1 0 1 0 1 0 1 0 1 0 1 0 1 0 1 0 1 0 1 0 1 0 1 0 1 0 1 0 1 0 1 0 1 0 1 0 1 0 1 0 1 0 1 0 1 0 1 0 1 0 1 0 1 0 1 0 1 0 1 0 1 0 1 0 1 0 1 0 1 0 1 0 1 0 1 0 1 0 1 0 1 0 1 0 1 0 1 0 1 0 1 0 1 0 1 0 1 0 1 0 1 0 1 0 1 0 1 0 1 0 1 0 1 0 1 0 1 0 1 0 1 0 1 0 1 0 1 0 1 0 1 0 1 0 1 0 1 0 1 0 1 0 1 0 1 0 1 0 1 0 1 0 1 0 1 0 1 0 1 0 1 0 1 0 1 0 1 0 1 0 1 0 1 0 1 0 1 0 1 0 1 0 1 0 1 0 1 0 1 0 1 0 1 0 1 0 1 0 1 0 1 0 1 0 1 0 1 0 1 0 1 0 1 0 1 0 1 0 1 0 1 0 1 0 1 0 1 0 1 0 1 0 1 0 1 0 1 0 1 0 1 0 1 0 1 0 1 0 1 0 1 0 1 0 1 0 1 0 .9 0 1 0 1 0 1 0 1 0 1 0 1 0 1 0 1 0 1 0 1 0 1 0 1 0 1 0 1 0 1 0 1 0 1 0 1 0 1 0 1 0 1 0 1 0 1 0 1 0 1 0 1 0 1 0 1 0 1 0 1 0 1 0 1 0 1 0 1 0 1 0 1 0 1 0 1 0 1 0 1 0 1 0 1 0 1 0 1 0 1 0 1 0 1 0 1 0 1 0 1 0 1 0 1 0 1 0 1 0 1-1.4 1-.6 1 .4 1 0 1 1.6 1 0 1 0 1 0 1 0 1 0 1 0 1 0 1 0 1 0 1-.2 1-1 1-.1 1-.3 1-1 1 .4 1 .3 1-1.3 1 .4 1 .6 1 .2 1 .1 1-.8 1 .3 1 .9 1-.6 1 .3 1-.4 1-.7 1 .8 1 .3 1-.7 1 .7 1-.5 1-1.5 1 .9 1 .9 1-.9 1 1.1 1-1.3 1 1 1 .2 1-.4 1 .6 1-.1 1-1.2 1 .3 1 1 1-.6 1 0 1 .2 1-.9 1 .8 1 .3 1 0 1-.4 1-1.2 1 .9 1 .9 1-.7 1 .4 1-.1 1-1.3 1 .8 1 .7 1-.1 1 .3 1-.2 1-.8 1 .1 1 .9 1-.7 1 .3 1-1.2 1 .8 1 .6 .9-.4 1 .5 1-.5 1-.8 1 1 1 .4 1-.3 1 .1 1 0 1-1 1 .3 1 .7 1 0 1-.3 1-.9 1 1 1 .3 1-.9 1 .8 1-.1 1-.9 1 .5 1 .6 1-.4 1 .3 1 .1 1-.8 1 .5 1 .2 1-.3 1-.3 1-.4 1 .4 1 .7 1-.9 1 .9 1-.1 1-.7 1 .4 1 .6 1-.3 1 0 1-.2 1-1.4 1 1.2 1 .5 1-.2 1-.1 1-.5 1-.1 1 1 1-.6 1 .4 1 .1 1-.9 1 .7 1 .1 1-.5 1 .8 1-.3 1-1.2 1 .7 1 .9 1-.3 1 0 1-.9 1 .2 1 .9 1-.4 0 5.3 -1-.4 -1 1 -1 .2 -1-1 -1 0 -1-.3 -1 .9 -1 .8 -1-1.3 -1-.3 -1 .9 -1-.6 -1 .1 -1 .8 -1-.9 -1 0 -1 .5 -1-.7 -1 1 -1 0 -1-.5 -1-.2 -1-.2 -1 .5 -1 1.3 -1-1.5 -1-.2 -1 0 -1-.3 -1 .7 -1 .4 -1-.7 -1-.2 -1 1 -1-1 -1 .7 -1 .5 -1-.5 -1-.3 -1-.3 -1 .2 -1 .6 -1-.9 -1 .2 -1 .3 -1-.5 -1 .6 -1 .5 -1-.9 -1-.1 -1 .9 -1-.9 -1 .3 -1 1 -1-1 -1-.3 -1 0 -1 .7 -1 .3 -1-1 -1 0 -1 .1 -1-.3 -1 .4 -1 1.1 -1-.9 -1-.5 -1 .6 -.9-.5 -1 .7 -1 .8 -1-1.2 -1 .2 -1-.7 -1 .9 -1 .2 -1-.9 -1-.2 -1 .3 -1-.1 -1 .8 -1 .8 -1-1.4 -1-.1 -1 .4 -1-.7 -1 .9 -1 1 -1-1.3 -1-.4 -1 0 -1 .3 -1 .9 -1-.9 -1 .2 -1-.1 -1-.6 -1 1.1 -1 .3 -1-1.3 -1-.1 -1 .6 -1-.3 -1 .2 -1 1 -1-1.4 -1 1.2 -1-1 -1 1 -1 .9 -1-1.6 -1-.5 -1 .8 -1-.8 -1 .3 -1 .9 -1-.8 -1-.3 -1 .2 -1-.6 -1 1 -1 .2 -1-.7 -1 0 -1 .3 -1 .6 -1 .4 -1-1.3 -1 .3 -1 .4 -1-1.1 -1-.3 -1-.1 -1-1.1 -1-.2 -1 0 -1 0 -1 0 -1 0 -1 0 -1 0 -1 0 -1 0 -1 0 -1 1.7 -1 0 -1 .4 -1-.6 -1-1.5 -1 0 -1 0 -1 0 -1 0 -1 0 -1 0 -1 0 -1 0 -1 0 -1 0 -1 0 -1 0 -1 0 -1 0 -1 0 -1 0 -1 0 -1 0 -1 0 -1 0 -1 0 -1 0 -1 0 -1 0 -1 0 -1 0 -1 0 -1 0 -1 0 -1 0 -1 0 -1 0 -1 0 -1 0 -1 0 -1 0 -1 0 -1 0 -1 0 -1 0 -1 0 -1 0 -1 0 -1 0 -1 0 -1 0 -1 0 -1 0 -1 0 -1 0 -1 0 -1 0 -1 0 -1 0 -.9 0 -1 0 -1 0 -1 0 -1 0 -1 0 -1 0 -1 0 -1 0 -1 0 -1 0 -1 0 -1 0 -1 0 -1 0 -1 0 -1 0 -1 0 -1 0 -1 0 -1 0 -1 0 -1 0 -1 0 -1 0 -1 0 -1 0 -1 0 -1 0 -1 0 -1 0 -1 0 -1 0 -1 0 -1 0 -1 0 -1 0 -1 0 -1 0 -1 0 -1 0 -1 0 -1 0 -1 0 -1 0 -1 0 -1 0 -1 0 -1 0 -1 0 -1 0 -1 0 -1 0 -1 0 -1 0 -1 0 -1 0 -1 0 -1 0 -1 0 -1 0 -1 0 -1 0 -1 0 -1 0 -1 0 -1 0 -1 0 -1 0 -1 0 -1 0 -1 0 -1 0 -1 0 -1 0 -1 0 -1 0 -1 0 -1 0 -1 0 -1 0 -1 0 -1 0 -1 0 -1 0 -1 0 -1 0 -1 0 -1 0 -1 0 -1 0 -1 0 -1 0 -1 0 -1 0 -1 0 -1 0 -1 0 -1 0 -1 0 -1 0 -1 0 -1 0 -1 0 -1 0 -1 0 -1 0 -1 0 -1 0 -1 0 -1 0 -1 0 -1 0 -1 0 -1 0 -1 0 -1 0 -1 0 -1 0 -1 0 -1 0 -1 0 -1 0 -1 0 -1 0 -1 0 -1 0 -1 0 -1 0 -1 0 -1 0 -1 0 -1 0 -1 0 -1 0 -1 0 -1 0 -.9 0 -1 0 -1 0 -1 0 -1 0 -1 0 -1 0 -1 0 -1 0 -1 0 -1 0 -1 0 -1 0 -1 0 -1 0 -1 0 -1 0 -1 0 -1 0 -1 0 -1 0 -1 0 -1 0 -1 0 -1 0 -1 0 -1 0 -1 0 -1 0 -1 0 -1 0 -1 0 -1 0 -1 0 -1 0 -1 0 -1 0 -1 0 -1 0 -1 0 -1 0 -1 0 -1 0 -1 0 -1 0 -1 0 -1 0 -1 0 -1 0 -1 0 -1 0 -1 0 -1 0 -1 0 -1 0 -1 0 -1 0 -1 0 -1 0 -1 0 -1 0 -1 0 -1 0 -1 0 -1 0 -1 0 -1 0 -1 0z" fill="#361b2a"/>
<path d="M707.7 800.2l1 0 1 0 1 0 1 0 1 0 1 0 1 0 1 0 1 0 1 0 1 0 1 0 1 0 1 0 1 0 1 0 1 0 1 0 1 0 1 0 1 0 1 0 1 0 1 0 1 0 1 0 1 0 1 0 1 0 1 0 1 0 1 0 1 0 1 0 1 0 1 0 1 0 1 0 1 0 1 0 1 0 1 0 1 0 1 0 1 0 1 0 1 0 1 0 1 0 1 0 1 0 1 0 1 0 1 0 1 0 1 0 1 0 1 0 1 0 1 0 1 0 1 0 1 0 1 0 1 0 1 0 1 0 .9 0 1 0 1 0 1 0 1 0 1 0 1 0 1 0 1 0 1 0 1 0 1 0 1 0 1 0 1 0 1 0 1 0 1 0 1 0 1 0 1 0 1 0 1 0 1 0 1 0 1 0 1 0 1 0 1 0 1 0 1 0 1 0 1 0 1 0 1 0 1 0 1 0 1 0 1 0 1 0 1 0 1 0 1 0 1 0 1 0 1 0 1 0 1 0 1 0 1 0 1 0 1 0 1 0 1 0 1 0 1 0 1 0 1 0 1 0 1 0 1 0 1 0 1 0 1 0 1 0 1 0 1 0 1 0 1 0 1 0 1 0 1 0 1 0 1 0 1 0 1 0 1 0 1 0 1 0 1 0 1 0 1 0 1 0 1 0 1 0 1 0 1 0 1 0 1 0 1 0 1 0 1 0 1 0 1 0 1 0 1 0 1 0 1 0 1 0 1 0 1 0 1 0 1 0 1 0 1 0 1 0 1 0 1 0 1 0 1 0 1 0 1 0 1 0 1 0 1 0 1 0 1 0 1 0 1 0 1 0 1 0 1 0 1 0 1 0 1 0 1 0 1 0 1 0 1 0 1 0 1 0 1 0 1 0 1 0 1 0 1 0 1 0 .9 0 1 0 1 0 1 0 1 0 1 0 1 0 1 0 1 0 1 0 1 0 1 0 1 0 1 0 1 0 1 0 1 0 1 0 1 0 1 0 1 0 1 0 1 0 1 0 1 0 1 0 1 0 1 0 1 0 1 0 1 0 1 0 1 0 1 0 1 0 1 0 1 0 1 0 1 0 1 0 1 0 1 0 1 0 1 0 1 0 1 0 1 0 1 0 1 0 1 0 1 0 1 0 1 0 1 0 1 0 1-1.4 1-.6 1 .4 1 0 1 1.6 1 0 1 0 1 0 1 0 1 0 1 0 1 0 1 0 1 0 1-.2 1-1 1-.1 1-.3 1-1 1 .4 1 .3 1-1.3 1 .4 1 .6 1 .2 1 .1 1-.8 1 .3 1 .9 1-.6 1 .3 1-.4 1-.7 1 .8 1 .3 1-.7 1 .7 1-.5 1-1.5 1 .9 1 .9 1-.9 1 1.1 1-1.3 1 1 1 .2 1-.4 1 .6 1-.1 1-1.2 1 .3 1 1 1-.6 1 0 1 .2 1-.9 1 .8 1 .3 1 0 1-.4 1-1.2 1 .9 1 .9 1-.7 1 .4 1-.1 1-1.3 1 .8 1 .7 1-.1 1 .3 1-.2 1-.8 1 .1 1 .9 1-.7 1 .3 1-1.2 1 .8 1 .6 .9-.4 1 .5 1-.5 1-.8 1 1 1 .4 1-.3 1 .1 1 0 1-1 1 .3 1 .7 1 0 1-.3 1-.9 1 1 1 .3 1-.9 1 .8 1-.1 1-.9 1 .5 1 .6 1-.4 1 .3 1 .1 1-.8 1 .5 1 .2 1-.3 1-.3 1-.4 1 .4 1 .7 1-.9 1 .9 1-.1 1-.7 1 .4 1 .6 1-.3 1 0 1-.2 1-1.4 1 1.2 1 .5 1-.2 1-.1 1-.5 1-.1 1 1 1-.6 1 .4 1 .1 1-.9 1 .7 1 .1 1-.5 1 .8 1-.3 1-1.2 1 .7 1 .9 1-.3 1 0 1-.9 1 .2 1 .9 1-.4 0 5.3 -1-.4 -1 1 -1 .2 -1-1 -1 0 -1-.3 -1 .9 -1 .8 -1-1.3 -1-.3 -1 .9 -1-.6 -1 .1 -1 .8 -1-.9 -1 0 -1 .5 -1-.7 -1 1 -1 0 -1-.5 -1-.2 -1-.2 -1 .5 -1 1.3 -1-1.5 -1-.2 -1 0 -1-.3 -1 .7 -1 .4 -1-.7 -1-.2 -1 1 -1-1 -1 .7 -1 .5 -1-.5 -1-.3 -1-.3 -1 .2 -1 .6 -1-.9 -1 .2 -1 .3 -1-.5 -1 .6 -1 .5 -1-.9 -1-.1 -1 .9 -1-.9 -1 .3 -1 1 -1-1 -1-.3 -1 0 -1 .7 -1 .3 -1-1 -1 0 -1 .1 -1-.3 -1 .4 -1 1.1 -1-.9 -1-.5 -1 .6 -.9-.5 -1 .7 -1 .8 -1-1.2 -1 .2 -1-.7 -1 .9 -1 .2 -1-.9 -1-.2 -1 .3 -1-.1 -1 .8 -1 .8 -1-1.4 -1-.1 -1 .4 -1-.7 -1 .9 -1 1 -1-1.3 -1-.4 -1 0 -1 .3 -1 .9 -1-.9 -1 .2 -1-.1 -1-.6 -1 1.1 -1 .3 -1-1.3 -1-.1 -1 .6 -1-.3 -1 .2 -1 1 -1-1.4 -1 1.2 -1-1 -1 1 -1 .9 -1-1.6 -1-.5 -1 .8 -1-.8 -1 .3 -1 .9 -1-.8 -1-.3 -1 .2 -1-.6 -1 1 -1 .2 -1-.7 -1 0 -1 .3 -1 .6 -1 .4 -1-1.3 -1 .3 -1 .4 -1-1.1 -1-.3 -1-.1 -1-1.1 -1-.2 -1 0 -1 0 -1 0 -1 0 -1 0 -1 0 -1 0 -1 0 -1 0 -1 1.7 -1 0 -1 .4 -1-.6 -1-1.5 -1 0 -1 0 -1 0 -1 0 -1 0 -1 0 -1 0 -1 0 -1 0 -1 0 -1 0 -1 0 -1 0 -1 0 -1 0 -1 0 -1 0 -1 0 -1 0 -1 0 -1 0 -1 0 -1 0 -1 0 -1 0 -1 0 -1 0 -1 0 -1 0 -1 0 -1 0 -1 0 -1 0 -1 0 -1 0 -1 0 -1 0 -1 0 -1 0 -1 0 -1 0 -1 0 -1 0 -1 0 -1 0 -1 0 -1 0 -1 0 -1 0 -1 0 -1 0 -1 0 -1 0 -1 0 -.9 0 -1 0 -1 0 -1 0 -1 0 -1 0 -1 0 -1 0 -1 0 -1 0 -1 0 -1 0 -1 0 -1 0 -1 0 -1 0 -1 0 -1 0 -1 0 -1 0 -1 0 -1 0 -1 0 -1 0 -1 0 -1 0 -1 0 -1 0 -1 0 -1 0 -1 0 -1 0 -1 0 -1 0 -1 0 -1 0 -1 0 -1 0 -1 0 -1 0 -1 0 -1 0 -1 0 -1 0 -1 0 -1 0 -1 0 -1 0 -1 0 -1 0 -1 0 -1 0 -1 0 -1 0 -1 0 -1 0 -1 0 -1 0 -1 0 -1 0 -1 0 -1 0 -1 0 -1 0 -1 0 -1 0 -1 0 -1 0 -1 0 -1 0 -1 0 -1 0 -1 0 -1 0 -1 0 -1 0 -1 0 -1 0 -1 0 -1 0 -1 0 -1 0 -1 0 -1 0 -1 0 -1 0 -1 0 -1 0 -1 0 -1 0 -1 0 -1 0 -1 0 -1 0 -1 0 -1 0 -1 0 -1 0 -1 0 -1 0 -1 0 -1 0 -1 0 -1 0 -1 0 -1 0 -1 0 -1 0 -1 0 -1 0 -1 0 -1 0 -1 0 -1 0 -1 0 -1 0 -1 0 -1 0 -1 0 -1 0 -1 0 -1 0 -1 0 -1 0 -1 0 -1 0 -1 0 -1 0 -1 0 -1 0 -1 0 -1 0 -1 0 -1 0 -1 0 -1 0 -1 0 -.9 0 -1 0 -1 0 -1 0 -1 0 -1 0 -1 0 -1 0 -1 0 -1 0 -1 0 -1 0 -1 0 -1 0 -1 0 -1 0 -1 0 -1 0 -1 0 -1 0 -1 0 -1 0 -1 0 -1 0 -1 0 -1 0 -1 0 -1 0 -1 0 -1 0 -1 0 -1 0 -1 0 -1 0 -1 0 -1 0 -1 0 -1 0 -1 0 -1 0 -1 0 -1 0 -1 0 -1 0 -1 0 -1 0 -1 0 -1 0 -1 0 -1 0 -1 0 -1 0 -1 0 -1 0 -1 0 -1 0 -1 0 -1 0 -1 0 -1 0 -1 0 -1 0 -1 0 -1 0 -1 0 -1 0 -1 0 -1 0z" fill="#361b2a"/>
<svg x="707.4" y="751.8" width="407.8" height="18"><text x="3.8" y="14.1" font-size="11" letter-spacing="0.55" fill="rgba(0,0,0,0.75)" stroke="rgba(0,0,0,0.75)" stroke-width="0.2">Patterning2 Beat Train</text></svg>
<rect x="1115.7" y="751.8" width="265.9" height="58.9" fill="#e554a0"/>
<rect x="1115.7" y="769.2" width="265.9" height="1" fill="rgba(0,0,0,0.12)"/>
<path d="M1121.4 770.2V810.6M1127.1 770.2V810.6M1132.7 770.2V810.6M1138.4 770.2V810.6M1144.1 770.2V810.6M1149.7 770.2V810.6M1155.4 770.2V810.6M1161.1 770.2V810.6M1166.7 770.2V810.6M1172.4 770.2V810.6M1178.1 770.2V810.6M1183.7 770.2V810.6M1189.4 770.2V810.6M1195.1 770.2V810.6M1200.7 770.2V810.6M1206.4 770.2V810.6M1212.1 770.2V810.6M1217.7 770.2V810.6M1223.4 770.2V810.6M1229.1 770.2V810.6M1234.7 770.2V810.6M1240.4 770.2V810.6M1246.1 770.2V810.6M1251.7 770.2V810.6M1257.4 770.2V810.6M1263.1 770.2V810.6M1268.7 770.2V810.6M1274.4 770.2V810.6M1280.1 770.2V810.6M1285.7 770.2V810.6M1291.4 770.2V810.6M1297.1 770.2V810.6M1302.7 770.2V810.6M1308.4 770.2V810.6M1314.1 770.2V810.6M1319.7 770.2V810.6M1325.4 770.2V810.6M1331.1 770.2V810.6M1336.7 770.2V810.6M1342.4 770.2V810.6M1348.1 770.2V810.6M1353.7 770.2V810.6M1359.4 770.2V810.6M1365.1 770.2V810.6M1370.7 770.2V810.6M1376.4 770.2V810.6" stroke="rgba(0,0,0,0.12)" stroke-width="1"/>
<path d="M1116 776.5l1 1 1 .9 1-1.3 1 1 1-.6 1-1.2 1 1.2 1 .9 1-.9 1-.1 1-1.2 1 1.1 1 .7 1-1.2 1 1.5 1-.9 1-.9 1 1.3 1 .1 1-.3 1 .3 1 .1 1-1.7 1 1.4 1 .7 1-1.1 1 .1 1-1.1 1 1.4 1 .7 1-1.2 1 1.2 1-.4 1-1.7 1 1.4 1 .6 1-1.3 1 1.4 1-.8 1-1.2 1 1.5 1 .4 1-1.1 1 .6 1.1-1.2 1 1.4 1 .3 1-1.1 1 .8 1-.2 1-1.1 1 1.3 1 0 1-.2 1 .4 1-.2 1-.8 1 1.1 1-.3 1-.4 1 0 1-1.1 1 1 1 .5 1-.3 1 .2 1-.5 1-1.4 1 1.5 1 .5 1-.8 1 1 1-.6 1-.7 1 .7 1 .4 1-.8 1 .2 1-.9 1 1.4 1-.1 1-.7 1 1 1-.6 1-.9 1 1.1 1 .3 1-.4 1 .5 1-.8 1-1 1 1.1 1 .4 1-1.1 1 .9 1-1.6 1 2 1 .2 1-1.3 1 1.2 1-.3 1-1.8 1 1.4 1 .3 1-.2 1 .4 1-.5 1-1.4 1 1.7 1-.1 1-.3 1 .1 1-.8 1 1 1 .5 1-.4 1 0 1-.6 1-1.1 1 1.6 1 .3 1-.6 1 .4 1-.5 1-1.2 1 1.3 1 .6 1-.9 1 .4 1-1 1 .9 1 .5 1.1-.5 1 .6 1-.5 1-.6 1 1.1 1-.1 1-.1 1 0 1-.4 1-1.3 1 1.5 1 0 1-.5 1 .1 1 0 1 .9 1 .1 1-.4 1 .1 1-.5 1-.8 1 1.3 1 .3 1-.4 1 .1 1-.7 1-.3 1 1 1 .3 1-.5 1 0 1-1.2 1 1.3 1 .1 1-.2 1 .8 1-1.2 1-.8 1 1.8 1-.1 1-.1 1 .3 1-.5 1-.9 1 .8 1 .4 1-.1 1-.7 1-1 1 1.6 1-.1 1-.3 1 .5 1-.3 1-.6 1 1 1 .3 1-.8 1 .6 1-.3 1-.5 1 .7 1-.2 1-.6 1 .4 1-.3 1 .6 1 0 1-.1 1 .1 1-.3 1-1 1 1 1 .4 1-.4 1 .1 1-.6 1-.4 1 1.1 1 .3 1-.6 1-.3 1-.7 1 1.4 1-.1 1-.2 1 .8 1-.9 1.1-.3 1 .5 1-.2 1-.2 1 1 1-.7 1-.8 1 1.2 1-.4 1-.3 1-.3 1-.7 1 1.7 1-.1 1-.3 1 .1 1-.4 1-.9 1 1.5 1 .1 1-.4 1 0 1-.2 1-.9 1 .9 1 .4 1-.2 1-.7 1 0 1 1 1 .1 1-.8 1 .7 1-.8 1-.1 1 .7 1-.2 1-.6 1 1.2 1-.9 1-.2 1 .7 1 .3 1-.6 1 .4 0 5.5 -1 .5 -1-.7 -1 .3 -1 .8 -1-.2 -1-.9 -1 1.2 -1-.6 -1-.3 -1 .8 -1-.2 -1-.8 -1 .8 -1-.9 -1 .1 -1 1.1 -1-.1 -1-.6 -1-.3 -1 .4 -1 1 -1-.9 -1-.3 -1 0 -1-.4 -1 .2 -1 1.5 -1-.9 -1-.4 -1 .1 -1-.3 -1-.1 -1 1.7 -1-.7 -1-.3 -1-.4 -1-.4 -1 1.2 -1-.7 -1-.7 -1 .9 -1-.2 -1-.2 -1 .6 -1.1-.4 -1-.8 -1 .7 -1-.1 -1-.2 -1 1.5 -1-.7 -1-.4 -1-.6 -1 .3 -1 1.1 -1-.3 -1-.6 -1 0 -1-.4 -1 .5 -1 1 -1-1 -1-.4 -1 .1 -1 0 -1-.1 -1 .7 -1-.3 -1 .4 -1-.7 -1-.1 -1 .6 -1-.5 -1-.3 -1 .7 -1-.9 -1 .3 -1 1.1 -1-.7 -1-.3 -1 .6 -1-.4 -1 0 -1 1.6 -1-1.1 -1-.7 -1-.1 -1 .4 -1 .9 -1-.9 -1-.6 -1 .4 -1-.2 -1-.1 -1 2 -1-1 -1-1.2 -1 .8 -1-.2 -1 .2 -1 1.3 -1-1.2 -1 0 -1-.5 -1 .2 -1 1.1 -1-.4 -1-.6 -1 0 -1-.4 -1 .4 -1 1.3 -1-.8 -1-.6 -1 .2 -1-.5 -1 .1 -1 1 -1 0 -1 0 -1-.5 -1 .1 -1 1.5 -1-1.4 -1-.4 -1 .1 -1-.2 -1-.1 -1 1.1 -1-.6 -1-.4 -1 .6 -1.1-.6 -1 .5 -1 1 -1-1 -1 .4 -1-.9 -1 .6 -1 1.3 -1-1.3 -1-.5 -1 .4 -1-.6 -1 .3 -1 1.7 -1-1.1 -1-.7 -1 .1 -1-.5 -1 .5 -1 1.1 -1-.8 -1 .1 -1-.3 -1-.1 -1 1.7 -1-1.5 -1-.5 -1 .4 -1-.1 -1 .2 -1 1.5 -1-1.9 -1-.3 -1 1.3 -1-1.3 -1 .2 -1 2 -1-1.7 -1 1 -1-1.2 -1 .4 -1 1.3 -1-1.2 -1-.8 -1 .6 -1-.5 -1 .3 -1 1.2 -1-1 -1-.6 -1 1 -1-.7 -1 0 -1 1.5 -1-1.1 -1 .3 -1-.9 -1 .5 -1 .7 -1-.7 -1-.7 -1 1.1 -1-.9 -1 .6 -1 1.5 -1-1.5 -1-.4 -1 .2 -1-.4 -1 .6 -1 1 -1-1.2 -1 .1 -1-.5 -1-.2 -1 1.1 -1-.8 -1-.2 -1 .4 -1-.3 -1 .1 -1 1.3 -1-1.2 -1-.2 -1 .9 -1-1.2 -1 .3 -1 1.5 -1.1-1.3 -1 .7 -1-1.2 -1 .4 -1 1.6 -1-1.3 -1-.8 -1 1.5 -1-1.4 -1 .6 -1 1.5 -1-1.7 -1-.5 -1 1.3 -1-1.3 -1 .7 -1 1.5 -1-1.1 -1 .1 -1-1.2 -1 .7 -1 1.6 -1-1.9 -1 .1 -1 .4 -1-.4 -1 .2 -1 1.3 -1-.9 -1-.9 -1 1.5 -1-1.3 -1 .8 -1 1.1 -1-1.3 -1 0 -1-1 -1 1 -1 1.2 -1-1.2 -1-.7 -1 1.1 -1-1.4 -1 .9 -1 1.1z" fill="#361b2a"/>
<path d="M1116 796.7l1 1 1 .9 1-1.3 1 1 1-.6 1-1.2 1 1.2 1 .9 1-.9 1-.1 1-1.2 1 1.1 1 .7 1-1.2 1 1.5 1-.9 1-.9 1 1.3 1 .1 1-.3 1 .3 1 .1 1-1.7 1 1.4 1 .7 1-1.1 1 .1 1-1.1 1 1.4 1 .7 1-1.2 1 1.2 1-.4 1-1.7 1 1.4 1 .6 1-1.3 1 1.4 1-.8 1-1.2 1 1.5 1 .4 1-1.1 1 .6 1.1-1.2 1 1.4 1 .3 1-1.1 1 .8 1-.2 1-1.1 1 1.3 1 0 1-.2 1 .4 1-.2 1-.8 1 1.1 1-.3 1-.4 1 0 1-1.1 1 1 1 .5 1-.3 1 .2 1-.5 1-1.4 1 1.5 1 .5 1-.8 1 1 1-.6 1-.7 1 .7 1 .4 1-.8 1 .2 1-.9 1 1.4 1-.1 1-.7 1 1 1-.6 1-.9 1 1.1 1 .3 1-.4 1 .5 1-.8 1-1 1 1.1 1 .4 1-1.1 1 .9 1-1.6 1 2 1 .2 1-1.3 1 1.2 1-.3 1-1.8 1 1.4 1 .3 1-.2 1 .4 1-.5 1-1.4 1 1.7 1-.1 1-.3 1 .1 1-.8 1 1 1 .5 1-.4 1 0 1-.6 1-1.1 1 1.6 1 .3 1-.6 1 .4 1-.5 1-1.2 1 1.3 1 .6 1-.9 1 .4 1-1 1 .9 1 .5 1.1-.5 1 .6 1-.5 1-.6 1 1.1 1-.1 1-.1 1 0 1-.4 1-1.3 1 1.5 1 0 1-.5 1 .1 1 0 1 .9 1 .1 1-.4 1 .1 1-.5 1-.8 1 1.3 1 .3 1-.4 1 .1 1-.7 1-.3 1 1 1 .3 1-.5 1 0 1-1.2 1 1.3 1 .1 1-.2 1 .8 1-1.2 1-.8 1 1.8 1-.1 1-.1 1 .3 1-.5 1-.9 1 .8 1 .4 1-.1 1-.7 1-1 1 1.6 1-.1 1-.3 1 .5 1-.3 1-.6 1 1 1 .3 1-.8 1 .6 1-.3 1-.5 1 .7 1-.2 1-.6 1 .4 1-.3 1 .6 1 0 1-.1 1 .1 1-.3 1-1 1 1 1 .4 1-.4 1 .1 1-.6 1-.4 1 1.1 1 .3 1-.6 1-.3 1-.7 1 1.4 1-.1 1-.2 1 .8 1-.9 1.1-.3 1 .5 1-.2 1-.2 1 1 1-.7 1-.8 1 1.2 1-.4 1-.3 1-.3 1-.7 1 1.7 1-.1 1-.3 1 .1 1-.4 1-.9 1 1.5 1 .1 1-.4 1 0 1-.2 1-.9 1 .9 1 .4 1-.2 1-.7 1 0 1 1 1 .1 1-.8 1 .7 1-.8 1-.1 1 .7 1-.2 1-.6 1 1.2 1-.9 1-.2 1 .7 1 .3 1-.6 1 .4 0 5.5 -1 .5 -1-.7 -1 .3 -1 .8 -1-.2 -1-.9 -1 1.2 -1-.6 -1-.3 -1 .8 -1-.2 -1-.8 -1 .8 -1-.9 -1 .1 -1 1.1 -1-.1 -1-.6 -1-.3 -1 .4 -1 1 -1-.9 -1-.3 -1 0 -1-.4 -1 .2 -1 1.5 -1-.9 -1-.4 -1 .1 -1-.3 -1-.1 -1 1.7 -1-.7 -1-.3 -1-.4 -1-.4 -1 1.2 -1-.7 -1-.7 -1 .9 -1-.2 -1-.2 -1 .6 -1.1-.4 -1-.8 -1 .7 -1-.1 -1-.2 -1 1.5 -1-.7 -1-.4 -1-.6 -1 .3 -1 1.1 -1-.3 -1-.6 -1 0 -1-.4 -1 .5 -1 1 -1-1 -1-.4 -1 .1 -1 0 -1-.1 -1 .7 -1-.3 -1 .4 -1-.7 -1-.1 -1 .6 -1-.5 -1-.3 -1 .7 -1-.9 -1 .3 -1 1.1 -1-.7 -1-.3 -1 .6 -1-.4 -1 0 -1 1.6 -1-1.1 -1-.7 -1-.1 -1 .4 -1 .9 -1-.9 -1-.6 -1 .4 -1-.2 -1-.1 -1 2 -1-1 -1-1.2 -1 .8 -1-.2 -1 .2 -1 1.3 -1-1.2 -1 0 -1-.5 -1 .2 -1 1.1 -1-.4 -1-.6 -1 0 -1-.4 -1 .4 -1 1.3 -1-.8 -1-.6 -1 .2 -1-.5 -1 .1 -1 1 -1 0 -1 0 -1-.5 -1 .1 -1 1.5 -1-1.4 -1-.4 -1 .1 -1-.2 -1-.1 -1 1.1 -1-.6 -1-.4 -1 .6 -1.1-.6 -1 .5 -1 1 -1-1 -1 .4 -1-.9 -1 .6 -1 1.3 -1-1.3 -1-.5 -1 .4 -1-.6 -1 .3 -1 1.7 -1-1.1 -1-.7 -1 .1 -1-.5 -1 .5 -1 1.1 -1-.8 -1 .1 -1-.3 -1-.1 -1 1.7 -1-1.5 -1-.5 -1 .4 -1-.1 -1 .2 -1 1.5 -1-1.9 -1-.3 -1 1.3 -1-1.3 -1 .2 -1 2 -1-1.7 -1 1 -1-1.2 -1 .4 -1 1.3 -1-1.2 -1-.8 -1 .6 -1-.5 -1 .3 -1 1.2 -1-1 -1-.6 -1 1 -1-.7 -1 0 -1 1.5 -1-1.1 -1 .3 -1-.9 -1 .5 -1 .7 -1-.7 -1-.7 -1 1.1 -1-.9 -1 .6 -1 1.5 -1-1.5 -1-.4 -1 .2 -1-.4 -1 .6 -1 1 -1-1.2 -1 .1 -1-.5 -1-.2 -1 1.1 -1-.8 -1-.2 -1 .4 -1-.3 -1 .1 -1 1.3 -1-1.2 -1-.2 -1 .9 -1-1.2 -1 .3 -1 1.5 -1.1-1.3 -1 .7 -1-1.2 -1 .4 -1 1.6 -1-1.3 -1-.8 -1 1.5 -1-1.4 -1 .6 -1 1.5 -1-1.7 -1-.5 -1 1.3 -1-1.3 -1 .7 -1 1.5 -1-1.1 -1 .1 -1-1.2 -1 .7 -1 1.6 -1-1.9 -1 .1 -1 .4 -1-.4 -1 .2 -1 1.3 -1-.9 -1-.9 -1 1.5 -1-1.3 -1 .8 -1 1.1 -1-1.3 -1 0 -1-1 -1 1 -1 1.2 -1-1.2 -1-.7 -1 1.1 -1-1.4 -1 .9 -1 1.1z" fill="#361b2a"/>
<svg x="1115.7" y="751.8" width="265.4" height="18"><text x="3.8" y="14.1" font-size="11" letter-spacing="0.55" fill="rgba(0,0,0,0.75)" stroke="rgba(0,0,0,0.75)" stroke-width="0.2">Patterning2 Beat Train</text></svg>
<rect x="1381.6" y="751.8" width="4.8" height="58.9" fill="#e554a0"/>
<rect x="1381.6" y="769.2" width="4.8" height="1" fill="rgba(0,0,0,0.12)"/>
<path d="M1381.9 776.8l1 .4 1.1 2.1 1.1 .7 1 0 0 1.2 -1 0 -1.1 .7 -1.1 2.2 -1 .5z" fill="#361b2a"/>
<path d="M1381.9 797l1 .4 1.1 2.1 1.1 .7 1 0 0 1.2 -1 0 -1.1 .7 -1.1 2.2 -1 .5z" fill="#361b2a"/>
<svg x="1381.6" y="751.8" width="4.3" height="18"><text x="3.8" y="14.1" font-size="11" letter-spacing="0.55" fill="rgba(0,0,0,0.75)" stroke="rgba(0,0,0,0.75)" stroke-width="0.2">P</text></svg>
<rect x="1381.6" y="751.8" width="1" height="58.9" fill="rgba(0,0,0,0.2)"/>
<rect x="883.2" y="812.6" width="1" height="58.8" fill="#3a9a22"/>
<rect x="903.4" y="812.6" width="1" height="58.8" fill="#3a9a22"/>
<rect x="916" y="812.6" width="1" height="58.8" fill="#3a9a22"/>
<rect x="929.3" y="812.6" width="1" height="58.8" fill="#3a9a22"/>
<rect x="943" y="812.6" width="4" height="58.8" fill="#45c22b"/>
<rect x="943" y="830" width="4" height="1" fill="rgba(0,0,0,0.12)"/>
<path d="M945.7 831V871.4" stroke="rgba(0,0,0,0.12)" stroke-width="1"/>
<path d="M943.3 840.8l1.1-1.3 1.2 1.2 1.1 .1 0 1.2 -1.1 .2 -1.2 1.1 -1.1-1.3z" fill="#152610"/>
<path d="M943.3 861l1.1-1.3 1.2 1.2 1.1 .1 0 1.2 -1.1 .2 -1.2 1.1 -1.1-1.3z" fill="#152610"/>
<rect x="954.5" y="812.6" width="7.5" height="58.8" fill="#45c22b"/>
<rect x="954.5" y="830" width="7.5" height="1" fill="rgba(0,0,0,0.12)"/>
<path d="M957.1 831V871.4" stroke="rgba(0,0,0,0.12)" stroke-width="1"/>
<path d="M954.8 840.7l1-.7 1-.3 1 .1 .9 .3 1 .7 1 0 1 0 0 1.2 -1 0 -1 0 -1 .8 -.9 .3 -1 .1 -1-.3 -1-.7z" fill="#152610"/>
<path d="M954.8 860.9l1-.7 1-.3 1 .1 .9 .3 1 .7 1 0 1 0 0 1.2 -1 0 -1 0 -1 .8 -.9 .3 -1 .1 -1-.3 -1-.7z" fill="#152610"/>
<svg x="954.5" y="812.6" width="7" height="18"><text x="3.8" y="14.1" font-size="11" letter-spacing="0.55" fill="rgba(0,0,0,0.75)" stroke="rgba(0,0,0,0.75)" stroke-width="0.2">1</text></svg>
<rect x="970.8" y="812.6" width="84.6" height="58.8" fill="#45c22b"/>
<rect x="970.8" y="831" width="84.6" height="40.4" fill="#c5ebf8"/>
<rect x="970.8" y="830" width="84.6" height="1" fill="rgba(0,0,0,0.07)"/>
<path d="M974.1 831V871.4M979.7 831V871.4M985.4 831V871.4M991.1 831V871.4M996.7 831V871.4M1002.4 831V871.4M1008.1 831V871.4M1013.7 831V871.4M1019.4 831V871.4M1025.1 831V871.4M1030.7 831V871.4M1036.4 831V871.4M1042.1 831V871.4M1047.7 831V871.4M1053.4 831V871.4" stroke="rgba(0,0,0,0.07)" stroke-width="1"/>
<path d="M971.1 840.6l1 .2 1-.2 1-.3 1 0 1-.4 1 .3 1 0 1-.1 1-.1 1 .1 1-.1 1-.1 1-.5 1 .2 1 0 1-.4 1 .1 1 .2 1 0 1-.1 1 .1 1-.6 1-.7 1 .9 1 .3 1-.4 1 .4 1 .1 1-.6 1-.4 1 .5 1 .5 1-.6 1 .8 1-.4 1-.4 1-.4 1 .8 1 .3 1 0 1-.1 1 0 1-.8 1 .2 1-.5 1 .6 1-.1 1 .3 1 .3 1-.2 1-.1 1 .5 1-.1 1-.1 1 .2 1-.1 1-.1 1 .1 1-.3 1 .4 1-.4 1-.3 1-.9 1 1.1 1 0 1 .1 1-.1 1-.3 1-.7 1-.3 1 .4 1 .7 1-.2 1-.5 1 .4 1 .4 1-.2 1-.4 1 .3 1 .2 1-.2 1 .2 1 .1 1 .2 0 4.3 -1 .3 -1 .1 -1 .1 -1-.2 -1 .2 -1 .3 -1-.4 -1-.2 -1 .4 -1 .5 -1-.5 -1-.3 -1 .7 -1 .5 -1-.4 -1-.6 -1-.4 -1-.1 -1 .2 -1-.1 -1 1.2 -1-1 -1-.3 -1-.4 -1 .4 -1-.4 -1 .2 -1-.1 -1-.1 -1 .2 -1-.1 -1-.1 -1 .5 -1-.1 -1-.2 -1 .3 -1 .3 -1-.1 -1 .6 -1-.5 -1 .3 -1-.9 -1 0 -1-.1 -1 0 -1 .3 -1 .9 -1-.5 -1-.4 -1-.4 -1 .9 -1-.7 -1 .6 -1 .5 -1-.5 -1-.6 -1 .1 -1 .5 -1-.5 -1 .3 -1 1 -1-.7 -1-.8 -1 .2 -1-.1 -1 0 -1 .2 -1 .1 -1-.4 -1-.1 -1 .3 -1-.5 -1-.2 -1 0 -1 0 -1 0 -1-.2 -1 .1 -1 .3 -1-.5 -1 0 -1-.2 -1-.2 -1 .1z" fill="#2a3238"/>
<path d="M971.1 860.8l1 .2 1-.2 1-.3 1 0 1-.4 1 .3 1 0 1-.1 1-.1 1 .1 1-.1 1-.1 1-.5 1 .2 1 0 1-.4 1 .1 1 .2 1 0 1-.1 1 .1 1-.6 1-.7 1 .9 1 .3 1-.4 1 .4 1 .1 1-.6 1-.4 1 .5 1 .5 1-.6 1 .8 1-.4 1-.4 1-.4 1 .8 1 .3 1 0 1-.1 1 0 1-.8 1 .2 1-.5 1 .6 1-.1 1 .3 1 .3 1-.2 1-.1 1 .5 1-.1 1-.1 1 .2 1-.1 1-.1 1 .1 1-.3 1 .4 1-.4 1-.3 1-.9 1 1.1 1 0 1 .1 1-.1 1-.3 1-.7 1-.3 1 .4 1 .7 1-.2 1-.5 1 .4 1 .4 1-.2 1-.4 1 .3 1 .2 1-.2 1 .2 1 .1 1 .2 0 4.3 -1 .3 -1 .1 -1 .1 -1-.2 -1 .2 -1 .3 -1-.4 -1-.2 -1 .4 -1 .5 -1-.5 -1-.3 -1 .7 -1 .5 -1-.4 -1-.6 -1-.4 -1-.1 -1 .2 -1-.1 -1 1.2 -1-1 -1-.3 -1-.4 -1 .4 -1-.4 -1 .2 -1-.1 -1-.1 -1 .2 -1-.1 -1-.1 -1 .5 -1-.1 -1-.2 -1 .3 -1 .3 -1-.1 -1 .6 -1-.5 -1 .3 -1-.9 -1 0 -1-.1 -1 0 -1 .3 -1 .9 -1-.5 -1-.4 -1-.4 -1 .9 -1-.7 -1 .6 -1 .5 -1-.5 -1-.6 -1 .1 -1 .5 -1-.5 -1 .3 -1 1 -1-.7 -1-.8 -1 .2 -1-.1 -1 0 -1 .2 -1 .1 -1-.4 -1-.1 -1 .3 -1-.5 -1-.2 -1 0 -1 0 -1 0 -1-.2 -1 .1 -1 .3 -1-.5 -1 0 -1-.2 -1-.2 -1 .1z" fill="#2a3238"/>
<svg x="970.8" y="812.6" width="84.1" height="18"><text x="3.8" y="14.1" font-size="11" letter-spacing="0.55" fill="rgba(0,0,0,0.75)" stroke="rgba(0,0,0,0.75)" stroke-width="0.2">Train Original</text></svg>
<rect x="970.8" y="812.1" width="84.6" height="1" fill="#d0f0ff"/>
<rect x="1055.4" y="812.6" width="4.4" height="58.8" fill="#45c22b"/>
<rect x="1055.4" y="830" width="4.4" height="1" fill="rgba(0,0,0,0.12)"/>
<path d="M1059.1 831V871.4" stroke="rgba(0,0,0,0.12)" stroke-width="1"/>
<path d="M1055.7 838.6l.9 0 1 0 1 .2 .9-.1 0 5.5 -.9-.1 -1 .2 -1 .1 -.9-.1z" fill="#152610"/>
<path d="M1055.7 858.8l.9 0 1 0 1 .2 .9-.1 0 5.5 -.9-.1 -1 .2 -1 .1 -.9-.1z" fill="#152610"/>
<rect x="1055.4" y="812.6" width="1" height="58.8" fill="rgba(0,0,0,0.2)"/>
<rect x="1059.8" y="812.6" width="2.9" height="58.8" fill="#45c22b"/>
<rect x="1059.8" y="830" width="2.9" height="1" fill="rgba(0,0,0,0.12)"/>
<path d="M1060.1 838.5l1.1 .1 1.2 0 0 5.8 -1.2 0 -1.1 0z" fill="#152610"/>
<path d="M1060.1 858.7l1.1 .1 1.2 0 0 5.8 -1.2 0 -1.1 0z" fill="#152610"/>
<rect x="1059.8" y="812.6" width="1" height="58.8" fill="rgba(0,0,0,0.2)"/>
<rect x="1062.7" y="812.6" width="2.9" height="58.8" fill="#45c22b"/>
<rect x="1062.7" y="830" width="2.9" height="1" fill="rgba(0,0,0,0.12)"/>
<path d="M1064.7 831V871.4" stroke="rgba(0,0,0,0.12)" stroke-width="1"/>
<path d="M1063 838.3l1.2 .4 1.1-.3 0 6.2 -1.1-.3 -1.2 .4z" fill="#152610"/>
<path d="M1063 858.5l1.2 .4 1.1-.3 0 6.2 -1.1-.3 -1.2 .4z" fill="#152610"/>
<rect x="1062.7" y="812.6" width="1" height="58.8" fill="rgba(0,0,0,0.2)"/>
<rect x="1065.6" y="812.6" width="5" height="58.8" fill="#45c22b"/>
<rect x="1065.6" y="830" width="5" height="1" fill="rgba(0,0,0,0.12)"/>
<path d="M1070.4 831V871.4" stroke="rgba(0,0,0,0.12)" stroke-width="1"/>
<path d="M1065.9 838.6l1.1 .1 1.1-.3 1.1 .1 1.1 .1 0 5.7 -1.1 .2 -1.1 .1 -1.1-.4 -1.1 .1z" fill="#152610"/>
<path d="M1065.9 858.8l1.1 .1 1.1-.3 1.1 .1 1.1 .1 0 5.7 -1.1 .2 -1.1 .1 -1.1-.4 -1.1 .1z" fill="#152610"/>
<rect x="1065.6" y="812.6" width="1" height="58.8" fill="rgba(0,0,0,0.2)"/>
<rect x="1070.6" y="812.6" width="15.8" height="58.8" fill="#45c22b"/>
<rect x="1070.6" y="830" width="15.8" height="1" fill="rgba(0,0,0,0.12)"/>
<path d="M1076.1 831V871.4M1081.7 831V871.4" stroke="rgba(0,0,0,0.12)" stroke-width="1"/>
<path d="M1070.9 839.3l1 0 1 .1 1 0 1.1-.3 1 .2 1 0 1 .2 1-.3 1-.1 1 0 1 .1 1.1-.1 1 .2 1-.1 1 .3 0 3.9 -1 .3 -1-.1 -1 .2 -1.1-.1 -1 .1 -1 0 -1-.1 -1-.4 -1 .3 -1 0 -1 .2 -1.1-.3 -1 0 -1 .1 -1 0z" fill="#152610"/>
<path d="M1070.9 859.5l1 0 1 .1 1 0 1.1-.3 1 .2 1 0 1 .2 1-.3 1-.1 1 0 1 .1 1.1-.1 1 .2 1-.1 1 .3 0 3.9 -1 .3 -1-.1 -1 .2 -1.1-.1 -1 .1 -1 0 -1-.1 -1-.4 -1 .3 -1 0 -1 .2 -1.1-.3 -1 0 -1 .1 -1 0z" fill="#152610"/>
<svg x="1070.6" y="812.6" width="15.3" height="18"><text x="3.8" y="14.1" font-size="11" letter-spacing="0.55" fill="rgba(0,0,0,0.75)" stroke="rgba(0,0,0,0.75)" stroke-width="0.2">11</text></svg>
<rect x="1070.6" y="812.6" width="1" height="58.8" fill="rgba(0,0,0,0.2)"/>
<rect x="1086.4" y="812.6" width="9.9" height="58.8" fill="#45c22b"/>
<rect x="1086.4" y="830" width="9.9" height="1" fill="rgba(0,0,0,0.12)"/>
<path d="M1087.4 831V871.4M1093.1 831V871.4" stroke="rgba(0,0,0,0.12)" stroke-width="1"/>
<path d="M1086.7 838.7l1-.2 1.1 .3 1-.3 1 0 1.1 .2 1 .2 1-.2 1.1 .4 1 0 0 4.7 -1 0 -1.1 .5 -1-.3 -1 .2 -1.1 .2 -1 0 -1-.3 -1.1 .3 -1-.1z" fill="#152610"/>
<path d="M1086.7 858.9l1-.2 1.1 .3 1-.3 1 0 1.1 .2 1 .2 1-.2 1.1 .4 1 0 0 4.7 -1 0 -1.1 .5 -1-.3 -1 .2 -1.1 .2 -1 0 -1-.3 -1.1 .3 -1-.1z" fill="#152610"/>
<svg x="1086.4" y="812.6" width="9.4" height="18"><text x="3.8" y="14.1" font-size="11" letter-spacing="0.55" fill="rgba(0,0,0,0.75)" stroke="rgba(0,0,0,0.75)" stroke-width="0.2">1</text></svg>
<rect x="1086.4" y="812.6" width="1" height="58.8" fill="rgba(0,0,0,0.2)"/>
<rect x="1096.3" y="812.6" width="17.4" height="58.8" fill="#45c22b"/>
<rect x="1096.3" y="830" width="17.4" height="1" fill="rgba(0,0,0,0.12)"/>
<path d="M1098.7 831V871.4M1104.4 831V871.4M1110.1 831V871.4" stroke="rgba(0,0,0,0.12)" stroke-width="1"/>
<path d="M1096.6 838.7l1-.3 1-.2 1 .7 1-.1 .9 0 1-.4 1 .1 1 .2 1-.1 1 0 1 .5 1-.3 .9 0 1 .2 1-.5 1 0 1 .3 0 5.3 -1 .3 -1 0 -1-.5 -1 .3 -.9 0 -1-.4 -1 .6 -1-.1 -1-.1 -1 .3 -1 .1 -1-.4 -.9-.1 -1-.1 -1 .7 -1-.2 -1-.3z" fill="#152610"/>
<path d="M1096.6 858.9l1-.3 1-.2 1 .7 1-.1 .9 0 1-.4 1 .1 1 .2 1-.1 1 0 1 .5 1-.3 .9 0 1 .2 1-.5 1 0 1 .3 0 5.3 -1 .3 -1 0 -1-.5 -1 .3 -.9 0 -1-.4 -1 .6 -1-.1 -1-.1 -1 .3 -1 .1 -1-.4 -.9-.1 -1-.1 -1 .7 -1-.2 -1-.3z" fill="#152610"/>
<svg x="1096.3" y="812.6" width="16.9" height="18"><text x="3.8" y="14.1" font-size="11" letter-spacing="0.55" fill="rgba(0,0,0,0.75)" stroke="rgba(0,0,0,0.75)" stroke-width="0.2">11</text></svg>
<rect x="1096.3" y="812.6" width="1" height="58.8" fill="rgba(0,0,0,0.2)"/>
<rect x="1113.7" y="812.6" width="2.5" height="58.8" fill="#45c22b"/>
<rect x="1113.7" y="830" width="2.5" height="1" fill="rgba(0,0,0,0.12)"/>
<path d="M1115.7 831V871.4" stroke="rgba(0,0,0,0.12)" stroke-width="1"/>
<path d="M1114 838.2l1-.2 .9 .5 0 5.9 -.9 .5 -1-.2z" fill="#152610"/>
<path d="M1114 858.4l1-.2 .9 .5 0 5.9 -.9 .5 -1-.2z" fill="#152610"/>
<rect x="1113.7" y="812.6" width="1" height="58.8" fill="rgba(0,0,0,0.2)"/>
<rect x="1116.2" y="812.6" width="6.7" height="58.8" fill="#45c22b"/>
<rect x="1116.2" y="830" width="6.7" height="1" fill="rgba(0,0,0,0.12)"/>
<path d="M1121.4 831V871.4" stroke="rgba(0,0,0,0.12)" stroke-width="1"/>
<path d="M1116.5 839.2l1 0 1-.3 1.1-.2 1-.4 1 .5 1 .4 0 4.5 -1 .4 -1 .6 -1-.4 -1.1-.2 -1-.4 -1 0z" fill="#152610"/>
<path d="M1116.5 859.4l1 0 1-.3 1.1-.2 1-.4 1 .5 1 .4 0 4.5 -1 .4 -1 .6 -1-.4 -1.1-.2 -1-.4 -1 0z" fill="#152610"/>
<svg x="1116.2" y="812.6" width="6.2" height="18"><text x="3.8" y="14.1" font-size="11" letter-spacing="0.55" fill="rgba(0,0,0,0.75)" stroke="rgba(0,0,0,0.75)" stroke-width="0.2">1</text></svg>
<rect x="1116.2" y="812.6" width="1" height="58.8" fill="rgba(0,0,0,0.2)"/>
<rect x="1151" y="873.4" width="18.3" height="58.9" fill="#45c22b"/>
<rect x="1151" y="890.8" width="18.3" height="1" fill="rgba(0,0,0,0.12)"/>
<path d="M1155.4 891.8V932.2M1161.1 891.8V932.2M1166.7 891.8V932.2" stroke="rgba(0,0,0,0.12)" stroke-width="1"/>
<path d="M1151.3 899.6l1 .3 1-.2 .9 .1 1 0 1-.3 1 .2 1 .5 1 .2 1-.1 .9 .4 1-.2 1 .4 1 .4 1 .3 .9 0 1 0 1 0 1 0 0 1.2 -1 0 -1 0 -1 0 -.9 0 -1 .3 -1 .4 -1 .5 -1-.2 -.9 .4 -1-.1 -1 .2 -1 .5 -1 .2 -1-.3 -1 0 -.9 .1 -1-.2 -1 .3z" fill="#152610"/>
<path d="M1151.3 919.8l1 .3 1-.2 .9 .1 1 0 1-.3 1 .2 1 .5 1 .2 1-.1 .9 .4 1-.2 1 .4 1 .4 1 .3 .9 0 1 0 1 0 1 0 0 1.2 -1 0 -1 0 -1 0 -.9 0 -1 .3 -1 .4 -1 .5 -1-.2 -.9 .4 -1-.1 -1 .2 -1 .5 -1 .2 -1-.3 -1 0 -.9 .1 -1-.2 -1 .3z" fill="#152610"/>
<svg x="1151" y="873.4" width="17.8" height="18"><text x="3.8" y="14.1" font-size="11" letter-spacing="0.55" fill="rgba(0,0,0,0.75)" stroke="rgba(0,0,0,0.75)" stroke-width="0.2">Pa</text></svg>
<rect x="1151" y="873.4" width="1" height="58.9" fill="rgba(0,0,0,0.2)"/>
<rect x="1175" y="873.4" width="26.7" height="58.9" fill="#45c22b"/>
<rect x="1175" y="890.8" width="26.7" height="1" fill="rgba(0,0,0,0.12)"/>
<path d="M1178.1 891.8V932.2M1183.7 891.8V932.2M1189.4 891.8V932.2M1195.1 891.8V932.2M1200.7 891.8V932.2" stroke="rgba(0,0,0,0.12)" stroke-width="1"/>
<path d="M1175.3 901.6l1 0 1-.3 1-.7 1-.8 1-.1 1-.2 1 .2 1-.5 1 .1 1 .3 1-.3 1-.3 1.1 .8 1-.2 1 .2 1 0 1-.5 1 .1 1 .2 1-.3 1 .2 1 0 1 .9 1 .8 1 .4 1 0 0 1.2 -1 0 -1 .4 -1 .9 -1 .9 -1 0 -1 .2 -1-.3 -1 .3 -1 .1 -1-.5 -1-.1 -1 .2 -1-.2 -1.1 .8 -1-.3 -1-.3 -1 .3 -1 .1 -1-.5 -1 .2 -1-.1 -1-.1 -1-1 -1-.7 -1-.3 -1 0z" fill="#152610"/>
<path d="M1175.3 921.8l1 0 1-.3 1-.7 1-.8 1-.1 1-.2 1 .2 1-.5 1 .1 1 .3 1-.3 1-.3 1.1 .8 1-.2 1 .2 1 0 1-.5 1 .1 1 .2 1-.3 1 .2 1 0 1 .9 1 .8 1 .4 1 0 0 1.2 -1 0 -1 .4 -1 .9 -1 .9 -1 0 -1 .2 -1-.3 -1 .3 -1 .1 -1-.5 -1-.1 -1 .2 -1-.2 -1.1 .8 -1-.3 -1-.3 -1 .3 -1 .1 -1-.5 -1 .2 -1-.1 -1-.1 -1-1 -1-.7 -1-.3 -1 0z" fill="#152610"/>
<svg x="1175" y="873.4" width="26.2" height="18"><text x="3.8" y="14.1" font-size="11" letter-spacing="0.55" fill="rgba(0,0,0,0.75)" stroke="rgba(0,0,0,0.75)" stroke-width="0.2">Patt</text></svg>
<rect x="1175" y="873.4" width="1" height="58.9" fill="rgba(0,0,0,0.2)"/>
<rect x="1214.3" y="873.4" width="17.7" height="58.9" fill="#45c22b"/>
<rect x="1214.3" y="890.8" width="17.7" height="1" fill="rgba(0,0,0,0.12)"/>
<path d="M1217.7 891.8V932.2M1223.4 891.8V932.2M1229.1 891.8V932.2" stroke="rgba(0,0,0,0.12)" stroke-width="1"/>
<path d="M1214.6 901.6l1 0 1-.1 1-.4 1-.5 1-.9 1 .2 1-.5 1 0 1.1-.2 1 .3 1-.1 1-.2 1 .7 1-.4 1 .2 1-.2 1 .3 0 4.9 -1 .4 -1-.3 -1 .2 -1-.3 -1 .7 -1-.3 -1-.1 -1 .4 -1.1-.2 -1 0 -1-.6 -1 .2 -1-.9 -1-.5 -1-.5 -1-.1 -1 0z" fill="#152610"/>
<path d="M1214.6 921.8l1 0 1-.1 1-.4 1-.5 1-.9 1 .2 1-.5 1 0 1.1-.2 1 .3 1-.1 1-.2 1 .7 1-.4 1 .2 1-.2 1 .3 0 4.9 -1 .4 -1-.3 -1 .2 -1-.3 -1 .7 -1-.3 -1-.1 -1 .4 -1.1-.2 -1 0 -1-.6 -1 .2 -1-.9 -1-.5 -1-.5 -1-.1 -1 0z" fill="#152610"/>
<svg x="1214.3" y="873.4" width="17.2" height="18"><text x="3.8" y="14.1" font-size="11" letter-spacing="0.55" fill="rgba(0,0,0,0.75)" stroke="rgba(0,0,0,0.75)" stroke-width="0.2">Pa</text></svg>
<rect x="1214.3" y="873.4" width="1" height="58.9" fill="rgba(0,0,0,0.2)"/>
<rect x="1274.2" y="873.4" width="19.8" height="58.9" fill="#45c22b"/>
<rect x="1274.2" y="890.8" width="19.8" height="1" fill="rgba(0,0,0,0.12)"/>
<path d="M1280.1 891.8V932.2M1285.7 891.8V932.2M1291.4 891.8V932.2" stroke="rgba(0,0,0,0.12)" stroke-width="1"/>
<path d="M1274.5 901.6l1-1.3 1-.6 1-1.2 1 .7 1.1 .2 1 .9 1 1.3 1 0 1 0 1 0 1 0 1 0 1 0 1 0 1.1 0 1 0 1 0 1 0 1 0 0 1.2 -1 0 -1 0 -1 0 -1 0 -1.1 0 -1 0 -1 0 -1 0 -1 0 -1 0 -1 0 -1 0 -1 1.4 -1 .9 -1.1 .2 -1 .8 -1-1.3 -1-.6 -1-1.4z" fill="#152610"/>
<path d="M1274.5 921.8l1-1.3 1-.6 1-1.2 1 .7 1.1 .2 1 .9 1 1.3 1 0 1 0 1 0 1 0 1 0 1 0 1 0 1.1 0 1 0 1 0 1 0 1 0 0 1.2 -1 0 -1 0 -1 0 -1 0 -1.1 0 -1 0 -1 0 -1 0 -1 0 -1 0 -1 0 -1 0 -1 1.4 -1 .9 -1.1 .2 -1 .8 -1-1.3 -1-.6 -1-1.4z" fill="#152610"/>
<svg x="1274.2" y="873.4" width="19.3" height="18"><text x="3.8" y="14.1" font-size="11" letter-spacing="0.55" fill="rgba(0,0,0,0.75)" stroke="rgba(0,0,0,0.75)" stroke-width="0.2">Pat</text></svg>
<rect x="1274.2" y="873.4" width="1" height="58.9" fill="rgba(0,0,0,0.2)"/>
<rect x="1366.2" y="873.4" width="33.3" height="58.9" fill="#45c22b"/>
<rect x="1366.2" y="890.8" width="33.3" height="1" fill="rgba(0,0,0,0.12)"/>
<path d="M1370.7 891.8V932.2M1376.4 891.8V932.2M1382.1 891.8V932.2M1387.7 891.8V932.2M1393.4 891.8V932.2M1399.1 891.8V932.2" stroke="rgba(0,0,0,0.12)" stroke-width="1"/>
<path d="M1366.5 901.6l1 0 1 0 1 0 1 0 1-.2 .9-.2 1-.4 1-.2 1-.8 1-.9 1 .4 1 0 1-1.8 1-.5 1-.3 1 .2 .9 .1 1 .3 1 1 1 .2 1 .1 1 .6 1 .6 1 .3 1 .1 1 .3 1 .6 .9 .4 1 .1 1 0 1 0 1 0 1 0 0 1.2 -1 0 -1 0 -1 0 -1 0 -1 .1 -.9 .5 -1 .6 -1 .3 -1 .1 -1 .3 -1 .7 -1 .6 -1 0 -1 .3 -1 1.1 -1 .2 -.9 .2 -1 .2 -1-.3 -1-.6 -1-1.9 -1 .1 -1 .3 -1-.9 -1-.8 -1-.2 -1-.5 -.9-.2 -1-.2 -1 0 -1 0 -1 0 -1 0z" fill="#152610"/>
<path d="M1366.5 921.8l1 0 1 0 1 0 1 0 1-.2 .9-.2 1-.4 1-.2 1-.8 1-.9 1 .4 1 0 1-1.8 1-.5 1-.3 1 .2 .9 .1 1 .3 1 1 1 .2 1 .1 1 .6 1 .6 1 .3 1 .1 1 .3 1 .6 .9 .4 1 .1 1 0 1 0 1 0 1 0 0 1.2 -1 0 -1 0 -1 0 -1 0 -1 .1 -.9 .5 -1 .6 -1 .3 -1 .1 -1 .3 -1 .7 -1 .6 -1 0 -1 .3 -1 1.1 -1 .2 -.9 .2 -1 .2 -1-.3 -1-.6 -1-1.9 -1 .1 -1 .3 -1-.9 -1-.8 -1-.2 -1-.5 -.9-.2 -1-.2 -1 0 -1 0 -1 0 -1 0z" fill="#152610"/>
<svg x="1366.2" y="873.4" width="32.8" height="18"><text x="3.8" y="14.1" font-size="11" letter-spacing="0.55" fill="rgba(0,0,0,0.75)" stroke="rgba(0,0,0,0.75)" stroke-width="0.2">Patte</text></svg>
<rect x="1366.2" y="873.4" width="1" height="58.9" fill="rgba(0,0,0,0.2)"/>
<rect x="1399.5" y="873.4" width="11" height="58.9" fill="#45c22b"/>
<rect x="1399.5" y="890.8" width="11" height="1" fill="rgba(0,0,0,0.12)"/>
<path d="M1404.7 891.8V932.2M1410.4 891.8V932.2" stroke="rgba(0,0,0,0.12)" stroke-width="1"/>
<path d="M1399.8 899.6l1 .4 1.1-.4 1 .2 1.1 0 1-.2 1 .2 1.1 .1 1 .1 1.1 0 1-.1 0 4.7 -1-.1 -1.1 0 -1 .1 -1.1 .2 -1 .1 -1-.2 -1.1 .1 -1 .1 -1.1-.4 -1 .4z" fill="#152610"/>
<path d="M1399.8 919.8l1 .4 1.1-.4 1 .2 1.1 0 1-.2 1 .2 1.1 .1 1 .1 1.1 0 1-.1 0 4.7 -1-.1 -1.1 0 -1 .1 -1.1 .2 -1 .1 -1-.2 -1.1 .1 -1 .1 -1.1-.4 -1 .4z" fill="#152610"/>
<svg x="1399.5" y="873.4" width="10.5" height="18"><text x="3.8" y="14.1" font-size="11" letter-spacing="0.55" fill="rgba(0,0,0,0.75)" stroke="rgba(0,0,0,0.75)" stroke-width="0.2">P</text></svg>
<rect x="1399.5" y="873.4" width="1" height="58.9" fill="rgba(0,0,0,0.2)"/>
<rect x="1410.5" y="873.4" width="17.4" height="58.9" fill="#45c22b"/>
<rect x="1410.5" y="890.8" width="17.4" height="1" fill="rgba(0,0,0,0.12)"/>
<path d="M1416.1 891.8V932.2M1421.8 891.8V932.2M1427.4 891.8V932.2" stroke="rgba(0,0,0,0.12)" stroke-width="1"/>
<path d="M1410.8 900l1 .1 1-.1 1 .2 1-.2 .9 0 1 .1 1-.1 1 .1 1 0 1 .2 1-.2 1-.1 .9 .2 1-.1 1 .2 1-.3 1 .2 0 4.1 -1 .2 -1-.3 -1 .2 -1-.1 -.9 .2 -1-.1 -1-.2 -1 .2 -1 0 -1 .1 -1-.1 -1 .1 -.9 0 -1-.2 -1 .2 -1-.1 -1 .1z" fill="#152610"/>
<path d="M1410.8 920.2l1 .1 1-.1 1 .2 1-.2 .9 0 1 .1 1-.1 1 .1 1 0 1 .2 1-.2 1-.1 .9 .2 1-.1 1 .2 1-.3 1 .2 0 4.1 -1 .2 -1-.3 -1 .2 -1-.1 -.9 .2 -1-.1 -1-.2 -1 .2 -1 0 -1 .1 -1-.1 -1 .1 -.9 0 -1-.2 -1 .2 -1-.1 -1 .1z" fill="#152610"/>
<svg x="1410.5" y="873.4" width="16.9" height="18"><text x="3.8" y="14.1" font-size="11" letter-spacing="0.55" fill="rgba(0,0,0,0.75)" stroke="rgba(0,0,0,0.75)" stroke-width="0.2">Pa</text></svg>
<rect x="1410.5" y="873.4" width="1" height="58.9" fill="rgba(0,0,0,0.2)"/>
<rect x="994.8" y="934.2" width="4.3" height="58.8" fill="#8a71e1"/>
<rect x="994.8" y="951.6" width="4.3" height="1" fill="rgba(0,0,0,0.12)"/>
<path d="M996.7 952.6V993" stroke="rgba(0,0,0,0.12)" stroke-width="1"/>
<path d="M995.1 958.6l.9 .4 1 .4 .9-.8 .9 .3 0 8.4 -.9 .3 -.9-.8 -1 .4 -.9 .4z" fill="#231d2c"/>
<path d="M995.1 978.8l.9 .4 1 .4 .9-.8 .9 .3 0 8.4 -.9 .3 -.9-.8 -1 .4 -.9 .4z" fill="#231d2c"/>
<rect x="1016.6" y="934.2" width="8.4" height="58.8" fill="#8a71e1"/>
<rect x="1016.6" y="951.6" width="8.4" height="1" fill="rgba(0,0,0,0.12)"/>
<path d="M1019.4 952.6V993" stroke="rgba(0,0,0,0.12)" stroke-width="1"/>
<path d="M1016.9 958.7l1-.5 .9 .6 1 .1 1 .5 1 .2 1-.4 .9 .2 1 .2 0 7 -1 .2 -.9 .2 -1-.4 -1 .2 -1 .5 -1 .1 -.9 .6 -1-.5z" fill="#231d2c"/>
<path d="M1016.9 978.9l1-.5 .9 .6 1 .1 1 .5 1 .2 1-.4 .9 .2 1 .2 0 7 -1 .2 -.9 .2 -1-.4 -1 .2 -1 .5 -1 .1 -.9 .6 -1-.5z" fill="#231d2c"/>
<svg x="1016.6" y="934.2" width="7.9" height="18"><text x="3.8" y="14.1" font-size="11" letter-spacing="0.55" fill="rgba(0,0,0,0.75)" stroke="rgba(0,0,0,0.75)" stroke-width="0.2">S</text></svg>
<rect x="1046.7" y="934.2" width="8.3" height="58.8" fill="#8a71e1"/>
<rect x="1046.7" y="951.6" width="8.3" height="1" fill="rgba(0,0,0,0.12)"/>
<path d="M1047.7 952.6V993M1053.4 952.6V993" stroke="rgba(0,0,0,0.12)" stroke-width="1"/>
<path d="M1047 958.8l1-.1 .9 .2 1-1.9 .9 1.2 1-.5 1-.7 .9 .5 1 1.3 0 8.6 -1 1.4 -.9 .5 -1-.7 -1-.6 -.9 1.3 -1-2 -.9 .2 -1-.1z" fill="#231d2c"/>
<path d="M1047 979l1-.1 .9 .2 1-1.9 .9 1.2 1-.5 1-.7 .9 .5 1 1.3 0 8.6 -1 1.4 -.9 .5 -1-.7 -1-.6 -.9 1.3 -1-2 -.9 .2 -1-.1z" fill="#231d2c"/>
<svg x="1046.7" y="934.2" width="7.8" height="18"><text x="3.8" y="14.1" font-size="11" letter-spacing="0.55" fill="rgba(0,0,0,0.75)" stroke="rgba(0,0,0,0.75)" stroke-width="0.2">S</text></svg>
<rect x="1081.2" y="934.2" width="1" height="58.8" fill="#6a58b0"/>
<rect x="1111.9" y="934.2" width="6.1" height="58.8" fill="#8a71e1"/>
<rect x="1111.9" y="951.6" width="6.1" height="1" fill="rgba(0,0,0,0.12)"/>
<path d="M1115.7 952.6V993" stroke="rgba(0,0,0,0.12)" stroke-width="1"/>
<path d="M1112.2 959.8l.9-1.7 .9 1.1 1 .2 .9 2.2 .9 .8 .9 0 0 1.2 -.9 0 -.9 .9 -.9 2.3 -1 .1 -.9 1.2 -.9-1.7z" fill="#231d2c"/>
<path d="M1112.2 980l.9-1.7 .9 1.1 1 .2 .9 2.2 .9 .8 .9 0 0 1.2 -.9 0 -.9 .9 -.9 2.3 -1 .1 -.9 1.2 -.9-1.7z" fill="#231d2c"/>
<rect x="1118" y="934.2" width="277.4" height="58.8" fill="#8a71e1"/>
<rect x="1118" y="951.6" width="277.4" height="1" fill="rgba(0,0,0,0.12)"/>
<path d="M1121.4 952.6V993M1127.1 952.6V993M1132.7 952.6V993M1138.4 952.6V993M1144.1 952.6V993M1149.7 952.6V993M1155.4 952.6V993M1161.1 952.6V993M1166.7 952.6V993M1172.4 952.6V993M1178.1 952.6V993M1183.7 952.6V993M1189.4 952.6V993M1195.1 952.6V993M1200.7 952.6V993M1206.4 952.6V993M1212.1 952.6V993M1217.7 952.6V993M1223.4 952.6V993M1229.1 952.6V993M1234.7 952.6V993M1240.4 952.6V993M1246.1 952.6V993M1251.7 952.6V993M1257.4 952.6V993M1263.1 952.6V993M1268.7 952.6V993M1274.4 952.6V993M1280.1 952.6V993M1285.7 952.6V993M1291.4 952.6V993M1297.1 952.6V993M1302.7 952.6V993M1308.4 952.6V993M1314.1 952.6V993M1319.7 952.6V993M1325.4 952.6V993M1331.1 952.6V993M1336.7 952.6V993M1342.4 952.6V993M1348.1 952.6V993M1353.7 952.6V993M1359.4 952.6V993M1365.1 952.6V993M1370.7 952.6V993M1376.4 952.6V993M1382.1 952.6V993M1387.7 952.6V993M1393.4 952.6V993" stroke="rgba(0,0,0,0.12)" stroke-width="1"/>
<path d="M1118.3 959l1-2.1 1 2.4 1 0 1-1.9 1 .4 1 .8 1 .4 1 .8 1-.5 1-.2 1-.3 1-1.4 1 1.6 1 .6 1 .1 1 .2 1-.4 1-.4 1 .1 1 .4 1-.8 1-.6 1 1 1 .2 1-.2 1 .3 1-.3 1-.2 1 .2 1-1 1 1.4 1-1.2 1 .6 1 0 1 .5 1-.2 1-.2 1-.6 1 .5 1 .2 1 .7 1-.4 1-.6 1-.1 .9-.4 1-.3 1-1.1 1 0 1 1.4 1-1.8 1 1.6 1 .5 1-.7 1-.4 1-.1 1 .5 1 .8 1 0 1-.3 1-.1 1-.4 1-.6 1 .1 1 1.1 1-.8 1 .2 1-.6 1-1.4 1 .5 1 .8 1 .9 1-.3 1 .6 1-.4 1-.2 1-1.8 1 1.6 1-.7 1 .5 1 .4 1-1.9 1 1.7 1-.1 1-1.1 1 .7 1 .5 1 .3 1-.2 1 .5 1-.2 1-.3 1 0 1 .4 1 .4 1 0 1 0 1-1.8 1 .9 1 .9 1 0 1-.6 1 .5 1-.5 1-1 1 .7 1 .8 1-.1 1 .8 1 0 1-.2 1-.2 1 .7 1-.6 1-.2 1 .7 1 .2 1-.2 1 0 1 .1 1-.7 1 .4 1-.6 1-.5 1-.4 1 .9 1 .1 1-.5 1 .6 1 .4 1-.6 1-.4 1 .4 1 .4 1-.1 .9-.2 1-.6 1-1.4 1 1.7 1 .1 1-1.1 1-.3 1 1.2 1 0 1 .3 1 .5 1-.3 1-.8 1-.6 1 .4 1 .6 1-1.5 1 .7 1 .1 1 .4 1 0 1-.5 1-.7 1 1.4 1 .5 1-.3 1-2.1 1 1.9 1-.9 1 .4 1-1 1 1.7 1 .6 1-.4 1-.5 1 .3 1-1.5 1 .9 1 .8 1-1.8 1 1.4 1 .2 1 .8 1-.8 1 .1 1 .6 1 .3 1 .2 1-.3 1 .1 1-1.9 1-.2 1 1.6 1 .1 1-1 1 .6 1-.9 1 1.7 1-.5 1-1 1-.4 1 .8 1-.2 1-.2 1 1.4 1-.7 1 .5 1 .2 1 .3 1-.4 1-.6 1 1 1-.4 1-.8 1-.4 1 .8 1 .1 1 .4 1 .2 1-.2 1 .3 1-.7 1-.3 1 0 1 .8 1-.5 1-1.3 1 .7 1 .5 .9 .7 1-.2 1-.1 1 0 1-.8 1 .6 1-.8 1-.9 1 .4 1 .2 1 1.2 1-.7 1-.9 1 .5 1 1.1 1-.9 1 .2 1 .5 1-.7 1-1.2 1 1.4 1 .7 1-.1 1-.1 1 .4 1-.3 1 .2 1 .2 1-.4 1 .1 1 .1 1 .3 1-.6 1-1 1 .8 1 0 1 .6 1-.1 1-.2 1 0 1 .2 1 .2 1 .3 1 .1 1-.4 0 7.2 -1-.5 -1 .1 -1 .4 -1 .1 -1 .3 -1 0 -1-.2 -1-.1 -1 .6 -1 0 -1 .8 -1-.9 -1-.7 -1 .3 -1 .1 -1 .1 -1-.4 -1 .2 -1 .1 -1-.3 -1 .5 -1-.1 -1-.1 -1 .7 -1 1.5 -1-1.3 -1-.7 -1 .5 -1 .3 -1-1 -1 1.2 -1 .5 -1-.9 -1-.8 -1 1.2 -1 .2 -1 .5 -1-1 -1-.8 -1 .6 -1-.8 -1 0 -1-.1 -1-.2 -.9 .8 -1 .4 -1 .7 -1-1.3 -1-.5 -1 .8 -1 0 -1-.3 -1-.7 -1 .2 -1-.2 -1 .3 -1 .4 -1 .2 -1 .7 -1-.4 -1-.9 -1-.4 -1 1.1 -1-.7 -1-.3 -1 .3 -1 .2 -1 .5 -1-.7 -1 1.5 -1-.2 -1-.2 -1 .8 -1-.4 -1-1.1 -1-.5 -1 1.7 -1-.9 -1 .7 -1-1.1 -1 .1 -1 1.7 -1-.2 -1-2.1 -1 .2 -1-.4 -1 .2 -1 .3 -1 .7 -1 .1 -1-.8 -1 .8 -1 .3 -1 1.5 -1-2 -1 .9 -1 .9 -1-1.5 -1 .2 -1-.5 -1-.4 -1 .7 -1 1.8 -1-1.1 -1 .4 -1-1 -1 2 -1-2.2 -1-.3 -1 .5 -1 1.5 -1-.7 -1-.6 -1 0 -1 .5 -1 .1 -1 .7 -1-1.5 -1 .5 -1 .4 -1-.5 -1-.9 -1-.3 -1 .5 -1 .4 -1 0 -1 1.2 -1-.3 -1-1.1 -1 0 -1 1.8 -1-1.4 -1-.7 -.9-.2 -1-.1 -1 .4 -1 .4 -1-.3 -1-.8 -1 .5 -1 .7 -1-.6 -1 .1 -1 1 -1-.5 -1-.5 -1-.6 -1 .5 -1-.8 -1 .1 -1 0 -1-.3 -1 .3 -1 .7 -1-.2 -1-.7 -1 .8 -1-.2 -1-.2 -1-.1 -1 .9 -1-.1 -1 .8 -1 .8 -1-1.1 -1-.4 -1 .5 -1-.6 -1-.1 -1 .9 -1 1 -1-1.9 -1 0 -1 .1 -1 .3 -1 .5 -1 0 -1-.4 -1-.2 -1 .6 -1-.2 -1 .2 -1 .6 -1 .7 -1-1.2 -1 0 -1 1.8 -1-2 -1 .4 -1 .5 -1-.8 -1 1.7 -1-1.8 -1-.3 -1-.4 -1 .6 -1-.3 -1 1 -1 .8 -1 .6 -1-1.6 -1-.6 -1 .2 -1-.8 -1 1.2 -1 .1 -1-.7 -1-.4 -1-.1 -1-.3 -1 0 -1 .8 -1 .5 -1-.1 -1-.4 -1-.7 -1 .5 -1 1.8 -1-2 -1 1.5 -1 0 -1-1.2 -1-.3 -.9-.4 -1 0 -1-.7 -1-.4 -1 .7 -1 .2 -1 .5 -1-.6 -1-.3 -1-.1 -1 .5 -1 0 -1 .6 -1-1.3 -1 1.5 -1-1 -1 .2 -1-.2 -1-.3 -1 .3 -1-.2 -1 .2 -1 1 -1-.5 -1-1 -1 .5 -1 .1 -1-.4 -1-.4 -1 .1 -1 .2 -1 .5 -1 1.7 -1-1.4 -1-.3 -1-.3 -1-.4 -1 .8 -1 .4 -1 .8 -1 .5 -1-2 -1 0 -1 2.5 -1-2.2z" fill="#231d2c"/>
<path d="M1118.3 979.2l1-2.1 1 2.4 1 0 1-1.9 1 .4 1 .8 1 .4 1 .8 1-.5 1-.2 1-.3 1-1.4 1 1.6 1 .6 1 .1 1 .2 1-.4 1-.4 1 .1 1 .4 1-.8 1-.6 1 1 1 .2 1-.2 1 .3 1-.3 1-.2 1 .2 1-1 1 1.4 1-1.2 1 .6 1 0 1 .5 1-.2 1-.2 1-.6 1 .5 1 .2 1 .7 1-.4 1-.6 1-.1 .9-.4 1-.3 1-1.1 1 0 1 1.4 1-1.8 1 1.6 1 .5 1-.7 1-.4 1-.1 1 .5 1 .8 1 0 1-.3 1-.1 1-.4 1-.6 1 .1 1 1.1 1-.8 1 .2 1-.6 1-1.4 1 .5 1 .8 1 .9 1-.3 1 .6 1-.4 1-.2 1-1.8 1 1.6 1-.7 1 .5 1 .4 1-1.9 1 1.7 1-.1 1-1.1 1 .7 1 .5 1 .3 1-.2 1 .5 1-.2 1-.3 1 0 1 .4 1 .4 1 0 1 0 1-1.8 1 .9 1 .9 1 0 1-.6 1 .5 1-.5 1-1 1 .7 1 .8 1-.1 1 .8 1 0 1-.2 1-.2 1 .7 1-.6 1-.2 1 .7 1 .2 1-.2 1 0 1 .1 1-.7 1 .4 1-.6 1-.5 1-.4 1 .9 1 .1 1-.5 1 .6 1 .4 1-.6 1-.4 1 .4 1 .4 1-.1 .9-.2 1-.6 1-1.4 1 1.7 1 .1 1-1.1 1-.3 1 1.2 1 0 1 .3 1 .5 1-.3 1-.8 1-.6 1 .4 1 .6 1-1.5 1 .7 1 .1 1 .4 1 0 1-.5 1-.7 1 1.4 1 .5 1-.3 1-2.1 1 1.9 1-.9 1 .4 1-1 1 1.7 1 .6 1-.4 1-.5 1 .3 1-1.5 1 .9 1 .8 1-1.8 1 1.4 1 .2 1 .8 1-.8 1 .1 1 .6 1 .3 1 .2 1-.3 1 .1 1-1.9 1-.2 1 1.6 1 .1 1-1 1 .6 1-.9 1 1.7 1-.5 1-1 1-.4 1 .8 1-.2 1-.2 1 1.4 1-.7 1 .5 1 .2 1 .3 1-.4 1-.6 1 1 1-.4 1-.8 1-.4 1 .8 1 .1 1 .4 1 .2 1-.2 1 .3 1-.7 1-.3 1 0 1 .8 1-.5 1-1.3 1 .7 1 .5 .9 .7 1-.2 1-.1 1 0 1-.8 1 .6 1-.8 1-.9 1 .4 1 .2 1 1.2 1-.7 1-.9 1 .5 1 1.1 1-.9 1 .2 1 .5 1-.7 1-1.2 1 1.4 1 .7 1-.1 1-.1 1 .4 1-.3 1 .2 1 .2 1-.4 1 .1 1 .1 1 .3 1-.6 1-1 1 .8 1 0 1 .6 1-.1 1-.2 1 0 1 .2 1 .2 1 .3 1 .1 1-.4 0 7.2 -1-.5 -1 .1 -1 .4 -1 .1 -1 .3 -1 0 -1-.2 -1-.1 -1 .6 -1 0 -1 .8 -1-.9 -1-.7 -1 .3 -1 .1 -1 .1 -1-.4 -1 .2 -1 .1 -1-.3 -1 .5 -1-.1 -1-.1 -1 .7 -1 1.5 -1-1.3 -1-.7 -1 .5 -1 .3 -1-1 -1 1.2 -1 .5 -1-.9 -1-.8 -1 1.2 -1 .2 -1 .5 -1-1 -1-.8 -1 .6 -1-.8 -1 0 -1-.1 -1-.2 -.9 .8 -1 .4 -1 .7 -1-1.3 -1-.5 -1 .8 -1 0 -1-.3 -1-.7 -1 .2 -1-.2 -1 .3 -1 .4 -1 .2 -1 .7 -1-.4 -1-.9 -1-.4 -1 1.1 -1-.7 -1-.3 -1 .3 -1 .2 -1 .5 -1-.7 -1 1.5 -1-.2 -1-.2 -1 .8 -1-.4 -1-1.1 -1-.5 -1 1.7 -1-.9 -1 .7 -1-1.1 -1 .1 -1 1.7 -1-.2 -1-2.1 -1 .2 -1-.4 -1 .2 -1 .3 -1 .7 -1 .1 -1-.8 -1 .8 -1 .3 -1 1.5 -1-2 -1 .9 -1 .9 -1-1.5 -1 .2 -1-.5 -1-.4 -1 .7 -1 1.8 -1-1.1 -1 .4 -1-1 -1 2 -1-2.2 -1-.3 -1 .5 -1 1.5 -1-.7 -1-.6 -1 0 -1 .5 -1 .1 -1 .7 -1-1.5 -1 .5 -1 .4 -1-.5 -1-.9 -1-.3 -1 .5 -1 .4 -1 0 -1 1.2 -1-.3 -1-1.1 -1 0 -1 1.8 -1-1.4 -1-.7 -.9-.2 -1-.1 -1 .4 -1 .4 -1-.3 -1-.8 -1 .5 -1 .7 -1-.6 -1 .1 -1 1 -1-.5 -1-.5 -1-.6 -1 .5 -1-.8 -1 .1 -1 0 -1-.3 -1 .3 -1 .7 -1-.2 -1-.7 -1 .8 -1-.2 -1-.2 -1-.1 -1 .9 -1-.1 -1 .8 -1 .8 -1-1.1 -1-.4 -1 .5 -1-.6 -1-.1 -1 .9 -1 1 -1-1.9 -1 0 -1 .1 -1 .3 -1 .5 -1 0 -1-.4 -1-.2 -1 .6 -1-.2 -1 .2 -1 .6 -1 .7 -1-1.2 -1 0 -1 1.8 -1-2 -1 .4 -1 .5 -1-.8 -1 1.7 -1-1.8 -1-.3 -1-.4 -1 .6 -1-.3 -1 1 -1 .8 -1 .6 -1-1.6 -1-.6 -1 .2 -1-.8 -1 1.2 -1 .1 -1-.7 -1-.4 -1-.1 -1-.3 -1 0 -1 .8 -1 .5 -1-.1 -1-.4 -1-.7 -1 .5 -1 1.8 -1-2 -1 1.5 -1 0 -1-1.2 -1-.3 -.9-.4 -1 0 -1-.7 -1-.4 -1 .7 -1 .2 -1 .5 -1-.6 -1-.3 -1-.1 -1 .5 -1 0 -1 .6 -1-1.3 -1 1.5 -1-1 -1 .2 -1-.2 -1-.3 -1 .3 -1-.2 -1 .2 -1 1 -1-.5 -1-1 -1 .5 -1 .1 -1-.4 -1-.4 -1 .1 -1 .2 -1 .5 -1 1.7 -1-1.4 -1-.3 -1-.3 -1-.4 -1 .8 -1 .4 -1 .8 -1 .5 -1-2 -1 0 -1 2.5 -1-2.2z" fill="#231d2c"/>
<svg x="1118" y="934.2" width="276.9" height="18"><text x="3.8" y="14.1" font-size="11" letter-spacing="0.55" fill="rgba(0,0,0,0.75)" stroke="rgba(0,0,0,0.75)" stroke-width="0.2">Train Transformed</text></svg>
<rect x="1118" y="934.2" width="1" height="58.8" fill="rgba(0,0,0,0.2)"/>
<rect x="1386" y="962.6" width="9" height="0.9" fill="#231d2c"/><rect x="1386" y="982.8" width="9" height="0.9" fill="#231d2c"/>
<path d="M157 40.5V1051M267.5 40.5V1051M316 40.5V1051M388 40.5V1051M447.6 40.5V1051M508.6 40.5V1051M569.6 40.5V1051M629.2 40.5V1051M758.4 40.5V1051M980.6 40.5V1051M1115.7 40.5V1051M1251.3 40.5V1051" stroke="#151515" stroke-width="1.1"/>
<path d="M157 40.8L167 46.5L157 52.3Z" fill="#787878" stroke="#1a1a1a" stroke-width="1"/>
<path d="M267.5 40.8L277.5 46.5L267.5 52.3Z" fill="#787878" stroke="#1a1a1a" stroke-width="1"/>
<path d="M316 40.8L326 46.5L316 52.3Z" fill="#787878" stroke="#1a1a1a" stroke-width="1"/>
<path d="M388 40.8L398 46.5L388 52.3Z" fill="#787878" stroke="#1a1a1a" stroke-width="1"/>
<path d="M447.6 40.8L457.6 46.5L447.6 52.3Z" fill="#787878" stroke="#1a1a1a" stroke-width="1"/>
<path d="M508.6 40.8L518.6 46.5L508.6 52.3Z" fill="#787878" stroke="#1a1a1a" stroke-width="1"/>
<path d="M569.6 40.8L579.6 46.5L569.6 52.3Z" fill="#787878" stroke="#1a1a1a" stroke-width="1"/>
<path d="M629.2 40.8L639.2 46.5L629.2 52.3Z" fill="#787878" stroke="#1a1a1a" stroke-width="1"/>
<path d="M758.4 40.8L768.4 46.5L758.4 52.3Z" fill="#787878" stroke="#1a1a1a" stroke-width="1"/>
<path d="M980.6 40.8L990.6 46.5L980.6 52.3Z" fill="#787878" stroke="#1a1a1a" stroke-width="1"/>
<path d="M1115.7 40.8L1125.7 46.5L1115.7 52.3Z" fill="#787878" stroke="#1a1a1a" stroke-width="1"/>
<path d="M1251.3 40.8L1261.3 46.5L1251.3 52.3Z" fill="#787878" stroke="#1a1a1a" stroke-width="1"/>
<path d="M1446.5 26V1051" stroke="#151515" stroke-width="1.1"/>
<rect x="5.2" y="26.1" width="1441.6" height="11.8" fill="#1d1d1d"/>
<rect x="5.5" y="27.1" width="1441" height="9.8" fill="#797979"/>
<path d="M5.8 27.3L15.8 32L5.8 36.8" fill="none" stroke="#1d1d1d" stroke-width="1"/>
<path d="M1446.2 27.3L1436.5 32L1446.2 36.8" fill="none" stroke="#1d1d1d" stroke-width="1"/>
<rect x="1447.6" y="26.1" width="27" height="11.9" fill="#5a5a5a"/>
<path d="M1450.1 26.1V38M1455.8 26.1V38M1461.4 26.1V38M1467.1 26.1V38M1472.8 26.1V38" stroke="#505050" stroke-width="1" fill="none"/>
<path d="M5.5 25V18.6Q5.5 17.8 6.6 17.8M50.8 25V18.6Q50.8 17.8 51.9 17.8M96.2 25V18.6Q96.2 17.8 97.3 17.8M141.5 25V18.6Q141.5 17.8 142.6 17.8M186.8 25V18.6Q186.8 17.8 187.9 17.8M232.2 25V18.6Q232.2 17.8 233.3 17.8M277.5 25V18.6Q277.5 17.8 278.6 17.8M322.9 25V18.6Q322.9 17.8 324 17.8M368.2 25V18.6Q368.2 17.8 369.3 17.8M413.5 25V18.6Q413.5 17.8 414.6 17.8M458.9 25V18.6Q458.9 17.8 460 17.8M504.2 25V18.6Q504.2 17.8 505.3 17.8M549.5 25V18.6Q549.5 17.8 550.6 17.8M594.9 25V18.6Q594.9 17.8 596 17.8M640.2 25V18.6Q640.2 17.8 641.3 17.8M685.5 25V18.6Q685.5 17.8 686.6 17.8M730.9 25V18.6Q730.9 17.8 732 17.8M776.2 25V18.6Q776.2 17.8 777.3 17.8M821.5 25V18.6Q821.5 17.8 822.6 17.8M866.9 25V18.6Q866.9 17.8 868 17.8M912.2 25V18.6Q912.2 17.8 913.3 17.8M957.6 25V18.6Q957.6 17.8 958.7 17.8M1002.9 25V18.6Q1002.9 17.8 1004 17.8M1048.2 25V18.6Q1048.2 17.8 1049.3 17.8M1093.6 25V18.6Q1093.6 17.8 1094.7 17.8M1138.9 25V18.6Q1138.9 17.8 1140 17.8M1184.2 25V18.6Q1184.2 17.8 1185.3 17.8M1229.6 25V18.6Q1229.6 17.8 1230.7 17.8M1274.9 25V18.6Q1274.9 17.8 1276 17.8M1320.2 25V18.6Q1320.2 17.8 1321.3 17.8M1365.6 25V18.6Q1365.6 17.8 1366.7 17.8M1410.9 25V18.6Q1410.9 17.8 1412 17.8M1456.3 25V18.6Q1456.3 17.8 1457.4 17.8M28.2 25V23.2M73.5 25V23.2M118.8 25V23.2M164.2 25V23.2M209.5 25V23.2M254.8 25V23.2M300.2 25V23.2M345.5 25V23.2M390.9 25V23.2M436.2 25V23.2M481.5 25V23.2M526.9 25V23.2M572.2 25V23.2M617.5 25V23.2M662.9 25V23.2M708.2 25V23.2M753.5 25V23.2M798.9 25V23.2M844.2 25V23.2M889.6 25V23.2M934.9 25V23.2M980.2 25V23.2M1025.6 25V23.2M1070.9 25V23.2M1116.2 25V23.2M1161.6 25V23.2M1206.9 25V23.2M1252.2 25V23.2M1297.6 25V23.2M1342.9 25V23.2M1388.2 25V23.2M1433.6 25V23.2" stroke="#9a9a9a" stroke-width="1" fill="none"/>
<text x="10.6" y="22.8" font-size="11.4" letter-spacing="0.5" fill="#cdcdcd" stroke="#cdcdcd" stroke-width="0.15">1</text>
<text x="55.9" y="22.8" font-size="11.4" letter-spacing="0.5" fill="#cdcdcd" stroke="#cdcdcd" stroke-width="0.15">9</text>
<text x="101.3" y="22.8" font-size="11.4" letter-spacing="0.5" fill="#cdcdcd" stroke="#cdcdcd" stroke-width="0.15">17</text>
<text x="146.6" y="22.8" font-size="11.4" letter-spacing="0.5" fill="#cdcdcd" stroke="#cdcdcd" stroke-width="0.15">25</text>
<text x="191.9" y="22.8" font-size="11.4" letter-spacing="0.5" fill="#cdcdcd" stroke="#cdcdcd" stroke-width="0.15">33</text>
<text x="237.3" y="22.8" font-size="11.4" letter-spacing="0.5" fill="#cdcdcd" stroke="#cdcdcd" stroke-width="0.15">41</text>
<text x="282.6" y="22.8" font-size="11.4" letter-spacing="0.5" fill="#cdcdcd" stroke="#cdcdcd" stroke-width="0.15">49</text>
<text x="328" y="22.8" font-size="11.4" letter-spacing="0.5" fill="#cdcdcd" stroke="#cdcdcd" stroke-width="0.15">57</text>
<text x="373.3" y="22.8" font-size="11.4" letter-spacing="0.5" fill="#cdcdcd" stroke="#cdcdcd" stroke-width="0.15">65</text>
<text x="418.6" y="22.8" font-size="11.4" letter-spacing="0.5" fill="#cdcdcd" stroke="#cdcdcd" stroke-width="0.15">73</text>
<text x="464" y="22.8" font-size="11.4" letter-spacing="0.5" fill="#cdcdcd" stroke="#cdcdcd" stroke-width="0.15">81</text>
<text x="509.3" y="22.8" font-size="11.4" letter-spacing="0.5" fill="#cdcdcd" stroke="#cdcdcd" stroke-width="0.15">89</text>
<text x="554.6" y="22.8" font-size="11.4" letter-spacing="0.5" fill="#cdcdcd" stroke="#cdcdcd" stroke-width="0.15">97</text>
<text x="600" y="22.8" font-size="11.4" letter-spacing="0.5" fill="#cdcdcd" stroke="#cdcdcd" stroke-width="0.15">105</text>
<text x="645.3" y="22.8" font-size="11.4" letter-spacing="0.5" fill="#cdcdcd" stroke="#cdcdcd" stroke-width="0.15">113</text>
<text x="690.6" y="22.8" font-size="11.4" letter-spacing="0.5" fill="#cdcdcd" stroke="#cdcdcd" stroke-width="0.15">121</text>
<text x="736" y="22.8" font-size="11.4" letter-spacing="0.5" fill="#cdcdcd" stroke="#cdcdcd" stroke-width="0.15">129</text>
<text x="781.3" y="22.8" font-size="11.4" letter-spacing="0.5" fill="#cdcdcd" stroke="#cdcdcd" stroke-width="0.15">137</text>
<text x="826.6" y="22.8" font-size="11.4" letter-spacing="0.5" fill="#cdcdcd" stroke="#cdcdcd" stroke-width="0.15">145</text>
<text x="872" y="22.8" font-size="11.4" letter-spacing="0.5" fill="#cdcdcd" stroke="#cdcdcd" stroke-width="0.15">153</text>
<text x="917.3" y="22.8" font-size="11.4" letter-spacing="0.5" fill="#cdcdcd" stroke="#cdcdcd" stroke-width="0.15">161</text>
<text x="962.7" y="22.8" font-size="11.4" letter-spacing="0.5" fill="#cdcdcd" stroke="#cdcdcd" stroke-width="0.15">169</text>
<text x="1008" y="22.8" font-size="11.4" letter-spacing="0.5" fill="#cdcdcd" stroke="#cdcdcd" stroke-width="0.15">177</text>
<text x="1053.3" y="22.8" font-size="11.4" letter-spacing="0.5" fill="#cdcdcd" stroke="#cdcdcd" stroke-width="0.15">185</text>
<text x="1098.7" y="22.8" font-size="11.4" letter-spacing="0.5" fill="#cdcdcd" stroke="#cdcdcd" stroke-width="0.15">193</text>
<text x="1144" y="22.8" font-size="11.4" letter-spacing="0.5" fill="#cdcdcd" stroke="#cdcdcd" stroke-width="0.15">201</text>
<text x="1189.3" y="22.8" font-size="11.4" letter-spacing="0.5" fill="#cdcdcd" stroke="#cdcdcd" stroke-width="0.15">209</text>
<text x="1234.7" y="22.8" font-size="11.4" letter-spacing="0.5" fill="#cdcdcd" stroke="#cdcdcd" stroke-width="0.15">217</text>
<text x="1280" y="22.8" font-size="11.4" letter-spacing="0.5" fill="#cdcdcd" stroke="#cdcdcd" stroke-width="0.15">225</text>
<text x="1325.3" y="22.8" font-size="11.4" letter-spacing="0.5" fill="#cdcdcd" stroke="#cdcdcd" stroke-width="0.15">233</text>
<text x="1370.7" y="22.8" font-size="11.4" letter-spacing="0.5" fill="#cdcdcd" stroke="#cdcdcd" stroke-width="0.15">241</text>
<text x="1416" y="22.8" font-size="11.4" letter-spacing="0.5" fill="#cdcdcd" stroke="#cdcdcd" stroke-width="0.15">249</text>
<rect x="0" y="1051.2" width="1688" height="23" fill="#323232"/>
<rect x="0" y="1070.6" width="1688" height="3.4" fill="#4b4b4b"/>
<path d="M0 1063Q0 1070.6 7 1070.6H0Z" fill="#4b4b4b"/>
<path d="M5.5 1051V1059.6Q5.5 1060.4 6.6 1060.4M35.7 1051V1053.6M65.9 1051V1053.6M96.2 1051V1053.6M126.4 1051V1053.6M156.6 1051V1053.6M186.8 1051V1059.6Q186.8 1060.4 187.9 1060.4M217 1051V1053.6M247.3 1051V1053.6M277.5 1051V1053.6M307.7 1051V1053.6M337.9 1051V1053.6M368.1 1051V1059.6Q368.1 1060.4 369.2 1060.4M398.4 1051V1053.6M428.6 1051V1053.6M458.8 1051V1053.6M489 1051V1053.6M519.2 1051V1053.6M549.5 1051V1059.6Q549.5 1060.4 550.6 1060.4M579.7 1051V1053.6M609.9 1051V1053.6M640.1 1051V1053.6M670.3 1051V1053.6M700.6 1051V1053.6M730.8 1051V1059.6Q730.8 1060.4 731.9 1060.4M761 1051V1053.6M791.2 1051V1053.6M821.4 1051V1053.6M851.7 1051V1053.6M881.9 1051V1053.6M912.1 1051V1059.6Q912.1 1060.4 913.2 1060.4M942.3 1051V1053.6M972.5 1051V1053.6M1002.8 1051V1053.6M1033 1051V1053.6M1063.2 1051V1053.6M1093.4 1051V1059.6Q1093.4 1060.4 1094.5 1060.4M1123.6 1051V1053.6M1153.9 1051V1053.6M1184.1 1051V1053.6M1214.3 1051V1053.6M1244.5 1051V1053.6M1274.7 1051V1059.6Q1274.7 1060.4 1275.8 1060.4M1305 1051V1053.6M1335.2 1051V1053.6M1365.4 1051V1053.6M1395.6 1051V1053.6M1425.8 1051V1053.6M1456.1 1051V1053.6" stroke="#9a9a9a" stroke-width="1" fill="none"/>
<text x="8.2" y="1063.6" font-size="11" letter-spacing="0.35" fill="#c8c8c8">0:00</text>
<text x="189.5" y="1063.6" font-size="11" letter-spacing="0.35" fill="#c8c8c8">1:00</text>
<text x="370.8" y="1063.6" font-size="11" letter-spacing="0.35" fill="#c8c8c8">2:00</text>
<text x="552.2" y="1063.6" font-size="11" letter-spacing="0.35" fill="#c8c8c8">3:00</text>
<text x="733.5" y="1063.6" font-size="11" letter-spacing="0.35" fill="#c8c8c8">4:00</text>
<text x="914.8" y="1063.6" font-size="11" letter-spacing="0.35" fill="#c8c8c8">5:00</text>
<text x="1096.1" y="1063.6" font-size="11" letter-spacing="0.35" fill="#c8c8c8">6:00</text>
<text x="1277.4" y="1063.6" font-size="11" letter-spacing="0.35" fill="#c8c8c8">7:00</text>
<path d="M967.8 56.2L972.3 56.2L972.3 61" fill="#c4e9f7"/>
<path d="M967.8 1051.2L972.3 1051.2L972.3 1055.5" fill="#c4e9f7"/>
<path d="M1059.3 56.2L1054.8 56.2L1054.8 61" fill="#c4e9f7"/>
<path d="M1059.3 1051.2L1054.8 1051.2L1054.8 1055.5" fill="#c4e9f7"/>
<rect x="1474.6" y="61" width="213.4" height="1010" fill="#3c3c3c"/>
<rect x="1474.6" y="0" width="213.4" height="61" fill="#303030"/>
<rect x="1476.2" y="61.8" width="209.8" height="58.7" fill="#f6f08a"/>
<circle cx="1486.8" cy="71.3" r="6.4" fill="none" stroke="rgba(0,0,0,0.78)" stroke-width="1.1"/>
<path d="M1483.1 69.5H1490.5L1486.8 74.4Z" fill="rgba(0,0,0,0.78)"/>
<text x="1502.8" y="74.3" font-size="11" font-weight="bold" letter-spacing="0.25" fill="rgba(0,0,0,0.8)">Water + Breathe</text>
<rect x="1476.2" y="122.5" width="209.8" height="58.9" fill="#d3a873"/>
<circle cx="1486.8" cy="131.9" r="6.4" fill="none" stroke="rgba(0,0,0,0.78)" stroke-width="1.1"/>
<path d="M1483.1 130.1H1490.5L1486.8 135Z" fill="rgba(0,0,0,0.78)"/>
<text x="1502.8" y="134.9" font-size="11" font-weight="bold" letter-spacing="0.25" fill="rgba(0,0,0,0.8)">Water-Rock Rhythmic 1</text>
<rect x="1476.2" y="183.2" width="209.8" height="58.9" fill="#fdeb4b"/>
<circle cx="1486.8" cy="192.8" r="6.4" fill="none" stroke="rgba(0,0,0,0.78)" stroke-width="1.1"/>
<path d="M1483.1 190.9H1490.5L1486.8 195.8Z" fill="rgba(0,0,0,0.78)"/>
<text x="1502.8" y="195.8" font-size="11" font-weight="bold" letter-spacing="0.25" fill="rgba(0,0,0,0.8)">Breathe Variations</text>
<rect x="1476.2" y="244.1" width="209.8" height="58.8" fill="#9c7450"/>
<circle cx="1486.8" cy="253.6" r="6.4" fill="none" stroke="rgba(0,0,0,0.78)" stroke-width="1.1"/>
<path d="M1483.1 251.8H1490.5L1486.8 256.7Z" fill="rgba(0,0,0,0.78)"/>
<text x="1502.8" y="256.6" font-size="11" font-weight="bold" letter-spacing="0.25" fill="rgba(0,0,0,0.8)">Water-Rock Pulse</text>
<rect x="1476.2" y="304.8" width="209.8" height="58.9" fill="#d49f3a"/>
<circle cx="1486.8" cy="314.3" r="6.4" fill="none" stroke="rgba(0,0,0,0.78)" stroke-width="1.1"/>
<path d="M1483.1 312.5H1490.5L1486.8 317.4Z" fill="rgba(0,0,0,0.78)"/>
<text x="1502.8" y="317.3" font-size="11" font-weight="bold" letter-spacing="0.25" fill="rgba(0,0,0,0.8)">Water Rock Rhythmic 2</text>
<rect x="1476.2" y="365.6" width="209.8" height="58.9" fill="#bff234"/>
<circle cx="1486.8" cy="375.1" r="6.4" fill="none" stroke="rgba(0,0,0,0.78)" stroke-width="1.1"/>
<path d="M1483.1 373.3H1490.5L1486.8 378.2Z" fill="rgba(0,0,0,0.78)"/>
<text x="1502.8" y="378.1" font-size="11" font-weight="bold" letter-spacing="0.25" fill="rgba(0,0,0,0.8)">SeaShell Layer</text>
<rect x="1476.2" y="426.4" width="209.8" height="58.8" fill="#8a71e1"/>
<circle cx="1486.8" cy="435.9" r="6.4" fill="none" stroke="rgba(0,0,0,0.78)" stroke-width="1.1"/>
<path d="M1483.1 434.1H1490.5L1486.8 439.1Z" fill="rgba(0,0,0,0.78)"/>
<text x="1502.8" y="438.9" font-size="11" font-weight="bold" letter-spacing="0.25" fill="rgba(0,0,0,0.8)">Train Transformation 1</text>
<rect x="1476.2" y="487.2" width="209.8" height="58.8" fill="#fba43d"/>
<circle cx="1486.8" cy="496.7" r="6.4" fill="none" stroke="rgba(0,0,0,0.78)" stroke-width="1.1"/>
<path d="M1483.1 494.9H1490.5L1486.8 499.8Z" fill="rgba(0,0,0,0.78)"/>
<text x="1502.8" y="499.7" font-size="11" font-weight="bold" letter-spacing="0.25" fill="rgba(0,0,0,0.8)">Karakoy Iskele Gicirtisi Layer 1</text>
<rect x="1476.2" y="548" width="209.8" height="58.9" fill="#fba43d"/>
<circle cx="1486.8" cy="557.5" r="6.4" fill="none" stroke="rgba(0,0,0,0.78)" stroke-width="1.1"/>
<path d="M1483.1 555.8H1490.5L1486.8 560.6Z" fill="rgba(0,0,0,0.78)"/>
<text x="1502.8" y="560.5" font-size="11" font-weight="bold" letter-spacing="0.25" fill="rgba(0,0,0,0.8)">Karakoy Iskele Gicirtisi Layer 2</text>
<rect x="1476.2" y="608.9" width="209.8" height="58.8" fill="#fba43d"/>
<circle cx="1486.8" cy="618.4" r="6.4" fill="none" stroke="rgba(0,0,0,0.78)" stroke-width="1.1"/>
<path d="M1483.1 616.6H1490.5L1486.8 621.5Z" fill="rgba(0,0,0,0.78)"/>
<text x="1502.8" y="621.4" font-size="11" font-weight="bold" letter-spacing="0.25" fill="rgba(0,0,0,0.8)">Karakoy Iskele Gicirtisi Layer 3</text>
<rect x="1476.2" y="669.6" width="209.8" height="19.4" fill="#fba43d"/>
<circle cx="1486.8" cy="679.1" r="6.4" fill="none" stroke="rgba(0,0,0,0.78)" stroke-width="1.1"/>
<path d="M1485 675.5V682.8L1489.9 679.1Z" fill="rgba(0,0,0,0.78)"/>
<text x="1502.8" y="682.1" font-size="11" font-weight="bold" letter-spacing="0.25" fill="rgba(0,0,0,0.8)">Gicirti Sum</text>
<rect x="1476.2" y="691" width="209.8" height="58.8" fill="#e554a0"/>
<circle cx="1486.8" cy="700.5" r="6.4" fill="none" stroke="rgba(0,0,0,0.78)" stroke-width="1.1"/>
<path d="M1483.1 698.7H1490.5L1486.8 703.6Z" fill="rgba(0,0,0,0.78)"/>
<text x="1502.8" y="703.5" font-size="11" font-weight="bold" letter-spacing="0.25" fill="rgba(0,0,0,0.8)">Rhythmic Layer 1, from Gicirti</text>
<rect x="1476.2" y="751.8" width="209.8" height="58.9" fill="#e554a0"/>
<circle cx="1486.8" cy="761.3" r="6.4" fill="none" stroke="rgba(0,0,0,0.78)" stroke-width="1.1"/>
<path d="M1483.1 759.5H1490.5L1486.8 764.4Z" fill="rgba(0,0,0,0.78)"/>
<text x="1502.8" y="764.3" font-size="11" font-weight="bold" letter-spacing="0.25" fill="rgba(0,0,0,0.8)">Rhythmic Layer 2, from Gicirti</text>
<rect x="1476.2" y="812.6" width="209.8" height="58.8" fill="#45c22b"/>
<circle cx="1486.8" cy="822.1" r="6.4" fill="none" stroke="rgba(0,0,0,0.78)" stroke-width="1.1"/>
<path d="M1483.1 820.3H1490.5L1486.8 825.2Z" fill="rgba(0,0,0,0.78)"/>
<text x="1502.8" y="825.1" font-size="11" font-weight="bold" letter-spacing="0.25" fill="rgba(0,0,0,0.8)">Train Original 1</text>
<rect x="1476.2" y="873.4" width="209.8" height="58.9" fill="#45c22b"/>
<circle cx="1486.8" cy="882.9" r="6.4" fill="none" stroke="rgba(0,0,0,0.78)" stroke-width="1.1"/>
<path d="M1483.1 881.1H1490.5L1486.8 886Z" fill="rgba(0,0,0,0.78)"/>
<text x="1502.8" y="885.9" font-size="11" font-weight="bold" letter-spacing="0.25" fill="rgba(0,0,0,0.8)">Train Original 2</text>
<rect x="1476.2" y="934.2" width="209.8" height="58.8" fill="#8a71e1"/>
<circle cx="1486.8" cy="943.7" r="6.4" fill="none" stroke="rgba(0,0,0,0.78)" stroke-width="1.1"/>
<path d="M1483.1 941.9H1490.5L1486.8 946.8Z" fill="rgba(0,0,0,0.78)"/>
<text x="1502.8" y="946.7" font-size="11" font-weight="bold" letter-spacing="0.25" fill="rgba(0,0,0,0.8)">Train Transformation 2</text>
<rect x="1476.2" y="994.9" width="209.8" height="32.3" fill="#606060"/>
<rect x="1476.2" y="1027.2" width="209.8" height="4.6" fill="#444"/>
<rect x="1476.2" y="1031.8" width="209.8" height="19.2" fill="#9c7450"/>
<circle cx="1486.8" cy="1041.6" r="6.4" fill="none" stroke="rgba(0,0,0,0.78)" stroke-width="1.1"/>
<path d="M1485 1038V1045.2L1489.9 1041.6Z" fill="rgba(0,0,0,0.78)"/>
<text x="1505" y="1045" font-size="11" font-weight="bold" letter-spacing="0.25" fill="rgba(0,0,0,0.8)">Master</text>
<rect x="1479.6" y="24.6" width="31.4" height="12.6" rx="6.3" fill="#4a4a4a"/>
<text x="1494.6" y="34.6" font-size="11" text-anchor="middle" letter-spacing="0.3" fill="#ececec" stroke="#ececec" stroke-width="0.25">Set</text>
<circle cx="1485.8" cy="47.7" r="6" fill="#474747"/>
<path d="M1481.6 47.7L1485.5 43.8V46.7H1489.4V48.7H1485.5V51.6Z" fill="#ececec"/>
<circle cx="1504.7" cy="47.7" r="6" fill="#474747"/>
<path d="M1508.9 47.7L1505 43.8V46.7H1501.1V48.7H1505V51.6Z" fill="#ececec"/>
<rect x="1526" y="41.8" width="23.4" height="12" fill="#4a4a4a"/>
<path d="M1535.4 50.6L1540.2 45.2" stroke="#eaeaea" stroke-width="1.6"/><circle cx="1535.2" cy="50.6" r="1.9" fill="#eaeaea"/><circle cx="1540.4" cy="45" r="1.9" fill="#eaeaea"/>
<rect x="1556" y="41.8" width="23.6" height="12" fill="#4a4a4a"/>
<path d="M1565.4 47.2V45.8A2.4 2.4 0 0 1 1570.2 45.8V47.2" fill="none" stroke="#e8e8e8" stroke-width="1.2"/><rect x="1564" y="47.3" width="8" height="4.6" fill="#eaeaea"/>
<text x="663.7" y="1015.5" font-size="11" font-weight="bold" letter-spacing="0.1" fill="#e8e8e8">Drop Files and Devices Here</text>
<text x="1415.8" y="1047.2" font-size="18" font-weight="bold" letter-spacing="2.6" fill="#2e2e2e">1/32T</text>
</svg>
</body></html>
